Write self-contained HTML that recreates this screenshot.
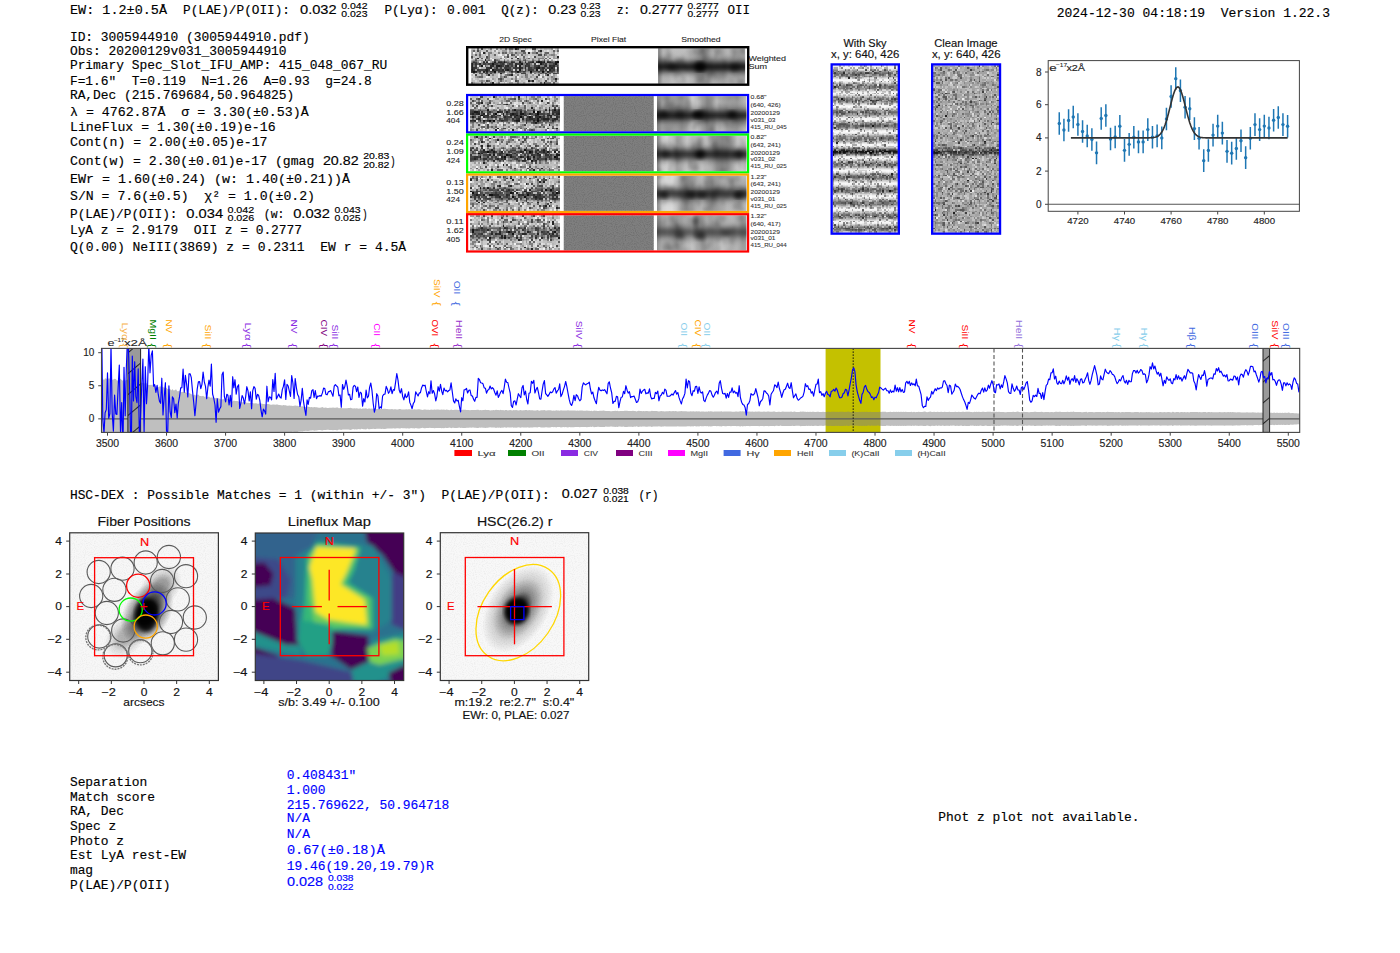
<!DOCTYPE html>
<html><head><meta charset="utf-8"><title>report</title>
<style>html,body{margin:0;padding:0;background:#fff;width:1400px;height:953px;overflow:hidden}svg{display:block} text{white-space:pre}</style>
</head><body>
<svg width="1400" height="953" viewBox="0 0 1400 953">
<rect width="1400" height="953" fill="#fff"/>
<text x="70.00" y="13.80" font-family="'Liberation Mono', monospace" font-size="12.9" fill="#000" textLength="97.00" lengthAdjust="spacingAndGlyphs" stroke="#000" stroke-width="0.15" >EW: 1.2±0.5Å</text>
<text x="183.00" y="13.80" font-family="'Liberation Mono', monospace" font-size="12.9" fill="#000" textLength="107.00" lengthAdjust="spacingAndGlyphs" stroke="#000" stroke-width="0.15" >P(LAE)/P(OII):</text>
<text x="300.00" y="13.80" font-family="'Liberation Sans', sans-serif" font-size="13.3" fill="#000" textLength="36.60" lengthAdjust="spacingAndGlyphs" stroke="#000" stroke-width="0.15" >0.032</text>
<text x="341.30" y="8.75" font-family="'Liberation Sans', sans-serif" font-size="9" fill="#000" textLength="26.20" lengthAdjust="spacingAndGlyphs" stroke="#000" stroke-width="0.15" >0.042</text>
<text x="341.30" y="16.90" font-family="'Liberation Sans', sans-serif" font-size="9" fill="#000" textLength="26.20" lengthAdjust="spacingAndGlyphs" stroke="#000" stroke-width="0.15" >0.023</text>
<text x="384.40" y="13.80" font-family="'Liberation Mono', monospace" font-size="12.9" fill="#000" textLength="53.20" lengthAdjust="spacingAndGlyphs" stroke="#000" stroke-width="0.15" >P(Lyα):</text>
<text x="446.90" y="13.80" font-family="'Liberation Mono', monospace" font-size="12.9" fill="#000" textLength="38.70" lengthAdjust="spacingAndGlyphs" stroke="#000" stroke-width="0.15" >0.001</text>
<text x="501.30" y="13.80" font-family="'Liberation Mono', monospace" font-size="12.9" fill="#000" textLength="37.30" lengthAdjust="spacingAndGlyphs" stroke="#000" stroke-width="0.15" >Q(z):</text>
<text x="548.15" y="13.80" font-family="'Liberation Sans', sans-serif" font-size="13.3" fill="#000" textLength="28.05" lengthAdjust="spacingAndGlyphs" stroke="#000" stroke-width="0.15" >0.23</text>
<text x="580.40" y="8.75" font-family="'Liberation Sans', sans-serif" font-size="9" fill="#000" textLength="20.20" lengthAdjust="spacingAndGlyphs" stroke="#000" stroke-width="0.15" >0.23</text>
<text x="580.40" y="16.90" font-family="'Liberation Sans', sans-serif" font-size="9" fill="#000" textLength="20.20" lengthAdjust="spacingAndGlyphs" stroke="#000" stroke-width="0.15" >0.23</text>
<text x="616.90" y="13.80" font-family="'Liberation Mono', monospace" font-size="12.9" fill="#000" textLength="13.10" lengthAdjust="spacingAndGlyphs" stroke="#000" stroke-width="0.15" >z:</text>
<text x="640.00" y="13.80" font-family="'Liberation Sans', sans-serif" font-size="13.3" fill="#000" textLength="43.10" lengthAdjust="spacingAndGlyphs" stroke="#000" stroke-width="0.15" >0.2777</text>
<text x="687.40" y="8.75" font-family="'Liberation Sans', sans-serif" font-size="9" fill="#000" textLength="31.20" lengthAdjust="spacingAndGlyphs" stroke="#000" stroke-width="0.15" >0.2777</text>
<text x="687.40" y="16.90" font-family="'Liberation Sans', sans-serif" font-size="9" fill="#000" textLength="31.20" lengthAdjust="spacingAndGlyphs" stroke="#000" stroke-width="0.15" >0.2777</text>
<text x="727.40" y="13.80" font-family="'Liberation Mono', monospace" font-size="12.9" fill="#000" textLength="22.60" lengthAdjust="spacingAndGlyphs" stroke="#000" stroke-width="0.15" >OII</text>
<text x="1056.65" y="16.50" font-family="'Liberation Mono', monospace" font-size="12.9" fill="#000" textLength="273.35" lengthAdjust="spacingAndGlyphs" stroke="#000" stroke-width="0.15" >2024-12-30 04:18:19  Version 1.22.3</text>
<text x="69.90" y="40.60" font-family="'Liberation Mono', monospace" font-size="12.9" fill="#000" textLength="239.94" lengthAdjust="spacingAndGlyphs" stroke="#000" stroke-width="0.15">ID: 3005944910 (3005944910.pdf)</text>
<text x="69.90" y="55.00" font-family="'Liberation Mono', monospace" font-size="12.9" fill="#000" textLength="216.72" lengthAdjust="spacingAndGlyphs" stroke="#000" stroke-width="0.15">Obs: 20200129v031_3005944910</text>
<text x="69.90" y="69.40" font-family="'Liberation Mono', monospace" font-size="12.9" fill="#000" textLength="317.34" lengthAdjust="spacingAndGlyphs" stroke="#000" stroke-width="0.15">Primary Spec_Slot_IFU_AMP: 415_048_067_RU</text>
<text x="69.90" y="84.75" font-family="'Liberation Mono', monospace" font-size="12.9" fill="#000" textLength="301.86" lengthAdjust="spacingAndGlyphs" stroke="#000" stroke-width="0.15">F=1.6"  T=0.119  N=1.26  A=0.93  g=24.8</text>
<text x="69.90" y="99.40" font-family="'Liberation Mono', monospace" font-size="12.9" fill="#000" textLength="224.46" lengthAdjust="spacingAndGlyphs" stroke="#000" stroke-width="0.15">RA,Dec (215.769684,50.964825)</text>
<text x="70.00" y="116.25" font-family="'Liberation Mono', monospace" font-size="12.9" fill="#000" textLength="238.60" lengthAdjust="spacingAndGlyphs" stroke="#000" stroke-width="0.15" >λ = 4762.87Å  σ = 3.30(±0.53)Å</text>
<text x="70.00" y="131.25" font-family="'Liberation Mono', monospace" font-size="12.9" fill="#000" textLength="205.60" lengthAdjust="spacingAndGlyphs" stroke="#000" stroke-width="0.15" >LineFlux = 1.30(±0.19)e-16</text>
<text x="70.00" y="146.25" font-family="'Liberation Mono', monospace" font-size="12.9" fill="#000" textLength="197.50" lengthAdjust="spacingAndGlyphs" stroke="#000" stroke-width="0.15" >Cont(n) = 2.00(±0.05)e-17</text>
<text x="70.00" y="164.60" font-family="'Liberation Mono', monospace" font-size="12.9" fill="#000" textLength="244.35" lengthAdjust="spacingAndGlyphs" stroke="#000" stroke-width="0.15" >Cont(w) = 2.30(±0.01)e-17 (gmag</text>
<text x="322.90" y="164.60" font-family="'Liberation Sans', sans-serif" font-size="13.3" fill="#000" textLength="35.70" lengthAdjust="spacingAndGlyphs" stroke="#000" stroke-width="0.15" >20.82</text>
<text x="363.15" y="158.75" font-family="'Liberation Sans', sans-serif" font-size="9" fill="#000" textLength="26.20" lengthAdjust="spacingAndGlyphs" stroke="#000" stroke-width="0.15" >20.83</text>
<text x="363.15" y="167.75" font-family="'Liberation Sans', sans-serif" font-size="9" fill="#000" textLength="26.20" lengthAdjust="spacingAndGlyphs" stroke="#000" stroke-width="0.15" >20.82</text>
<text x="390.00" y="164.60" font-family="'Liberation Mono', monospace" font-size="12.9" fill="#000" textLength="5.60" lengthAdjust="spacingAndGlyphs" stroke="#000" stroke-width="0.15" >)</text>
<text x="70.00" y="182.50" font-family="'Liberation Mono', monospace" font-size="12.9" fill="#000" textLength="280.00" lengthAdjust="spacingAndGlyphs" stroke="#000" stroke-width="0.15" >EWr = 1.60(±0.24) (w: 1.40(±0.21))Å</text>
<text x="70.00" y="200.00" font-family="'Liberation Mono', monospace" font-size="12.9" fill="#000" textLength="245.00" lengthAdjust="spacingAndGlyphs" stroke="#000" stroke-width="0.15" >S/N = 7.6(±0.5)  χ² = 1.0(±0.2)</text>
<text x="70.00" y="217.50" font-family="'Liberation Mono', monospace" font-size="12.9" fill="#000" textLength="107.50" lengthAdjust="spacingAndGlyphs" stroke="#000" stroke-width="0.15" >P(LAE)/P(OII):</text>
<text x="186.30" y="217.50" font-family="'Liberation Sans', sans-serif" font-size="13.3" fill="#000" textLength="36.80" lengthAdjust="spacingAndGlyphs" stroke="#000" stroke-width="0.15" >0.034</text>
<text x="227.40" y="212.50" font-family="'Liberation Sans', sans-serif" font-size="9" fill="#000" textLength="26.95" lengthAdjust="spacingAndGlyphs" stroke="#000" stroke-width="0.15" >0.042</text>
<text x="227.40" y="221.25" font-family="'Liberation Sans', sans-serif" font-size="9" fill="#000" textLength="26.95" lengthAdjust="spacingAndGlyphs" stroke="#000" stroke-width="0.15" >0.026</text>
<text x="263.80" y="217.50" font-family="'Liberation Mono', monospace" font-size="12.9" fill="#000" textLength="20.55" lengthAdjust="spacingAndGlyphs" stroke="#000" stroke-width="0.15" >(w:</text>
<text x="293.15" y="217.50" font-family="'Liberation Sans', sans-serif" font-size="13.3" fill="#000" textLength="36.85" lengthAdjust="spacingAndGlyphs" stroke="#000" stroke-width="0.15" >0.032</text>
<text x="334.40" y="212.50" font-family="'Liberation Sans', sans-serif" font-size="9" fill="#000" textLength="26.20" lengthAdjust="spacingAndGlyphs" stroke="#000" stroke-width="0.15" >0.043</text>
<text x="334.40" y="221.25" font-family="'Liberation Sans', sans-serif" font-size="9" fill="#000" textLength="26.20" lengthAdjust="spacingAndGlyphs" stroke="#000" stroke-width="0.15" >0.025</text>
<text x="361.90" y="217.50" font-family="'Liberation Mono', monospace" font-size="12.9" fill="#000" textLength="5.60" lengthAdjust="spacingAndGlyphs" stroke="#000" stroke-width="0.15" >)</text>
<text x="69.90" y="234.40" font-family="'Liberation Mono', monospace" font-size="12.9" fill="#000" textLength="232.20" lengthAdjust="spacingAndGlyphs" stroke="#000" stroke-width="0.15">LyA z = 2.9179  OII z = 0.2777</text>
<text x="70.00" y="251.25" font-family="'Liberation Mono', monospace" font-size="12.9" fill="#000" textLength="336.20" lengthAdjust="spacingAndGlyphs" stroke="#000" stroke-width="0.15" >Q(0.00) NeIII(3869) z = 0.2311  EW r = 4.5Å</text>
<defs>
<filter id="fnDark" x="0" y="0" width="100%" height="100%" color-interpolation-filters="sRGB">
 <feTurbulence type="fractalNoise" baseFrequency="0.5" numOctaves="1" seed="4" result="t"/>
 <feColorMatrix in="t" type="matrix" values="0 0 0 0 0  0 0 0 0 0  0 0 0 0 0  -5 0 0 0 2.6"/>
 <feComposite in2="SourceAlpha" operator="in"/>
</filter>
<filter id="fnLight" x="0" y="0" width="100%" height="100%" color-interpolation-filters="sRGB">
 <feTurbulence type="fractalNoise" baseFrequency="0.5" numOctaves="1" seed="9" result="t"/>
 <feColorMatrix in="t" type="matrix" values="0 0 0 0 1  0 0 0 0 1  0 0 0 0 1  -5 0 0 0 2.6"/>
 <feComposite in2="SourceAlpha" operator="in"/>
</filter>
<filter id="fnFine" x="0" y="0" width="100%" height="100%" color-interpolation-filters="sRGB">
 <feTurbulence type="fractalNoise" baseFrequency="0.9" numOctaves="1" seed="2" result="t"/>
 <feColorMatrix in="t" type="matrix" values="0 0 0 0 0  0 0 0 0 0  0 0 0 0 0  -3 0 0 0 1.7"/>
 <feComposite in2="SourceAlpha" operator="in"/>
</filter>
<filter id="fnSmooth" x="0" y="0" width="100%" height="100%" color-interpolation-filters="sRGB">
 <feTurbulence type="fractalNoise" baseFrequency="0.11 0.07" numOctaves="2" seed="7" result="t"/>
 <feColorMatrix in="t" type="matrix" values="0 0 0 0 0  0 0 0 0 0  0 0 0 0 0  -2.2 0 0 0 1.25"/>
 <feGaussianBlur stdDeviation="1.6"/>
 <feComposite in2="SourceAlpha" operator="in"/>
</filter>
<filter id="blur1"><feGaussianBlur stdDeviation="1.2"/></filter>
<filter id="blur2"><feGaussianBlur stdDeviation="2"/></filter>
<filter id="blur3"><feGaussianBlur stdDeviation="3.5"/></filter>
<pattern id="hatch" width="16" height="16" patternUnits="userSpaceOnUse" patternTransform="rotate(50)">
 <rect width="16" height="16" fill="#9a9a9a"/>
 <line x1="0.5" y1="0" x2="0.5" y2="16" stroke="#222" stroke-width="1"/>
</pattern>
</defs>
<text x="499.15" y="41.75" font-family="'Liberation Sans', sans-serif" font-size="7.6" fill="#222" textLength="32.70" lengthAdjust="spacingAndGlyphs" stroke="#222" stroke-width="0.09" >2D Spec</text>
<text x="591.10" y="41.75" font-family="'Liberation Sans', sans-serif" font-size="7.6" fill="#222" textLength="35.10" lengthAdjust="spacingAndGlyphs" stroke="#222" stroke-width="0.09" >Pixel Flat</text>
<text x="681.30" y="41.75" font-family="'Liberation Sans', sans-serif" font-size="7.6" fill="#222" textLength="39.30" lengthAdjust="spacingAndGlyphs" stroke="#222" stroke-width="0.09" >Smoothed</text>
<text x="748.40" y="61.00" font-family="'Liberation Sans', sans-serif" font-size="7.8" fill="#222" textLength="37.70" lengthAdjust="spacingAndGlyphs" stroke="#222" stroke-width="0.09" >Weighted</text>
<text x="748.40" y="69.25" font-family="'Liberation Sans', sans-serif" font-size="7.8" fill="#222" textLength="18.70" lengthAdjust="spacingAndGlyphs" stroke="#222" stroke-width="0.09" >Sum</text>
<linearGradient id="gWS" x1="0" y1="0" x2="0" y2="1"><stop offset="0" stop-color="#b8b8b8"/><stop offset="0.320" stop-color="#b8b8b8"/><stop offset="0.400" stop-color="#404040"/><stop offset="0.640" stop-color="#404040"/><stop offset="0.720" stop-color="#b8b8b8"/><stop offset="1" stop-color="#b8b8b8"/></linearGradient>
<rect x="471.25" y="48.2" width="87.5" height="35.599999999999994" fill="url(#gWS)"/>
<g transform="translate(471.25 48.20) scale(1.9022 1.8737)" shape-rendering="crispEdges"><path fill="#fff" fill-opacity="0.45" d="M2 0h1v1h-1zM8 0h1v1h-1zM11 0h1v1h-1zM31 0h1v1h-1zM35 0h1v1h-1zM11 1h1v1h-1zM19 1h1v1h-1zM22 1h1v1h-1zM34 1h1v1h-1zM38 1h1v1h-1zM29 2h1v1h-1zM37 2h1v1h-1zM8 3h1v1h-1zM7 4h1v1h-1zM32 4h1v1h-1zM39 4h1v1h-1zM1 5h1v1h-1zM6 5h1v1h-1zM20 5h1v1h-1zM23 5h1v1h-1zM40 5h1v1h-1zM6 6h1v1h-1zM16 6h1v1h-1zM20 6h1v1h-1zM5 7h1v1h-1zM7 7h1v1h-1zM10 7h1v1h-1zM23 7h1v1h-1zM24 7h1v1h-1zM27 7h1v1h-1zM29 7h1v1h-1zM33 7h1v1h-1zM39 7h1v1h-1zM22 8h1v1h-1zM40 8h1v1h-1zM8 9h1v1h-1zM26 9h1v1h-1zM40 9h1v1h-1zM11 10h1v1h-1zM16 10h1v1h-1zM29 10h1v1h-1zM2 11h1v1h-1zM38 11h1v1h-1zM44 11h1v1h-1zM5 12h1v1h-1zM18 12h1v1h-1zM1 14h1v1h-1zM36 14h1v1h-1zM0 15h1v1h-1zM20 15h1v1h-1zM35 15h1v1h-1zM39 15h1v1h-1zM45 15h1v1h-1zM1 16h1v1h-1zM6 16h1v1h-1zM10 16h1v1h-1zM39 16h1v1h-1zM2 17h1v1h-1zM11 17h1v1h-1zM22 17h1v1h-1zM29 17h1v1h-1zM33 17h1v1h-1zM41 17h1v1h-1zM12 18h1v1h-1zM15 18h1v1h-1zM16 18h1v1h-1zM29 18h1v1h-1zM31 18h1v1h-1zM42 18h1v1h-1z"/><path fill="#000" fill-opacity="0.45" d="M3 0h1v1h-1zM18 0h1v1h-1zM20 0h1v1h-1zM21 0h1v1h-1zM1 1h1v1h-1zM8 1h1v1h-1zM35 1h1v1h-1zM43 1h1v1h-1zM45 1h1v1h-1zM16 2h1v1h-1zM18 2h1v1h-1zM23 2h1v1h-1zM27 2h1v1h-1zM28 2h1v1h-1zM39 2h1v1h-1zM40 2h1v1h-1zM2 3h1v1h-1zM4 3h1v1h-1zM12 3h1v1h-1zM19 3h1v1h-1zM22 3h1v1h-1zM26 3h1v1h-1zM23 4h1v1h-1zM27 4h1v1h-1zM5 5h1v1h-1zM8 5h1v1h-1zM30 5h1v1h-1zM39 5h1v1h-1zM41 5h1v1h-1zM2 6h1v1h-1zM28 6h1v1h-1zM38 6h1v1h-1zM12 7h1v1h-1zM32 7h1v1h-1zM34 7h1v1h-1zM40 7h1v1h-1zM0 8h1v1h-1zM0 9h1v1h-1zM13 9h1v1h-1zM23 9h1v1h-1zM25 9h1v1h-1zM0 10h1v1h-1zM10 10h1v1h-1zM25 10h1v1h-1zM34 10h1v1h-1zM42 10h1v1h-1zM8 11h1v1h-1zM41 11h1v1h-1zM21 12h1v1h-1zM4 13h1v1h-1zM5 13h1v1h-1zM7 13h1v1h-1zM31 13h1v1h-1zM36 13h1v1h-1zM41 13h1v1h-1zM45 13h1v1h-1zM19 14h1v1h-1zM28 14h1v1h-1zM4 15h1v1h-1zM5 15h1v1h-1zM18 15h1v1h-1zM14 16h1v1h-1zM9 17h1v1h-1zM15 17h1v1h-1zM24 17h1v1h-1zM31 17h1v1h-1zM44 17h1v1h-1zM0 18h1v1h-1zM5 18h1v1h-1zM36 18h1v1h-1zM43 18h1v1h-1z"/><path fill="#fff" fill-opacity="0.3" d="M4 0h1v1h-1zM14 0h1v1h-1zM26 0h1v1h-1zM27 0h1v1h-1zM29 0h1v1h-1zM37 0h1v1h-1zM44 0h1v1h-1zM5 1h1v1h-1zM9 1h1v1h-1zM15 1h1v1h-1zM39 1h1v1h-1zM41 1h1v1h-1zM8 2h1v1h-1zM12 2h1v1h-1zM13 2h1v1h-1zM15 2h1v1h-1zM41 2h1v1h-1zM6 3h1v1h-1zM13 3h1v1h-1zM25 3h1v1h-1zM30 3h1v1h-1zM31 3h1v1h-1zM2 4h1v1h-1zM14 4h1v1h-1zM20 4h1v1h-1zM26 4h1v1h-1zM41 4h1v1h-1zM42 4h1v1h-1zM4 5h1v1h-1zM16 5h1v1h-1zM22 5h1v1h-1zM15 6h1v1h-1zM18 6h1v1h-1zM31 6h1v1h-1zM36 6h1v1h-1zM39 6h1v1h-1zM45 6h1v1h-1zM3 7h1v1h-1zM13 7h1v1h-1zM20 7h1v1h-1zM5 8h1v1h-1zM27 8h1v1h-1zM28 8h1v1h-1zM31 8h1v1h-1zM1 9h1v1h-1zM12 9h1v1h-1zM17 9h1v1h-1zM22 9h1v1h-1zM27 9h1v1h-1zM31 9h1v1h-1zM32 9h1v1h-1zM36 9h1v1h-1zM37 9h1v1h-1zM3 10h1v1h-1zM14 10h1v1h-1zM21 10h1v1h-1zM27 10h1v1h-1zM39 10h1v1h-1zM17 11h1v1h-1zM26 11h1v1h-1zM29 11h1v1h-1zM33 11h1v1h-1zM13 12h1v1h-1zM19 12h1v1h-1zM29 12h1v1h-1zM30 12h1v1h-1zM44 12h1v1h-1zM2 13h1v1h-1zM14 13h1v1h-1zM25 13h1v1h-1zM42 13h1v1h-1zM16 14h1v1h-1zM25 14h1v1h-1zM33 14h1v1h-1zM1 15h1v1h-1zM21 15h1v1h-1zM22 15h1v1h-1zM4 16h1v1h-1zM13 16h1v1h-1zM17 16h1v1h-1zM24 16h1v1h-1zM26 16h1v1h-1zM31 16h1v1h-1zM32 16h1v1h-1zM37 16h1v1h-1zM13 17h1v1h-1zM25 17h1v1h-1zM28 17h1v1h-1zM37 17h1v1h-1zM22 18h1v1h-1zM33 18h1v1h-1z"/><path fill="#000" fill-opacity="0.6" d="M5 0h1v1h-1zM24 0h1v1h-1zM32 0h1v1h-1zM33 0h1v1h-1zM3 1h1v1h-1zM26 1h1v1h-1zM27 1h1v1h-1zM34 2h1v1h-1zM21 3h1v1h-1zM35 3h1v1h-1zM36 3h1v1h-1zM38 3h1v1h-1zM0 4h1v1h-1zM8 4h1v1h-1zM19 4h1v1h-1zM33 4h1v1h-1zM21 5h1v1h-1zM12 6h1v1h-1zM17 7h1v1h-1zM25 7h1v1h-1zM36 7h1v1h-1zM38 7h1v1h-1zM44 7h1v1h-1zM11 8h1v1h-1zM26 8h1v1h-1zM36 8h1v1h-1zM44 8h1v1h-1zM5 9h1v1h-1zM14 9h1v1h-1zM35 10h1v1h-1zM0 11h1v1h-1zM11 11h1v1h-1zM19 11h1v1h-1zM25 11h1v1h-1zM34 11h1v1h-1zM0 12h1v1h-1zM2 12h1v1h-1zM6 12h1v1h-1zM8 12h1v1h-1zM40 12h1v1h-1zM8 13h1v1h-1zM10 13h1v1h-1zM26 13h1v1h-1zM27 13h1v1h-1zM28 13h1v1h-1zM39 13h1v1h-1zM43 13h1v1h-1zM44 13h1v1h-1zM2 14h1v1h-1zM20 14h1v1h-1zM35 14h1v1h-1zM17 15h1v1h-1zM34 15h1v1h-1zM15 16h1v1h-1zM8 17h1v1h-1zM23 17h1v1h-1zM39 17h1v1h-1z"/><path fill="#000" fill-opacity="0.3" d="M10 0h1v1h-1zM13 0h1v1h-1zM4 2h1v1h-1zM7 2h1v1h-1zM9 2h1v1h-1zM10 2h1v1h-1zM14 2h1v1h-1zM17 2h1v1h-1zM21 2h1v1h-1zM32 2h1v1h-1zM33 2h1v1h-1zM9 3h1v1h-1zM39 3h1v1h-1zM42 3h1v1h-1zM43 3h1v1h-1zM4 4h1v1h-1zM9 4h1v1h-1zM17 4h1v1h-1zM0 5h1v1h-1zM2 5h1v1h-1zM9 5h1v1h-1zM15 5h1v1h-1zM27 5h1v1h-1zM35 5h1v1h-1zM36 5h1v1h-1zM37 5h1v1h-1zM45 5h1v1h-1zM9 6h1v1h-1zM13 6h1v1h-1zM17 6h1v1h-1zM24 6h1v1h-1zM25 6h1v1h-1zM27 6h1v1h-1zM32 6h1v1h-1zM35 6h1v1h-1zM6 7h1v1h-1zM8 7h1v1h-1zM14 7h1v1h-1zM15 7h1v1h-1zM21 7h1v1h-1zM28 7h1v1h-1zM37 7h1v1h-1zM41 7h1v1h-1zM4 8h1v1h-1zM23 8h1v1h-1zM10 9h1v1h-1zM11 9h1v1h-1zM15 9h1v1h-1zM19 9h1v1h-1zM28 9h1v1h-1zM35 9h1v1h-1zM39 9h1v1h-1zM41 9h1v1h-1zM43 9h1v1h-1zM13 10h1v1h-1zM28 10h1v1h-1zM37 10h1v1h-1zM45 10h1v1h-1zM7 11h1v1h-1zM16 11h1v1h-1zM18 11h1v1h-1zM45 11h1v1h-1zM4 12h1v1h-1zM10 12h1v1h-1zM11 12h1v1h-1zM14 12h1v1h-1zM15 12h1v1h-1zM16 12h1v1h-1zM17 12h1v1h-1zM23 12h1v1h-1zM25 12h1v1h-1zM27 12h1v1h-1zM35 12h1v1h-1zM41 12h1v1h-1zM42 12h1v1h-1zM45 12h1v1h-1zM1 13h1v1h-1zM12 13h1v1h-1zM21 13h1v1h-1zM33 13h1v1h-1zM37 13h1v1h-1zM5 14h1v1h-1zM8 14h1v1h-1zM11 14h1v1h-1zM18 14h1v1h-1zM24 14h1v1h-1zM29 14h1v1h-1zM39 14h1v1h-1zM3 15h1v1h-1zM15 15h1v1h-1zM23 15h1v1h-1zM28 15h1v1h-1zM29 15h1v1h-1zM37 15h1v1h-1zM42 15h1v1h-1zM16 16h1v1h-1zM21 16h1v1h-1zM23 16h1v1h-1zM33 16h1v1h-1zM40 16h1v1h-1zM43 16h1v1h-1zM5 17h1v1h-1zM7 18h1v1h-1zM10 18h1v1h-1zM14 18h1v1h-1zM24 18h1v1h-1zM39 18h1v1h-1zM40 18h1v1h-1zM41 18h1v1h-1z"/><path fill="#fff" fill-opacity="0.6" d="M12 0h1v1h-1zM30 0h1v1h-1zM13 1h1v1h-1zM40 1h1v1h-1zM44 2h1v1h-1zM14 3h1v1h-1zM18 3h1v1h-1zM20 3h1v1h-1zM45 3h1v1h-1zM30 4h1v1h-1zM10 5h1v1h-1zM17 5h1v1h-1zM19 5h1v1h-1zM42 5h1v1h-1zM41 6h1v1h-1zM43 6h1v1h-1zM18 8h1v1h-1zM32 8h1v1h-1zM35 8h1v1h-1zM9 9h1v1h-1zM5 10h1v1h-1zM6 10h1v1h-1zM7 10h1v1h-1zM24 11h1v1h-1zM27 11h1v1h-1zM35 11h1v1h-1zM0 13h1v1h-1zM32 13h1v1h-1zM14 14h1v1h-1zM42 14h1v1h-1zM9 15h1v1h-1zM14 15h1v1h-1zM7 16h1v1h-1zM45 17h1v1h-1zM18 18h1v1h-1z"/><path fill="#000" fill-opacity="0.15" d="M15 0h1v1h-1zM22 0h1v1h-1zM28 0h1v1h-1zM42 0h1v1h-1zM45 0h1v1h-1zM0 1h1v1h-1zM4 1h1v1h-1zM12 1h1v1h-1zM16 1h1v1h-1zM17 1h1v1h-1zM18 1h1v1h-1zM20 1h1v1h-1zM33 1h1v1h-1zM0 2h1v1h-1zM20 2h1v1h-1zM24 2h1v1h-1zM25 2h1v1h-1zM26 2h1v1h-1zM36 2h1v1h-1zM38 2h1v1h-1zM43 2h1v1h-1zM0 3h1v1h-1zM24 3h1v1h-1zM28 3h1v1h-1zM41 3h1v1h-1zM18 4h1v1h-1zM37 4h1v1h-1zM38 4h1v1h-1zM40 4h1v1h-1zM43 4h1v1h-1zM25 5h1v1h-1zM29 5h1v1h-1zM32 5h1v1h-1zM43 5h1v1h-1zM44 5h1v1h-1zM8 6h1v1h-1zM14 6h1v1h-1zM40 6h1v1h-1zM1 7h1v1h-1zM22 7h1v1h-1zM31 7h1v1h-1zM2 8h1v1h-1zM16 8h1v1h-1zM25 8h1v1h-1zM29 8h1v1h-1zM18 9h1v1h-1zM30 9h1v1h-1zM42 9h1v1h-1zM1 10h1v1h-1zM2 10h1v1h-1zM8 10h1v1h-1zM9 10h1v1h-1zM18 10h1v1h-1zM23 10h1v1h-1zM26 10h1v1h-1zM30 10h1v1h-1zM38 10h1v1h-1zM41 10h1v1h-1zM1 11h1v1h-1zM3 11h1v1h-1zM12 11h1v1h-1zM13 11h1v1h-1zM14 11h1v1h-1zM30 11h1v1h-1zM31 11h1v1h-1zM37 11h1v1h-1zM43 11h1v1h-1zM28 12h1v1h-1zM38 12h1v1h-1zM9 13h1v1h-1zM11 13h1v1h-1zM16 13h1v1h-1zM23 13h1v1h-1zM35 13h1v1h-1zM38 13h1v1h-1zM40 13h1v1h-1zM15 14h1v1h-1zM32 14h1v1h-1zM43 14h1v1h-1zM2 15h1v1h-1zM16 15h1v1h-1zM26 15h1v1h-1zM31 15h1v1h-1zM43 15h1v1h-1zM11 16h1v1h-1zM29 16h1v1h-1zM30 16h1v1h-1zM34 16h1v1h-1zM42 16h1v1h-1zM45 16h1v1h-1zM4 17h1v1h-1zM6 17h1v1h-1zM14 17h1v1h-1zM16 17h1v1h-1zM18 17h1v1h-1zM35 17h1v1h-1zM42 17h1v1h-1zM1 18h1v1h-1zM20 18h1v1h-1zM21 18h1v1h-1zM27 18h1v1h-1z"/><path fill="#000" fill-opacity="0.8" d="M23 0h1v1h-1zM36 1h1v1h-1zM6 2h1v1h-1zM30 2h1v1h-1zM45 4h1v1h-1zM3 5h1v1h-1zM24 5h1v1h-1zM7 6h1v1h-1zM35 7h1v1h-1zM45 7h1v1h-1zM1 12h1v1h-1zM12 12h1v1h-1zM24 12h1v1h-1zM31 12h1v1h-1zM37 12h1v1h-1zM15 13h1v1h-1zM9 14h1v1h-1zM21 14h1v1h-1zM40 14h1v1h-1zM44 16h1v1h-1zM30 17h1v1h-1zM32 17h1v1h-1zM11 18h1v1h-1zM38 18h1v1h-1z"/><path fill="#fff" fill-opacity="0.15" d="M34 0h1v1h-1zM40 0h1v1h-1zM2 1h1v1h-1zM6 1h1v1h-1zM7 1h1v1h-1zM14 1h1v1h-1zM23 1h1v1h-1zM25 1h1v1h-1zM28 1h1v1h-1zM32 1h1v1h-1zM37 1h1v1h-1zM42 1h1v1h-1zM3 2h1v1h-1zM11 2h1v1h-1zM19 2h1v1h-1zM31 2h1v1h-1zM42 2h1v1h-1zM45 2h1v1h-1zM1 3h1v1h-1zM5 3h1v1h-1zM10 3h1v1h-1zM17 3h1v1h-1zM32 3h1v1h-1zM33 3h1v1h-1zM37 3h1v1h-1zM3 4h1v1h-1zM6 4h1v1h-1zM10 4h1v1h-1zM11 4h1v1h-1zM13 4h1v1h-1zM15 4h1v1h-1zM25 4h1v1h-1zM28 4h1v1h-1zM29 4h1v1h-1zM31 4h1v1h-1zM26 5h1v1h-1zM38 5h1v1h-1zM0 6h1v1h-1zM4 6h1v1h-1zM10 6h1v1h-1zM22 6h1v1h-1zM26 6h1v1h-1zM30 6h1v1h-1zM34 6h1v1h-1zM0 7h1v1h-1zM11 7h1v1h-1zM19 7h1v1h-1zM26 7h1v1h-1zM43 7h1v1h-1zM1 8h1v1h-1zM3 8h1v1h-1zM8 8h1v1h-1zM14 8h1v1h-1zM17 8h1v1h-1zM19 8h1v1h-1zM38 8h1v1h-1zM41 8h1v1h-1zM42 8h1v1h-1zM45 8h1v1h-1zM4 9h1v1h-1zM7 9h1v1h-1zM20 9h1v1h-1zM44 9h1v1h-1zM12 10h1v1h-1zM32 10h1v1h-1zM21 11h1v1h-1zM39 12h1v1h-1zM3 13h1v1h-1zM13 13h1v1h-1zM17 13h1v1h-1zM24 13h1v1h-1zM30 13h1v1h-1zM3 14h1v1h-1zM4 14h1v1h-1zM6 14h1v1h-1zM7 14h1v1h-1zM13 14h1v1h-1zM23 14h1v1h-1zM30 14h1v1h-1zM31 14h1v1h-1zM34 14h1v1h-1zM41 14h1v1h-1zM7 15h1v1h-1zM10 15h1v1h-1zM12 15h1v1h-1zM19 15h1v1h-1zM25 15h1v1h-1zM30 15h1v1h-1zM38 15h1v1h-1zM44 15h1v1h-1zM2 16h1v1h-1zM5 16h1v1h-1zM8 16h1v1h-1zM9 16h1v1h-1zM18 16h1v1h-1zM27 16h1v1h-1zM35 16h1v1h-1zM41 16h1v1h-1zM1 17h1v1h-1zM3 17h1v1h-1zM7 17h1v1h-1zM17 17h1v1h-1zM27 17h1v1h-1zM40 17h1v1h-1zM4 18h1v1h-1zM6 18h1v1h-1zM9 18h1v1h-1zM19 18h1v1h-1zM26 18h1v1h-1zM28 18h1v1h-1zM45 18h1v1h-1z"/><path fill="#fff" fill-opacity="0.8" d="M43 0h1v1h-1zM29 1h1v1h-1zM30 1h1v1h-1zM31 1h1v1h-1zM1 2h1v1h-1zM5 2h1v1h-1zM15 3h1v1h-1zM16 4h1v1h-1zM24 4h1v1h-1zM11 6h1v1h-1zM44 6h1v1h-1zM4 7h1v1h-1zM9 7h1v1h-1zM34 8h1v1h-1zM3 9h1v1h-1zM6 9h1v1h-1zM24 9h1v1h-1zM4 10h1v1h-1zM44 10h1v1h-1zM10 11h1v1h-1zM22 11h1v1h-1zM40 11h1v1h-1zM18 13h1v1h-1zM22 13h1v1h-1zM38 14h1v1h-1zM45 14h1v1h-1zM8 15h1v1h-1zM24 15h1v1h-1zM36 15h1v1h-1zM21 17h1v1h-1z"/></g>
<linearGradient id="smWs" x1="0" y1="0" x2="1" y2="0"><stop offset="0.000" stop-color="#818181"/><stop offset="0.057" stop-color="#b6b6b6"/><stop offset="0.115" stop-color="#b7b7b7"/><stop offset="0.172" stop-color="#c0c0c0"/><stop offset="0.230" stop-color="#bfbfbf"/><stop offset="0.287" stop-color="#bebebe"/><stop offset="0.345" stop-color="#c3c3c3"/><stop offset="0.402" stop-color="#b5b5b5"/><stop offset="0.460" stop-color="#a0a0a0"/><stop offset="0.517" stop-color="#929292"/><stop offset="0.575" stop-color="#9b9b9b"/><stop offset="0.632" stop-color="#b2b2b2"/><stop offset="0.690" stop-color="#acacac"/><stop offset="0.747" stop-color="#a9a9a9"/><stop offset="0.805" stop-color="#b7b7b7"/><stop offset="0.862" stop-color="#aeaeae"/><stop offset="0.920" stop-color="#a3a3a3"/><stop offset="0.977" stop-color="#a9a9a9"/><stop offset="1.000" stop-color="#b5b5b5"/><stop offset="1.000" stop-color="#8d8d8d"/></linearGradient>
<linearGradient id="smWb" x1="0" y1="0" x2="0" y2="1"><stop offset="0.000" stop-color="#000" stop-opacity="0.000"/><stop offset="0.050" stop-color="#000" stop-opacity="0.001"/><stop offset="0.100" stop-color="#000" stop-opacity="0.004"/><stop offset="0.150" stop-color="#000" stop-opacity="0.014"/><stop offset="0.200" stop-color="#000" stop-opacity="0.039"/><stop offset="0.250" stop-color="#000" stop-opacity="0.093"/><stop offset="0.300" stop-color="#000" stop-opacity="0.191"/><stop offset="0.350" stop-color="#000" stop-opacity="0.340"/><stop offset="0.400" stop-color="#000" stop-opacity="0.522"/><stop offset="0.450" stop-color="#000" stop-opacity="0.692"/><stop offset="0.500" stop-color="#000" stop-opacity="0.791"/><stop offset="0.550" stop-color="#000" stop-opacity="0.779"/><stop offset="0.600" stop-color="#000" stop-opacity="0.662"/><stop offset="0.650" stop-color="#000" stop-opacity="0.485"/><stop offset="0.700" stop-color="#000" stop-opacity="0.307"/><stop offset="0.750" stop-color="#000" stop-opacity="0.167"/><stop offset="0.800" stop-color="#000" stop-opacity="0.079"/><stop offset="0.850" stop-color="#000" stop-opacity="0.032"/><stop offset="0.900" stop-color="#000" stop-opacity="0.011"/><stop offset="0.950" stop-color="#000" stop-opacity="0.003"/><stop offset="1.000" stop-color="#000" stop-opacity="0.001"/></linearGradient>
<rect x="658.1" y="48.2" width="87" height="35.599999999999994" fill="url(#smWs)"/>
<rect x="658.1" y="48.2" width="87" height="35.599999999999994" fill="#000" filter="url(#fnSmooth)" opacity="0.3"/>
<rect x="658.1" y="48.2" width="87" height="35.599999999999994" fill="url(#smWb)"/>
<svg x="658.1" y="48.2" width="87" height="35.599999999999994" overflow="hidden"><g filter="url(#blur2)"><ellipse cx="41.9" cy="18.5" rx="6" ry="5" fill="#000" opacity="0.9"/><ellipse cx="13.9" cy="18.8" rx="5" ry="3.5" fill="#000" opacity="0.5"/><ellipse cx="76.9" cy="18.8" rx="5" ry="3.5" fill="#000" opacity="0.5"/></g></svg>
<rect x="467.2" y="47.2" width="281.0" height="37.50000000000001" fill="none" stroke="#000" stroke-width="2.4"/>
<linearGradient id="g2d0" x1="0" y1="0" x2="0" y2="1"><stop offset="0" stop-color="#b5b5b5"/><stop offset="0.360" stop-color="#b5b5b5"/><stop offset="0.440" stop-color="#404040"/><stop offset="0.700" stop-color="#404040"/><stop offset="0.780" stop-color="#b5b5b5"/><stop offset="1" stop-color="#b5b5b5"/></linearGradient>
<rect x="470" y="96.10000000000001" width="90" height="35.2" fill="url(#g2d0)"/>
<g transform="translate(470.00 96.10) scale(1.9149 1.8526)" shape-rendering="crispEdges"><path fill="#fff" fill-opacity="0.3" d="M0 0h1v1h-1zM9 0h1v1h-1zM16 0h1v1h-1zM19 0h1v1h-1zM20 0h1v1h-1zM26 0h1v1h-1zM30 0h1v1h-1zM38 0h1v1h-1zM45 0h1v1h-1zM2 1h1v1h-1zM24 1h1v1h-1zM30 1h1v1h-1zM42 1h1v1h-1zM43 1h1v1h-1zM46 1h1v1h-1zM24 2h1v1h-1zM34 2h1v1h-1zM36 2h1v1h-1zM38 2h1v1h-1zM39 2h1v1h-1zM42 2h1v1h-1zM7 3h1v1h-1zM11 3h1v1h-1zM25 3h1v1h-1zM37 3h1v1h-1zM39 3h1v1h-1zM46 3h1v1h-1zM3 4h1v1h-1zM6 4h1v1h-1zM10 4h1v1h-1zM22 4h1v1h-1zM24 4h1v1h-1zM25 4h1v1h-1zM34 4h1v1h-1zM36 4h1v1h-1zM42 4h1v1h-1zM44 4h1v1h-1zM45 4h1v1h-1zM2 5h1v1h-1zM4 5h1v1h-1zM8 5h1v1h-1zM14 5h1v1h-1zM15 5h1v1h-1zM23 5h1v1h-1zM0 6h1v1h-1zM11 6h1v1h-1zM29 6h1v1h-1zM38 6h1v1h-1zM43 6h1v1h-1zM45 6h1v1h-1zM10 7h1v1h-1zM17 7h1v1h-1zM34 7h1v1h-1zM35 7h1v1h-1zM37 7h1v1h-1zM40 7h1v1h-1zM7 8h1v1h-1zM12 8h1v1h-1zM13 8h1v1h-1zM21 8h1v1h-1zM27 8h1v1h-1zM30 8h1v1h-1zM31 8h1v1h-1zM5 9h1v1h-1zM16 9h1v1h-1zM13 10h1v1h-1zM32 10h1v1h-1zM36 10h1v1h-1zM37 10h1v1h-1zM43 10h1v1h-1zM14 11h1v1h-1zM15 11h1v1h-1zM29 11h1v1h-1zM39 11h1v1h-1zM41 11h1v1h-1zM10 12h1v1h-1zM11 12h1v1h-1zM17 12h1v1h-1zM21 12h1v1h-1zM28 12h1v1h-1zM46 12h1v1h-1zM6 13h1v1h-1zM20 13h1v1h-1zM21 13h1v1h-1zM28 13h1v1h-1zM45 13h1v1h-1zM13 14h1v1h-1zM23 14h1v1h-1zM28 14h1v1h-1zM45 14h1v1h-1zM0 15h1v1h-1zM10 15h1v1h-1zM25 15h1v1h-1zM29 15h1v1h-1zM3 16h1v1h-1zM21 16h1v1h-1zM29 16h1v1h-1zM41 16h1v1h-1zM42 16h1v1h-1zM1 17h1v1h-1zM10 17h1v1h-1zM25 17h1v1h-1zM35 17h1v1h-1zM36 17h1v1h-1zM42 17h1v1h-1zM46 17h1v1h-1zM7 18h1v1h-1zM11 18h1v1h-1zM29 18h1v1h-1zM41 18h1v1h-1zM42 18h1v1h-1z"/><path fill="#fff" fill-opacity="0.15" d="M1 0h1v1h-1zM2 0h1v1h-1zM3 0h1v1h-1zM14 0h1v1h-1zM24 0h1v1h-1zM28 0h1v1h-1zM34 0h1v1h-1zM41 0h1v1h-1zM46 0h1v1h-1zM1 1h1v1h-1zM8 1h1v1h-1zM12 1h1v1h-1zM15 1h1v1h-1zM28 1h1v1h-1zM13 2h1v1h-1zM14 2h1v1h-1zM21 2h1v1h-1zM1 3h1v1h-1zM22 3h1v1h-1zM29 3h1v1h-1zM5 4h1v1h-1zM7 4h1v1h-1zM31 4h1v1h-1zM37 4h1v1h-1zM41 4h1v1h-1zM0 5h1v1h-1zM6 5h1v1h-1zM13 5h1v1h-1zM17 5h1v1h-1zM26 5h1v1h-1zM31 5h1v1h-1zM39 5h1v1h-1zM40 5h1v1h-1zM6 6h1v1h-1zM13 6h1v1h-1zM15 6h1v1h-1zM20 6h1v1h-1zM22 6h1v1h-1zM23 6h1v1h-1zM30 6h1v1h-1zM35 6h1v1h-1zM40 6h1v1h-1zM3 7h1v1h-1zM11 7h1v1h-1zM19 7h1v1h-1zM21 7h1v1h-1zM38 7h1v1h-1zM11 8h1v1h-1zM18 8h1v1h-1zM22 8h1v1h-1zM23 8h1v1h-1zM25 8h1v1h-1zM29 8h1v1h-1zM38 8h1v1h-1zM10 9h1v1h-1zM20 9h1v1h-1zM25 9h1v1h-1zM29 9h1v1h-1zM30 9h1v1h-1zM33 9h1v1h-1zM39 9h1v1h-1zM44 9h1v1h-1zM1 10h1v1h-1zM2 10h1v1h-1zM18 10h1v1h-1zM19 10h1v1h-1zM27 10h1v1h-1zM33 10h1v1h-1zM46 10h1v1h-1zM0 11h1v1h-1zM10 11h1v1h-1zM17 11h1v1h-1zM1 12h1v1h-1zM9 12h1v1h-1zM13 12h1v1h-1zM16 12h1v1h-1zM20 12h1v1h-1zM23 12h1v1h-1zM36 12h1v1h-1zM42 12h1v1h-1zM4 13h1v1h-1zM14 13h1v1h-1zM27 13h1v1h-1zM32 13h1v1h-1zM37 13h1v1h-1zM42 13h1v1h-1zM46 13h1v1h-1zM2 14h1v1h-1zM4 14h1v1h-1zM12 14h1v1h-1zM26 14h1v1h-1zM27 14h1v1h-1zM44 14h1v1h-1zM46 14h1v1h-1zM2 15h1v1h-1zM3 15h1v1h-1zM19 15h1v1h-1zM20 15h1v1h-1zM24 15h1v1h-1zM46 15h1v1h-1zM2 16h1v1h-1zM14 16h1v1h-1zM15 16h1v1h-1zM16 16h1v1h-1zM18 16h1v1h-1zM22 16h1v1h-1zM32 16h1v1h-1zM33 16h1v1h-1zM45 16h1v1h-1zM13 17h1v1h-1zM37 17h1v1h-1zM38 17h1v1h-1zM2 18h1v1h-1zM4 18h1v1h-1zM10 18h1v1h-1zM12 18h1v1h-1zM35 18h1v1h-1zM36 18h1v1h-1zM44 18h1v1h-1z"/><path fill="#fff" fill-opacity="0.6" d="M4 0h1v1h-1zM22 0h1v1h-1zM10 1h1v1h-1zM11 1h1v1h-1zM38 1h1v1h-1zM32 2h1v1h-1zM2 3h1v1h-1zM15 3h1v1h-1zM20 3h1v1h-1zM23 3h1v1h-1zM24 3h1v1h-1zM33 3h1v1h-1zM42 3h1v1h-1zM45 3h1v1h-1zM11 4h1v1h-1zM28 4h1v1h-1zM5 5h1v1h-1zM35 5h1v1h-1zM1 6h1v1h-1zM4 6h1v1h-1zM10 6h1v1h-1zM12 6h1v1h-1zM14 7h1v1h-1zM29 7h1v1h-1zM17 8h1v1h-1zM37 8h1v1h-1zM40 8h1v1h-1zM42 8h1v1h-1zM11 9h1v1h-1zM14 9h1v1h-1zM10 10h1v1h-1zM20 10h1v1h-1zM16 11h1v1h-1zM28 11h1v1h-1zM33 11h1v1h-1zM43 11h1v1h-1zM44 11h1v1h-1zM0 12h1v1h-1zM8 12h1v1h-1zM12 12h1v1h-1zM14 12h1v1h-1zM26 12h1v1h-1zM26 13h1v1h-1zM15 14h1v1h-1zM16 14h1v1h-1zM18 14h1v1h-1zM14 15h1v1h-1zM16 15h1v1h-1zM23 15h1v1h-1zM39 16h1v1h-1zM15 17h1v1h-1zM20 17h1v1h-1zM9 18h1v1h-1zM25 18h1v1h-1zM43 18h1v1h-1z"/><path fill="#000" fill-opacity="0.6" d="M5 0h1v1h-1zM6 0h1v1h-1zM4 1h1v1h-1zM23 1h1v1h-1zM25 1h1v1h-1zM39 1h1v1h-1zM1 2h1v1h-1zM29 2h1v1h-1zM4 3h1v1h-1zM10 3h1v1h-1zM27 3h1v1h-1zM40 3h1v1h-1zM9 4h1v1h-1zM18 4h1v1h-1zM3 5h1v1h-1zM11 5h1v1h-1zM43 5h1v1h-1zM45 5h1v1h-1zM41 6h1v1h-1zM44 6h1v1h-1zM39 7h1v1h-1zM46 7h1v1h-1zM2 8h1v1h-1zM3 8h1v1h-1zM14 8h1v1h-1zM17 9h1v1h-1zM22 9h1v1h-1zM26 9h1v1h-1zM27 9h1v1h-1zM24 10h1v1h-1zM1 11h1v1h-1zM31 11h1v1h-1zM36 11h1v1h-1zM35 12h1v1h-1zM7 13h1v1h-1zM24 13h1v1h-1zM25 13h1v1h-1zM29 14h1v1h-1zM33 14h1v1h-1zM4 15h1v1h-1zM9 15h1v1h-1zM28 15h1v1h-1zM9 16h1v1h-1zM17 17h1v1h-1zM18 17h1v1h-1zM29 17h1v1h-1zM40 17h1v1h-1zM43 17h1v1h-1zM3 18h1v1h-1zM32 18h1v1h-1z"/><path fill="#fff" fill-opacity="0.45" d="M11 0h1v1h-1zM27 0h1v1h-1zM37 0h1v1h-1zM39 0h1v1h-1zM27 2h1v1h-1zM46 2h1v1h-1zM17 3h1v1h-1zM18 3h1v1h-1zM26 3h1v1h-1zM12 4h1v1h-1zM29 4h1v1h-1zM40 4h1v1h-1zM18 5h1v1h-1zM29 5h1v1h-1zM18 6h1v1h-1zM34 6h1v1h-1zM5 8h1v1h-1zM8 8h1v1h-1zM32 8h1v1h-1zM39 8h1v1h-1zM18 9h1v1h-1zM42 9h1v1h-1zM0 10h1v1h-1zM3 10h1v1h-1zM4 10h1v1h-1zM30 10h1v1h-1zM39 10h1v1h-1zM3 11h1v1h-1zM22 11h1v1h-1zM2 12h1v1h-1zM6 12h1v1h-1zM13 13h1v1h-1zM41 13h1v1h-1zM21 14h1v1h-1zM25 14h1v1h-1zM38 14h1v1h-1zM6 15h1v1h-1zM32 15h1v1h-1zM36 15h1v1h-1zM40 15h1v1h-1zM31 16h1v1h-1zM44 16h1v1h-1zM46 16h1v1h-1zM2 17h1v1h-1zM23 17h1v1h-1zM39 17h1v1h-1zM19 18h1v1h-1zM21 18h1v1h-1z"/><path fill="#000" fill-opacity="0.8" d="M12 0h1v1h-1zM25 0h1v1h-1zM37 2h1v1h-1zM6 3h1v1h-1zM19 4h1v1h-1zM32 6h1v1h-1zM9 7h1v1h-1zM23 7h1v1h-1zM41 7h1v1h-1zM44 7h1v1h-1zM33 8h1v1h-1zM35 8h1v1h-1zM13 9h1v1h-1zM35 9h1v1h-1zM6 10h1v1h-1zM26 11h1v1h-1zM10 13h1v1h-1zM12 13h1v1h-1zM35 13h1v1h-1zM34 14h1v1h-1zM41 15h1v1h-1zM14 17h1v1h-1zM45 17h1v1h-1zM13 18h1v1h-1zM22 18h1v1h-1z"/><path fill="#000" fill-opacity="0.3" d="M13 0h1v1h-1zM29 0h1v1h-1zM32 0h1v1h-1zM33 0h1v1h-1zM35 0h1v1h-1zM36 0h1v1h-1zM44 0h1v1h-1zM5 1h1v1h-1zM18 1h1v1h-1zM20 1h1v1h-1zM33 1h1v1h-1zM41 1h1v1h-1zM45 1h1v1h-1zM2 2h1v1h-1zM4 2h1v1h-1zM26 2h1v1h-1zM28 2h1v1h-1zM30 2h1v1h-1zM44 2h1v1h-1zM9 3h1v1h-1zM16 3h1v1h-1zM41 3h1v1h-1zM43 3h1v1h-1zM1 4h1v1h-1zM14 4h1v1h-1zM15 4h1v1h-1zM20 4h1v1h-1zM39 4h1v1h-1zM43 4h1v1h-1zM9 5h1v1h-1zM25 5h1v1h-1zM44 5h1v1h-1zM14 6h1v1h-1zM36 6h1v1h-1zM46 6h1v1h-1zM0 7h1v1h-1zM1 7h1v1h-1zM5 7h1v1h-1zM15 7h1v1h-1zM18 7h1v1h-1zM24 7h1v1h-1zM25 7h1v1h-1zM45 7h1v1h-1zM4 8h1v1h-1zM15 8h1v1h-1zM36 8h1v1h-1zM46 8h1v1h-1zM3 9h1v1h-1zM21 9h1v1h-1zM23 9h1v1h-1zM31 9h1v1h-1zM43 9h1v1h-1zM45 9h1v1h-1zM5 10h1v1h-1zM8 10h1v1h-1zM9 10h1v1h-1zM15 10h1v1h-1zM35 10h1v1h-1zM40 10h1v1h-1zM7 11h1v1h-1zM11 11h1v1h-1zM18 11h1v1h-1zM23 11h1v1h-1zM35 11h1v1h-1zM42 11h1v1h-1zM45 11h1v1h-1zM25 12h1v1h-1zM27 12h1v1h-1zM31 12h1v1h-1zM32 12h1v1h-1zM45 12h1v1h-1zM0 13h1v1h-1zM1 13h1v1h-1zM5 13h1v1h-1zM9 13h1v1h-1zM16 13h1v1h-1zM23 13h1v1h-1zM29 13h1v1h-1zM1 14h1v1h-1zM11 14h1v1h-1zM20 14h1v1h-1zM24 14h1v1h-1zM36 14h1v1h-1zM37 14h1v1h-1zM39 14h1v1h-1zM41 14h1v1h-1zM42 14h1v1h-1zM43 14h1v1h-1zM1 15h1v1h-1zM18 15h1v1h-1zM22 15h1v1h-1zM27 15h1v1h-1zM45 15h1v1h-1zM1 16h1v1h-1zM20 16h1v1h-1zM25 16h1v1h-1zM26 16h1v1h-1zM34 16h1v1h-1zM4 17h1v1h-1zM8 17h1v1h-1zM12 17h1v1h-1zM16 17h1v1h-1zM24 17h1v1h-1zM28 17h1v1h-1zM44 17h1v1h-1zM0 18h1v1h-1zM16 18h1v1h-1zM39 18h1v1h-1zM45 18h1v1h-1z"/><path fill="#000" fill-opacity="0.15" d="M15 0h1v1h-1zM17 0h1v1h-1zM18 0h1v1h-1zM23 0h1v1h-1zM40 0h1v1h-1zM13 1h1v1h-1zM14 1h1v1h-1zM26 1h1v1h-1zM29 1h1v1h-1zM31 1h1v1h-1zM32 1h1v1h-1zM35 1h1v1h-1zM40 1h1v1h-1zM44 1h1v1h-1zM11 2h1v1h-1zM16 2h1v1h-1zM18 2h1v1h-1zM22 2h1v1h-1zM23 2h1v1h-1zM25 2h1v1h-1zM8 3h1v1h-1zM12 3h1v1h-1zM30 3h1v1h-1zM32 3h1v1h-1zM35 3h1v1h-1zM0 4h1v1h-1zM2 4h1v1h-1zM16 4h1v1h-1zM27 4h1v1h-1zM10 5h1v1h-1zM20 5h1v1h-1zM32 5h1v1h-1zM34 5h1v1h-1zM37 5h1v1h-1zM3 6h1v1h-1zM5 6h1v1h-1zM9 6h1v1h-1zM21 6h1v1h-1zM25 6h1v1h-1zM26 6h1v1h-1zM27 6h1v1h-1zM33 6h1v1h-1zM37 6h1v1h-1zM39 6h1v1h-1zM4 7h1v1h-1zM12 7h1v1h-1zM28 7h1v1h-1zM30 7h1v1h-1zM1 8h1v1h-1zM6 8h1v1h-1zM10 8h1v1h-1zM16 8h1v1h-1zM41 8h1v1h-1zM43 8h1v1h-1zM44 8h1v1h-1zM45 8h1v1h-1zM0 9h1v1h-1zM9 9h1v1h-1zM12 9h1v1h-1zM24 9h1v1h-1zM34 9h1v1h-1zM11 10h1v1h-1zM12 10h1v1h-1zM23 10h1v1h-1zM26 10h1v1h-1zM28 10h1v1h-1zM29 10h1v1h-1zM9 11h1v1h-1zM13 11h1v1h-1zM21 11h1v1h-1zM30 11h1v1h-1zM32 11h1v1h-1zM34 11h1v1h-1zM38 11h1v1h-1zM22 12h1v1h-1zM24 12h1v1h-1zM29 12h1v1h-1zM33 12h1v1h-1zM37 12h1v1h-1zM43 12h1v1h-1zM17 13h1v1h-1zM36 13h1v1h-1zM38 13h1v1h-1zM40 13h1v1h-1zM0 14h1v1h-1zM3 14h1v1h-1zM5 14h1v1h-1zM6 14h1v1h-1zM14 14h1v1h-1zM17 14h1v1h-1zM8 15h1v1h-1zM13 15h1v1h-1zM26 15h1v1h-1zM33 15h1v1h-1zM38 15h1v1h-1zM42 15h1v1h-1zM43 15h1v1h-1zM0 16h1v1h-1zM8 16h1v1h-1zM10 16h1v1h-1zM12 16h1v1h-1zM17 16h1v1h-1zM24 16h1v1h-1zM27 16h1v1h-1zM35 16h1v1h-1zM37 16h1v1h-1zM0 17h1v1h-1zM3 17h1v1h-1zM6 17h1v1h-1zM21 17h1v1h-1zM27 17h1v1h-1zM31 17h1v1h-1zM33 17h1v1h-1zM1 18h1v1h-1zM15 18h1v1h-1zM17 18h1v1h-1zM20 18h1v1h-1zM30 18h1v1h-1z"/><path fill="#fff" fill-opacity="0.8" d="M42 0h1v1h-1zM5 2h1v1h-1zM40 2h1v1h-1zM36 3h1v1h-1zM23 4h1v1h-1zM26 4h1v1h-1zM46 4h1v1h-1zM24 5h1v1h-1zM19 6h1v1h-1zM34 8h1v1h-1zM8 9h1v1h-1zM15 9h1v1h-1zM16 10h1v1h-1zM31 10h1v1h-1zM6 11h1v1h-1zM7 12h1v1h-1zM3 13h1v1h-1zM9 14h1v1h-1zM22 14h1v1h-1zM7 15h1v1h-1zM5 17h1v1h-1zM7 17h1v1h-1zM30 17h1v1h-1zM14 18h1v1h-1zM26 18h1v1h-1zM40 18h1v1h-1z"/><path fill="#000" fill-opacity="0.45" d="M0 1h1v1h-1zM3 1h1v1h-1zM9 1h1v1h-1zM21 1h1v1h-1zM22 1h1v1h-1zM34 1h1v1h-1zM6 2h1v1h-1zM10 2h1v1h-1zM19 2h1v1h-1zM20 2h1v1h-1zM35 2h1v1h-1zM0 3h1v1h-1zM3 3h1v1h-1zM5 3h1v1h-1zM21 3h1v1h-1zM31 3h1v1h-1zM4 4h1v1h-1zM17 4h1v1h-1zM1 5h1v1h-1zM7 5h1v1h-1zM22 5h1v1h-1zM28 5h1v1h-1zM2 6h1v1h-1zM8 6h1v1h-1zM28 6h1v1h-1zM20 7h1v1h-1zM22 7h1v1h-1zM26 7h1v1h-1zM33 7h1v1h-1zM43 7h1v1h-1zM19 8h1v1h-1zM26 8h1v1h-1zM1 9h1v1h-1zM4 9h1v1h-1zM7 9h1v1h-1zM46 9h1v1h-1zM17 10h1v1h-1zM21 10h1v1h-1zM34 10h1v1h-1zM41 10h1v1h-1zM42 10h1v1h-1zM4 12h1v1h-1zM38 12h1v1h-1zM39 12h1v1h-1zM40 12h1v1h-1zM44 12h1v1h-1zM2 13h1v1h-1zM33 13h1v1h-1zM43 13h1v1h-1zM7 14h1v1h-1zM32 14h1v1h-1zM35 14h1v1h-1zM17 15h1v1h-1zM37 15h1v1h-1zM6 16h1v1h-1zM7 16h1v1h-1zM11 16h1v1h-1zM13 16h1v1h-1zM36 16h1v1h-1zM38 16h1v1h-1zM43 16h1v1h-1zM9 17h1v1h-1zM26 17h1v1h-1zM28 18h1v1h-1zM31 18h1v1h-1zM33 18h1v1h-1z"/></g>
<rect x="563.75" y="96.10000000000001" width="90" height="35.2" fill="#7f7f7f"/>
<rect x="563.75" y="96.10000000000001" width="90" height="35.2" fill="#000" filter="url(#fnFine)" opacity="0.12"/>
<linearGradient id="sm0s" x1="0" y1="0" x2="1" y2="0"><stop offset="0.000" stop-color="#848484"/><stop offset="0.056" stop-color="#a3a3a3"/><stop offset="0.112" stop-color="#9b9b9b"/><stop offset="0.168" stop-color="#9c9c9c"/><stop offset="0.223" stop-color="#9a9a9a"/><stop offset="0.279" stop-color="#939393"/><stop offset="0.335" stop-color="#a4a4a4"/><stop offset="0.391" stop-color="#cdcdcd"/><stop offset="0.447" stop-color="#cdcdcd"/><stop offset="0.503" stop-color="#a2a2a2"/><stop offset="0.559" stop-color="#8a8a8a"/><stop offset="0.615" stop-color="#9c9c9c"/><stop offset="0.670" stop-color="#bcbcbc"/><stop offset="0.726" stop-color="#b9b9b9"/><stop offset="0.782" stop-color="#a3a3a3"/><stop offset="0.838" stop-color="#9d9d9d"/><stop offset="0.894" stop-color="#9b9b9b"/><stop offset="0.950" stop-color="#aaaaaa"/><stop offset="1.000" stop-color="#c6c6c6"/><stop offset="1.000" stop-color="#a2a2a2"/></linearGradient>
<linearGradient id="sm0b" x1="0" y1="0" x2="0" y2="1"><stop offset="0.000" stop-color="#000" stop-opacity="0.000"/><stop offset="0.050" stop-color="#000" stop-opacity="0.000"/><stop offset="0.100" stop-color="#000" stop-opacity="0.002"/><stop offset="0.150" stop-color="#000" stop-opacity="0.007"/><stop offset="0.200" stop-color="#000" stop-opacity="0.020"/><stop offset="0.250" stop-color="#000" stop-opacity="0.052"/><stop offset="0.300" stop-color="#000" stop-opacity="0.118"/><stop offset="0.350" stop-color="#000" stop-opacity="0.230"/><stop offset="0.400" stop-color="#000" stop-opacity="0.385"/><stop offset="0.450" stop-color="#000" stop-opacity="0.558"/><stop offset="0.500" stop-color="#000" stop-opacity="0.697"/><stop offset="0.550" stop-color="#000" stop-opacity="0.750"/><stop offset="0.600" stop-color="#000" stop-opacity="0.697"/><stop offset="0.650" stop-color="#000" stop-opacity="0.558"/><stop offset="0.700" stop-color="#000" stop-opacity="0.385"/><stop offset="0.750" stop-color="#000" stop-opacity="0.230"/><stop offset="0.800" stop-color="#000" stop-opacity="0.118"/><stop offset="0.850" stop-color="#000" stop-opacity="0.052"/><stop offset="0.900" stop-color="#000" stop-opacity="0.020"/><stop offset="0.950" stop-color="#000" stop-opacity="0.007"/><stop offset="1.000" stop-color="#000" stop-opacity="0.002"/></linearGradient>
<rect x="657" y="96.10000000000001" width="89.5" height="35.2" fill="url(#sm0s)"/>
<rect x="657" y="96.10000000000001" width="89.5" height="35.2" fill="#000" filter="url(#fnSmooth)" opacity="0.3"/>
<rect x="657" y="96.10000000000001" width="89.5" height="35.2" fill="url(#sm0b)"/>
<svg x="657" y="96.10000000000001" width="89.5" height="35.2" overflow="hidden"><g filter="url(#blur2)"><ellipse cx="6.6" cy="18.5" rx="5" ry="3.5" fill="#000" opacity="0.6"/><ellipse cx="41.0" cy="18.5" rx="6" ry="4" fill="#000" opacity="0.9"/><ellipse cx="75.0" cy="18.5" rx="5" ry="3.5" fill="#000" opacity="0.75"/><ellipse cx="23.0" cy="18.5" rx="5" ry="3" fill="#000" opacity="0.4"/></g></svg>
<rect x="467.1" y="95.0" width="281.00000000000006" height="37.39999999999999" fill="none" stroke="#0000ff" stroke-width="2.2"/>
<text x="446.30" y="105.50" font-family="'Liberation Sans', sans-serif" font-size="8" fill="#222" textLength="17.45" lengthAdjust="spacingAndGlyphs" stroke="#222" stroke-width="0.09" >0.28</text>
<text x="446.30" y="114.50" font-family="'Liberation Sans', sans-serif" font-size="8" fill="#222" textLength="17.45" lengthAdjust="spacingAndGlyphs" stroke="#222" stroke-width="0.09" >1.66</text>
<text x="446.30" y="123.00" font-family="'Liberation Sans', sans-serif" font-size="8" fill="#222" textLength="13.70" lengthAdjust="spacingAndGlyphs" stroke="#222" stroke-width="0.09" >404</text>
<text x="750.50" y="99.40" font-family="'Liberation Sans', sans-serif" font-size="5.8" fill="#333" textLength="16.10" lengthAdjust="spacingAndGlyphs" stroke="#333" stroke-width="0.09" >0.68"</text>
<text x="750.50" y="106.90" font-family="'Liberation Sans', sans-serif" font-size="5.8" fill="#333" textLength="30.20" lengthAdjust="spacingAndGlyphs" stroke="#333" stroke-width="0.09" >(640, 426)</text>
<text x="750.50" y="115.00" font-family="'Liberation Sans', sans-serif" font-size="5.8" fill="#333" textLength="29.50" lengthAdjust="spacingAndGlyphs" stroke="#333" stroke-width="0.09" >20200129</text>
<text x="750.50" y="121.60" font-family="'Liberation Sans', sans-serif" font-size="5.8" fill="#333" textLength="25.00" lengthAdjust="spacingAndGlyphs" stroke="#333" stroke-width="0.09" >v031_03</text>
<text x="750.50" y="128.50" font-family="'Liberation Sans', sans-serif" font-size="5.8" fill="#333" textLength="36.20" lengthAdjust="spacingAndGlyphs" stroke="#333" stroke-width="0.09" >415_RU_045</text>
<linearGradient id="g2d1" x1="0" y1="0" x2="0" y2="1"><stop offset="0" stop-color="#b5b5b5"/><stop offset="0.330" stop-color="#b5b5b5"/><stop offset="0.410" stop-color="#484848"/><stop offset="0.670" stop-color="#484848"/><stop offset="0.750" stop-color="#b5b5b5"/><stop offset="1" stop-color="#b5b5b5"/></linearGradient>
<rect x="470" y="135.7" width="90" height="35.60000000000002" fill="url(#g2d1)"/>
<g transform="translate(470.00 135.70) scale(1.9149 1.8737)" shape-rendering="crispEdges"><path fill="#000" fill-opacity="0.45" d="M2 0h1v1h-1zM6 0h1v1h-1zM21 0h1v1h-1zM22 0h1v1h-1zM23 0h1v1h-1zM27 0h1v1h-1zM34 0h1v1h-1zM43 0h1v1h-1zM44 0h1v1h-1zM5 1h1v1h-1zM6 1h1v1h-1zM28 1h1v1h-1zM42 1h1v1h-1zM0 2h1v1h-1zM5 2h1v1h-1zM6 2h1v1h-1zM22 2h1v1h-1zM25 2h1v1h-1zM37 2h1v1h-1zM38 2h1v1h-1zM7 3h1v1h-1zM16 3h1v1h-1zM20 3h1v1h-1zM40 3h1v1h-1zM45 3h1v1h-1zM9 4h1v1h-1zM19 4h1v1h-1zM26 4h1v1h-1zM39 4h1v1h-1zM21 5h1v1h-1zM31 5h1v1h-1zM35 5h1v1h-1zM40 5h1v1h-1zM0 6h1v1h-1zM3 6h1v1h-1zM12 6h1v1h-1zM17 6h1v1h-1zM22 6h1v1h-1zM39 6h1v1h-1zM35 7h1v1h-1zM16 8h1v1h-1zM26 8h1v1h-1zM32 8h1v1h-1zM38 8h1v1h-1zM6 9h1v1h-1zM10 10h1v1h-1zM20 10h1v1h-1zM21 10h1v1h-1zM36 10h1v1h-1zM16 11h1v1h-1zM45 11h1v1h-1zM2 12h1v1h-1zM14 12h1v1h-1zM18 12h1v1h-1zM31 12h1v1h-1zM39 12h1v1h-1zM45 12h1v1h-1zM15 13h1v1h-1zM17 13h1v1h-1zM25 13h1v1h-1zM29 14h1v1h-1zM32 14h1v1h-1zM36 14h1v1h-1zM21 16h1v1h-1zM26 16h1v1h-1zM46 16h1v1h-1zM3 17h1v1h-1zM21 17h1v1h-1zM35 17h1v1h-1zM41 17h1v1h-1zM14 18h1v1h-1zM15 18h1v1h-1zM16 18h1v1h-1zM31 18h1v1h-1zM36 18h1v1h-1zM41 18h1v1h-1z"/><path fill="#000" fill-opacity="0.8" d="M3 0h1v1h-1zM10 1h1v1h-1zM14 2h1v1h-1zM6 3h1v1h-1zM6 5h1v1h-1zM9 5h1v1h-1zM28 7h1v1h-1zM9 8h1v1h-1zM31 8h1v1h-1zM4 9h1v1h-1zM19 10h1v1h-1zM5 11h1v1h-1zM18 11h1v1h-1zM44 11h1v1h-1zM32 13h1v1h-1zM7 14h1v1h-1zM17 15h1v1h-1zM37 17h1v1h-1zM11 18h1v1h-1zM33 18h1v1h-1z"/><path fill="#000" fill-opacity="0.15" d="M4 0h1v1h-1zM5 0h1v1h-1zM9 0h1v1h-1zM15 0h1v1h-1zM18 0h1v1h-1zM25 0h1v1h-1zM32 0h1v1h-1zM37 0h1v1h-1zM2 1h1v1h-1zM11 1h1v1h-1zM14 1h1v1h-1zM30 1h1v1h-1zM31 1h1v1h-1zM45 1h1v1h-1zM46 1h1v1h-1zM1 2h1v1h-1zM12 2h1v1h-1zM15 2h1v1h-1zM29 2h1v1h-1zM0 3h1v1h-1zM1 3h1v1h-1zM21 3h1v1h-1zM23 3h1v1h-1zM26 3h1v1h-1zM28 3h1v1h-1zM43 3h1v1h-1zM44 3h1v1h-1zM0 4h1v1h-1zM15 4h1v1h-1zM30 4h1v1h-1zM41 4h1v1h-1zM44 4h1v1h-1zM14 5h1v1h-1zM28 5h1v1h-1zM42 5h1v1h-1zM18 6h1v1h-1zM26 6h1v1h-1zM34 6h1v1h-1zM38 6h1v1h-1zM3 7h1v1h-1zM22 7h1v1h-1zM23 7h1v1h-1zM34 7h1v1h-1zM37 7h1v1h-1zM6 8h1v1h-1zM13 8h1v1h-1zM20 8h1v1h-1zM36 8h1v1h-1zM37 8h1v1h-1zM46 8h1v1h-1zM32 9h1v1h-1zM45 9h1v1h-1zM0 10h1v1h-1zM28 10h1v1h-1zM33 10h1v1h-1zM42 10h1v1h-1zM4 11h1v1h-1zM11 11h1v1h-1zM13 11h1v1h-1zM17 11h1v1h-1zM22 11h1v1h-1zM0 12h1v1h-1zM1 12h1v1h-1zM3 12h1v1h-1zM5 12h1v1h-1zM13 12h1v1h-1zM28 12h1v1h-1zM33 12h1v1h-1zM41 12h1v1h-1zM42 12h1v1h-1zM46 12h1v1h-1zM1 13h1v1h-1zM21 13h1v1h-1zM24 13h1v1h-1zM29 13h1v1h-1zM2 14h1v1h-1zM4 14h1v1h-1zM13 14h1v1h-1zM24 14h1v1h-1zM25 14h1v1h-1zM31 14h1v1h-1zM37 14h1v1h-1zM45 14h1v1h-1zM9 15h1v1h-1zM14 15h1v1h-1zM21 15h1v1h-1zM28 15h1v1h-1zM11 16h1v1h-1zM38 16h1v1h-1zM40 16h1v1h-1zM45 16h1v1h-1zM0 17h1v1h-1zM13 17h1v1h-1zM34 17h1v1h-1zM36 17h1v1h-1zM39 17h1v1h-1zM44 17h1v1h-1zM45 17h1v1h-1zM4 18h1v1h-1zM22 18h1v1h-1zM24 18h1v1h-1zM37 18h1v1h-1zM40 18h1v1h-1z"/><path fill="#fff" fill-opacity="0.15" d="M7 0h1v1h-1zM11 0h1v1h-1zM20 0h1v1h-1zM45 0h1v1h-1zM0 1h1v1h-1zM1 1h1v1h-1zM3 1h1v1h-1zM23 1h1v1h-1zM24 1h1v1h-1zM34 1h1v1h-1zM19 2h1v1h-1zM40 2h1v1h-1zM18 3h1v1h-1zM31 3h1v1h-1zM11 4h1v1h-1zM12 4h1v1h-1zM17 4h1v1h-1zM18 4h1v1h-1zM22 4h1v1h-1zM25 4h1v1h-1zM35 4h1v1h-1zM0 5h1v1h-1zM2 5h1v1h-1zM13 5h1v1h-1zM15 5h1v1h-1zM20 5h1v1h-1zM43 5h1v1h-1zM45 5h1v1h-1zM20 6h1v1h-1zM36 6h1v1h-1zM6 7h1v1h-1zM15 7h1v1h-1zM17 7h1v1h-1zM19 7h1v1h-1zM41 7h1v1h-1zM43 7h1v1h-1zM4 8h1v1h-1zM18 8h1v1h-1zM22 8h1v1h-1zM23 8h1v1h-1zM30 8h1v1h-1zM35 8h1v1h-1zM42 8h1v1h-1zM7 9h1v1h-1zM8 9h1v1h-1zM10 9h1v1h-1zM11 9h1v1h-1zM18 9h1v1h-1zM19 9h1v1h-1zM20 9h1v1h-1zM24 9h1v1h-1zM28 9h1v1h-1zM37 9h1v1h-1zM4 10h1v1h-1zM18 10h1v1h-1zM22 10h1v1h-1zM23 10h1v1h-1zM26 10h1v1h-1zM41 10h1v1h-1zM43 10h1v1h-1zM7 11h1v1h-1zM8 11h1v1h-1zM12 11h1v1h-1zM20 11h1v1h-1zM28 11h1v1h-1zM29 11h1v1h-1zM34 11h1v1h-1zM38 11h1v1h-1zM6 12h1v1h-1zM9 12h1v1h-1zM22 12h1v1h-1zM25 12h1v1h-1zM34 12h1v1h-1zM43 12h1v1h-1zM3 13h1v1h-1zM4 13h1v1h-1zM5 13h1v1h-1zM6 13h1v1h-1zM22 13h1v1h-1zM30 13h1v1h-1zM38 13h1v1h-1zM1 14h1v1h-1zM9 14h1v1h-1zM21 14h1v1h-1zM26 14h1v1h-1zM27 14h1v1h-1zM28 14h1v1h-1zM43 14h1v1h-1zM46 14h1v1h-1zM0 15h1v1h-1zM6 15h1v1h-1zM7 15h1v1h-1zM18 15h1v1h-1zM25 15h1v1h-1zM32 15h1v1h-1zM36 15h1v1h-1zM41 15h1v1h-1zM42 15h1v1h-1zM43 15h1v1h-1zM4 16h1v1h-1zM6 16h1v1h-1zM32 16h1v1h-1zM36 16h1v1h-1zM37 16h1v1h-1zM39 16h1v1h-1zM7 17h1v1h-1zM8 17h1v1h-1zM22 17h1v1h-1zM28 17h1v1h-1zM33 17h1v1h-1zM40 17h1v1h-1zM28 18h1v1h-1zM45 18h1v1h-1z"/><path fill="#000" fill-opacity="0.6" d="M8 0h1v1h-1zM12 0h1v1h-1zM29 0h1v1h-1zM29 1h1v1h-1zM40 1h1v1h-1zM43 1h1v1h-1zM28 2h1v1h-1zM27 3h1v1h-1zM42 3h1v1h-1zM2 4h1v1h-1zM45 4h1v1h-1zM10 5h1v1h-1zM34 5h1v1h-1zM1 6h1v1h-1zM6 6h1v1h-1zM25 6h1v1h-1zM29 6h1v1h-1zM32 6h1v1h-1zM7 7h1v1h-1zM11 7h1v1h-1zM38 7h1v1h-1zM12 8h1v1h-1zM40 8h1v1h-1zM44 8h1v1h-1zM35 9h1v1h-1zM12 10h1v1h-1zM45 10h1v1h-1zM46 10h1v1h-1zM21 11h1v1h-1zM26 11h1v1h-1zM30 11h1v1h-1zM33 11h1v1h-1zM30 12h1v1h-1zM12 13h1v1h-1zM27 13h1v1h-1zM28 13h1v1h-1zM34 13h1v1h-1zM34 14h1v1h-1zM19 15h1v1h-1zM8 16h1v1h-1zM14 16h1v1h-1zM31 16h1v1h-1zM23 17h1v1h-1zM30 17h1v1h-1zM32 17h1v1h-1z"/><path fill="#fff" fill-opacity="0.6" d="M10 0h1v1h-1zM19 0h1v1h-1zM31 0h1v1h-1zM42 0h1v1h-1zM8 1h1v1h-1zM35 1h1v1h-1zM31 2h1v1h-1zM39 2h1v1h-1zM41 2h1v1h-1zM46 2h1v1h-1zM2 3h1v1h-1zM14 3h1v1h-1zM30 3h1v1h-1zM31 4h1v1h-1zM3 5h1v1h-1zM19 5h1v1h-1zM26 5h1v1h-1zM37 5h1v1h-1zM41 5h1v1h-1zM35 6h1v1h-1zM4 7h1v1h-1zM8 7h1v1h-1zM42 7h1v1h-1zM46 7h1v1h-1zM28 8h1v1h-1zM9 9h1v1h-1zM42 9h1v1h-1zM43 9h1v1h-1zM44 9h1v1h-1zM3 10h1v1h-1zM13 10h1v1h-1zM19 12h1v1h-1zM27 12h1v1h-1zM18 13h1v1h-1zM31 13h1v1h-1zM41 13h1v1h-1zM17 14h1v1h-1zM22 14h1v1h-1zM23 14h1v1h-1zM41 14h1v1h-1zM10 15h1v1h-1zM15 15h1v1h-1zM16 15h1v1h-1zM29 15h1v1h-1zM46 15h1v1h-1zM24 16h1v1h-1zM16 17h1v1h-1zM25 17h1v1h-1zM27 18h1v1h-1zM30 18h1v1h-1z"/><path fill="#000" fill-opacity="0.3" d="M16 0h1v1h-1zM24 0h1v1h-1zM30 0h1v1h-1zM41 0h1v1h-1zM4 1h1v1h-1zM21 1h1v1h-1zM27 1h1v1h-1zM32 1h1v1h-1zM33 1h1v1h-1zM9 2h1v1h-1zM13 2h1v1h-1zM16 2h1v1h-1zM17 2h1v1h-1zM20 2h1v1h-1zM21 2h1v1h-1zM45 2h1v1h-1zM4 3h1v1h-1zM10 3h1v1h-1zM13 3h1v1h-1zM19 3h1v1h-1zM29 3h1v1h-1zM38 3h1v1h-1zM4 4h1v1h-1zM33 4h1v1h-1zM34 4h1v1h-1zM42 4h1v1h-1zM5 5h1v1h-1zM12 5h1v1h-1zM24 5h1v1h-1zM25 5h1v1h-1zM30 5h1v1h-1zM38 5h1v1h-1zM9 6h1v1h-1zM16 6h1v1h-1zM23 6h1v1h-1zM33 6h1v1h-1zM0 7h1v1h-1zM29 7h1v1h-1zM45 7h1v1h-1zM7 8h1v1h-1zM8 8h1v1h-1zM10 8h1v1h-1zM27 8h1v1h-1zM29 8h1v1h-1zM34 8h1v1h-1zM12 9h1v1h-1zM15 9h1v1h-1zM16 9h1v1h-1zM23 9h1v1h-1zM31 9h1v1h-1zM39 9h1v1h-1zM15 10h1v1h-1zM32 10h1v1h-1zM35 10h1v1h-1zM39 10h1v1h-1zM40 10h1v1h-1zM2 11h1v1h-1zM3 11h1v1h-1zM9 11h1v1h-1zM27 11h1v1h-1zM36 11h1v1h-1zM41 11h1v1h-1zM7 12h1v1h-1zM8 12h1v1h-1zM16 12h1v1h-1zM24 12h1v1h-1zM35 12h1v1h-1zM0 13h1v1h-1zM7 13h1v1h-1zM9 13h1v1h-1zM33 13h1v1h-1zM36 13h1v1h-1zM39 13h1v1h-1zM8 14h1v1h-1zM30 14h1v1h-1zM39 14h1v1h-1zM40 14h1v1h-1zM31 15h1v1h-1zM5 16h1v1h-1zM20 16h1v1h-1zM27 16h1v1h-1zM28 16h1v1h-1zM34 16h1v1h-1zM5 17h1v1h-1zM6 17h1v1h-1zM11 17h1v1h-1zM9 18h1v1h-1zM19 18h1v1h-1zM23 18h1v1h-1zM26 18h1v1h-1zM29 18h1v1h-1zM32 18h1v1h-1zM38 18h1v1h-1zM42 18h1v1h-1zM43 18h1v1h-1zM46 18h1v1h-1z"/><path fill="#fff" fill-opacity="0.45" d="M17 0h1v1h-1zM26 0h1v1h-1zM35 0h1v1h-1zM46 0h1v1h-1zM13 1h1v1h-1zM17 1h1v1h-1zM10 2h1v1h-1zM30 2h1v1h-1zM8 3h1v1h-1zM25 3h1v1h-1zM32 3h1v1h-1zM34 3h1v1h-1zM39 3h1v1h-1zM1 4h1v1h-1zM5 4h1v1h-1zM13 4h1v1h-1zM21 4h1v1h-1zM28 4h1v1h-1zM38 4h1v1h-1zM40 4h1v1h-1zM7 5h1v1h-1zM22 5h1v1h-1zM4 6h1v1h-1zM5 6h1v1h-1zM8 6h1v1h-1zM19 6h1v1h-1zM43 6h1v1h-1zM44 6h1v1h-1zM1 7h1v1h-1zM13 7h1v1h-1zM18 7h1v1h-1zM24 7h1v1h-1zM33 7h1v1h-1zM36 7h1v1h-1zM19 8h1v1h-1zM21 9h1v1h-1zM33 9h1v1h-1zM1 10h1v1h-1zM2 10h1v1h-1zM29 10h1v1h-1zM31 10h1v1h-1zM6 11h1v1h-1zM10 11h1v1h-1zM46 11h1v1h-1zM32 12h1v1h-1zM13 13h1v1h-1zM40 13h1v1h-1zM43 13h1v1h-1zM44 13h1v1h-1zM3 14h1v1h-1zM11 14h1v1h-1zM19 14h1v1h-1zM33 14h1v1h-1zM44 14h1v1h-1zM1 15h1v1h-1zM33 15h1v1h-1zM7 16h1v1h-1zM9 16h1v1h-1zM22 16h1v1h-1zM30 16h1v1h-1zM2 17h1v1h-1zM4 17h1v1h-1zM9 17h1v1h-1zM12 17h1v1h-1zM17 17h1v1h-1zM17 18h1v1h-1zM18 18h1v1h-1zM35 18h1v1h-1z"/><path fill="#fff" fill-opacity="0.3" d="M28 0h1v1h-1zM40 0h1v1h-1zM7 1h1v1h-1zM22 1h1v1h-1zM25 1h1v1h-1zM37 1h1v1h-1zM38 1h1v1h-1zM3 2h1v1h-1zM18 2h1v1h-1zM23 2h1v1h-1zM27 2h1v1h-1zM32 2h1v1h-1zM34 2h1v1h-1zM36 2h1v1h-1zM43 2h1v1h-1zM44 2h1v1h-1zM9 3h1v1h-1zM17 3h1v1h-1zM24 3h1v1h-1zM37 3h1v1h-1zM6 4h1v1h-1zM7 4h1v1h-1zM8 4h1v1h-1zM16 4h1v1h-1zM20 4h1v1h-1zM23 4h1v1h-1zM32 4h1v1h-1zM43 4h1v1h-1zM4 5h1v1h-1zM27 5h1v1h-1zM29 5h1v1h-1zM32 5h1v1h-1zM33 5h1v1h-1zM46 5h1v1h-1zM2 6h1v1h-1zM10 6h1v1h-1zM11 6h1v1h-1zM13 6h1v1h-1zM14 6h1v1h-1zM27 6h1v1h-1zM30 6h1v1h-1zM31 6h1v1h-1zM46 6h1v1h-1zM9 7h1v1h-1zM14 7h1v1h-1zM20 7h1v1h-1zM25 7h1v1h-1zM27 7h1v1h-1zM0 8h1v1h-1zM2 8h1v1h-1zM14 8h1v1h-1zM33 8h1v1h-1zM0 9h1v1h-1zM3 9h1v1h-1zM13 9h1v1h-1zM25 9h1v1h-1zM36 9h1v1h-1zM40 9h1v1h-1zM46 9h1v1h-1zM6 10h1v1h-1zM11 10h1v1h-1zM17 10h1v1h-1zM27 10h1v1h-1zM38 10h1v1h-1zM44 10h1v1h-1zM14 11h1v1h-1zM19 11h1v1h-1zM24 11h1v1h-1zM32 11h1v1h-1zM37 11h1v1h-1zM43 11h1v1h-1zM4 12h1v1h-1zM12 12h1v1h-1zM20 12h1v1h-1zM21 12h1v1h-1zM26 12h1v1h-1zM40 12h1v1h-1zM8 13h1v1h-1zM10 13h1v1h-1zM19 13h1v1h-1zM23 13h1v1h-1zM35 13h1v1h-1zM45 13h1v1h-1zM0 14h1v1h-1zM10 14h1v1h-1zM2 15h1v1h-1zM5 15h1v1h-1zM11 15h1v1h-1zM22 15h1v1h-1zM0 16h1v1h-1zM10 16h1v1h-1zM16 16h1v1h-1zM23 16h1v1h-1zM43 16h1v1h-1zM44 16h1v1h-1zM1 17h1v1h-1zM15 17h1v1h-1zM18 17h1v1h-1zM0 18h1v1h-1zM3 18h1v1h-1zM5 18h1v1h-1zM6 18h1v1h-1zM8 18h1v1h-1zM10 18h1v1h-1zM20 18h1v1h-1zM44 18h1v1h-1z"/><path fill="#fff" fill-opacity="0.8" d="M38 0h1v1h-1zM12 1h1v1h-1zM19 1h1v1h-1zM7 2h1v1h-1zM24 2h1v1h-1zM3 3h1v1h-1zM46 3h1v1h-1zM14 4h1v1h-1zM46 4h1v1h-1zM7 6h1v1h-1zM40 6h1v1h-1zM16 7h1v1h-1zM40 7h1v1h-1zM3 8h1v1h-1zM17 8h1v1h-1zM43 8h1v1h-1zM45 8h1v1h-1zM26 9h1v1h-1zM25 10h1v1h-1zM37 10h1v1h-1zM15 11h1v1h-1zM29 12h1v1h-1zM5 14h1v1h-1zM16 14h1v1h-1zM13 15h1v1h-1zM20 15h1v1h-1zM24 15h1v1h-1zM26 15h1v1h-1zM3 16h1v1h-1zM29 16h1v1h-1zM10 17h1v1h-1zM43 17h1v1h-1zM2 18h1v1h-1z"/></g>
<rect x="563.75" y="135.7" width="90" height="35.60000000000002" fill="#7f7f7f"/>
<rect x="563.75" y="135.7" width="90" height="35.60000000000002" fill="#000" filter="url(#fnFine)" opacity="0.12"/>
<linearGradient id="sm1s" x1="0" y1="0" x2="1" y2="0"><stop offset="0.000" stop-color="#818181"/><stop offset="0.056" stop-color="#c5c5c5"/><stop offset="0.112" stop-color="#d7d7d7"/><stop offset="0.168" stop-color="#c4c4c4"/><stop offset="0.223" stop-color="#a3a3a3"/><stop offset="0.279" stop-color="#b0b0b0"/><stop offset="0.335" stop-color="#c7c7c7"/><stop offset="0.391" stop-color="#c1c1c1"/><stop offset="0.447" stop-color="#c1c1c1"/><stop offset="0.503" stop-color="#c3c3c3"/><stop offset="0.559" stop-color="#c1c1c1"/><stop offset="0.615" stop-color="#acacac"/><stop offset="0.670" stop-color="#8f8f8f"/><stop offset="0.726" stop-color="#878787"/><stop offset="0.782" stop-color="#8d8d8d"/><stop offset="0.838" stop-color="#a7a7a7"/><stop offset="0.894" stop-color="#c7c7c7"/><stop offset="0.950" stop-color="#cdcdcd"/><stop offset="1.000" stop-color="#c7c7c7"/><stop offset="1.000" stop-color="#919191"/></linearGradient>
<linearGradient id="sm1b" x1="0" y1="0" x2="0" y2="1"><stop offset="0.000" stop-color="#000" stop-opacity="0.000"/><stop offset="0.050" stop-color="#000" stop-opacity="0.001"/><stop offset="0.100" stop-color="#000" stop-opacity="0.004"/><stop offset="0.150" stop-color="#000" stop-opacity="0.012"/><stop offset="0.200" stop-color="#000" stop-opacity="0.034"/><stop offset="0.250" stop-color="#000" stop-opacity="0.080"/><stop offset="0.300" stop-color="#000" stop-opacity="0.166"/><stop offset="0.350" stop-color="#000" stop-opacity="0.296"/><stop offset="0.400" stop-color="#000" stop-opacity="0.454"/><stop offset="0.450" stop-color="#000" stop-opacity="0.601"/><stop offset="0.500" stop-color="#000" stop-opacity="0.687"/><stop offset="0.550" stop-color="#000" stop-opacity="0.677"/><stop offset="0.600" stop-color="#000" stop-opacity="0.575"/><stop offset="0.650" stop-color="#000" stop-opacity="0.422"/><stop offset="0.700" stop-color="#000" stop-opacity="0.266"/><stop offset="0.750" stop-color="#000" stop-opacity="0.145"/><stop offset="0.800" stop-color="#000" stop-opacity="0.068"/><stop offset="0.850" stop-color="#000" stop-opacity="0.028"/><stop offset="0.900" stop-color="#000" stop-opacity="0.010"/><stop offset="0.950" stop-color="#000" stop-opacity="0.003"/><stop offset="1.000" stop-color="#000" stop-opacity="0.001"/></linearGradient>
<rect x="657" y="135.7" width="89.5" height="35.60000000000002" fill="url(#sm1s)"/>
<rect x="657" y="135.7" width="89.5" height="35.60000000000002" fill="#000" filter="url(#fnSmooth)" opacity="0.3"/>
<rect x="657" y="135.7" width="89.5" height="35.60000000000002" fill="url(#sm1b)"/>
<svg x="657" y="135.7" width="89.5" height="35.60000000000002" overflow="hidden"><g filter="url(#blur2)"><ellipse cx="8.7" cy="18.6" rx="5" ry="3.5" fill="#000" opacity="0.5"/><ellipse cx="43.0" cy="18.6" rx="5" ry="4" fill="#000" opacity="0.85"/><ellipse cx="81.6" cy="18.6" rx="5" ry="3.5" fill="#000" opacity="0.6"/><ellipse cx="43.0" cy="6.3" rx="2.5" ry="6" fill="#000" opacity="0.35"/></g></svg>
<rect x="467.1" y="134.6" width="281.00000000000006" height="37.8" fill="none" stroke="#00ff00" stroke-width="2.2"/>
<text x="446.30" y="145.10" font-family="'Liberation Sans', sans-serif" font-size="8" fill="#222" textLength="17.45" lengthAdjust="spacingAndGlyphs" stroke="#222" stroke-width="0.09" >0.24</text>
<text x="446.30" y="154.10" font-family="'Liberation Sans', sans-serif" font-size="8" fill="#222" textLength="17.45" lengthAdjust="spacingAndGlyphs" stroke="#222" stroke-width="0.09" >1.09</text>
<text x="446.30" y="162.60" font-family="'Liberation Sans', sans-serif" font-size="8" fill="#222" textLength="13.70" lengthAdjust="spacingAndGlyphs" stroke="#222" stroke-width="0.09" >424</text>
<text x="750.50" y="139.00" font-family="'Liberation Sans', sans-serif" font-size="5.8" fill="#333" textLength="16.10" lengthAdjust="spacingAndGlyphs" stroke="#333" stroke-width="0.09" >0.82"</text>
<text x="750.50" y="146.50" font-family="'Liberation Sans', sans-serif" font-size="5.8" fill="#333" textLength="30.20" lengthAdjust="spacingAndGlyphs" stroke="#333" stroke-width="0.09" >(643, 241)</text>
<text x="750.50" y="154.60" font-family="'Liberation Sans', sans-serif" font-size="5.8" fill="#333" textLength="29.50" lengthAdjust="spacingAndGlyphs" stroke="#333" stroke-width="0.09" >20200129</text>
<text x="750.50" y="161.20" font-family="'Liberation Sans', sans-serif" font-size="5.8" fill="#333" textLength="25.00" lengthAdjust="spacingAndGlyphs" stroke="#333" stroke-width="0.09" >v031_02</text>
<text x="750.50" y="168.10" font-family="'Liberation Sans', sans-serif" font-size="5.8" fill="#333" textLength="36.20" lengthAdjust="spacingAndGlyphs" stroke="#333" stroke-width="0.09" >415_RU_025</text>
<linearGradient id="g2d2" x1="0" y1="0" x2="0" y2="1"><stop offset="0" stop-color="#b5b5b5"/><stop offset="0.320" stop-color="#b5b5b5"/><stop offset="0.400" stop-color="#505050"/><stop offset="0.660" stop-color="#505050"/><stop offset="0.740" stop-color="#b5b5b5"/><stop offset="1" stop-color="#b5b5b5"/></linearGradient>
<rect x="470" y="175.7" width="90" height="35.20000000000002" fill="url(#g2d2)"/>
<g transform="translate(470.00 175.70) scale(1.9149 1.8526)" shape-rendering="crispEdges"><path fill="#fff" fill-opacity="0.3" d="M0 0h1v1h-1zM20 0h1v1h-1zM31 0h1v1h-1zM32 0h1v1h-1zM37 0h1v1h-1zM45 0h1v1h-1zM8 1h1v1h-1zM16 1h1v1h-1zM34 1h1v1h-1zM46 1h1v1h-1zM4 2h1v1h-1zM19 2h1v1h-1zM20 2h1v1h-1zM23 2h1v1h-1zM29 2h1v1h-1zM30 2h1v1h-1zM42 2h1v1h-1zM7 3h1v1h-1zM10 3h1v1h-1zM16 3h1v1h-1zM39 3h1v1h-1zM43 3h1v1h-1zM9 4h1v1h-1zM21 4h1v1h-1zM27 4h1v1h-1zM45 4h1v1h-1zM2 5h1v1h-1zM3 5h1v1h-1zM9 5h1v1h-1zM13 5h1v1h-1zM19 5h1v1h-1zM25 5h1v1h-1zM28 5h1v1h-1zM30 5h1v1h-1zM31 5h1v1h-1zM32 5h1v1h-1zM38 5h1v1h-1zM2 6h1v1h-1zM4 6h1v1h-1zM13 6h1v1h-1zM22 6h1v1h-1zM24 6h1v1h-1zM25 6h1v1h-1zM30 6h1v1h-1zM31 6h1v1h-1zM6 7h1v1h-1zM9 7h1v1h-1zM18 7h1v1h-1zM26 7h1v1h-1zM32 7h1v1h-1zM33 7h1v1h-1zM9 8h1v1h-1zM10 8h1v1h-1zM39 8h1v1h-1zM40 8h1v1h-1zM7 9h1v1h-1zM25 9h1v1h-1zM28 9h1v1h-1zM40 9h1v1h-1zM41 9h1v1h-1zM42 9h1v1h-1zM24 10h1v1h-1zM38 10h1v1h-1zM46 10h1v1h-1zM10 11h1v1h-1zM16 11h1v1h-1zM42 11h1v1h-1zM44 11h1v1h-1zM11 12h1v1h-1zM22 12h1v1h-1zM27 12h1v1h-1zM31 12h1v1h-1zM2 13h1v1h-1zM18 13h1v1h-1zM20 13h1v1h-1zM23 13h1v1h-1zM30 13h1v1h-1zM32 13h1v1h-1zM11 14h1v1h-1zM20 14h1v1h-1zM22 14h1v1h-1zM23 14h1v1h-1zM28 14h1v1h-1zM34 14h1v1h-1zM40 14h1v1h-1zM43 14h1v1h-1zM21 15h1v1h-1zM22 15h1v1h-1zM29 15h1v1h-1zM32 15h1v1h-1zM36 15h1v1h-1zM41 15h1v1h-1zM44 15h1v1h-1zM0 16h1v1h-1zM28 16h1v1h-1zM35 16h1v1h-1zM7 17h1v1h-1zM16 17h1v1h-1zM24 17h1v1h-1zM28 17h1v1h-1zM16 18h1v1h-1zM34 18h1v1h-1zM41 18h1v1h-1z"/><path fill="#000" fill-opacity="0.45" d="M1 0h1v1h-1zM3 0h1v1h-1zM10 0h1v1h-1zM14 0h1v1h-1zM15 0h1v1h-1zM18 0h1v1h-1zM28 0h1v1h-1zM1 1h1v1h-1zM5 1h1v1h-1zM18 2h1v1h-1zM37 2h1v1h-1zM13 3h1v1h-1zM46 3h1v1h-1zM24 4h1v1h-1zM30 4h1v1h-1zM4 5h1v1h-1zM33 5h1v1h-1zM35 5h1v1h-1zM18 6h1v1h-1zM32 6h1v1h-1zM20 7h1v1h-1zM37 8h1v1h-1zM24 9h1v1h-1zM30 9h1v1h-1zM43 9h1v1h-1zM46 9h1v1h-1zM12 10h1v1h-1zM13 10h1v1h-1zM14 10h1v1h-1zM19 10h1v1h-1zM25 10h1v1h-1zM27 10h1v1h-1zM33 10h1v1h-1zM36 10h1v1h-1zM44 10h1v1h-1zM45 11h1v1h-1zM29 12h1v1h-1zM34 12h1v1h-1zM36 12h1v1h-1zM37 12h1v1h-1zM43 12h1v1h-1zM44 12h1v1h-1zM6 13h1v1h-1zM19 13h1v1h-1zM13 14h1v1h-1zM19 14h1v1h-1zM1 15h1v1h-1zM20 15h1v1h-1zM35 15h1v1h-1zM1 16h1v1h-1zM8 16h1v1h-1zM10 16h1v1h-1zM26 16h1v1h-1zM33 16h1v1h-1zM39 17h1v1h-1zM19 18h1v1h-1zM22 18h1v1h-1zM25 18h1v1h-1z"/><path fill="#000" fill-opacity="0.15" d="M2 0h1v1h-1zM19 0h1v1h-1zM23 0h1v1h-1zM29 0h1v1h-1zM36 0h1v1h-1zM38 0h1v1h-1zM41 0h1v1h-1zM43 0h1v1h-1zM10 1h1v1h-1zM32 1h1v1h-1zM33 1h1v1h-1zM35 1h1v1h-1zM36 1h1v1h-1zM43 1h1v1h-1zM2 2h1v1h-1zM17 2h1v1h-1zM26 2h1v1h-1zM31 2h1v1h-1zM46 2h1v1h-1zM5 3h1v1h-1zM6 3h1v1h-1zM8 3h1v1h-1zM19 3h1v1h-1zM26 3h1v1h-1zM31 3h1v1h-1zM32 3h1v1h-1zM45 3h1v1h-1zM0 4h1v1h-1zM3 4h1v1h-1zM6 4h1v1h-1zM7 4h1v1h-1zM15 4h1v1h-1zM18 4h1v1h-1zM20 4h1v1h-1zM37 4h1v1h-1zM44 4h1v1h-1zM0 5h1v1h-1zM1 5h1v1h-1zM5 5h1v1h-1zM6 5h1v1h-1zM11 5h1v1h-1zM22 5h1v1h-1zM26 5h1v1h-1zM39 5h1v1h-1zM8 6h1v1h-1zM16 6h1v1h-1zM19 6h1v1h-1zM20 6h1v1h-1zM35 6h1v1h-1zM36 6h1v1h-1zM45 6h1v1h-1zM10 7h1v1h-1zM11 7h1v1h-1zM19 7h1v1h-1zM22 7h1v1h-1zM24 7h1v1h-1zM29 7h1v1h-1zM43 7h1v1h-1zM4 8h1v1h-1zM5 8h1v1h-1zM20 8h1v1h-1zM32 8h1v1h-1zM3 9h1v1h-1zM5 9h1v1h-1zM15 9h1v1h-1zM35 9h1v1h-1zM1 10h1v1h-1zM5 10h1v1h-1zM29 10h1v1h-1zM31 10h1v1h-1zM32 10h1v1h-1zM42 10h1v1h-1zM8 11h1v1h-1zM25 11h1v1h-1zM37 11h1v1h-1zM8 12h1v1h-1zM26 12h1v1h-1zM35 12h1v1h-1zM39 12h1v1h-1zM7 13h1v1h-1zM11 13h1v1h-1zM16 13h1v1h-1zM28 13h1v1h-1zM39 13h1v1h-1zM0 14h1v1h-1zM1 14h1v1h-1zM2 14h1v1h-1zM9 14h1v1h-1zM12 14h1v1h-1zM14 14h1v1h-1zM17 14h1v1h-1zM25 14h1v1h-1zM31 14h1v1h-1zM39 14h1v1h-1zM2 15h1v1h-1zM10 15h1v1h-1zM27 15h1v1h-1zM42 15h1v1h-1zM19 16h1v1h-1zM20 16h1v1h-1zM21 16h1v1h-1zM22 16h1v1h-1zM37 16h1v1h-1zM2 17h1v1h-1zM36 17h1v1h-1zM40 17h1v1h-1zM3 18h1v1h-1zM5 18h1v1h-1zM8 18h1v1h-1zM45 18h1v1h-1z"/><path fill="#fff" fill-opacity="0.15" d="M4 0h1v1h-1zM16 0h1v1h-1zM25 0h1v1h-1zM35 0h1v1h-1zM39 0h1v1h-1zM15 1h1v1h-1zM20 1h1v1h-1zM23 1h1v1h-1zM25 1h1v1h-1zM37 1h1v1h-1zM40 1h1v1h-1zM45 1h1v1h-1zM1 2h1v1h-1zM7 2h1v1h-1zM8 2h1v1h-1zM10 2h1v1h-1zM12 2h1v1h-1zM14 2h1v1h-1zM32 2h1v1h-1zM43 2h1v1h-1zM17 3h1v1h-1zM23 3h1v1h-1zM24 3h1v1h-1zM27 3h1v1h-1zM29 3h1v1h-1zM30 3h1v1h-1zM14 4h1v1h-1zM16 4h1v1h-1zM17 4h1v1h-1zM33 4h1v1h-1zM34 4h1v1h-1zM36 4h1v1h-1zM42 4h1v1h-1zM18 5h1v1h-1zM23 5h1v1h-1zM24 5h1v1h-1zM41 5h1v1h-1zM44 5h1v1h-1zM23 6h1v1h-1zM39 6h1v1h-1zM7 7h1v1h-1zM25 7h1v1h-1zM34 7h1v1h-1zM44 7h1v1h-1zM2 8h1v1h-1zM6 8h1v1h-1zM12 8h1v1h-1zM14 8h1v1h-1zM17 8h1v1h-1zM27 8h1v1h-1zM35 8h1v1h-1zM38 8h1v1h-1zM41 8h1v1h-1zM10 9h1v1h-1zM18 9h1v1h-1zM9 10h1v1h-1zM18 10h1v1h-1zM1 11h1v1h-1zM3 11h1v1h-1zM12 11h1v1h-1zM27 11h1v1h-1zM30 11h1v1h-1zM31 11h1v1h-1zM39 11h1v1h-1zM40 11h1v1h-1zM13 12h1v1h-1zM14 12h1v1h-1zM17 12h1v1h-1zM18 12h1v1h-1zM19 12h1v1h-1zM1 13h1v1h-1zM5 13h1v1h-1zM12 13h1v1h-1zM13 13h1v1h-1zM17 13h1v1h-1zM22 13h1v1h-1zM31 13h1v1h-1zM34 13h1v1h-1zM38 13h1v1h-1zM6 14h1v1h-1zM8 14h1v1h-1zM10 14h1v1h-1zM16 14h1v1h-1zM33 14h1v1h-1zM37 14h1v1h-1zM38 14h1v1h-1zM41 14h1v1h-1zM46 14h1v1h-1zM9 15h1v1h-1zM13 15h1v1h-1zM18 15h1v1h-1zM43 15h1v1h-1zM45 15h1v1h-1zM46 15h1v1h-1zM9 16h1v1h-1zM23 16h1v1h-1zM24 16h1v1h-1zM31 16h1v1h-1zM34 16h1v1h-1zM40 16h1v1h-1zM44 16h1v1h-1zM46 16h1v1h-1zM5 17h1v1h-1zM11 17h1v1h-1zM12 17h1v1h-1zM17 17h1v1h-1zM41 17h1v1h-1zM42 17h1v1h-1zM0 18h1v1h-1zM1 18h1v1h-1zM6 18h1v1h-1zM10 18h1v1h-1zM24 18h1v1h-1zM29 18h1v1h-1zM31 18h1v1h-1z"/><path fill="#000" fill-opacity="0.3" d="M6 0h1v1h-1zM26 0h1v1h-1zM33 0h1v1h-1zM2 1h1v1h-1zM17 1h1v1h-1zM18 1h1v1h-1zM26 1h1v1h-1zM29 1h1v1h-1zM6 2h1v1h-1zM11 2h1v1h-1zM25 2h1v1h-1zM12 3h1v1h-1zM15 3h1v1h-1zM20 3h1v1h-1zM35 3h1v1h-1zM37 3h1v1h-1zM11 4h1v1h-1zM12 4h1v1h-1zM19 4h1v1h-1zM23 4h1v1h-1zM25 4h1v1h-1zM35 4h1v1h-1zM12 5h1v1h-1zM42 5h1v1h-1zM46 5h1v1h-1zM10 6h1v1h-1zM15 6h1v1h-1zM17 6h1v1h-1zM34 6h1v1h-1zM37 6h1v1h-1zM40 6h1v1h-1zM41 6h1v1h-1zM46 6h1v1h-1zM14 7h1v1h-1zM16 7h1v1h-1zM17 7h1v1h-1zM37 7h1v1h-1zM3 8h1v1h-1zM19 8h1v1h-1zM23 8h1v1h-1zM29 8h1v1h-1zM42 8h1v1h-1zM46 8h1v1h-1zM13 9h1v1h-1zM29 9h1v1h-1zM31 9h1v1h-1zM2 10h1v1h-1zM4 10h1v1h-1zM20 10h1v1h-1zM26 10h1v1h-1zM35 10h1v1h-1zM41 10h1v1h-1zM43 10h1v1h-1zM0 11h1v1h-1zM2 11h1v1h-1zM4 11h1v1h-1zM13 11h1v1h-1zM14 11h1v1h-1zM19 11h1v1h-1zM33 11h1v1h-1zM35 11h1v1h-1zM36 11h1v1h-1zM38 11h1v1h-1zM43 11h1v1h-1zM2 12h1v1h-1zM5 12h1v1h-1zM9 12h1v1h-1zM10 12h1v1h-1zM16 12h1v1h-1zM20 12h1v1h-1zM23 12h1v1h-1zM24 12h1v1h-1zM45 12h1v1h-1zM8 13h1v1h-1zM14 13h1v1h-1zM35 13h1v1h-1zM37 13h1v1h-1zM41 13h1v1h-1zM44 13h1v1h-1zM18 14h1v1h-1zM32 14h1v1h-1zM44 14h1v1h-1zM0 15h1v1h-1zM3 15h1v1h-1zM6 15h1v1h-1zM15 15h1v1h-1zM16 15h1v1h-1zM25 15h1v1h-1zM30 15h1v1h-1zM31 15h1v1h-1zM39 15h1v1h-1zM7 16h1v1h-1zM11 16h1v1h-1zM12 16h1v1h-1zM14 16h1v1h-1zM42 16h1v1h-1zM45 16h1v1h-1zM0 17h1v1h-1zM6 17h1v1h-1zM9 17h1v1h-1zM10 17h1v1h-1zM19 17h1v1h-1zM21 17h1v1h-1zM25 17h1v1h-1zM32 17h1v1h-1zM12 18h1v1h-1zM13 18h1v1h-1zM15 18h1v1h-1zM17 18h1v1h-1zM28 18h1v1h-1zM35 18h1v1h-1zM37 18h1v1h-1zM38 18h1v1h-1z"/><path fill="#fff" fill-opacity="0.6" d="M9 0h1v1h-1zM13 0h1v1h-1zM27 0h1v1h-1zM44 0h1v1h-1zM12 1h1v1h-1zM13 1h1v1h-1zM14 1h1v1h-1zM15 2h1v1h-1zM33 2h1v1h-1zM41 2h1v1h-1zM41 4h1v1h-1zM8 5h1v1h-1zM17 5h1v1h-1zM3 6h1v1h-1zM0 7h1v1h-1zM2 7h1v1h-1zM16 8h1v1h-1zM26 8h1v1h-1zM30 8h1v1h-1zM17 9h1v1h-1zM26 9h1v1h-1zM33 9h1v1h-1zM34 9h1v1h-1zM39 9h1v1h-1zM21 10h1v1h-1zM9 11h1v1h-1zM46 11h1v1h-1zM0 12h1v1h-1zM6 12h1v1h-1zM25 12h1v1h-1zM38 12h1v1h-1zM40 12h1v1h-1zM9 13h1v1h-1zM42 13h1v1h-1zM21 14h1v1h-1zM28 15h1v1h-1zM2 16h1v1h-1zM27 16h1v1h-1zM8 17h1v1h-1zM30 17h1v1h-1zM9 18h1v1h-1zM20 18h1v1h-1zM42 18h1v1h-1z"/><path fill="#fff" fill-opacity="0.8" d="M12 0h1v1h-1zM24 0h1v1h-1zM4 1h1v1h-1zM6 1h1v1h-1zM7 1h1v1h-1zM30 1h1v1h-1zM39 1h1v1h-1zM36 2h1v1h-1zM0 3h1v1h-1zM11 3h1v1h-1zM25 3h1v1h-1zM22 4h1v1h-1zM28 4h1v1h-1zM29 5h1v1h-1zM45 5h1v1h-1zM1 6h1v1h-1zM28 6h1v1h-1zM27 7h1v1h-1zM30 7h1v1h-1zM24 8h1v1h-1zM25 8h1v1h-1zM45 8h1v1h-1zM0 9h1v1h-1zM4 9h1v1h-1zM23 9h1v1h-1zM37 9h1v1h-1zM5 14h1v1h-1zM24 14h1v1h-1zM26 15h1v1h-1zM5 16h1v1h-1zM43 16h1v1h-1zM23 17h1v1h-1zM37 17h1v1h-1zM30 18h1v1h-1zM44 18h1v1h-1z"/><path fill="#000" fill-opacity="0.6" d="M17 0h1v1h-1zM21 0h1v1h-1zM34 0h1v1h-1zM46 0h1v1h-1zM0 1h1v1h-1zM3 1h1v1h-1zM19 1h1v1h-1zM31 1h1v1h-1zM38 1h1v1h-1zM41 1h1v1h-1zM3 2h1v1h-1zM35 2h1v1h-1zM38 2h1v1h-1zM39 2h1v1h-1zM32 4h1v1h-1zM14 5h1v1h-1zM20 5h1v1h-1zM36 5h1v1h-1zM37 5h1v1h-1zM43 5h1v1h-1zM0 6h1v1h-1zM7 6h1v1h-1zM12 6h1v1h-1zM43 6h1v1h-1zM31 7h1v1h-1zM0 8h1v1h-1zM28 8h1v1h-1zM22 9h1v1h-1zM3 10h1v1h-1zM7 10h1v1h-1zM15 11h1v1h-1zM34 11h1v1h-1zM3 13h1v1h-1zM24 13h1v1h-1zM29 13h1v1h-1zM27 14h1v1h-1zM30 14h1v1h-1zM40 15h1v1h-1zM36 16h1v1h-1zM38 16h1v1h-1zM13 17h1v1h-1zM14 17h1v1h-1zM31 17h1v1h-1zM38 17h1v1h-1zM46 17h1v1h-1zM7 18h1v1h-1z"/><path fill="#fff" fill-opacity="0.45" d="M30 0h1v1h-1zM42 0h1v1h-1zM11 1h1v1h-1zM1 3h1v1h-1zM18 3h1v1h-1zM33 3h1v1h-1zM41 3h1v1h-1zM4 4h1v1h-1zM8 4h1v1h-1zM26 4h1v1h-1zM31 4h1v1h-1zM43 4h1v1h-1zM16 5h1v1h-1zM40 5h1v1h-1zM33 6h1v1h-1zM1 7h1v1h-1zM4 7h1v1h-1zM15 7h1v1h-1zM23 7h1v1h-1zM38 7h1v1h-1zM7 8h1v1h-1zM8 8h1v1h-1zM11 8h1v1h-1zM22 8h1v1h-1zM31 8h1v1h-1zM36 8h1v1h-1zM0 10h1v1h-1zM8 10h1v1h-1zM23 10h1v1h-1zM40 10h1v1h-1zM5 11h1v1h-1zM21 11h1v1h-1zM24 11h1v1h-1zM32 11h1v1h-1zM1 12h1v1h-1zM3 12h1v1h-1zM12 12h1v1h-1zM28 12h1v1h-1zM21 13h1v1h-1zM25 13h1v1h-1zM3 14h1v1h-1zM15 14h1v1h-1zM5 15h1v1h-1zM8 15h1v1h-1zM13 16h1v1h-1zM32 16h1v1h-1zM1 17h1v1h-1zM4 17h1v1h-1zM15 17h1v1h-1zM20 17h1v1h-1zM27 17h1v1h-1zM35 17h1v1h-1zM44 17h1v1h-1zM2 18h1v1h-1zM11 18h1v1h-1zM23 18h1v1h-1zM27 18h1v1h-1zM32 18h1v1h-1zM46 18h1v1h-1z"/><path fill="#000" fill-opacity="0.8" d="M21 1h1v1h-1zM0 2h1v1h-1zM9 2h1v1h-1zM22 2h1v1h-1zM36 3h1v1h-1zM38 3h1v1h-1zM29 4h1v1h-1zM15 5h1v1h-1zM21 5h1v1h-1zM5 6h1v1h-1zM9 6h1v1h-1zM39 7h1v1h-1zM42 7h1v1h-1zM1 9h1v1h-1zM21 9h1v1h-1zM45 9h1v1h-1zM10 10h1v1h-1zM11 10h1v1h-1zM30 10h1v1h-1zM22 11h1v1h-1zM28 11h1v1h-1zM4 14h1v1h-1zM7 14h1v1h-1zM35 14h1v1h-1zM42 14h1v1h-1zM39 16h1v1h-1zM41 16h1v1h-1zM45 17h1v1h-1z"/></g>
<rect x="563.75" y="175.7" width="90" height="35.20000000000002" fill="#7f7f7f"/>
<rect x="563.75" y="175.7" width="90" height="35.20000000000002" fill="#000" filter="url(#fnFine)" opacity="0.12"/>
<linearGradient id="sm2s" x1="0" y1="0" x2="1" y2="0"><stop offset="0.000" stop-color="#949494"/><stop offset="0.056" stop-color="#d0d0d0"/><stop offset="0.112" stop-color="#dadada"/><stop offset="0.168" stop-color="#dadada"/><stop offset="0.223" stop-color="#c3c3c3"/><stop offset="0.279" stop-color="#a2a2a2"/><stop offset="0.335" stop-color="#959595"/><stop offset="0.391" stop-color="#989898"/><stop offset="0.447" stop-color="#b0b0b0"/><stop offset="0.503" stop-color="#b7b7b7"/><stop offset="0.559" stop-color="#9b9b9b"/><stop offset="0.615" stop-color="#939393"/><stop offset="0.670" stop-color="#9d9d9d"/><stop offset="0.726" stop-color="#a9a9a9"/><stop offset="0.782" stop-color="#b7b7b7"/><stop offset="0.838" stop-color="#b6b6b6"/><stop offset="0.894" stop-color="#b5b5b5"/><stop offset="0.950" stop-color="#b7b7b7"/><stop offset="1.000" stop-color="#c1c1c1"/><stop offset="1.000" stop-color="#9e9e9e"/></linearGradient>
<linearGradient id="sm2b" x1="0" y1="0" x2="0" y2="1"><stop offset="0.000" stop-color="#000" stop-opacity="0.000"/><stop offset="0.050" stop-color="#000" stop-opacity="0.001"/><stop offset="0.100" stop-color="#000" stop-opacity="0.004"/><stop offset="0.150" stop-color="#000" stop-opacity="0.014"/><stop offset="0.200" stop-color="#000" stop-opacity="0.037"/><stop offset="0.250" stop-color="#000" stop-opacity="0.087"/><stop offset="0.300" stop-color="#000" stop-opacity="0.174"/><stop offset="0.350" stop-color="#000" stop-opacity="0.300"/><stop offset="0.400" stop-color="#000" stop-opacity="0.447"/><stop offset="0.450" stop-color="#000" stop-opacity="0.575"/><stop offset="0.500" stop-color="#000" stop-opacity="0.638"/><stop offset="0.550" stop-color="#000" stop-opacity="0.610"/><stop offset="0.600" stop-color="#000" stop-opacity="0.504"/><stop offset="0.650" stop-color="#000" stop-opacity="0.358"/><stop offset="0.700" stop-color="#000" stop-opacity="0.220"/><stop offset="0.750" stop-color="#000" stop-opacity="0.116"/><stop offset="0.800" stop-color="#000" stop-opacity="0.053"/><stop offset="0.850" stop-color="#000" stop-opacity="0.021"/><stop offset="0.900" stop-color="#000" stop-opacity="0.007"/><stop offset="0.950" stop-color="#000" stop-opacity="0.002"/><stop offset="1.000" stop-color="#000" stop-opacity="0.001"/></linearGradient>
<rect x="657" y="175.7" width="89.5" height="35.20000000000002" fill="url(#sm2s)"/>
<rect x="657" y="175.7" width="89.5" height="35.20000000000002" fill="#000" filter="url(#fnSmooth)" opacity="0.3"/>
<rect x="657" y="175.7" width="89.5" height="35.20000000000002" fill="url(#sm2b)"/>
<svg x="657" y="175.7" width="89.5" height="35.20000000000002" overflow="hidden"><g filter="url(#blur2)"><ellipse cx="6.6" cy="19.3" rx="5" ry="3.5" fill="#000" opacity="0.6"/><ellipse cx="34.4" cy="19.3" rx="5" ry="3.5" fill="#000" opacity="0.6"/><ellipse cx="45.0" cy="19.3" rx="5" ry="3.5" fill="#000" opacity="0.6"/><ellipse cx="81.6" cy="19.3" rx="5" ry="4" fill="#000" opacity="0.7"/></g></svg>
<rect x="467.1" y="174.6" width="281.00000000000006" height="37.39999999999999" fill="none" stroke="#ffa500" stroke-width="2.2"/>
<text x="446.30" y="184.70" font-family="'Liberation Sans', sans-serif" font-size="8" fill="#222" textLength="17.45" lengthAdjust="spacingAndGlyphs" stroke="#222" stroke-width="0.09" >0.13</text>
<text x="446.30" y="193.70" font-family="'Liberation Sans', sans-serif" font-size="8" fill="#222" textLength="17.45" lengthAdjust="spacingAndGlyphs" stroke="#222" stroke-width="0.09" >1.50</text>
<text x="446.30" y="202.20" font-family="'Liberation Sans', sans-serif" font-size="8" fill="#222" textLength="13.70" lengthAdjust="spacingAndGlyphs" stroke="#222" stroke-width="0.09" >424</text>
<text x="750.50" y="178.60" font-family="'Liberation Sans', sans-serif" font-size="5.8" fill="#333" textLength="16.10" lengthAdjust="spacingAndGlyphs" stroke="#333" stroke-width="0.09" >1.23"</text>
<text x="750.50" y="186.10" font-family="'Liberation Sans', sans-serif" font-size="5.8" fill="#333" textLength="30.20" lengthAdjust="spacingAndGlyphs" stroke="#333" stroke-width="0.09" >(643, 241)</text>
<text x="750.50" y="194.20" font-family="'Liberation Sans', sans-serif" font-size="5.8" fill="#333" textLength="29.50" lengthAdjust="spacingAndGlyphs" stroke="#333" stroke-width="0.09" >20200129</text>
<text x="750.50" y="200.80" font-family="'Liberation Sans', sans-serif" font-size="5.8" fill="#333" textLength="25.00" lengthAdjust="spacingAndGlyphs" stroke="#333" stroke-width="0.09" >v031_01</text>
<text x="750.50" y="207.70" font-family="'Liberation Sans', sans-serif" font-size="5.8" fill="#333" textLength="36.20" lengthAdjust="spacingAndGlyphs" stroke="#333" stroke-width="0.09" >415_RU_025</text>
<linearGradient id="g2d3" x1="0" y1="0" x2="0" y2="1"><stop offset="0" stop-color="#b5b5b5"/><stop offset="0.290" stop-color="#b5b5b5"/><stop offset="0.370" stop-color="#646464"/><stop offset="0.630" stop-color="#646464"/><stop offset="0.710" stop-color="#b5b5b5"/><stop offset="1" stop-color="#b5b5b5"/></linearGradient>
<rect x="470" y="215.29999999999998" width="90" height="35.10000000000002" fill="url(#g2d3)"/>
<g transform="translate(470.00 215.30) scale(1.9149 1.9500)" shape-rendering="crispEdges"><path fill="#000" fill-opacity="0.15" d="M0 0h1v1h-1zM1 0h1v1h-1zM43 0h1v1h-1zM6 1h1v1h-1zM11 1h1v1h-1zM17 1h1v1h-1zM29 1h1v1h-1zM35 1h1v1h-1zM15 2h1v1h-1zM24 2h1v1h-1zM30 2h1v1h-1zM44 2h1v1h-1zM4 3h1v1h-1zM16 3h1v1h-1zM31 3h1v1h-1zM33 3h1v1h-1zM9 4h1v1h-1zM29 4h1v1h-1zM40 4h1v1h-1zM44 4h1v1h-1zM45 4h1v1h-1zM7 5h1v1h-1zM19 5h1v1h-1zM20 5h1v1h-1zM35 5h1v1h-1zM37 5h1v1h-1zM45 5h1v1h-1zM4 6h1v1h-1zM7 6h1v1h-1zM8 6h1v1h-1zM26 6h1v1h-1zM8 7h1v1h-1zM10 7h1v1h-1zM15 7h1v1h-1zM19 7h1v1h-1zM21 7h1v1h-1zM24 7h1v1h-1zM28 7h1v1h-1zM46 7h1v1h-1zM22 8h1v1h-1zM35 8h1v1h-1zM39 8h1v1h-1zM1 9h1v1h-1zM10 9h1v1h-1zM20 9h1v1h-1zM21 9h1v1h-1zM25 9h1v1h-1zM26 9h1v1h-1zM42 9h1v1h-1zM1 10h1v1h-1zM5 10h1v1h-1zM22 10h1v1h-1zM24 10h1v1h-1zM26 10h1v1h-1zM1 11h1v1h-1zM11 11h1v1h-1zM12 11h1v1h-1zM17 11h1v1h-1zM31 11h1v1h-1zM32 11h1v1h-1zM42 11h1v1h-1zM23 12h1v1h-1zM27 12h1v1h-1zM29 12h1v1h-1zM43 12h1v1h-1zM22 13h1v1h-1zM29 13h1v1h-1zM0 14h1v1h-1zM11 14h1v1h-1zM16 14h1v1h-1zM24 14h1v1h-1zM25 14h1v1h-1zM6 15h1v1h-1zM21 15h1v1h-1zM27 15h1v1h-1zM39 15h1v1h-1zM5 16h1v1h-1zM24 16h1v1h-1zM30 16h1v1h-1zM34 16h1v1h-1zM36 16h1v1h-1zM4 17h1v1h-1zM9 17h1v1h-1zM13 17h1v1h-1zM29 17h1v1h-1zM31 17h1v1h-1zM39 17h1v1h-1zM42 17h1v1h-1zM46 17h1v1h-1z"/><path fill="#fff" fill-opacity="0.3" d="M2 0h1v1h-1zM9 0h1v1h-1zM23 0h1v1h-1zM30 0h1v1h-1zM39 0h1v1h-1zM40 0h1v1h-1zM46 0h1v1h-1zM3 1h1v1h-1zM5 1h1v1h-1zM10 1h1v1h-1zM15 1h1v1h-1zM18 1h1v1h-1zM20 1h1v1h-1zM25 1h1v1h-1zM2 2h1v1h-1zM4 2h1v1h-1zM11 2h1v1h-1zM17 2h1v1h-1zM5 3h1v1h-1zM6 3h1v1h-1zM12 3h1v1h-1zM23 3h1v1h-1zM21 4h1v1h-1zM33 4h1v1h-1zM9 5h1v1h-1zM14 5h1v1h-1zM36 5h1v1h-1zM41 5h1v1h-1zM42 5h1v1h-1zM0 6h1v1h-1zM22 6h1v1h-1zM31 6h1v1h-1zM12 7h1v1h-1zM13 7h1v1h-1zM18 7h1v1h-1zM29 7h1v1h-1zM31 7h1v1h-1zM33 7h1v1h-1zM10 8h1v1h-1zM14 8h1v1h-1zM29 8h1v1h-1zM36 8h1v1h-1zM41 8h1v1h-1zM7 9h1v1h-1zM17 9h1v1h-1zM18 9h1v1h-1zM23 9h1v1h-1zM24 9h1v1h-1zM30 9h1v1h-1zM34 9h1v1h-1zM44 9h1v1h-1zM46 9h1v1h-1zM2 10h1v1h-1zM11 10h1v1h-1zM33 10h1v1h-1zM36 10h1v1h-1zM41 10h1v1h-1zM6 11h1v1h-1zM13 11h1v1h-1zM14 11h1v1h-1zM22 11h1v1h-1zM27 11h1v1h-1zM29 11h1v1h-1zM30 11h1v1h-1zM44 11h1v1h-1zM17 12h1v1h-1zM0 13h1v1h-1zM7 13h1v1h-1zM8 13h1v1h-1zM16 13h1v1h-1zM21 13h1v1h-1zM24 13h1v1h-1zM28 13h1v1h-1zM30 13h1v1h-1zM32 13h1v1h-1zM35 13h1v1h-1zM37 13h1v1h-1zM45 13h1v1h-1zM7 14h1v1h-1zM8 14h1v1h-1zM20 14h1v1h-1zM28 14h1v1h-1zM33 14h1v1h-1zM41 14h1v1h-1zM45 14h1v1h-1zM0 15h1v1h-1zM4 15h1v1h-1zM19 15h1v1h-1zM23 15h1v1h-1zM28 15h1v1h-1zM31 15h1v1h-1zM36 15h1v1h-1zM8 16h1v1h-1zM9 16h1v1h-1zM22 16h1v1h-1zM31 16h1v1h-1zM38 16h1v1h-1zM27 17h1v1h-1zM40 17h1v1h-1z"/><path fill="#000" fill-opacity="0.3" d="M3 0h1v1h-1zM4 0h1v1h-1zM16 0h1v1h-1zM32 0h1v1h-1zM37 0h1v1h-1zM9 1h1v1h-1zM22 1h1v1h-1zM43 1h1v1h-1zM0 2h1v1h-1zM7 2h1v1h-1zM9 2h1v1h-1zM26 2h1v1h-1zM34 2h1v1h-1zM9 3h1v1h-1zM14 3h1v1h-1zM18 3h1v1h-1zM19 3h1v1h-1zM25 3h1v1h-1zM30 3h1v1h-1zM36 3h1v1h-1zM37 3h1v1h-1zM40 3h1v1h-1zM0 4h1v1h-1zM4 4h1v1h-1zM6 4h1v1h-1zM14 4h1v1h-1zM17 4h1v1h-1zM27 4h1v1h-1zM39 4h1v1h-1zM1 5h1v1h-1zM23 5h1v1h-1zM28 5h1v1h-1zM29 5h1v1h-1zM33 5h1v1h-1zM40 5h1v1h-1zM44 5h1v1h-1zM5 6h1v1h-1zM15 6h1v1h-1zM35 6h1v1h-1zM38 6h1v1h-1zM41 6h1v1h-1zM2 7h1v1h-1zM4 7h1v1h-1zM6 7h1v1h-1zM7 7h1v1h-1zM34 7h1v1h-1zM35 7h1v1h-1zM42 7h1v1h-1zM45 7h1v1h-1zM7 8h1v1h-1zM25 8h1v1h-1zM31 8h1v1h-1zM38 8h1v1h-1zM2 9h1v1h-1zM4 9h1v1h-1zM5 9h1v1h-1zM38 9h1v1h-1zM39 9h1v1h-1zM45 9h1v1h-1zM0 10h1v1h-1zM3 10h1v1h-1zM7 10h1v1h-1zM32 10h1v1h-1zM34 10h1v1h-1zM40 10h1v1h-1zM43 10h1v1h-1zM44 10h1v1h-1zM4 11h1v1h-1zM8 11h1v1h-1zM15 11h1v1h-1zM0 12h1v1h-1zM6 12h1v1h-1zM21 12h1v1h-1zM40 12h1v1h-1zM1 13h1v1h-1zM2 13h1v1h-1zM15 13h1v1h-1zM1 14h1v1h-1zM9 14h1v1h-1zM26 14h1v1h-1zM31 14h1v1h-1zM32 14h1v1h-1zM36 14h1v1h-1zM2 15h1v1h-1zM12 15h1v1h-1zM32 15h1v1h-1zM1 16h1v1h-1zM6 16h1v1h-1zM17 16h1v1h-1zM20 16h1v1h-1zM43 16h1v1h-1zM10 17h1v1h-1zM15 17h1v1h-1zM18 17h1v1h-1zM22 17h1v1h-1zM26 17h1v1h-1zM41 17h1v1h-1z"/><path fill="#fff" fill-opacity="0.45" d="M5 0h1v1h-1zM10 0h1v1h-1zM12 0h1v1h-1zM13 0h1v1h-1zM42 0h1v1h-1zM12 1h1v1h-1zM13 1h1v1h-1zM24 1h1v1h-1zM26 1h1v1h-1zM33 1h1v1h-1zM14 2h1v1h-1zM21 2h1v1h-1zM10 3h1v1h-1zM15 3h1v1h-1zM42 3h1v1h-1zM44 3h1v1h-1zM19 4h1v1h-1zM31 4h1v1h-1zM6 5h1v1h-1zM11 5h1v1h-1zM13 5h1v1h-1zM15 5h1v1h-1zM34 5h1v1h-1zM39 5h1v1h-1zM2 6h1v1h-1zM24 6h1v1h-1zM37 6h1v1h-1zM40 6h1v1h-1zM42 6h1v1h-1zM20 7h1v1h-1zM26 7h1v1h-1zM40 7h1v1h-1zM24 8h1v1h-1zM26 8h1v1h-1zM27 8h1v1h-1zM36 9h1v1h-1zM28 10h1v1h-1zM29 10h1v1h-1zM30 10h1v1h-1zM39 10h1v1h-1zM33 11h1v1h-1zM39 11h1v1h-1zM41 11h1v1h-1zM45 11h1v1h-1zM35 12h1v1h-1zM37 12h1v1h-1zM5 13h1v1h-1zM9 13h1v1h-1zM17 13h1v1h-1zM25 13h1v1h-1zM34 13h1v1h-1zM17 14h1v1h-1zM21 14h1v1h-1zM38 14h1v1h-1zM40 14h1v1h-1zM42 14h1v1h-1zM13 15h1v1h-1zM14 15h1v1h-1zM15 15h1v1h-1zM16 15h1v1h-1zM24 15h1v1h-1zM33 15h1v1h-1zM44 15h1v1h-1zM2 16h1v1h-1zM25 16h1v1h-1zM40 16h1v1h-1zM42 16h1v1h-1zM46 16h1v1h-1zM0 17h1v1h-1zM16 17h1v1h-1zM37 17h1v1h-1z"/><path fill="#000" fill-opacity="0.6" d="M7 0h1v1h-1zM11 0h1v1h-1zM27 0h1v1h-1zM33 0h1v1h-1zM38 0h1v1h-1zM16 1h1v1h-1zM22 2h1v1h-1zM32 2h1v1h-1zM35 2h1v1h-1zM17 3h1v1h-1zM21 3h1v1h-1zM32 3h1v1h-1zM41 3h1v1h-1zM38 4h1v1h-1zM38 5h1v1h-1zM6 6h1v1h-1zM18 6h1v1h-1zM44 6h1v1h-1zM9 7h1v1h-1zM15 8h1v1h-1zM30 8h1v1h-1zM11 9h1v1h-1zM13 9h1v1h-1zM15 9h1v1h-1zM27 9h1v1h-1zM28 9h1v1h-1zM35 9h1v1h-1zM41 9h1v1h-1zM43 9h1v1h-1zM16 10h1v1h-1zM18 10h1v1h-1zM16 11h1v1h-1zM24 11h1v1h-1zM34 11h1v1h-1zM37 11h1v1h-1zM9 12h1v1h-1zM10 12h1v1h-1zM26 12h1v1h-1zM32 12h1v1h-1zM42 12h1v1h-1zM10 13h1v1h-1zM10 15h1v1h-1zM45 15h1v1h-1zM13 16h1v1h-1zM19 16h1v1h-1zM41 16h1v1h-1zM6 17h1v1h-1zM14 17h1v1h-1z"/><path fill="#000" fill-opacity="0.45" d="M17 0h1v1h-1zM19 0h1v1h-1zM28 1h1v1h-1zM6 2h1v1h-1zM18 2h1v1h-1zM19 2h1v1h-1zM23 2h1v1h-1zM36 2h1v1h-1zM38 2h1v1h-1zM35 3h1v1h-1zM11 4h1v1h-1zM25 4h1v1h-1zM30 4h1v1h-1zM5 5h1v1h-1zM10 5h1v1h-1zM19 6h1v1h-1zM23 6h1v1h-1zM25 6h1v1h-1zM28 6h1v1h-1zM34 6h1v1h-1zM46 6h1v1h-1zM3 7h1v1h-1zM27 7h1v1h-1zM11 8h1v1h-1zM19 8h1v1h-1zM21 8h1v1h-1zM23 8h1v1h-1zM37 8h1v1h-1zM40 8h1v1h-1zM43 8h1v1h-1zM6 9h1v1h-1zM14 9h1v1h-1zM29 9h1v1h-1zM42 10h1v1h-1zM45 10h1v1h-1zM20 11h1v1h-1zM26 11h1v1h-1zM40 11h1v1h-1zM3 12h1v1h-1zM36 12h1v1h-1zM4 13h1v1h-1zM13 13h1v1h-1zM31 13h1v1h-1zM33 13h1v1h-1zM46 13h1v1h-1zM14 14h1v1h-1zM19 14h1v1h-1zM5 15h1v1h-1zM18 15h1v1h-1zM35 15h1v1h-1zM38 15h1v1h-1zM3 16h1v1h-1zM15 16h1v1h-1zM21 16h1v1h-1zM39 16h1v1h-1zM21 17h1v1h-1zM30 17h1v1h-1zM34 17h1v1h-1zM35 17h1v1h-1z"/><path fill="#fff" fill-opacity="0.15" d="M18 0h1v1h-1zM21 0h1v1h-1zM22 0h1v1h-1zM25 0h1v1h-1zM28 0h1v1h-1zM34 0h1v1h-1zM41 0h1v1h-1zM44 0h1v1h-1zM30 1h1v1h-1zM44 1h1v1h-1zM46 1h1v1h-1zM1 2h1v1h-1zM16 2h1v1h-1zM33 2h1v1h-1zM40 2h1v1h-1zM43 2h1v1h-1zM2 3h1v1h-1zM3 3h1v1h-1zM22 3h1v1h-1zM24 3h1v1h-1zM7 4h1v1h-1zM8 4h1v1h-1zM10 4h1v1h-1zM13 4h1v1h-1zM15 4h1v1h-1zM18 4h1v1h-1zM32 4h1v1h-1zM41 4h1v1h-1zM3 5h1v1h-1zM12 5h1v1h-1zM18 5h1v1h-1zM27 5h1v1h-1zM46 5h1v1h-1zM3 6h1v1h-1zM9 6h1v1h-1zM16 6h1v1h-1zM30 6h1v1h-1zM33 6h1v1h-1zM39 6h1v1h-1zM43 6h1v1h-1zM25 7h1v1h-1zM32 7h1v1h-1zM36 7h1v1h-1zM37 7h1v1h-1zM39 7h1v1h-1zM41 7h1v1h-1zM43 7h1v1h-1zM44 7h1v1h-1zM0 8h1v1h-1zM5 8h1v1h-1zM32 8h1v1h-1zM45 8h1v1h-1zM9 9h1v1h-1zM12 9h1v1h-1zM14 10h1v1h-1zM15 10h1v1h-1zM17 10h1v1h-1zM19 10h1v1h-1zM20 10h1v1h-1zM38 10h1v1h-1zM0 11h1v1h-1zM2 11h1v1h-1zM3 11h1v1h-1zM5 11h1v1h-1zM23 11h1v1h-1zM25 11h1v1h-1zM35 11h1v1h-1zM43 11h1v1h-1zM1 12h1v1h-1zM4 12h1v1h-1zM5 12h1v1h-1zM20 12h1v1h-1zM44 12h1v1h-1zM46 12h1v1h-1zM36 13h1v1h-1zM38 13h1v1h-1zM39 13h1v1h-1zM43 13h1v1h-1zM44 13h1v1h-1zM10 14h1v1h-1zM12 14h1v1h-1zM44 14h1v1h-1zM46 14h1v1h-1zM1 15h1v1h-1zM22 15h1v1h-1zM37 15h1v1h-1zM43 15h1v1h-1zM26 16h1v1h-1zM27 16h1v1h-1zM29 16h1v1h-1zM32 16h1v1h-1zM37 16h1v1h-1zM1 17h1v1h-1zM3 17h1v1h-1zM8 17h1v1h-1zM45 17h1v1h-1z"/><path fill="#fff" fill-opacity="0.8" d="M24 0h1v1h-1zM35 0h1v1h-1zM0 1h1v1h-1zM8 1h1v1h-1zM34 1h1v1h-1zM5 2h1v1h-1zM10 2h1v1h-1zM13 2h1v1h-1zM39 2h1v1h-1zM13 3h1v1h-1zM28 3h1v1h-1zM46 3h1v1h-1zM26 4h1v1h-1zM2 5h1v1h-1zM29 6h1v1h-1zM22 7h1v1h-1zM0 9h1v1h-1zM23 10h1v1h-1zM27 10h1v1h-1zM9 11h1v1h-1zM36 11h1v1h-1zM41 12h1v1h-1zM11 13h1v1h-1zM12 13h1v1h-1zM26 13h1v1h-1zM3 14h1v1h-1zM4 14h1v1h-1zM23 14h1v1h-1zM8 15h1v1h-1zM11 15h1v1h-1zM29 15h1v1h-1zM42 15h1v1h-1zM11 16h1v1h-1zM18 16h1v1h-1zM2 17h1v1h-1zM38 17h1v1h-1z"/><path fill="#fff" fill-opacity="0.6" d="M1 1h1v1h-1zM27 1h1v1h-1zM36 1h1v1h-1zM39 1h1v1h-1zM20 2h1v1h-1zM27 2h1v1h-1zM37 2h1v1h-1zM41 2h1v1h-1zM45 2h1v1h-1zM46 2h1v1h-1zM0 3h1v1h-1zM1 3h1v1h-1zM29 3h1v1h-1zM39 3h1v1h-1zM5 4h1v1h-1zM35 4h1v1h-1zM37 4h1v1h-1zM42 4h1v1h-1zM0 5h1v1h-1zM4 5h1v1h-1zM24 5h1v1h-1zM25 5h1v1h-1zM30 5h1v1h-1zM43 5h1v1h-1zM11 7h1v1h-1zM16 7h1v1h-1zM9 8h1v1h-1zM33 8h1v1h-1zM34 8h1v1h-1zM42 8h1v1h-1zM8 9h1v1h-1zM19 9h1v1h-1zM25 10h1v1h-1zM31 10h1v1h-1zM28 11h1v1h-1zM13 12h1v1h-1zM31 12h1v1h-1zM33 12h1v1h-1zM5 14h1v1h-1zM34 14h1v1h-1zM37 14h1v1h-1zM7 15h1v1h-1zM9 15h1v1h-1zM25 15h1v1h-1zM34 15h1v1h-1zM4 16h1v1h-1zM16 16h1v1h-1zM35 16h1v1h-1zM44 16h1v1h-1zM20 17h1v1h-1zM25 17h1v1h-1zM36 17h1v1h-1zM43 17h1v1h-1z"/><path fill="#000" fill-opacity="0.8" d="M43 3h1v1h-1zM43 4h1v1h-1zM17 5h1v1h-1zM1 7h1v1h-1zM1 8h1v1h-1zM20 8h1v1h-1zM44 8h1v1h-1zM22 9h1v1h-1zM10 11h1v1h-1zM18 11h1v1h-1zM46 11h1v1h-1zM25 12h1v1h-1zM28 16h1v1h-1zM32 17h1v1h-1z"/></g>
<rect x="563.75" y="215.29999999999998" width="90" height="35.10000000000002" fill="#7f7f7f"/>
<rect x="563.75" y="215.29999999999998" width="90" height="35.10000000000002" fill="#000" filter="url(#fnFine)" opacity="0.12"/>
<linearGradient id="sm3s" x1="0" y1="0" x2="1" y2="0"><stop offset="0.000" stop-color="#929292"/><stop offset="0.056" stop-color="#b2b2b2"/><stop offset="0.112" stop-color="#b6b6b6"/><stop offset="0.168" stop-color="#a9a9a9"/><stop offset="0.223" stop-color="#979797"/><stop offset="0.279" stop-color="#a2a2a2"/><stop offset="0.335" stop-color="#bbbbbb"/><stop offset="0.391" stop-color="#c7c7c7"/><stop offset="0.447" stop-color="#ababab"/><stop offset="0.503" stop-color="#9f9f9f"/><stop offset="0.559" stop-color="#aeaeae"/><stop offset="0.615" stop-color="#a7a7a7"/><stop offset="0.670" stop-color="#b0b0b0"/><stop offset="0.726" stop-color="#c4c4c4"/><stop offset="0.782" stop-color="#bababa"/><stop offset="0.838" stop-color="#b7b7b7"/><stop offset="0.894" stop-color="#b4b4b4"/><stop offset="0.950" stop-color="#a3a3a3"/><stop offset="1.000" stop-color="#a7a7a7"/><stop offset="1.000" stop-color="#838383"/></linearGradient>
<linearGradient id="sm3b" x1="0" y1="0" x2="0" y2="1"><stop offset="0.000" stop-color="#000" stop-opacity="0.001"/><stop offset="0.050" stop-color="#000" stop-opacity="0.002"/><stop offset="0.100" stop-color="#000" stop-opacity="0.007"/><stop offset="0.150" stop-color="#000" stop-opacity="0.020"/><stop offset="0.200" stop-color="#000" stop-opacity="0.049"/><stop offset="0.250" stop-color="#000" stop-opacity="0.105"/><stop offset="0.300" stop-color="#000" stop-opacity="0.193"/><stop offset="0.350" stop-color="#000" stop-opacity="0.305"/><stop offset="0.400" stop-color="#000" stop-opacity="0.416"/><stop offset="0.450" stop-color="#000" stop-opacity="0.489"/><stop offset="0.500" stop-color="#000" stop-opacity="0.497"/><stop offset="0.550" stop-color="#000" stop-opacity="0.435"/><stop offset="0.600" stop-color="#000" stop-opacity="0.328"/><stop offset="0.650" stop-color="#000" stop-opacity="0.214"/><stop offset="0.700" stop-color="#000" stop-opacity="0.120"/><stop offset="0.750" stop-color="#000" stop-opacity="0.058"/><stop offset="0.800" stop-color="#000" stop-opacity="0.024"/><stop offset="0.850" stop-color="#000" stop-opacity="0.009"/><stop offset="0.900" stop-color="#000" stop-opacity="0.003"/><stop offset="0.950" stop-color="#000" stop-opacity="0.001"/><stop offset="1.000" stop-color="#000" stop-opacity="0.000"/></linearGradient>
<rect x="657" y="215.29999999999998" width="89.5" height="35.10000000000002" fill="url(#sm3s)"/>
<rect x="657" y="215.29999999999998" width="89.5" height="35.10000000000002" fill="#000" filter="url(#fnSmooth)" opacity="0.3"/>
<rect x="657" y="215.29999999999998" width="89.5" height="35.10000000000002" fill="url(#sm3b)"/>
<svg x="657" y="215.29999999999998" width="89.5" height="35.10000000000002" overflow="hidden"><g filter="url(#blur2)"><ellipse cx="38.7" cy="4.7" rx="3" ry="5" fill="#000" opacity="0.55"/><ellipse cx="43.0" cy="20.4" rx="6" ry="3.5" fill="#000" opacity="0.5"/><ellipse cx="23.0" cy="20.7" rx="5" ry="3" fill="#000" opacity="0.35"/><ellipse cx="68.0" cy="17.7" rx="5" ry="3" fill="#000" opacity="0.3"/></g></svg>
<rect x="467.1" y="214.2" width="281.00000000000006" height="37.3" fill="none" stroke="#ff0000" stroke-width="2.2"/>
<text x="446.30" y="224.30" font-family="'Liberation Sans', sans-serif" font-size="8" fill="#222" textLength="17.45" lengthAdjust="spacingAndGlyphs" stroke="#222" stroke-width="0.09" >0.11</text>
<text x="446.30" y="233.30" font-family="'Liberation Sans', sans-serif" font-size="8" fill="#222" textLength="17.45" lengthAdjust="spacingAndGlyphs" stroke="#222" stroke-width="0.09" >1.62</text>
<text x="446.30" y="241.80" font-family="'Liberation Sans', sans-serif" font-size="8" fill="#222" textLength="13.70" lengthAdjust="spacingAndGlyphs" stroke="#222" stroke-width="0.09" >405</text>
<text x="750.50" y="218.20" font-family="'Liberation Sans', sans-serif" font-size="5.8" fill="#333" textLength="16.10" lengthAdjust="spacingAndGlyphs" stroke="#333" stroke-width="0.09" >1.32"</text>
<text x="750.50" y="225.70" font-family="'Liberation Sans', sans-serif" font-size="5.8" fill="#333" textLength="30.20" lengthAdjust="spacingAndGlyphs" stroke="#333" stroke-width="0.09" >(640, 417)</text>
<text x="750.50" y="233.80" font-family="'Liberation Sans', sans-serif" font-size="5.8" fill="#333" textLength="29.50" lengthAdjust="spacingAndGlyphs" stroke="#333" stroke-width="0.09" >20200129</text>
<text x="750.50" y="240.40" font-family="'Liberation Sans', sans-serif" font-size="5.8" fill="#333" textLength="25.00" lengthAdjust="spacingAndGlyphs" stroke="#333" stroke-width="0.09" >v031_01</text>
<text x="750.50" y="247.30" font-family="'Liberation Sans', sans-serif" font-size="5.8" fill="#333" textLength="36.20" lengthAdjust="spacingAndGlyphs" stroke="#333" stroke-width="0.09" >415_RU_044</text>
<text x="843.40" y="47.20" font-family="'Liberation Sans', sans-serif" font-size="10" fill="#111" textLength="43.20" lengthAdjust="spacingAndGlyphs" stroke="#111" stroke-width="0.15" >With Sky</text>
<text x="831.10" y="58.00" font-family="'Liberation Sans', sans-serif" font-size="10" fill="#111" textLength="68.25" lengthAdjust="spacingAndGlyphs" stroke="#111" stroke-width="0.15" >x, y: 640, 426</text>
<text x="934.15" y="47.20" font-family="'Liberation Sans', sans-serif" font-size="10" fill="#111" textLength="63.45" lengthAdjust="spacingAndGlyphs" stroke="#111" stroke-width="0.15" >Clean Image</text>
<text x="931.90" y="58.00" font-family="'Liberation Sans', sans-serif" font-size="10" fill="#111" textLength="68.70" lengthAdjust="spacingAndGlyphs" stroke="#111" stroke-width="0.15" >x, y: 640, 426</text>
<linearGradient id="gSky" x1="0" y1="0" x2="0" y2="1"><stop offset="0.0000" stop-color="#d4d4d4"/><stop offset="0.0050" stop-color="#e9e9e9"/><stop offset="0.0101" stop-color="#f5f5f5"/><stop offset="0.0151" stop-color="#f6f6f6"/><stop offset="0.0201" stop-color="#ebebeb"/><stop offset="0.0251" stop-color="#d7d7d7"/><stop offset="0.0302" stop-color="#bcbcbc"/><stop offset="0.0352" stop-color="#9f9f9f"/><stop offset="0.0402" stop-color="#868686"/><stop offset="0.0452" stop-color="#737373"/><stop offset="0.0503" stop-color="#6b6b6b"/><stop offset="0.0553" stop-color="#6e6e6e"/><stop offset="0.0603" stop-color="#7c7c7c"/><stop offset="0.0653" stop-color="#939393"/><stop offset="0.0704" stop-color="#afafaf"/><stop offset="0.0754" stop-color="#cbcbcb"/><stop offset="0.0804" stop-color="#e3e3e3"/><stop offset="0.0854" stop-color="#f2f2f2"/><stop offset="0.0905" stop-color="#f7f7f7"/><stop offset="0.0955" stop-color="#f0f0f0"/><stop offset="0.1005" stop-color="#dfdfdf"/><stop offset="0.1055" stop-color="#c6c6c6"/><stop offset="0.1106" stop-color="#a9a9a9"/><stop offset="0.1156" stop-color="#8e8e8e"/><stop offset="0.1206" stop-color="#797979"/><stop offset="0.1256" stop-color="#6d6d6d"/><stop offset="0.1307" stop-color="#6c6c6c"/><stop offset="0.1357" stop-color="#767676"/><stop offset="0.1407" stop-color="#8a8a8a"/><stop offset="0.1457" stop-color="#a5a5a5"/><stop offset="0.1508" stop-color="#c2c2c2"/><stop offset="0.1558" stop-color="#dbdbdb"/><stop offset="0.1608" stop-color="#eeeeee"/><stop offset="0.1658" stop-color="#f6f6f6"/><stop offset="0.1709" stop-color="#f4f4f4"/><stop offset="0.1759" stop-color="#e6e6e6"/><stop offset="0.1809" stop-color="#cfcfcf"/><stop offset="0.1859" stop-color="#b3b3b3"/><stop offset="0.1910" stop-color="#979797"/><stop offset="0.1960" stop-color="#7f7f7f"/><stop offset="0.2010" stop-color="#6f6f6f"/><stop offset="0.2060" stop-color="#6b6b6b"/><stop offset="0.2111" stop-color="#717171"/><stop offset="0.2161" stop-color="#838383"/><stop offset="0.2211" stop-color="#9b9b9b"/><stop offset="0.2261" stop-color="#b8b8b8"/><stop offset="0.2312" stop-color="#d3d3d3"/><stop offset="0.2362" stop-color="#e9e9e9"/><stop offset="0.2412" stop-color="#f5f5f5"/><stop offset="0.2462" stop-color="#f6f6f6"/><stop offset="0.2513" stop-color="#ebebeb"/><stop offset="0.2563" stop-color="#d7d7d7"/><stop offset="0.2613" stop-color="#bdbdbd"/><stop offset="0.2663" stop-color="#a0a0a0"/><stop offset="0.2714" stop-color="#878787"/><stop offset="0.2764" stop-color="#747474"/><stop offset="0.2814" stop-color="#6b6b6b"/><stop offset="0.2864" stop-color="#6e6e6e"/><stop offset="0.2915" stop-color="#7c7c7c"/><stop offset="0.2965" stop-color="#929292"/><stop offset="0.3015" stop-color="#aeaeae"/><stop offset="0.3065" stop-color="#cacaca"/><stop offset="0.3116" stop-color="#e2e2e2"/><stop offset="0.3166" stop-color="#f2f2f2"/><stop offset="0.3216" stop-color="#f7f7f7"/><stop offset="0.3266" stop-color="#f0f0f0"/><stop offset="0.3317" stop-color="#dfdfdf"/><stop offset="0.3367" stop-color="#c6c6c6"/><stop offset="0.3417" stop-color="#aaaaaa"/><stop offset="0.3467" stop-color="#8f8f8f"/><stop offset="0.3518" stop-color="#797979"/><stop offset="0.3568" stop-color="#6d6d6d"/><stop offset="0.3618" stop-color="#6c6c6c"/><stop offset="0.3668" stop-color="#767676"/><stop offset="0.3719" stop-color="#8a8a8a"/><stop offset="0.3769" stop-color="#a4a4a4"/><stop offset="0.3819" stop-color="#c1c1c1"/><stop offset="0.3869" stop-color="#dadada"/><stop offset="0.3920" stop-color="#ededed"/><stop offset="0.3970" stop-color="#f6f6f6"/><stop offset="0.4020" stop-color="#f4f4f4"/><stop offset="0.4070" stop-color="#e6e6e6"/><stop offset="0.4121" stop-color="#d0d0d0"/><stop offset="0.4171" stop-color="#b4b4b4"/><stop offset="0.4221" stop-color="#989898"/><stop offset="0.4271" stop-color="#808080"/><stop offset="0.4322" stop-color="#707070"/><stop offset="0.4372" stop-color="#6b6b6b"/><stop offset="0.4422" stop-color="#717171"/><stop offset="0.4472" stop-color="#828282"/><stop offset="0.4523" stop-color="#9b9b9b"/><stop offset="0.4573" stop-color="#b7b7b7"/><stop offset="0.4623" stop-color="#d2d2d2"/><stop offset="0.4673" stop-color="#e8e8e8"/><stop offset="0.4724" stop-color="#f4f4f4"/><stop offset="0.4774" stop-color="#f5f5f5"/><stop offset="0.4824" stop-color="#eaeaea"/><stop offset="0.4874" stop-color="#d3d3d3"/><stop offset="0.4925" stop-color="#b1b1b1"/><stop offset="0.4975" stop-color="#888888"/><stop offset="0.5025" stop-color="#5c5c5c"/><stop offset="0.5075" stop-color="#333333"/><stop offset="0.5126" stop-color="#191919"/><stop offset="0.5176" stop-color="#141414"/><stop offset="0.5226" stop-color="#282828"/><stop offset="0.5276" stop-color="#505050"/><stop offset="0.5327" stop-color="#818181"/><stop offset="0.5377" stop-color="#b0b0b0"/><stop offset="0.5427" stop-color="#d5d5d5"/><stop offset="0.5477" stop-color="#ececec"/><stop offset="0.5528" stop-color="#f5f5f5"/><stop offset="0.5578" stop-color="#f0f0f0"/><stop offset="0.5628" stop-color="#e0e0e0"/><stop offset="0.5678" stop-color="#c7c7c7"/><stop offset="0.5729" stop-color="#ababab"/><stop offset="0.5779" stop-color="#909090"/><stop offset="0.5829" stop-color="#7a7a7a"/><stop offset="0.5879" stop-color="#6d6d6d"/><stop offset="0.5930" stop-color="#6b6b6b"/><stop offset="0.5980" stop-color="#757575"/><stop offset="0.6030" stop-color="#898989"/><stop offset="0.6080" stop-color="#a3a3a3"/><stop offset="0.6131" stop-color="#c0c0c0"/><stop offset="0.6181" stop-color="#dadada"/><stop offset="0.6231" stop-color="#ededed"/><stop offset="0.6281" stop-color="#f6f6f6"/><stop offset="0.6332" stop-color="#f4f4f4"/><stop offset="0.6382" stop-color="#e7e7e7"/><stop offset="0.6432" stop-color="#d0d0d0"/><stop offset="0.6482" stop-color="#b5b5b5"/><stop offset="0.6533" stop-color="#999999"/><stop offset="0.6583" stop-color="#808080"/><stop offset="0.6633" stop-color="#707070"/><stop offset="0.6683" stop-color="#6b6b6b"/><stop offset="0.6734" stop-color="#717171"/><stop offset="0.6784" stop-color="#818181"/><stop offset="0.6834" stop-color="#9a9a9a"/><stop offset="0.6884" stop-color="#b6b6b6"/><stop offset="0.6935" stop-color="#d1d1d1"/><stop offset="0.6985" stop-color="#e7e7e7"/><stop offset="0.7035" stop-color="#f4f4f4"/><stop offset="0.7085" stop-color="#f6f6f6"/><stop offset="0.7136" stop-color="#ececec"/><stop offset="0.7186" stop-color="#d9d9d9"/><stop offset="0.7236" stop-color="#bfbfbf"/><stop offset="0.7286" stop-color="#a2a2a2"/><stop offset="0.7337" stop-color="#888888"/><stop offset="0.7387" stop-color="#757575"/><stop offset="0.7437" stop-color="#6b6b6b"/><stop offset="0.7487" stop-color="#6d6d6d"/><stop offset="0.7538" stop-color="#7a7a7a"/><stop offset="0.7588" stop-color="#919191"/><stop offset="0.7638" stop-color="#acacac"/><stop offset="0.7688" stop-color="#c8c8c8"/><stop offset="0.7739" stop-color="#e1e1e1"/><stop offset="0.7789" stop-color="#f1f1f1"/><stop offset="0.7839" stop-color="#f7f7f7"/><stop offset="0.7889" stop-color="#f1f1f1"/><stop offset="0.7940" stop-color="#e1e1e1"/><stop offset="0.7990" stop-color="#c8c8c8"/><stop offset="0.8040" stop-color="#acacac"/><stop offset="0.8090" stop-color="#919191"/><stop offset="0.8141" stop-color="#7a7a7a"/><stop offset="0.8191" stop-color="#6d6d6d"/><stop offset="0.8241" stop-color="#6b6b6b"/><stop offset="0.8291" stop-color="#757575"/><stop offset="0.8342" stop-color="#888888"/><stop offset="0.8392" stop-color="#a2a2a2"/><stop offset="0.8442" stop-color="#bfbfbf"/><stop offset="0.8492" stop-color="#d9d9d9"/><stop offset="0.8543" stop-color="#ececec"/><stop offset="0.8593" stop-color="#f6f6f6"/><stop offset="0.8643" stop-color="#f4f4f4"/><stop offset="0.8693" stop-color="#e7e7e7"/><stop offset="0.8744" stop-color="#d1d1d1"/><stop offset="0.8794" stop-color="#b6b6b6"/><stop offset="0.8844" stop-color="#9a9a9a"/><stop offset="0.8894" stop-color="#818181"/><stop offset="0.8945" stop-color="#717171"/><stop offset="0.8995" stop-color="#6b6b6b"/><stop offset="0.9045" stop-color="#707070"/><stop offset="0.9095" stop-color="#808080"/><stop offset="0.9146" stop-color="#999999"/><stop offset="0.9196" stop-color="#b5b5b5"/><stop offset="0.9246" stop-color="#d0d0d0"/><stop offset="0.9296" stop-color="#e7e7e7"/><stop offset="0.9347" stop-color="#f4f4f4"/><stop offset="0.9397" stop-color="#f6f6f6"/><stop offset="0.9447" stop-color="#ededed"/><stop offset="0.9497" stop-color="#dadada"/><stop offset="0.9548" stop-color="#c0c0c0"/><stop offset="0.9598" stop-color="#a3a3a3"/><stop offset="0.9648" stop-color="#898989"/><stop offset="0.9698" stop-color="#757575"/><stop offset="0.9749" stop-color="#6b6b6b"/><stop offset="0.9799" stop-color="#6d6d6d"/><stop offset="0.9849" stop-color="#7a7a7a"/><stop offset="0.9899" stop-color="#909090"/><stop offset="0.9950" stop-color="#ababab"/><stop offset="1.0000" stop-color="#c7c7c7"/></linearGradient>
<linearGradient id="gClean" x1="0" y1="0" x2="0" y2="1"><stop offset="0.0000" stop-color="#a3a3a3"/><stop offset="0.0201" stop-color="#a3a3a3"/><stop offset="0.0402" stop-color="#a3a3a3"/><stop offset="0.0603" stop-color="#a3a3a3"/><stop offset="0.0804" stop-color="#a3a3a3"/><stop offset="0.1005" stop-color="#a3a3a3"/><stop offset="0.1206" stop-color="#a3a3a3"/><stop offset="0.1407" stop-color="#a3a3a3"/><stop offset="0.1608" stop-color="#a3a3a3"/><stop offset="0.1809" stop-color="#a3a3a3"/><stop offset="0.2010" stop-color="#a3a3a3"/><stop offset="0.2211" stop-color="#a3a3a3"/><stop offset="0.2412" stop-color="#a3a3a3"/><stop offset="0.2613" stop-color="#a3a3a3"/><stop offset="0.2814" stop-color="#a3a3a3"/><stop offset="0.3015" stop-color="#a3a3a3"/><stop offset="0.3216" stop-color="#a3a3a3"/><stop offset="0.3417" stop-color="#a3a3a3"/><stop offset="0.3618" stop-color="#a3a3a3"/><stop offset="0.3819" stop-color="#a3a3a3"/><stop offset="0.4020" stop-color="#a3a3a3"/><stop offset="0.4221" stop-color="#a3a3a3"/><stop offset="0.4422" stop-color="#a3a3a3"/><stop offset="0.4623" stop-color="#a3a3a3"/><stop offset="0.4824" stop-color="#a0a0a0"/><stop offset="0.5025" stop-color="#646464"/><stop offset="0.5226" stop-color="#2d2d2d"/><stop offset="0.5427" stop-color="#919191"/><stop offset="0.5628" stop-color="#a2a2a2"/><stop offset="0.5829" stop-color="#a3a3a3"/><stop offset="0.6030" stop-color="#a3a3a3"/><stop offset="0.6231" stop-color="#a3a3a3"/><stop offset="0.6432" stop-color="#a3a3a3"/><stop offset="0.6633" stop-color="#a3a3a3"/><stop offset="0.6834" stop-color="#a3a3a3"/><stop offset="0.7035" stop-color="#a3a3a3"/><stop offset="0.7236" stop-color="#a3a3a3"/><stop offset="0.7437" stop-color="#a3a3a3"/><stop offset="0.7638" stop-color="#a3a3a3"/><stop offset="0.7839" stop-color="#a3a3a3"/><stop offset="0.8040" stop-color="#a3a3a3"/><stop offset="0.8241" stop-color="#a3a3a3"/><stop offset="0.8442" stop-color="#a3a3a3"/><stop offset="0.8643" stop-color="#a3a3a3"/><stop offset="0.8844" stop-color="#a3a3a3"/><stop offset="0.9045" stop-color="#a3a3a3"/><stop offset="0.9246" stop-color="#a3a3a3"/><stop offset="0.9447" stop-color="#a3a3a3"/><stop offset="0.9648" stop-color="#a3a3a3"/><stop offset="0.9849" stop-color="#a3a3a3"/></linearGradient>
<rect x="832.6" y="65.4" width="65.3" height="167.29999999999998" fill="url(#gSky)"/>
<g transform="translate(832.60 65.40) scale(1.7184 1.7071)" shape-rendering="crispEdges"><path fill="#000" fill-opacity="0.3" d="M4 0h1v1h-1zM16 0h1v1h-1zM19 0h1v1h-1zM22 0h1v1h-1zM1 1h1v1h-1zM2 1h1v1h-1zM10 1h1v1h-1zM12 1h1v1h-1zM15 1h1v1h-1zM16 1h1v1h-1zM20 1h1v1h-1zM22 1h1v1h-1zM30 1h1v1h-1zM31 1h1v1h-1zM0 2h1v1h-1zM1 2h1v1h-1zM2 2h1v1h-1zM9 2h1v1h-1zM23 2h1v1h-1zM26 2h1v1h-1zM31 2h1v1h-1zM0 3h1v1h-1zM6 3h1v1h-1zM32 3h1v1h-1zM16 4h1v1h-1zM25 4h1v1h-1zM5 5h1v1h-1zM15 5h1v1h-1zM36 5h1v1h-1zM1 6h1v1h-1zM8 6h1v1h-1zM9 6h1v1h-1zM14 6h1v1h-1zM18 6h1v1h-1zM21 6h1v1h-1zM22 6h1v1h-1zM33 6h1v1h-1zM4 7h1v1h-1zM15 7h1v1h-1zM24 7h1v1h-1zM14 8h1v1h-1zM24 8h1v1h-1zM11 9h1v1h-1zM17 9h1v1h-1zM24 9h1v1h-1zM37 9h1v1h-1zM4 10h1v1h-1zM13 10h1v1h-1zM17 10h1v1h-1zM23 10h1v1h-1zM9 11h1v1h-1zM10 11h1v1h-1zM16 11h1v1h-1zM24 11h1v1h-1zM25 11h1v1h-1zM30 11h1v1h-1zM14 12h1v1h-1zM21 12h1v1h-1zM27 12h1v1h-1zM33 13h1v1h-1zM7 14h1v1h-1zM15 14h1v1h-1zM34 14h1v1h-1zM37 14h1v1h-1zM5 15h1v1h-1zM7 15h1v1h-1zM8 15h1v1h-1zM9 15h1v1h-1zM20 15h1v1h-1zM33 15h1v1h-1zM4 16h1v1h-1zM8 16h1v1h-1zM10 16h1v1h-1zM11 16h1v1h-1zM17 16h1v1h-1zM24 16h1v1h-1zM26 16h1v1h-1zM28 16h1v1h-1zM29 16h1v1h-1zM33 16h1v1h-1zM37 16h1v1h-1zM13 17h1v1h-1zM30 17h1v1h-1zM1 18h1v1h-1zM2 18h1v1h-1zM11 18h1v1h-1zM24 18h1v1h-1zM35 18h1v1h-1zM21 19h1v1h-1zM34 19h1v1h-1zM13 20h1v1h-1zM15 20h1v1h-1zM23 20h1v1h-1zM3 21h1v1h-1zM8 21h1v1h-1zM13 21h1v1h-1zM17 21h1v1h-1zM24 21h1v1h-1zM34 21h1v1h-1zM5 22h1v1h-1zM12 22h1v1h-1zM20 22h1v1h-1zM23 22h1v1h-1zM28 22h1v1h-1zM30 22h1v1h-1zM31 22h1v1h-1zM33 22h1v1h-1zM34 22h1v1h-1zM13 23h1v1h-1zM15 23h1v1h-1zM3 24h1v1h-1zM13 24h1v1h-1zM27 24h1v1h-1zM36 24h1v1h-1zM2 25h1v1h-1zM18 25h1v1h-1zM20 25h1v1h-1zM29 25h1v1h-1zM32 25h1v1h-1zM4 26h1v1h-1zM19 26h1v1h-1zM22 26h1v1h-1zM23 26h1v1h-1zM2 27h1v1h-1zM4 27h1v1h-1zM17 27h1v1h-1zM19 27h1v1h-1zM25 27h1v1h-1zM5 28h1v1h-1zM6 28h1v1h-1zM24 28h1v1h-1zM27 28h1v1h-1zM2 29h1v1h-1zM4 29h1v1h-1zM19 29h1v1h-1zM26 29h1v1h-1zM3 30h1v1h-1zM19 30h1v1h-1zM28 30h1v1h-1zM30 30h1v1h-1zM4 31h1v1h-1zM8 31h1v1h-1zM28 31h1v1h-1zM1 32h1v1h-1zM6 32h1v1h-1zM7 32h1v1h-1zM12 32h1v1h-1zM26 32h1v1h-1zM33 32h1v1h-1zM0 33h1v1h-1zM24 33h1v1h-1zM31 33h1v1h-1zM32 33h1v1h-1zM33 33h1v1h-1zM0 34h1v1h-1zM4 34h1v1h-1zM5 34h1v1h-1zM6 34h1v1h-1zM7 34h1v1h-1zM11 34h1v1h-1zM22 34h1v1h-1zM24 34h1v1h-1zM27 34h1v1h-1zM36 34h1v1h-1zM16 35h1v1h-1zM19 35h1v1h-1zM20 35h1v1h-1zM31 35h1v1h-1zM3 36h1v1h-1zM8 36h1v1h-1zM13 36h1v1h-1zM14 36h1v1h-1zM2 37h1v1h-1zM7 37h1v1h-1zM8 37h1v1h-1zM31 37h1v1h-1zM35 37h1v1h-1zM9 38h1v1h-1zM16 38h1v1h-1zM24 38h1v1h-1zM15 39h1v1h-1zM20 39h1v1h-1zM23 39h1v1h-1zM3 40h1v1h-1zM11 40h1v1h-1zM20 40h1v1h-1zM37 40h1v1h-1zM4 41h1v1h-1zM17 41h1v1h-1zM20 41h1v1h-1zM21 43h1v1h-1zM32 43h1v1h-1zM0 44h1v1h-1zM2 44h1v1h-1zM14 44h1v1h-1zM18 44h1v1h-1zM25 44h1v1h-1zM29 44h1v1h-1zM30 44h1v1h-1zM6 45h1v1h-1zM7 45h1v1h-1zM10 45h1v1h-1zM22 45h1v1h-1zM23 45h1v1h-1zM25 45h1v1h-1zM32 45h1v1h-1zM11 46h1v1h-1zM12 46h1v1h-1zM13 46h1v1h-1zM29 46h1v1h-1zM9 47h1v1h-1zM11 47h1v1h-1zM26 47h1v1h-1zM2 48h1v1h-1zM9 48h1v1h-1zM13 48h1v1h-1zM14 48h1v1h-1zM18 48h1v1h-1zM21 48h1v1h-1zM24 48h1v1h-1zM1 49h1v1h-1zM5 49h1v1h-1zM27 49h1v1h-1zM30 49h1v1h-1zM4 50h1v1h-1zM21 50h1v1h-1zM33 50h1v1h-1zM1 51h1v1h-1zM7 51h1v1h-1zM14 51h1v1h-1zM19 51h1v1h-1zM29 51h1v1h-1zM35 51h1v1h-1zM8 52h1v1h-1zM13 52h1v1h-1zM16 52h1v1h-1zM26 52h1v1h-1zM5 53h1v1h-1zM18 53h1v1h-1zM31 53h1v1h-1zM32 53h1v1h-1zM6 54h1v1h-1zM18 54h1v1h-1zM20 54h1v1h-1zM21 54h1v1h-1zM22 54h1v1h-1zM15 55h1v1h-1zM23 55h1v1h-1zM6 57h1v1h-1zM9 57h1v1h-1zM11 57h1v1h-1zM18 57h1v1h-1zM32 57h1v1h-1zM5 58h1v1h-1zM15 58h1v1h-1zM19 58h1v1h-1zM20 58h1v1h-1zM21 58h1v1h-1zM36 58h1v1h-1zM10 59h1v1h-1zM20 59h1v1h-1zM31 59h1v1h-1zM14 60h1v1h-1zM13 61h1v1h-1zM21 61h1v1h-1zM35 61h1v1h-1zM3 62h1v1h-1zM9 62h1v1h-1zM26 62h1v1h-1zM36 62h1v1h-1zM7 63h1v1h-1zM19 63h1v1h-1zM22 63h1v1h-1zM27 63h1v1h-1zM37 63h1v1h-1zM14 64h1v1h-1zM18 64h1v1h-1zM21 64h1v1h-1zM23 64h1v1h-1zM15 65h1v1h-1zM31 65h1v1h-1zM34 65h1v1h-1zM0 66h1v1h-1zM8 66h1v1h-1zM21 66h1v1h-1zM31 66h1v1h-1zM0 67h1v1h-1zM9 67h1v1h-1zM12 67h1v1h-1zM25 67h1v1h-1zM28 67h1v1h-1zM0 68h1v1h-1zM9 68h1v1h-1zM16 68h1v1h-1zM33 68h1v1h-1zM0 69h1v1h-1zM4 69h1v1h-1zM12 69h1v1h-1zM15 69h1v1h-1zM22 69h1v1h-1zM24 69h1v1h-1zM28 69h1v1h-1zM30 69h1v1h-1zM3 70h1v1h-1zM17 70h1v1h-1zM21 70h1v1h-1zM27 70h1v1h-1zM28 70h1v1h-1zM32 70h1v1h-1zM35 70h1v1h-1zM3 71h1v1h-1zM19 71h1v1h-1zM31 71h1v1h-1zM6 72h1v1h-1zM20 72h1v1h-1zM36 72h1v1h-1zM13 73h1v1h-1zM17 73h1v1h-1zM34 73h1v1h-1zM7 74h1v1h-1zM9 74h1v1h-1zM13 74h1v1h-1zM14 74h1v1h-1zM22 74h1v1h-1zM36 74h1v1h-1zM0 75h1v1h-1zM10 75h1v1h-1zM35 75h1v1h-1zM2 76h1v1h-1zM5 76h1v1h-1zM11 76h1v1h-1zM16 76h1v1h-1zM34 76h1v1h-1zM37 76h1v1h-1zM6 77h1v1h-1zM21 77h1v1h-1zM37 77h1v1h-1zM3 78h1v1h-1zM8 78h1v1h-1zM10 78h1v1h-1zM11 78h1v1h-1zM27 78h1v1h-1zM31 78h1v1h-1zM11 79h1v1h-1zM27 79h1v1h-1zM28 79h1v1h-1zM36 79h1v1h-1zM0 80h1v1h-1zM7 80h1v1h-1zM29 80h1v1h-1zM0 81h1v1h-1zM10 81h1v1h-1zM11 81h1v1h-1zM12 81h1v1h-1zM14 81h1v1h-1zM1 82h1v1h-1zM15 82h1v1h-1zM19 82h1v1h-1zM22 82h1v1h-1zM29 82h1v1h-1zM3 83h1v1h-1zM9 83h1v1h-1zM13 83h1v1h-1zM15 83h1v1h-1zM23 83h1v1h-1zM26 83h1v1h-1zM27 83h1v1h-1zM11 84h1v1h-1zM26 84h1v1h-1zM30 84h1v1h-1zM4 85h1v1h-1zM17 85h1v1h-1zM31 85h1v1h-1zM35 85h1v1h-1zM3 86h1v1h-1zM18 86h1v1h-1zM27 86h1v1h-1zM30 86h1v1h-1zM35 86h1v1h-1zM3 87h1v1h-1zM13 87h1v1h-1zM15 87h1v1h-1zM19 87h1v1h-1zM32 87h1v1h-1zM36 87h1v1h-1zM3 88h1v1h-1zM25 88h1v1h-1zM29 88h1v1h-1zM33 88h1v1h-1zM37 88h1v1h-1zM4 89h1v1h-1zM5 89h1v1h-1zM33 89h1v1h-1zM34 89h1v1h-1zM0 90h1v1h-1zM16 90h1v1h-1zM18 90h1v1h-1zM19 90h1v1h-1zM31 90h1v1h-1zM10 91h1v1h-1zM18 91h1v1h-1zM20 91h1v1h-1zM23 91h1v1h-1zM35 91h1v1h-1zM0 92h1v1h-1zM10 92h1v1h-1zM28 92h1v1h-1zM34 92h1v1h-1zM35 92h1v1h-1zM37 92h1v1h-1zM3 93h1v1h-1zM15 93h1v1h-1zM31 93h1v1h-1zM35 93h1v1h-1zM18 94h1v1h-1zM20 94h1v1h-1zM22 94h1v1h-1zM37 94h1v1h-1zM0 95h1v1h-1zM7 95h1v1h-1zM8 95h1v1h-1zM9 95h1v1h-1zM21 95h1v1h-1zM29 95h1v1h-1zM31 95h1v1h-1zM11 96h1v1h-1zM13 96h1v1h-1zM15 96h1v1h-1zM16 96h1v1h-1zM18 96h1v1h-1zM24 96h1v1h-1zM2 97h1v1h-1zM3 97h1v1h-1zM15 97h1v1h-1zM21 97h1v1h-1zM24 97h1v1h-1zM33 97h1v1h-1z"/><path fill="#000" fill-opacity="0.15" d="M6 0h1v1h-1zM9 0h1v1h-1zM11 0h1v1h-1zM17 0h1v1h-1zM29 0h1v1h-1zM31 0h1v1h-1zM0 1h1v1h-1zM4 1h1v1h-1zM19 1h1v1h-1zM23 1h1v1h-1zM26 1h1v1h-1zM27 1h1v1h-1zM28 1h1v1h-1zM8 2h1v1h-1zM11 2h1v1h-1zM12 2h1v1h-1zM13 2h1v1h-1zM29 2h1v1h-1zM33 2h1v1h-1zM2 3h1v1h-1zM4 3h1v1h-1zM12 3h1v1h-1zM13 3h1v1h-1zM28 3h1v1h-1zM30 3h1v1h-1zM11 4h1v1h-1zM12 4h1v1h-1zM21 4h1v1h-1zM26 4h1v1h-1zM33 4h1v1h-1zM6 5h1v1h-1zM8 5h1v1h-1zM11 5h1v1h-1zM12 5h1v1h-1zM27 5h1v1h-1zM29 5h1v1h-1zM32 5h1v1h-1zM33 5h1v1h-1zM4 6h1v1h-1zM5 6h1v1h-1zM7 6h1v1h-1zM10 6h1v1h-1zM11 6h1v1h-1zM15 6h1v1h-1zM19 6h1v1h-1zM11 7h1v1h-1zM12 7h1v1h-1zM14 7h1v1h-1zM16 7h1v1h-1zM21 7h1v1h-1zM18 8h1v1h-1zM20 8h1v1h-1zM22 8h1v1h-1zM23 8h1v1h-1zM25 8h1v1h-1zM26 8h1v1h-1zM29 8h1v1h-1zM33 8h1v1h-1zM34 8h1v1h-1zM35 8h1v1h-1zM1 9h1v1h-1zM4 9h1v1h-1zM5 9h1v1h-1zM27 9h1v1h-1zM30 9h1v1h-1zM34 9h1v1h-1zM36 9h1v1h-1zM1 10h1v1h-1zM5 10h1v1h-1zM9 10h1v1h-1zM14 10h1v1h-1zM15 10h1v1h-1zM18 10h1v1h-1zM20 10h1v1h-1zM24 10h1v1h-1zM27 10h1v1h-1zM34 10h1v1h-1zM35 10h1v1h-1zM2 11h1v1h-1zM15 11h1v1h-1zM17 11h1v1h-1zM19 11h1v1h-1zM28 11h1v1h-1zM37 11h1v1h-1zM3 12h1v1h-1zM24 12h1v1h-1zM33 12h1v1h-1zM34 12h1v1h-1zM35 12h1v1h-1zM0 13h1v1h-1zM3 13h1v1h-1zM6 13h1v1h-1zM8 13h1v1h-1zM14 13h1v1h-1zM27 13h1v1h-1zM30 13h1v1h-1zM6 14h1v1h-1zM8 14h1v1h-1zM10 14h1v1h-1zM11 14h1v1h-1zM19 14h1v1h-1zM24 14h1v1h-1zM28 14h1v1h-1zM35 14h1v1h-1zM0 15h1v1h-1zM1 15h1v1h-1zM14 15h1v1h-1zM17 15h1v1h-1zM29 15h1v1h-1zM30 15h1v1h-1zM32 15h1v1h-1zM2 16h1v1h-1zM5 16h1v1h-1zM12 16h1v1h-1zM20 16h1v1h-1zM21 16h1v1h-1zM23 16h1v1h-1zM32 16h1v1h-1zM2 17h1v1h-1zM4 17h1v1h-1zM6 17h1v1h-1zM7 17h1v1h-1zM9 17h1v1h-1zM20 17h1v1h-1zM25 17h1v1h-1zM31 17h1v1h-1zM33 17h1v1h-1zM0 18h1v1h-1zM16 18h1v1h-1zM21 18h1v1h-1zM26 18h1v1h-1zM29 18h1v1h-1zM6 19h1v1h-1zM16 19h1v1h-1zM20 19h1v1h-1zM27 19h1v1h-1zM37 19h1v1h-1zM8 20h1v1h-1zM19 20h1v1h-1zM24 20h1v1h-1zM28 20h1v1h-1zM32 20h1v1h-1zM36 20h1v1h-1zM4 21h1v1h-1zM15 21h1v1h-1zM25 21h1v1h-1zM31 21h1v1h-1zM37 21h1v1h-1zM1 22h1v1h-1zM4 22h1v1h-1zM14 22h1v1h-1zM1 23h1v1h-1zM6 23h1v1h-1zM37 23h1v1h-1zM14 24h1v1h-1zM15 24h1v1h-1zM18 24h1v1h-1zM19 24h1v1h-1zM35 24h1v1h-1zM6 25h1v1h-1zM7 25h1v1h-1zM11 25h1v1h-1zM34 25h1v1h-1zM37 25h1v1h-1zM0 26h1v1h-1zM1 26h1v1h-1zM2 26h1v1h-1zM8 26h1v1h-1zM24 26h1v1h-1zM30 26h1v1h-1zM33 26h1v1h-1zM5 27h1v1h-1zM11 27h1v1h-1zM16 27h1v1h-1zM23 27h1v1h-1zM33 27h1v1h-1zM2 28h1v1h-1zM21 28h1v1h-1zM30 28h1v1h-1zM32 28h1v1h-1zM5 29h1v1h-1zM8 29h1v1h-1zM15 29h1v1h-1zM18 29h1v1h-1zM35 29h1v1h-1zM1 30h1v1h-1zM10 30h1v1h-1zM13 30h1v1h-1zM14 30h1v1h-1zM23 30h1v1h-1zM24 30h1v1h-1zM27 30h1v1h-1zM0 31h1v1h-1zM2 31h1v1h-1zM10 31h1v1h-1zM12 31h1v1h-1zM16 31h1v1h-1zM27 31h1v1h-1zM29 31h1v1h-1zM32 31h1v1h-1zM4 32h1v1h-1zM5 32h1v1h-1zM15 32h1v1h-1zM16 32h1v1h-1zM22 32h1v1h-1zM28 32h1v1h-1zM32 32h1v1h-1zM34 32h1v1h-1zM2 33h1v1h-1zM5 33h1v1h-1zM6 33h1v1h-1zM14 33h1v1h-1zM17 33h1v1h-1zM18 33h1v1h-1zM19 33h1v1h-1zM20 33h1v1h-1zM23 33h1v1h-1zM34 33h1v1h-1zM35 33h1v1h-1zM8 34h1v1h-1zM14 34h1v1h-1zM17 34h1v1h-1zM19 34h1v1h-1zM2 35h1v1h-1zM3 35h1v1h-1zM4 35h1v1h-1zM6 35h1v1h-1zM8 35h1v1h-1zM9 35h1v1h-1zM13 35h1v1h-1zM21 35h1v1h-1zM24 35h1v1h-1zM26 35h1v1h-1zM27 35h1v1h-1zM36 35h1v1h-1zM0 36h1v1h-1zM4 36h1v1h-1zM7 36h1v1h-1zM22 36h1v1h-1zM24 36h1v1h-1zM35 36h1v1h-1zM36 36h1v1h-1zM24 37h1v1h-1zM36 37h1v1h-1zM5 38h1v1h-1zM23 38h1v1h-1zM31 38h1v1h-1zM36 38h1v1h-1zM0 39h1v1h-1zM4 39h1v1h-1zM14 39h1v1h-1zM26 39h1v1h-1zM32 39h1v1h-1zM9 40h1v1h-1zM12 40h1v1h-1zM17 40h1v1h-1zM18 40h1v1h-1zM24 40h1v1h-1zM26 40h1v1h-1zM36 40h1v1h-1zM2 41h1v1h-1zM6 41h1v1h-1zM7 41h1v1h-1zM15 41h1v1h-1zM29 41h1v1h-1zM31 41h1v1h-1zM33 41h1v1h-1zM34 41h1v1h-1zM0 42h1v1h-1zM18 42h1v1h-1zM27 42h1v1h-1zM29 42h1v1h-1zM33 42h1v1h-1zM35 42h1v1h-1zM2 43h1v1h-1zM5 43h1v1h-1zM11 43h1v1h-1zM14 43h1v1h-1zM15 43h1v1h-1zM19 43h1v1h-1zM22 43h1v1h-1zM23 43h1v1h-1zM24 43h1v1h-1zM27 43h1v1h-1zM28 43h1v1h-1zM37 43h1v1h-1zM12 44h1v1h-1zM13 44h1v1h-1zM20 44h1v1h-1zM35 44h1v1h-1zM11 45h1v1h-1zM12 45h1v1h-1zM15 45h1v1h-1zM16 45h1v1h-1zM20 45h1v1h-1zM28 45h1v1h-1zM36 45h1v1h-1zM2 46h1v1h-1zM7 46h1v1h-1zM16 46h1v1h-1zM24 46h1v1h-1zM25 46h1v1h-1zM28 46h1v1h-1zM2 47h1v1h-1zM3 47h1v1h-1zM8 47h1v1h-1zM20 47h1v1h-1zM25 47h1v1h-1zM32 47h1v1h-1zM33 47h1v1h-1zM34 47h1v1h-1zM35 47h1v1h-1zM37 47h1v1h-1zM6 48h1v1h-1zM11 48h1v1h-1zM20 48h1v1h-1zM26 48h1v1h-1zM36 48h1v1h-1zM13 49h1v1h-1zM17 49h1v1h-1zM20 49h1v1h-1zM0 50h1v1h-1zM2 50h1v1h-1zM6 50h1v1h-1zM11 50h1v1h-1zM15 50h1v1h-1zM19 50h1v1h-1zM20 50h1v1h-1zM25 50h1v1h-1zM32 50h1v1h-1zM13 51h1v1h-1zM16 51h1v1h-1zM17 51h1v1h-1zM21 51h1v1h-1zM25 51h1v1h-1zM33 51h1v1h-1zM1 52h1v1h-1zM9 52h1v1h-1zM17 52h1v1h-1zM23 52h1v1h-1zM25 52h1v1h-1zM29 52h1v1h-1zM1 53h1v1h-1zM3 53h1v1h-1zM13 53h1v1h-1zM22 53h1v1h-1zM30 53h1v1h-1zM37 53h1v1h-1zM14 54h1v1h-1zM17 54h1v1h-1zM29 54h1v1h-1zM33 54h1v1h-1zM37 54h1v1h-1zM4 55h1v1h-1zM6 55h1v1h-1zM8 55h1v1h-1zM11 55h1v1h-1zM14 55h1v1h-1zM16 55h1v1h-1zM25 55h1v1h-1zM26 55h1v1h-1zM31 55h1v1h-1zM33 55h1v1h-1zM1 56h1v1h-1zM13 56h1v1h-1zM19 56h1v1h-1zM30 57h1v1h-1zM33 57h1v1h-1zM37 57h1v1h-1zM2 58h1v1h-1zM8 58h1v1h-1zM17 58h1v1h-1zM26 58h1v1h-1zM33 58h1v1h-1zM35 58h1v1h-1zM1 59h1v1h-1zM5 59h1v1h-1zM15 59h1v1h-1zM6 60h1v1h-1zM34 60h1v1h-1zM35 60h1v1h-1zM9 61h1v1h-1zM15 61h1v1h-1zM16 61h1v1h-1zM17 61h1v1h-1zM18 61h1v1h-1zM19 61h1v1h-1zM27 61h1v1h-1zM37 61h1v1h-1zM0 62h1v1h-1zM2 62h1v1h-1zM12 62h1v1h-1zM15 62h1v1h-1zM16 62h1v1h-1zM19 62h1v1h-1zM23 62h1v1h-1zM28 62h1v1h-1zM0 63h1v1h-1zM16 63h1v1h-1zM29 63h1v1h-1zM35 63h1v1h-1zM10 64h1v1h-1zM17 64h1v1h-1zM27 64h1v1h-1zM6 65h1v1h-1zM10 65h1v1h-1zM12 65h1v1h-1zM16 65h1v1h-1zM17 65h1v1h-1zM19 65h1v1h-1zM29 65h1v1h-1zM33 65h1v1h-1zM5 66h1v1h-1zM6 66h1v1h-1zM24 66h1v1h-1zM28 66h1v1h-1zM33 66h1v1h-1zM36 66h1v1h-1zM16 67h1v1h-1zM20 67h1v1h-1zM22 67h1v1h-1zM33 67h1v1h-1zM3 68h1v1h-1zM12 68h1v1h-1zM20 68h1v1h-1zM21 68h1v1h-1zM25 68h1v1h-1zM19 69h1v1h-1zM20 69h1v1h-1zM0 70h1v1h-1zM5 70h1v1h-1zM12 70h1v1h-1zM13 70h1v1h-1zM20 70h1v1h-1zM25 70h1v1h-1zM36 70h1v1h-1zM0 71h1v1h-1zM6 71h1v1h-1zM9 71h1v1h-1zM13 71h1v1h-1zM26 71h1v1h-1zM28 71h1v1h-1zM32 71h1v1h-1zM36 71h1v1h-1zM0 72h1v1h-1zM4 72h1v1h-1zM16 72h1v1h-1zM23 72h1v1h-1zM24 72h1v1h-1zM27 72h1v1h-1zM29 72h1v1h-1zM2 73h1v1h-1zM3 73h1v1h-1zM8 73h1v1h-1zM19 73h1v1h-1zM20 73h1v1h-1zM25 73h1v1h-1zM26 73h1v1h-1zM27 73h1v1h-1zM5 74h1v1h-1zM8 74h1v1h-1zM26 74h1v1h-1zM27 74h1v1h-1zM33 74h1v1h-1zM37 74h1v1h-1zM7 75h1v1h-1zM12 75h1v1h-1zM25 75h1v1h-1zM30 75h1v1h-1zM8 76h1v1h-1zM13 76h1v1h-1zM15 76h1v1h-1zM18 76h1v1h-1zM20 76h1v1h-1zM26 76h1v1h-1zM31 76h1v1h-1zM32 76h1v1h-1zM1 77h1v1h-1zM2 77h1v1h-1zM13 77h1v1h-1zM17 77h1v1h-1zM26 77h1v1h-1zM28 77h1v1h-1zM29 77h1v1h-1zM35 77h1v1h-1zM1 78h1v1h-1zM4 78h1v1h-1zM15 78h1v1h-1zM19 78h1v1h-1zM22 78h1v1h-1zM25 78h1v1h-1zM3 79h1v1h-1zM4 79h1v1h-1zM8 79h1v1h-1zM17 79h1v1h-1zM30 79h1v1h-1zM34 79h1v1h-1zM35 79h1v1h-1zM5 80h1v1h-1zM6 80h1v1h-1zM9 80h1v1h-1zM11 80h1v1h-1zM14 80h1v1h-1zM22 80h1v1h-1zM23 80h1v1h-1zM7 81h1v1h-1zM26 81h1v1h-1zM27 81h1v1h-1zM30 81h1v1h-1zM31 81h1v1h-1zM10 82h1v1h-1zM11 82h1v1h-1zM17 82h1v1h-1zM31 82h1v1h-1zM5 83h1v1h-1zM8 83h1v1h-1zM19 83h1v1h-1zM21 83h1v1h-1zM29 83h1v1h-1zM31 83h1v1h-1zM33 83h1v1h-1zM2 84h1v1h-1zM7 84h1v1h-1zM27 84h1v1h-1zM28 84h1v1h-1zM32 84h1v1h-1zM37 84h1v1h-1zM2 85h1v1h-1zM14 85h1v1h-1zM15 85h1v1h-1zM19 85h1v1h-1zM20 85h1v1h-1zM22 85h1v1h-1zM24 85h1v1h-1zM36 85h1v1h-1zM1 86h1v1h-1zM6 86h1v1h-1zM9 86h1v1h-1zM23 86h1v1h-1zM24 86h1v1h-1zM28 86h1v1h-1zM5 87h1v1h-1zM8 87h1v1h-1zM9 87h1v1h-1zM25 87h1v1h-1zM29 87h1v1h-1zM16 88h1v1h-1zM31 88h1v1h-1zM0 89h1v1h-1zM7 89h1v1h-1zM15 89h1v1h-1zM19 89h1v1h-1zM29 89h1v1h-1zM32 89h1v1h-1zM36 89h1v1h-1zM1 90h1v1h-1zM35 90h1v1h-1zM36 90h1v1h-1zM7 91h1v1h-1zM15 91h1v1h-1zM19 91h1v1h-1zM26 91h1v1h-1zM30 91h1v1h-1zM33 91h1v1h-1zM34 91h1v1h-1zM3 92h1v1h-1zM9 92h1v1h-1zM13 92h1v1h-1zM18 92h1v1h-1zM19 92h1v1h-1zM22 92h1v1h-1zM26 92h1v1h-1zM0 93h1v1h-1zM7 93h1v1h-1zM10 93h1v1h-1zM13 93h1v1h-1zM14 93h1v1h-1zM21 93h1v1h-1zM24 93h1v1h-1zM28 93h1v1h-1zM29 93h1v1h-1zM37 93h1v1h-1zM1 94h1v1h-1zM5 94h1v1h-1zM7 94h1v1h-1zM10 94h1v1h-1zM14 94h1v1h-1zM26 94h1v1h-1zM32 94h1v1h-1zM6 95h1v1h-1zM24 95h1v1h-1zM28 95h1v1h-1zM30 95h1v1h-1zM8 96h1v1h-1zM9 96h1v1h-1zM10 96h1v1h-1zM12 96h1v1h-1zM23 96h1v1h-1zM28 96h1v1h-1zM29 96h1v1h-1zM31 96h1v1h-1zM0 97h1v1h-1zM10 97h1v1h-1zM13 97h1v1h-1zM16 97h1v1h-1zM22 97h1v1h-1zM32 97h1v1h-1zM36 97h1v1h-1z"/><path fill="#fff" fill-opacity="0.3" d="M7 0h1v1h-1zM10 0h1v1h-1zM12 0h1v1h-1zM21 0h1v1h-1zM32 0h1v1h-1zM37 1h1v1h-1zM15 2h1v1h-1zM16 2h1v1h-1zM17 2h1v1h-1zM18 2h1v1h-1zM27 2h1v1h-1zM28 2h1v1h-1zM32 2h1v1h-1zM34 2h1v1h-1zM14 3h1v1h-1zM18 3h1v1h-1zM22 3h1v1h-1zM33 3h1v1h-1zM36 3h1v1h-1zM8 4h1v1h-1zM10 4h1v1h-1zM23 4h1v1h-1zM4 5h1v1h-1zM9 5h1v1h-1zM19 5h1v1h-1zM21 5h1v1h-1zM22 5h1v1h-1zM26 5h1v1h-1zM34 5h1v1h-1zM35 5h1v1h-1zM3 6h1v1h-1zM26 6h1v1h-1zM31 6h1v1h-1zM18 7h1v1h-1zM19 7h1v1h-1zM22 7h1v1h-1zM31 7h1v1h-1zM34 7h1v1h-1zM5 8h1v1h-1zM12 8h1v1h-1zM13 8h1v1h-1zM16 8h1v1h-1zM17 8h1v1h-1zM28 8h1v1h-1zM30 8h1v1h-1zM31 8h1v1h-1zM3 9h1v1h-1zM16 9h1v1h-1zM29 9h1v1h-1zM31 9h1v1h-1zM8 10h1v1h-1zM26 10h1v1h-1zM31 10h1v1h-1zM33 10h1v1h-1zM7 11h1v1h-1zM13 11h1v1h-1zM18 11h1v1h-1zM20 11h1v1h-1zM29 11h1v1h-1zM32 11h1v1h-1zM4 12h1v1h-1zM10 12h1v1h-1zM19 12h1v1h-1zM7 13h1v1h-1zM18 13h1v1h-1zM34 13h1v1h-1zM3 14h1v1h-1zM5 14h1v1h-1zM12 14h1v1h-1zM22 14h1v1h-1zM33 14h1v1h-1zM12 15h1v1h-1zM24 15h1v1h-1zM31 15h1v1h-1zM35 15h1v1h-1zM8 17h1v1h-1zM29 17h1v1h-1zM10 18h1v1h-1zM13 18h1v1h-1zM15 18h1v1h-1zM18 18h1v1h-1zM19 18h1v1h-1zM20 18h1v1h-1zM23 18h1v1h-1zM25 18h1v1h-1zM31 18h1v1h-1zM0 19h1v1h-1zM1 19h1v1h-1zM15 19h1v1h-1zM19 19h1v1h-1zM24 19h1v1h-1zM30 19h1v1h-1zM2 20h1v1h-1zM7 20h1v1h-1zM12 20h1v1h-1zM14 20h1v1h-1zM20 20h1v1h-1zM30 20h1v1h-1zM31 20h1v1h-1zM37 20h1v1h-1zM27 21h1v1h-1zM32 21h1v1h-1zM3 22h1v1h-1zM25 22h1v1h-1zM32 22h1v1h-1zM2 23h1v1h-1zM14 23h1v1h-1zM19 23h1v1h-1zM28 23h1v1h-1zM0 24h1v1h-1zM6 24h1v1h-1zM24 24h1v1h-1zM29 24h1v1h-1zM34 24h1v1h-1zM9 25h1v1h-1zM10 25h1v1h-1zM17 25h1v1h-1zM33 25h1v1h-1zM36 25h1v1h-1zM9 26h1v1h-1zM12 26h1v1h-1zM13 26h1v1h-1zM17 26h1v1h-1zM25 26h1v1h-1zM35 26h1v1h-1zM18 27h1v1h-1zM22 27h1v1h-1zM27 27h1v1h-1zM29 27h1v1h-1zM1 28h1v1h-1zM4 28h1v1h-1zM10 28h1v1h-1zM12 28h1v1h-1zM15 28h1v1h-1zM18 28h1v1h-1zM28 28h1v1h-1zM33 28h1v1h-1zM1 29h1v1h-1zM6 29h1v1h-1zM32 29h1v1h-1zM34 29h1v1h-1zM36 29h1v1h-1zM2 30h1v1h-1zM4 30h1v1h-1zM17 30h1v1h-1zM25 30h1v1h-1zM26 30h1v1h-1zM5 31h1v1h-1zM22 31h1v1h-1zM26 31h1v1h-1zM31 31h1v1h-1zM34 31h1v1h-1zM37 31h1v1h-1zM3 32h1v1h-1zM13 32h1v1h-1zM18 32h1v1h-1zM20 32h1v1h-1zM23 32h1v1h-1zM30 33h1v1h-1zM10 34h1v1h-1zM12 34h1v1h-1zM18 34h1v1h-1zM33 34h1v1h-1zM0 35h1v1h-1zM10 35h1v1h-1zM28 35h1v1h-1zM28 36h1v1h-1zM31 36h1v1h-1zM1 37h1v1h-1zM6 37h1v1h-1zM9 37h1v1h-1zM10 37h1v1h-1zM32 37h1v1h-1zM2 38h1v1h-1zM6 38h1v1h-1zM7 38h1v1h-1zM17 38h1v1h-1zM27 38h1v1h-1zM29 38h1v1h-1zM33 38h1v1h-1zM34 38h1v1h-1zM12 39h1v1h-1zM18 39h1v1h-1zM27 39h1v1h-1zM8 40h1v1h-1zM16 40h1v1h-1zM28 40h1v1h-1zM33 40h1v1h-1zM35 40h1v1h-1zM13 41h1v1h-1zM19 41h1v1h-1zM36 41h1v1h-1zM8 42h1v1h-1zM14 42h1v1h-1zM0 43h1v1h-1zM9 43h1v1h-1zM17 43h1v1h-1zM31 44h1v1h-1zM33 44h1v1h-1zM36 44h1v1h-1zM0 45h1v1h-1zM5 45h1v1h-1zM24 45h1v1h-1zM0 46h1v1h-1zM5 46h1v1h-1zM18 46h1v1h-1zM26 46h1v1h-1zM27 46h1v1h-1zM16 47h1v1h-1zM36 47h1v1h-1zM4 48h1v1h-1zM8 48h1v1h-1zM0 49h1v1h-1zM3 49h1v1h-1zM7 49h1v1h-1zM15 49h1v1h-1zM24 49h1v1h-1zM26 49h1v1h-1zM31 49h1v1h-1zM12 50h1v1h-1zM14 50h1v1h-1zM18 50h1v1h-1zM24 50h1v1h-1zM29 50h1v1h-1zM9 51h1v1h-1zM24 51h1v1h-1zM30 51h1v1h-1zM31 51h1v1h-1zM3 52h1v1h-1zM14 52h1v1h-1zM19 52h1v1h-1zM31 52h1v1h-1zM36 52h1v1h-1zM7 53h1v1h-1zM11 53h1v1h-1zM24 53h1v1h-1zM25 53h1v1h-1zM29 53h1v1h-1zM5 54h1v1h-1zM23 54h1v1h-1zM30 54h1v1h-1zM36 54h1v1h-1zM0 55h1v1h-1zM1 55h1v1h-1zM10 55h1v1h-1zM18 55h1v1h-1zM32 55h1v1h-1zM36 55h1v1h-1zM7 56h1v1h-1zM17 56h1v1h-1zM32 56h1v1h-1zM33 56h1v1h-1zM5 57h1v1h-1zM16 57h1v1h-1zM20 57h1v1h-1zM21 57h1v1h-1zM27 57h1v1h-1zM31 57h1v1h-1zM0 58h1v1h-1zM9 58h1v1h-1zM12 58h1v1h-1zM16 58h1v1h-1zM24 58h1v1h-1zM29 58h1v1h-1zM32 58h1v1h-1zM9 59h1v1h-1zM11 59h1v1h-1zM14 59h1v1h-1zM18 59h1v1h-1zM19 59h1v1h-1zM24 59h1v1h-1zM36 59h1v1h-1zM37 59h1v1h-1zM9 60h1v1h-1zM18 60h1v1h-1zM26 60h1v1h-1zM36 60h1v1h-1zM37 60h1v1h-1zM1 61h1v1h-1zM4 61h1v1h-1zM14 61h1v1h-1zM25 61h1v1h-1zM31 61h1v1h-1zM5 62h1v1h-1zM7 62h1v1h-1zM10 62h1v1h-1zM20 62h1v1h-1zM21 62h1v1h-1zM31 62h1v1h-1zM35 62h1v1h-1zM15 63h1v1h-1zM18 63h1v1h-1zM32 63h1v1h-1zM5 64h1v1h-1zM6 64h1v1h-1zM22 64h1v1h-1zM28 64h1v1h-1zM36 64h1v1h-1zM7 65h1v1h-1zM18 65h1v1h-1zM26 65h1v1h-1zM32 65h1v1h-1zM36 65h1v1h-1zM2 66h1v1h-1zM22 66h1v1h-1zM34 66h1v1h-1zM37 66h1v1h-1zM10 67h1v1h-1zM18 67h1v1h-1zM29 67h1v1h-1zM30 67h1v1h-1zM31 67h1v1h-1zM34 67h1v1h-1zM35 67h1v1h-1zM2 68h1v1h-1zM19 68h1v1h-1zM32 68h1v1h-1zM14 69h1v1h-1zM29 69h1v1h-1zM31 69h1v1h-1zM11 70h1v1h-1zM22 70h1v1h-1zM23 70h1v1h-1zM30 71h1v1h-1zM35 71h1v1h-1zM7 72h1v1h-1zM14 72h1v1h-1zM21 72h1v1h-1zM26 72h1v1h-1zM33 72h1v1h-1zM34 72h1v1h-1zM4 73h1v1h-1zM14 73h1v1h-1zM30 73h1v1h-1zM37 73h1v1h-1zM28 74h1v1h-1zM3 75h1v1h-1zM5 75h1v1h-1zM15 75h1v1h-1zM31 75h1v1h-1zM34 75h1v1h-1zM37 75h1v1h-1zM3 76h1v1h-1zM14 76h1v1h-1zM0 77h1v1h-1zM31 77h1v1h-1zM14 78h1v1h-1zM17 78h1v1h-1zM15 79h1v1h-1zM37 79h1v1h-1zM15 80h1v1h-1zM19 80h1v1h-1zM20 80h1v1h-1zM24 80h1v1h-1zM25 80h1v1h-1zM36 80h1v1h-1zM8 81h1v1h-1zM9 81h1v1h-1zM3 82h1v1h-1zM8 82h1v1h-1zM18 82h1v1h-1zM32 82h1v1h-1zM36 82h1v1h-1zM6 83h1v1h-1zM11 83h1v1h-1zM20 83h1v1h-1zM13 84h1v1h-1zM22 84h1v1h-1zM29 84h1v1h-1zM10 85h1v1h-1zM23 85h1v1h-1zM37 85h1v1h-1zM16 86h1v1h-1zM11 87h1v1h-1zM16 87h1v1h-1zM22 87h1v1h-1zM27 87h1v1h-1zM30 87h1v1h-1zM0 88h1v1h-1zM7 88h1v1h-1zM8 88h1v1h-1zM11 88h1v1h-1zM14 88h1v1h-1zM15 88h1v1h-1zM28 88h1v1h-1zM8 89h1v1h-1zM14 89h1v1h-1zM26 89h1v1h-1zM31 89h1v1h-1zM4 90h1v1h-1zM7 90h1v1h-1zM11 90h1v1h-1zM25 90h1v1h-1zM26 90h1v1h-1zM32 90h1v1h-1zM2 91h1v1h-1zM14 91h1v1h-1zM16 91h1v1h-1zM24 91h1v1h-1zM16 92h1v1h-1zM23 92h1v1h-1zM25 92h1v1h-1zM27 92h1v1h-1zM33 92h1v1h-1zM36 92h1v1h-1zM2 93h1v1h-1zM9 93h1v1h-1zM17 93h1v1h-1zM20 93h1v1h-1zM32 93h1v1h-1zM6 94h1v1h-1zM8 94h1v1h-1zM21 94h1v1h-1zM25 94h1v1h-1zM34 94h1v1h-1zM1 95h1v1h-1zM13 95h1v1h-1zM17 95h1v1h-1zM26 95h1v1h-1zM0 96h1v1h-1zM5 96h1v1h-1zM20 96h1v1h-1zM22 96h1v1h-1zM25 96h1v1h-1zM33 96h1v1h-1zM9 97h1v1h-1zM18 97h1v1h-1zM23 97h1v1h-1zM35 97h1v1h-1zM37 97h1v1h-1z"/><path fill="#fff" fill-opacity="0.15" d="M13 0h1v1h-1zM14 0h1v1h-1zM15 0h1v1h-1zM20 0h1v1h-1zM30 0h1v1h-1zM35 0h1v1h-1zM3 1h1v1h-1zM6 1h1v1h-1zM33 1h1v1h-1zM34 1h1v1h-1zM4 2h1v1h-1zM20 2h1v1h-1zM10 3h1v1h-1zM11 3h1v1h-1zM24 3h1v1h-1zM25 3h1v1h-1zM3 4h1v1h-1zM13 4h1v1h-1zM18 4h1v1h-1zM28 4h1v1h-1zM16 5h1v1h-1zM25 5h1v1h-1zM30 5h1v1h-1zM13 6h1v1h-1zM23 6h1v1h-1zM24 6h1v1h-1zM25 6h1v1h-1zM30 6h1v1h-1zM35 6h1v1h-1zM36 6h1v1h-1zM1 7h1v1h-1zM5 7h1v1h-1zM10 7h1v1h-1zM27 7h1v1h-1zM30 7h1v1h-1zM33 7h1v1h-1zM37 7h1v1h-1zM1 8h1v1h-1zM2 8h1v1h-1zM9 8h1v1h-1zM11 8h1v1h-1zM19 8h1v1h-1zM27 8h1v1h-1zM6 9h1v1h-1zM9 9h1v1h-1zM19 9h1v1h-1zM20 9h1v1h-1zM23 9h1v1h-1zM33 9h1v1h-1zM6 10h1v1h-1zM19 10h1v1h-1zM21 10h1v1h-1zM22 10h1v1h-1zM25 10h1v1h-1zM37 10h1v1h-1zM5 11h1v1h-1zM21 11h1v1h-1zM23 11h1v1h-1zM33 11h1v1h-1zM36 11h1v1h-1zM5 12h1v1h-1zM9 12h1v1h-1zM16 12h1v1h-1zM20 12h1v1h-1zM22 12h1v1h-1zM25 12h1v1h-1zM28 12h1v1h-1zM29 12h1v1h-1zM31 12h1v1h-1zM36 12h1v1h-1zM37 12h1v1h-1zM11 13h1v1h-1zM16 13h1v1h-1zM17 13h1v1h-1zM25 13h1v1h-1zM29 13h1v1h-1zM31 13h1v1h-1zM0 14h1v1h-1zM1 14h1v1h-1zM9 14h1v1h-1zM14 14h1v1h-1zM18 14h1v1h-1zM23 14h1v1h-1zM32 14h1v1h-1zM3 15h1v1h-1zM4 15h1v1h-1zM6 15h1v1h-1zM15 15h1v1h-1zM16 15h1v1h-1zM18 15h1v1h-1zM23 15h1v1h-1zM28 15h1v1h-1zM36 15h1v1h-1zM13 16h1v1h-1zM31 16h1v1h-1zM0 17h1v1h-1zM1 17h1v1h-1zM5 17h1v1h-1zM16 17h1v1h-1zM17 17h1v1h-1zM19 17h1v1h-1zM23 17h1v1h-1zM24 17h1v1h-1zM27 17h1v1h-1zM34 17h1v1h-1zM35 17h1v1h-1zM5 18h1v1h-1zM28 18h1v1h-1zM36 18h1v1h-1zM4 19h1v1h-1zM7 19h1v1h-1zM9 19h1v1h-1zM14 19h1v1h-1zM22 19h1v1h-1zM25 19h1v1h-1zM26 19h1v1h-1zM0 20h1v1h-1zM10 20h1v1h-1zM16 20h1v1h-1zM35 20h1v1h-1zM0 21h1v1h-1zM6 21h1v1h-1zM10 21h1v1h-1zM16 21h1v1h-1zM19 21h1v1h-1zM22 21h1v1h-1zM29 21h1v1h-1zM7 22h1v1h-1zM17 22h1v1h-1zM19 22h1v1h-1zM26 22h1v1h-1zM37 22h1v1h-1zM5 23h1v1h-1zM7 23h1v1h-1zM8 23h1v1h-1zM10 23h1v1h-1zM12 23h1v1h-1zM20 23h1v1h-1zM29 23h1v1h-1zM30 23h1v1h-1zM8 24h1v1h-1zM25 24h1v1h-1zM28 24h1v1h-1zM25 25h1v1h-1zM27 25h1v1h-1zM31 25h1v1h-1zM11 26h1v1h-1zM15 26h1v1h-1zM27 26h1v1h-1zM34 26h1v1h-1zM37 26h1v1h-1zM3 27h1v1h-1zM14 27h1v1h-1zM26 27h1v1h-1zM8 28h1v1h-1zM9 28h1v1h-1zM13 28h1v1h-1zM20 28h1v1h-1zM35 28h1v1h-1zM36 28h1v1h-1zM37 28h1v1h-1zM0 29h1v1h-1zM3 29h1v1h-1zM11 29h1v1h-1zM14 29h1v1h-1zM27 29h1v1h-1zM28 29h1v1h-1zM33 29h1v1h-1zM6 30h1v1h-1zM7 30h1v1h-1zM20 30h1v1h-1zM21 30h1v1h-1zM22 30h1v1h-1zM32 30h1v1h-1zM34 30h1v1h-1zM37 30h1v1h-1zM3 31h1v1h-1zM6 31h1v1h-1zM11 31h1v1h-1zM15 31h1v1h-1zM25 31h1v1h-1zM30 31h1v1h-1zM10 32h1v1h-1zM11 32h1v1h-1zM24 32h1v1h-1zM27 32h1v1h-1zM31 32h1v1h-1zM37 32h1v1h-1zM4 33h1v1h-1zM7 33h1v1h-1zM8 33h1v1h-1zM12 33h1v1h-1zM25 33h1v1h-1zM1 34h1v1h-1zM13 34h1v1h-1zM25 34h1v1h-1zM28 34h1v1h-1zM30 34h1v1h-1zM34 34h1v1h-1zM11 35h1v1h-1zM18 35h1v1h-1zM29 35h1v1h-1zM33 35h1v1h-1zM35 35h1v1h-1zM37 35h1v1h-1zM10 36h1v1h-1zM23 36h1v1h-1zM30 36h1v1h-1zM33 36h1v1h-1zM34 36h1v1h-1zM14 37h1v1h-1zM19 37h1v1h-1zM21 37h1v1h-1zM26 37h1v1h-1zM14 38h1v1h-1zM26 38h1v1h-1zM32 38h1v1h-1zM11 39h1v1h-1zM31 39h1v1h-1zM35 39h1v1h-1zM2 40h1v1h-1zM7 40h1v1h-1zM10 40h1v1h-1zM22 40h1v1h-1zM23 40h1v1h-1zM27 40h1v1h-1zM34 40h1v1h-1zM0 41h1v1h-1zM1 41h1v1h-1zM3 41h1v1h-1zM8 41h1v1h-1zM9 41h1v1h-1zM12 41h1v1h-1zM18 41h1v1h-1zM22 41h1v1h-1zM23 41h1v1h-1zM25 41h1v1h-1zM30 41h1v1h-1zM35 41h1v1h-1zM2 42h1v1h-1zM3 42h1v1h-1zM10 42h1v1h-1zM20 42h1v1h-1zM22 42h1v1h-1zM31 42h1v1h-1zM37 42h1v1h-1zM1 43h1v1h-1zM3 43h1v1h-1zM25 43h1v1h-1zM30 43h1v1h-1zM31 43h1v1h-1zM34 43h1v1h-1zM1 44h1v1h-1zM4 44h1v1h-1zM5 44h1v1h-1zM7 44h1v1h-1zM10 44h1v1h-1zM21 44h1v1h-1zM26 44h1v1h-1zM27 44h1v1h-1zM32 44h1v1h-1zM34 44h1v1h-1zM3 45h1v1h-1zM9 45h1v1h-1zM17 45h1v1h-1zM19 45h1v1h-1zM30 45h1v1h-1zM33 45h1v1h-1zM4 46h1v1h-1zM8 46h1v1h-1zM15 46h1v1h-1zM20 46h1v1h-1zM21 46h1v1h-1zM36 46h1v1h-1zM37 46h1v1h-1zM13 47h1v1h-1zM14 47h1v1h-1zM18 47h1v1h-1zM22 47h1v1h-1zM24 47h1v1h-1zM7 48h1v1h-1zM16 48h1v1h-1zM17 48h1v1h-1zM27 48h1v1h-1zM30 48h1v1h-1zM4 49h1v1h-1zM10 49h1v1h-1zM12 49h1v1h-1zM18 49h1v1h-1zM28 49h1v1h-1zM32 49h1v1h-1zM37 49h1v1h-1zM5 50h1v1h-1zM9 50h1v1h-1zM10 50h1v1h-1zM26 50h1v1h-1zM34 50h1v1h-1zM3 51h1v1h-1zM5 51h1v1h-1zM8 51h1v1h-1zM11 51h1v1h-1zM12 51h1v1h-1zM15 51h1v1h-1zM26 51h1v1h-1zM28 51h1v1h-1zM4 52h1v1h-1zM10 52h1v1h-1zM12 52h1v1h-1zM33 52h1v1h-1zM0 53h1v1h-1zM2 53h1v1h-1zM6 53h1v1h-1zM12 53h1v1h-1zM15 53h1v1h-1zM23 53h1v1h-1zM35 53h1v1h-1zM36 53h1v1h-1zM1 54h1v1h-1zM2 54h1v1h-1zM8 54h1v1h-1zM13 54h1v1h-1zM15 54h1v1h-1zM27 54h1v1h-1zM34 54h1v1h-1zM2 55h1v1h-1zM13 55h1v1h-1zM20 55h1v1h-1zM22 55h1v1h-1zM12 56h1v1h-1zM20 56h1v1h-1zM21 56h1v1h-1zM26 56h1v1h-1zM29 56h1v1h-1zM31 56h1v1h-1zM1 57h1v1h-1zM8 57h1v1h-1zM13 57h1v1h-1zM15 57h1v1h-1zM19 57h1v1h-1zM34 57h1v1h-1zM36 57h1v1h-1zM3 58h1v1h-1zM4 58h1v1h-1zM14 58h1v1h-1zM22 58h1v1h-1zM25 58h1v1h-1zM37 58h1v1h-1zM16 59h1v1h-1zM21 59h1v1h-1zM23 59h1v1h-1zM27 59h1v1h-1zM29 59h1v1h-1zM32 59h1v1h-1zM1 60h1v1h-1zM2 60h1v1h-1zM7 60h1v1h-1zM8 60h1v1h-1zM10 60h1v1h-1zM13 60h1v1h-1zM19 60h1v1h-1zM20 60h1v1h-1zM24 60h1v1h-1zM28 60h1v1h-1zM29 60h1v1h-1zM3 61h1v1h-1zM5 61h1v1h-1zM12 61h1v1h-1zM20 61h1v1h-1zM23 61h1v1h-1zM29 61h1v1h-1zM30 61h1v1h-1zM36 61h1v1h-1zM8 62h1v1h-1zM11 62h1v1h-1zM13 62h1v1h-1zM14 62h1v1h-1zM33 62h1v1h-1zM5 63h1v1h-1zM8 63h1v1h-1zM12 63h1v1h-1zM20 63h1v1h-1zM21 63h1v1h-1zM2 64h1v1h-1zM19 64h1v1h-1zM25 64h1v1h-1zM31 64h1v1h-1zM5 65h1v1h-1zM23 65h1v1h-1zM30 65h1v1h-1zM35 65h1v1h-1zM37 65h1v1h-1zM1 66h1v1h-1zM3 66h1v1h-1zM11 66h1v1h-1zM25 66h1v1h-1zM29 66h1v1h-1zM32 66h1v1h-1zM1 67h1v1h-1zM4 67h1v1h-1zM8 67h1v1h-1zM14 67h1v1h-1zM17 67h1v1h-1zM32 67h1v1h-1zM1 68h1v1h-1zM4 68h1v1h-1zM10 68h1v1h-1zM14 68h1v1h-1zM15 68h1v1h-1zM26 68h1v1h-1zM27 68h1v1h-1zM28 68h1v1h-1zM29 68h1v1h-1zM30 68h1v1h-1zM2 69h1v1h-1zM8 69h1v1h-1zM10 69h1v1h-1zM16 69h1v1h-1zM21 69h1v1h-1zM33 69h1v1h-1zM35 69h1v1h-1zM1 70h1v1h-1zM7 70h1v1h-1zM19 70h1v1h-1zM24 70h1v1h-1zM30 70h1v1h-1zM33 70h1v1h-1zM34 70h1v1h-1zM1 71h1v1h-1zM14 71h1v1h-1zM22 71h1v1h-1zM29 71h1v1h-1zM33 71h1v1h-1zM1 72h1v1h-1zM9 72h1v1h-1zM13 72h1v1h-1zM18 72h1v1h-1zM28 72h1v1h-1zM30 72h1v1h-1zM31 72h1v1h-1zM35 72h1v1h-1zM6 73h1v1h-1zM10 73h1v1h-1zM16 73h1v1h-1zM21 73h1v1h-1zM23 73h1v1h-1zM28 73h1v1h-1zM4 74h1v1h-1zM12 74h1v1h-1zM16 74h1v1h-1zM18 74h1v1h-1zM20 74h1v1h-1zM30 74h1v1h-1zM34 74h1v1h-1zM1 75h1v1h-1zM4 75h1v1h-1zM6 75h1v1h-1zM13 75h1v1h-1zM17 75h1v1h-1zM20 75h1v1h-1zM32 75h1v1h-1zM33 75h1v1h-1zM7 76h1v1h-1zM24 76h1v1h-1zM28 76h1v1h-1zM14 77h1v1h-1zM24 77h1v1h-1zM25 77h1v1h-1zM32 77h1v1h-1zM6 78h1v1h-1zM12 78h1v1h-1zM16 78h1v1h-1zM35 78h1v1h-1zM36 78h1v1h-1zM37 78h1v1h-1zM2 79h1v1h-1zM14 79h1v1h-1zM19 79h1v1h-1zM20 79h1v1h-1zM26 79h1v1h-1zM1 80h1v1h-1zM8 80h1v1h-1zM13 80h1v1h-1zM26 80h1v1h-1zM27 80h1v1h-1zM33 80h1v1h-1zM34 80h1v1h-1zM37 80h1v1h-1zM2 81h1v1h-1zM3 81h1v1h-1zM4 81h1v1h-1zM5 81h1v1h-1zM20 81h1v1h-1zM25 81h1v1h-1zM33 81h1v1h-1zM37 81h1v1h-1zM4 82h1v1h-1zM26 82h1v1h-1zM30 82h1v1h-1zM37 82h1v1h-1zM4 83h1v1h-1zM14 83h1v1h-1zM18 83h1v1h-1zM30 83h1v1h-1zM34 83h1v1h-1zM35 83h1v1h-1zM4 84h1v1h-1zM5 84h1v1h-1zM10 84h1v1h-1zM21 84h1v1h-1zM25 84h1v1h-1zM35 84h1v1h-1zM0 85h1v1h-1zM1 85h1v1h-1zM9 85h1v1h-1zM11 85h1v1h-1zM18 85h1v1h-1zM27 85h1v1h-1zM2 86h1v1h-1zM4 86h1v1h-1zM5 86h1v1h-1zM12 86h1v1h-1zM21 86h1v1h-1zM22 86h1v1h-1zM26 86h1v1h-1zM31 86h1v1h-1zM37 86h1v1h-1zM0 87h1v1h-1zM1 87h1v1h-1zM12 87h1v1h-1zM34 87h1v1h-1zM9 88h1v1h-1zM12 88h1v1h-1zM26 88h1v1h-1zM6 89h1v1h-1zM9 89h1v1h-1zM20 89h1v1h-1zM22 89h1v1h-1zM28 89h1v1h-1zM30 89h1v1h-1zM10 90h1v1h-1zM12 90h1v1h-1zM14 90h1v1h-1zM17 90h1v1h-1zM20 90h1v1h-1zM21 90h1v1h-1zM30 90h1v1h-1zM34 90h1v1h-1zM9 91h1v1h-1zM25 91h1v1h-1zM28 91h1v1h-1zM37 91h1v1h-1zM7 92h1v1h-1zM11 92h1v1h-1zM12 92h1v1h-1zM20 92h1v1h-1zM4 93h1v1h-1zM25 93h1v1h-1zM34 93h1v1h-1zM4 94h1v1h-1zM12 94h1v1h-1zM24 94h1v1h-1zM31 94h1v1h-1zM3 95h1v1h-1zM10 95h1v1h-1zM12 95h1v1h-1zM16 95h1v1h-1zM36 95h1v1h-1zM6 96h1v1h-1zM19 96h1v1h-1zM26 96h1v1h-1zM4 97h1v1h-1zM5 97h1v1h-1zM11 97h1v1h-1zM20 97h1v1h-1zM26 97h1v1h-1zM29 97h1v1h-1z"/><path fill="#000" fill-opacity="0.45" d="M18 0h1v1h-1zM28 0h1v1h-1zM36 0h1v1h-1zM5 1h1v1h-1zM17 1h1v1h-1zM25 1h1v1h-1zM7 2h1v1h-1zM14 2h1v1h-1zM22 2h1v1h-1zM24 2h1v1h-1zM3 3h1v1h-1zM27 3h1v1h-1zM37 3h1v1h-1zM1 4h1v1h-1zM19 4h1v1h-1zM20 4h1v1h-1zM24 4h1v1h-1zM32 4h1v1h-1zM13 5h1v1h-1zM13 7h1v1h-1zM25 7h1v1h-1zM15 8h1v1h-1zM21 8h1v1h-1zM36 8h1v1h-1zM21 9h1v1h-1zM32 9h1v1h-1zM35 9h1v1h-1zM0 10h1v1h-1zM12 10h1v1h-1zM4 11h1v1h-1zM8 11h1v1h-1zM27 11h1v1h-1zM10 13h1v1h-1zM21 13h1v1h-1zM26 14h1v1h-1zM25 15h1v1h-1zM15 17h1v1h-1zM22 17h1v1h-1zM37 17h1v1h-1zM17 18h1v1h-1zM3 19h1v1h-1zM36 19h1v1h-1zM6 20h1v1h-1zM26 20h1v1h-1zM11 21h1v1h-1zM23 21h1v1h-1zM15 22h1v1h-1zM22 22h1v1h-1zM0 23h1v1h-1zM33 23h1v1h-1zM2 24h1v1h-1zM12 24h1v1h-1zM16 24h1v1h-1zM5 26h1v1h-1zM20 26h1v1h-1zM31 26h1v1h-1zM9 27h1v1h-1zM21 29h1v1h-1zM16 30h1v1h-1zM35 31h1v1h-1zM36 31h1v1h-1zM17 32h1v1h-1zM29 32h1v1h-1zM1 33h1v1h-1zM13 33h1v1h-1zM28 33h1v1h-1zM17 35h1v1h-1zM30 35h1v1h-1zM3 37h1v1h-1zM5 37h1v1h-1zM37 37h1v1h-1zM18 38h1v1h-1zM25 38h1v1h-1zM33 39h1v1h-1zM6 40h1v1h-1zM37 41h1v1h-1zM12 43h1v1h-1zM6 44h1v1h-1zM22 44h1v1h-1zM21 45h1v1h-1zM0 47h1v1h-1zM5 47h1v1h-1zM17 47h1v1h-1zM30 47h1v1h-1zM12 48h1v1h-1zM15 48h1v1h-1zM6 49h1v1h-1zM8 50h1v1h-1zM23 50h1v1h-1zM30 50h1v1h-1zM0 51h1v1h-1zM4 51h1v1h-1zM6 51h1v1h-1zM22 52h1v1h-1zM35 52h1v1h-1zM4 54h1v1h-1zM26 54h1v1h-1zM17 55h1v1h-1zM5 56h1v1h-1zM10 56h1v1h-1zM25 56h1v1h-1zM30 56h1v1h-1zM22 57h1v1h-1zM27 58h1v1h-1zM30 58h1v1h-1zM25 59h1v1h-1zM34 59h1v1h-1zM4 60h1v1h-1zM23 60h1v1h-1zM25 62h1v1h-1zM3 63h1v1h-1zM9 63h1v1h-1zM23 63h1v1h-1zM24 63h1v1h-1zM26 63h1v1h-1zM4 64h1v1h-1zM29 64h1v1h-1zM30 64h1v1h-1zM34 64h1v1h-1zM1 65h1v1h-1zM8 65h1v1h-1zM9 65h1v1h-1zM20 65h1v1h-1zM35 66h1v1h-1zM3 67h1v1h-1zM7 67h1v1h-1zM13 68h1v1h-1zM17 68h1v1h-1zM22 68h1v1h-1zM11 69h1v1h-1zM18 69h1v1h-1zM26 69h1v1h-1zM26 70h1v1h-1zM2 71h1v1h-1zM17 71h1v1h-1zM3 72h1v1h-1zM5 72h1v1h-1zM1 73h1v1h-1zM5 73h1v1h-1zM1 74h1v1h-1zM29 74h1v1h-1zM26 75h1v1h-1zM25 76h1v1h-1zM30 76h1v1h-1zM3 77h1v1h-1zM18 77h1v1h-1zM21 78h1v1h-1zM29 78h1v1h-1zM33 79h1v1h-1zM17 80h1v1h-1zM34 81h1v1h-1zM12 82h1v1h-1zM22 83h1v1h-1zM36 83h1v1h-1zM36 84h1v1h-1zM7 85h1v1h-1zM8 85h1v1h-1zM4 88h1v1h-1zM10 88h1v1h-1zM27 90h1v1h-1zM4 91h1v1h-1zM12 91h1v1h-1zM22 91h1v1h-1zM6 92h1v1h-1zM8 92h1v1h-1zM6 93h1v1h-1zM26 93h1v1h-1zM3 94h1v1h-1zM33 94h1v1h-1zM36 94h1v1h-1zM33 95h1v1h-1zM36 96h1v1h-1zM25 97h1v1h-1z"/><path fill="#fff" fill-opacity="0.45" d="M14 1h1v1h-1zM3 2h1v1h-1zM19 3h1v1h-1zM20 3h1v1h-1zM7 4h1v1h-1zM36 4h1v1h-1zM0 5h1v1h-1zM20 5h1v1h-1zM37 5h1v1h-1zM2 6h1v1h-1zM16 6h1v1h-1zM28 6h1v1h-1zM3 7h1v1h-1zM6 7h1v1h-1zM20 7h1v1h-1zM23 7h1v1h-1zM26 7h1v1h-1zM3 8h1v1h-1zM2 9h1v1h-1zM10 9h1v1h-1zM22 9h1v1h-1zM7 10h1v1h-1zM16 10h1v1h-1zM1 11h1v1h-1zM12 11h1v1h-1zM13 12h1v1h-1zM17 12h1v1h-1zM12 13h1v1h-1zM2 14h1v1h-1zM25 14h1v1h-1zM29 14h1v1h-1zM30 14h1v1h-1zM11 15h1v1h-1zM21 15h1v1h-1zM26 15h1v1h-1zM37 15h1v1h-1zM34 16h1v1h-1zM7 18h1v1h-1zM33 18h1v1h-1zM12 19h1v1h-1zM17 19h1v1h-1zM18 19h1v1h-1zM23 19h1v1h-1zM33 19h1v1h-1zM17 20h1v1h-1zM21 20h1v1h-1zM29 20h1v1h-1zM21 21h1v1h-1zM26 21h1v1h-1zM2 22h1v1h-1zM6 22h1v1h-1zM29 22h1v1h-1zM36 22h1v1h-1zM36 23h1v1h-1zM20 24h1v1h-1zM30 24h1v1h-1zM37 24h1v1h-1zM8 25h1v1h-1zM30 25h1v1h-1zM29 26h1v1h-1zM8 27h1v1h-1zM15 27h1v1h-1zM28 27h1v1h-1zM31 27h1v1h-1zM29 28h1v1h-1zM8 30h1v1h-1zM36 30h1v1h-1zM18 31h1v1h-1zM19 31h1v1h-1zM21 32h1v1h-1zM11 33h1v1h-1zM37 33h1v1h-1zM15 34h1v1h-1zM18 36h1v1h-1zM12 37h1v1h-1zM0 38h1v1h-1zM13 38h1v1h-1zM30 38h1v1h-1zM37 38h1v1h-1zM2 39h1v1h-1zM16 39h1v1h-1zM28 39h1v1h-1zM21 40h1v1h-1zM1 42h1v1h-1zM9 42h1v1h-1zM11 42h1v1h-1zM17 42h1v1h-1zM24 42h1v1h-1zM26 42h1v1h-1zM36 42h1v1h-1zM6 43h1v1h-1zM20 43h1v1h-1zM26 43h1v1h-1zM15 44h1v1h-1zM31 45h1v1h-1zM9 46h1v1h-1zM10 46h1v1h-1zM22 46h1v1h-1zM32 46h1v1h-1zM34 46h1v1h-1zM1 47h1v1h-1zM19 47h1v1h-1zM19 48h1v1h-1zM37 48h1v1h-1zM2 49h1v1h-1zM14 49h1v1h-1zM16 49h1v1h-1zM19 49h1v1h-1zM3 50h1v1h-1zM22 50h1v1h-1zM34 51h1v1h-1zM28 52h1v1h-1zM32 52h1v1h-1zM37 52h1v1h-1zM8 53h1v1h-1zM9 53h1v1h-1zM33 53h1v1h-1zM29 55h1v1h-1zM34 55h1v1h-1zM35 55h1v1h-1zM6 56h1v1h-1zM16 56h1v1h-1zM28 57h1v1h-1zM35 57h1v1h-1zM6 58h1v1h-1zM18 58h1v1h-1zM28 58h1v1h-1zM3 60h1v1h-1zM24 61h1v1h-1zM32 61h1v1h-1zM1 62h1v1h-1zM27 62h1v1h-1zM32 62h1v1h-1zM26 64h1v1h-1zM35 64h1v1h-1zM7 66h1v1h-1zM9 66h1v1h-1zM10 66h1v1h-1zM16 66h1v1h-1zM18 66h1v1h-1zM19 67h1v1h-1zM26 67h1v1h-1zM7 69h1v1h-1zM9 70h1v1h-1zM18 70h1v1h-1zM10 71h1v1h-1zM11 71h1v1h-1zM12 71h1v1h-1zM15 71h1v1h-1zM10 72h1v1h-1zM24 73h1v1h-1zM21 74h1v1h-1zM22 75h1v1h-1zM21 76h1v1h-1zM22 76h1v1h-1zM9 78h1v1h-1zM24 78h1v1h-1zM22 79h1v1h-1zM25 79h1v1h-1zM0 82h1v1h-1zM2 82h1v1h-1zM9 82h1v1h-1zM13 82h1v1h-1zM28 82h1v1h-1zM2 83h1v1h-1zM24 83h1v1h-1zM8 84h1v1h-1zM15 84h1v1h-1zM5 85h1v1h-1zM28 85h1v1h-1zM11 86h1v1h-1zM25 86h1v1h-1zM33 86h1v1h-1zM4 87h1v1h-1zM10 87h1v1h-1zM18 87h1v1h-1zM5 88h1v1h-1zM13 88h1v1h-1zM20 88h1v1h-1zM27 88h1v1h-1zM36 88h1v1h-1zM12 89h1v1h-1zM18 89h1v1h-1zM25 89h1v1h-1zM33 90h1v1h-1zM27 91h1v1h-1zM31 91h1v1h-1zM1 92h1v1h-1zM29 94h1v1h-1zM35 94h1v1h-1zM18 95h1v1h-1zM23 95h1v1h-1zM35 96h1v1h-1zM6 97h1v1h-1zM7 97h1v1h-1zM8 97h1v1h-1z"/><path fill="#fff" fill-opacity="0.6" d="M21 1h1v1h-1zM21 2h1v1h-1zM35 4h1v1h-1zM31 5h1v1h-1zM3 11h1v1h-1zM2 13h1v1h-1zM26 13h1v1h-1zM20 14h1v1h-1zM36 16h1v1h-1zM2 21h1v1h-1zM4 24h1v1h-1zM12 25h1v1h-1zM28 25h1v1h-1zM6 26h1v1h-1zM16 28h1v1h-1zM31 28h1v1h-1zM29 33h1v1h-1zM1 35h1v1h-1zM3 38h1v1h-1zM11 38h1v1h-1zM21 38h1v1h-1zM30 40h1v1h-1zM28 44h1v1h-1zM29 45h1v1h-1zM17 46h1v1h-1zM10 47h1v1h-1zM21 47h1v1h-1zM20 51h1v1h-1zM27 51h1v1h-1zM6 52h1v1h-1zM7 52h1v1h-1zM28 53h1v1h-1zM7 54h1v1h-1zM12 54h1v1h-1zM28 54h1v1h-1zM2 56h1v1h-1zM14 56h1v1h-1zM35 56h1v1h-1zM12 57h1v1h-1zM25 57h1v1h-1zM13 58h1v1h-1zM8 59h1v1h-1zM22 60h1v1h-1zM7 61h1v1h-1zM22 61h1v1h-1zM23 71h1v1h-1zM24 71h1v1h-1zM17 74h1v1h-1zM33 76h1v1h-1zM35 76h1v1h-1zM11 77h1v1h-1zM27 77h1v1h-1zM16 79h1v1h-1zM21 79h1v1h-1zM17 81h1v1h-1zM32 85h1v1h-1zM29 86h1v1h-1zM0 94h1v1h-1zM14 95h1v1h-1zM19 97h1v1h-1z"/><path fill="#000" fill-opacity="0.6" d="M36 1h1v1h-1zM19 2h1v1h-1zM30 2h1v1h-1zM23 3h1v1h-1zM6 4h1v1h-1zM32 7h1v1h-1zM35 7h1v1h-1zM18 9h1v1h-1zM28 9h1v1h-1zM36 10h1v1h-1zM1 12h1v1h-1zM14 16h1v1h-1zM35 16h1v1h-1zM22 20h1v1h-1zM25 20h1v1h-1zM24 22h1v1h-1zM14 28h1v1h-1zM9 30h1v1h-1zM11 30h1v1h-1zM9 33h1v1h-1zM1 36h1v1h-1zM16 37h1v1h-1zM35 38h1v1h-1zM13 40h1v1h-1zM28 42h1v1h-1zM3 44h1v1h-1zM19 44h1v1h-1zM30 46h1v1h-1zM31 50h1v1h-1zM24 52h1v1h-1zM34 53h1v1h-1zM10 54h1v1h-1zM3 55h1v1h-1zM21 55h1v1h-1zM9 56h1v1h-1zM11 56h1v1h-1zM2 63h1v1h-1zM32 64h1v1h-1zM23 66h1v1h-1zM11 67h1v1h-1zM17 72h1v1h-1zM15 73h1v1h-1zM29 73h1v1h-1zM11 75h1v1h-1zM28 75h1v1h-1zM7 78h1v1h-1zM10 80h1v1h-1zM21 81h1v1h-1zM17 84h1v1h-1zM24 88h1v1h-1zM17 89h1v1h-1zM1 93h1v1h-1zM11 94h1v1h-1z"/><path fill="#000" fill-opacity="0.8" d="M9 7h1v1h-1zM5 19h1v1h-1zM23 35h1v1h-1zM2 45h1v1h-1zM22 51h1v1h-1zM0 52h1v1h-1zM18 56h1v1h-1zM34 63h1v1h-1zM33 73h1v1h-1z"/><path fill="#fff" fill-opacity="0.8" d="M0 8h1v1h-1zM26 11h1v1h-1zM34 15h1v1h-1zM14 21h1v1h-1zM0 22h1v1h-1zM9 24h1v1h-1zM19 32h1v1h-1zM8 38h1v1h-1zM37 39h1v1h-1zM1 40h1v1h-1zM20 53h1v1h-1zM32 69h1v1h-1zM22 77h1v1h-1zM32 78h1v1h-1zM22 88h1v1h-1zM30 88h1v1h-1z"/></g>
<rect x="933.1" y="65.4" width="66" height="167.29999999999998" fill="url(#gClean)"/>
<g transform="translate(933.10 65.40) scale(1.6923 1.7071)" shape-rendering="crispEdges"><path fill="#fff" fill-opacity="0.15" d="M1 0h1v1h-1zM2 0h1v1h-1zM9 0h1v1h-1zM19 0h1v1h-1zM20 0h1v1h-1zM32 0h1v1h-1zM6 1h1v1h-1zM11 1h1v1h-1zM17 1h1v1h-1zM18 1h1v1h-1zM28 1h1v1h-1zM36 1h1v1h-1zM5 2h1v1h-1zM6 2h1v1h-1zM7 2h1v1h-1zM12 2h1v1h-1zM16 2h1v1h-1zM17 2h1v1h-1zM25 2h1v1h-1zM26 2h1v1h-1zM2 3h1v1h-1zM7 3h1v1h-1zM8 3h1v1h-1zM16 3h1v1h-1zM19 3h1v1h-1zM22 3h1v1h-1zM26 3h1v1h-1zM31 3h1v1h-1zM35 3h1v1h-1zM36 3h1v1h-1zM2 4h1v1h-1zM11 4h1v1h-1zM25 4h1v1h-1zM36 4h1v1h-1zM7 5h1v1h-1zM8 5h1v1h-1zM12 5h1v1h-1zM20 5h1v1h-1zM27 5h1v1h-1zM31 5h1v1h-1zM36 5h1v1h-1zM2 6h1v1h-1zM4 6h1v1h-1zM9 6h1v1h-1zM11 6h1v1h-1zM19 6h1v1h-1zM23 6h1v1h-1zM24 6h1v1h-1zM28 6h1v1h-1zM33 6h1v1h-1zM36 6h1v1h-1zM37 6h1v1h-1zM38 6h1v1h-1zM18 7h1v1h-1zM20 7h1v1h-1zM24 7h1v1h-1zM25 7h1v1h-1zM28 7h1v1h-1zM33 7h1v1h-1zM36 7h1v1h-1zM5 8h1v1h-1zM21 8h1v1h-1zM26 8h1v1h-1zM28 8h1v1h-1zM32 8h1v1h-1zM33 8h1v1h-1zM1 9h1v1h-1zM2 9h1v1h-1zM4 9h1v1h-1zM6 9h1v1h-1zM7 9h1v1h-1zM14 9h1v1h-1zM20 9h1v1h-1zM28 9h1v1h-1zM29 9h1v1h-1zM0 10h1v1h-1zM1 10h1v1h-1zM7 10h1v1h-1zM8 10h1v1h-1zM17 10h1v1h-1zM36 10h1v1h-1zM38 10h1v1h-1zM14 11h1v1h-1zM17 11h1v1h-1zM20 11h1v1h-1zM32 11h1v1h-1zM10 12h1v1h-1zM24 12h1v1h-1zM33 12h1v1h-1zM1 13h1v1h-1zM4 13h1v1h-1zM14 13h1v1h-1zM15 13h1v1h-1zM17 13h1v1h-1zM18 13h1v1h-1zM22 13h1v1h-1zM27 13h1v1h-1zM15 14h1v1h-1zM17 14h1v1h-1zM18 14h1v1h-1zM25 14h1v1h-1zM27 14h1v1h-1zM30 14h1v1h-1zM35 14h1v1h-1zM15 15h1v1h-1zM17 15h1v1h-1zM18 15h1v1h-1zM21 15h1v1h-1zM28 15h1v1h-1zM32 15h1v1h-1zM3 16h1v1h-1zM14 16h1v1h-1zM15 16h1v1h-1zM16 16h1v1h-1zM21 16h1v1h-1zM28 16h1v1h-1zM29 16h1v1h-1zM34 16h1v1h-1zM35 16h1v1h-1zM36 16h1v1h-1zM7 17h1v1h-1zM9 17h1v1h-1zM22 17h1v1h-1zM27 17h1v1h-1zM33 17h1v1h-1zM0 18h1v1h-1zM12 18h1v1h-1zM16 18h1v1h-1zM28 18h1v1h-1zM32 18h1v1h-1zM34 18h1v1h-1zM36 18h1v1h-1zM1 19h1v1h-1zM5 19h1v1h-1zM9 19h1v1h-1zM14 19h1v1h-1zM28 19h1v1h-1zM29 19h1v1h-1zM38 19h1v1h-1zM10 20h1v1h-1zM17 20h1v1h-1zM35 20h1v1h-1zM36 20h1v1h-1zM1 21h1v1h-1zM3 21h1v1h-1zM15 21h1v1h-1zM16 21h1v1h-1zM20 21h1v1h-1zM28 21h1v1h-1zM2 22h1v1h-1zM4 22h1v1h-1zM6 22h1v1h-1zM8 22h1v1h-1zM12 23h1v1h-1zM26 23h1v1h-1zM29 23h1v1h-1zM30 23h1v1h-1zM33 23h1v1h-1zM37 23h1v1h-1zM6 24h1v1h-1zM8 24h1v1h-1zM11 24h1v1h-1zM21 24h1v1h-1zM28 24h1v1h-1zM36 24h1v1h-1zM37 24h1v1h-1zM5 25h1v1h-1zM25 25h1v1h-1zM27 25h1v1h-1zM29 25h1v1h-1zM35 25h1v1h-1zM2 26h1v1h-1zM10 26h1v1h-1zM12 26h1v1h-1zM24 26h1v1h-1zM25 26h1v1h-1zM28 26h1v1h-1zM33 26h1v1h-1zM36 26h1v1h-1zM3 27h1v1h-1zM5 27h1v1h-1zM7 27h1v1h-1zM9 27h1v1h-1zM16 27h1v1h-1zM17 27h1v1h-1zM18 27h1v1h-1zM27 27h1v1h-1zM28 27h1v1h-1zM32 27h1v1h-1zM36 27h1v1h-1zM4 28h1v1h-1zM16 28h1v1h-1zM31 28h1v1h-1zM35 28h1v1h-1zM1 29h1v1h-1zM6 29h1v1h-1zM10 29h1v1h-1zM13 29h1v1h-1zM27 29h1v1h-1zM29 29h1v1h-1zM35 29h1v1h-1zM36 29h1v1h-1zM2 30h1v1h-1zM3 30h1v1h-1zM7 30h1v1h-1zM9 30h1v1h-1zM11 30h1v1h-1zM12 30h1v1h-1zM13 30h1v1h-1zM20 30h1v1h-1zM27 30h1v1h-1zM32 30h1v1h-1zM35 30h1v1h-1zM38 30h1v1h-1zM0 31h1v1h-1zM13 31h1v1h-1zM16 31h1v1h-1zM18 31h1v1h-1zM24 31h1v1h-1zM29 31h1v1h-1zM31 31h1v1h-1zM32 31h1v1h-1zM34 31h1v1h-1zM35 31h1v1h-1zM11 32h1v1h-1zM29 32h1v1h-1zM35 32h1v1h-1zM38 32h1v1h-1zM8 33h1v1h-1zM17 33h1v1h-1zM19 33h1v1h-1zM7 34h1v1h-1zM20 34h1v1h-1zM24 34h1v1h-1zM25 34h1v1h-1zM33 34h1v1h-1zM8 35h1v1h-1zM16 35h1v1h-1zM19 35h1v1h-1zM21 35h1v1h-1zM34 35h1v1h-1zM37 35h1v1h-1zM8 36h1v1h-1zM11 36h1v1h-1zM16 36h1v1h-1zM18 36h1v1h-1zM25 36h1v1h-1zM27 36h1v1h-1zM34 36h1v1h-1zM2 37h1v1h-1zM3 37h1v1h-1zM4 37h1v1h-1zM8 37h1v1h-1zM13 37h1v1h-1zM17 37h1v1h-1zM31 37h1v1h-1zM33 37h1v1h-1zM35 37h1v1h-1zM0 38h1v1h-1zM4 38h1v1h-1zM6 38h1v1h-1zM7 38h1v1h-1zM12 38h1v1h-1zM16 38h1v1h-1zM18 38h1v1h-1zM20 38h1v1h-1zM21 38h1v1h-1zM23 38h1v1h-1zM24 38h1v1h-1zM33 38h1v1h-1zM36 38h1v1h-1zM1 39h1v1h-1zM4 39h1v1h-1zM10 39h1v1h-1zM14 39h1v1h-1zM17 39h1v1h-1zM20 39h1v1h-1zM22 39h1v1h-1zM31 39h1v1h-1zM35 39h1v1h-1zM38 39h1v1h-1zM5 40h1v1h-1zM6 40h1v1h-1zM10 40h1v1h-1zM13 40h1v1h-1zM16 40h1v1h-1zM19 40h1v1h-1zM21 40h1v1h-1zM23 40h1v1h-1zM37 40h1v1h-1zM38 40h1v1h-1zM18 41h1v1h-1zM29 41h1v1h-1zM38 41h1v1h-1zM22 42h1v1h-1zM25 42h1v1h-1zM36 42h1v1h-1zM2 43h1v1h-1zM3 43h1v1h-1zM4 43h1v1h-1zM21 43h1v1h-1zM22 43h1v1h-1zM24 43h1v1h-1zM25 43h1v1h-1zM0 44h1v1h-1zM5 44h1v1h-1zM6 44h1v1h-1zM7 44h1v1h-1zM10 44h1v1h-1zM17 44h1v1h-1zM21 44h1v1h-1zM27 44h1v1h-1zM31 44h1v1h-1zM6 45h1v1h-1zM8 45h1v1h-1zM12 45h1v1h-1zM21 45h1v1h-1zM23 45h1v1h-1zM28 45h1v1h-1zM32 45h1v1h-1zM37 45h1v1h-1zM2 46h1v1h-1zM8 46h1v1h-1zM12 46h1v1h-1zM18 46h1v1h-1zM19 46h1v1h-1zM20 46h1v1h-1zM21 46h1v1h-1zM26 46h1v1h-1zM27 46h1v1h-1zM31 46h1v1h-1zM35 46h1v1h-1zM8 47h1v1h-1zM9 47h1v1h-1zM11 47h1v1h-1zM14 47h1v1h-1zM16 47h1v1h-1zM24 47h1v1h-1zM25 47h1v1h-1zM29 47h1v1h-1zM5 48h1v1h-1zM18 48h1v1h-1zM20 48h1v1h-1zM21 48h1v1h-1zM22 48h1v1h-1zM23 48h1v1h-1zM26 48h1v1h-1zM7 49h1v1h-1zM13 49h1v1h-1zM23 49h1v1h-1zM26 49h1v1h-1zM30 49h1v1h-1zM1 50h1v1h-1zM4 50h1v1h-1zM17 50h1v1h-1zM18 50h1v1h-1zM21 50h1v1h-1zM22 50h1v1h-1zM24 50h1v1h-1zM33 50h1v1h-1zM34 50h1v1h-1zM36 50h1v1h-1zM37 50h1v1h-1zM6 51h1v1h-1zM9 51h1v1h-1zM11 51h1v1h-1zM16 51h1v1h-1zM17 51h1v1h-1zM20 51h1v1h-1zM21 51h1v1h-1zM25 51h1v1h-1zM26 51h1v1h-1zM37 51h1v1h-1zM1 52h1v1h-1zM6 52h1v1h-1zM18 52h1v1h-1zM20 52h1v1h-1zM24 52h1v1h-1zM26 52h1v1h-1zM28 52h1v1h-1zM30 52h1v1h-1zM32 52h1v1h-1zM2 53h1v1h-1zM4 53h1v1h-1zM5 53h1v1h-1zM10 53h1v1h-1zM16 53h1v1h-1zM19 53h1v1h-1zM24 53h1v1h-1zM25 53h1v1h-1zM30 53h1v1h-1zM33 53h1v1h-1zM34 53h1v1h-1zM38 53h1v1h-1zM0 54h1v1h-1zM3 54h1v1h-1zM5 54h1v1h-1zM11 54h1v1h-1zM17 54h1v1h-1zM22 54h1v1h-1zM26 54h1v1h-1zM28 54h1v1h-1zM30 54h1v1h-1zM31 54h1v1h-1zM2 55h1v1h-1zM5 55h1v1h-1zM6 55h1v1h-1zM15 55h1v1h-1zM18 55h1v1h-1zM28 55h1v1h-1zM30 55h1v1h-1zM31 55h1v1h-1zM34 55h1v1h-1zM9 56h1v1h-1zM10 56h1v1h-1zM13 56h1v1h-1zM14 56h1v1h-1zM21 56h1v1h-1zM28 56h1v1h-1zM30 56h1v1h-1zM1 57h1v1h-1zM5 57h1v1h-1zM10 57h1v1h-1zM17 57h1v1h-1zM20 57h1v1h-1zM22 57h1v1h-1zM26 57h1v1h-1zM32 57h1v1h-1zM33 57h1v1h-1zM34 57h1v1h-1zM6 58h1v1h-1zM7 58h1v1h-1zM13 58h1v1h-1zM33 58h1v1h-1zM35 58h1v1h-1zM36 58h1v1h-1zM1 59h1v1h-1zM9 59h1v1h-1zM10 59h1v1h-1zM15 59h1v1h-1zM23 59h1v1h-1zM28 59h1v1h-1zM29 59h1v1h-1zM34 59h1v1h-1zM38 59h1v1h-1zM13 60h1v1h-1zM26 60h1v1h-1zM31 60h1v1h-1zM36 60h1v1h-1zM0 61h1v1h-1zM3 61h1v1h-1zM5 61h1v1h-1zM35 61h1v1h-1zM0 62h1v1h-1zM7 62h1v1h-1zM11 62h1v1h-1zM25 62h1v1h-1zM33 62h1v1h-1zM0 63h1v1h-1zM1 63h1v1h-1zM2 63h1v1h-1zM5 63h1v1h-1zM7 63h1v1h-1zM10 63h1v1h-1zM11 63h1v1h-1zM24 63h1v1h-1zM27 63h1v1h-1zM34 63h1v1h-1zM23 64h1v1h-1zM27 64h1v1h-1zM32 64h1v1h-1zM10 65h1v1h-1zM12 65h1v1h-1zM29 65h1v1h-1zM0 66h1v1h-1zM2 66h1v1h-1zM3 66h1v1h-1zM6 66h1v1h-1zM7 66h1v1h-1zM8 66h1v1h-1zM17 66h1v1h-1zM38 66h1v1h-1zM0 67h1v1h-1zM5 67h1v1h-1zM7 67h1v1h-1zM14 67h1v1h-1zM19 67h1v1h-1zM26 67h1v1h-1zM0 68h1v1h-1zM14 68h1v1h-1zM17 68h1v1h-1zM21 68h1v1h-1zM2 69h1v1h-1zM10 69h1v1h-1zM12 69h1v1h-1zM26 69h1v1h-1zM34 69h1v1h-1zM36 69h1v1h-1zM37 69h1v1h-1zM1 70h1v1h-1zM10 70h1v1h-1zM12 70h1v1h-1zM16 70h1v1h-1zM18 70h1v1h-1zM24 70h1v1h-1zM25 70h1v1h-1zM30 70h1v1h-1zM34 70h1v1h-1zM15 71h1v1h-1zM16 71h1v1h-1zM19 71h1v1h-1zM20 71h1v1h-1zM19 72h1v1h-1zM23 72h1v1h-1zM31 72h1v1h-1zM33 72h1v1h-1zM24 73h1v1h-1zM25 73h1v1h-1zM26 73h1v1h-1zM27 73h1v1h-1zM32 73h1v1h-1zM33 73h1v1h-1zM3 74h1v1h-1zM14 74h1v1h-1zM17 74h1v1h-1zM26 74h1v1h-1zM3 75h1v1h-1zM4 75h1v1h-1zM6 75h1v1h-1zM19 75h1v1h-1zM23 75h1v1h-1zM25 75h1v1h-1zM27 75h1v1h-1zM34 75h1v1h-1zM3 76h1v1h-1zM6 76h1v1h-1zM7 76h1v1h-1zM15 76h1v1h-1zM24 76h1v1h-1zM30 76h1v1h-1zM33 76h1v1h-1zM9 77h1v1h-1zM23 77h1v1h-1zM29 77h1v1h-1zM2 78h1v1h-1zM18 78h1v1h-1zM19 78h1v1h-1zM22 78h1v1h-1zM30 78h1v1h-1zM2 79h1v1h-1zM10 79h1v1h-1zM13 79h1v1h-1zM20 79h1v1h-1zM28 79h1v1h-1zM31 79h1v1h-1zM37 79h1v1h-1zM8 80h1v1h-1zM9 80h1v1h-1zM10 80h1v1h-1zM13 80h1v1h-1zM15 80h1v1h-1zM21 80h1v1h-1zM25 80h1v1h-1zM35 80h1v1h-1zM36 80h1v1h-1zM1 81h1v1h-1zM2 81h1v1h-1zM5 81h1v1h-1zM9 81h1v1h-1zM12 81h1v1h-1zM29 81h1v1h-1zM7 82h1v1h-1zM12 82h1v1h-1zM17 82h1v1h-1zM18 82h1v1h-1zM26 82h1v1h-1zM0 83h1v1h-1zM3 83h1v1h-1zM4 83h1v1h-1zM10 83h1v1h-1zM15 83h1v1h-1zM16 83h1v1h-1zM24 83h1v1h-1zM27 83h1v1h-1zM34 83h1v1h-1zM4 84h1v1h-1zM10 84h1v1h-1zM12 84h1v1h-1zM23 84h1v1h-1zM25 84h1v1h-1zM26 84h1v1h-1zM32 84h1v1h-1zM35 84h1v1h-1zM37 84h1v1h-1zM4 85h1v1h-1zM5 85h1v1h-1zM10 85h1v1h-1zM11 85h1v1h-1zM18 85h1v1h-1zM19 85h1v1h-1zM22 85h1v1h-1zM26 85h1v1h-1zM30 85h1v1h-1zM0 86h1v1h-1zM3 86h1v1h-1zM4 86h1v1h-1zM11 86h1v1h-1zM13 86h1v1h-1zM16 86h1v1h-1zM21 86h1v1h-1zM25 86h1v1h-1zM30 86h1v1h-1zM32 86h1v1h-1zM33 86h1v1h-1zM4 87h1v1h-1zM9 87h1v1h-1zM14 87h1v1h-1zM18 87h1v1h-1zM22 87h1v1h-1zM23 87h1v1h-1zM24 87h1v1h-1zM36 87h1v1h-1zM2 88h1v1h-1zM17 88h1v1h-1zM24 88h1v1h-1zM26 88h1v1h-1zM30 88h1v1h-1zM35 88h1v1h-1zM4 89h1v1h-1zM5 89h1v1h-1zM22 89h1v1h-1zM37 89h1v1h-1zM0 90h1v1h-1zM3 90h1v1h-1zM4 90h1v1h-1zM7 90h1v1h-1zM10 90h1v1h-1zM34 90h1v1h-1zM36 90h1v1h-1zM5 91h1v1h-1zM19 91h1v1h-1zM24 91h1v1h-1zM26 91h1v1h-1zM37 91h1v1h-1zM17 92h1v1h-1zM18 92h1v1h-1zM38 92h1v1h-1zM7 93h1v1h-1zM13 93h1v1h-1zM20 93h1v1h-1zM24 93h1v1h-1zM26 93h1v1h-1zM32 93h1v1h-1zM33 93h1v1h-1zM36 93h1v1h-1zM0 94h1v1h-1zM7 94h1v1h-1zM9 94h1v1h-1zM18 94h1v1h-1zM31 94h1v1h-1zM33 94h1v1h-1zM38 94h1v1h-1zM9 95h1v1h-1zM13 95h1v1h-1zM19 95h1v1h-1zM20 95h1v1h-1zM21 95h1v1h-1zM0 96h1v1h-1zM2 96h1v1h-1zM4 96h1v1h-1zM5 96h1v1h-1zM13 96h1v1h-1zM17 96h1v1h-1zM21 96h1v1h-1zM27 96h1v1h-1zM28 96h1v1h-1zM1 97h1v1h-1zM9 97h1v1h-1zM24 97h1v1h-1zM35 97h1v1h-1zM38 97h1v1h-1z"/><path fill="#fff" fill-opacity="0.3" d="M4 0h1v1h-1zM13 0h1v1h-1zM14 0h1v1h-1zM21 0h1v1h-1zM23 0h1v1h-1zM25 0h1v1h-1zM3 1h1v1h-1zM25 1h1v1h-1zM29 1h1v1h-1zM33 1h1v1h-1zM34 1h1v1h-1zM38 1h1v1h-1zM0 2h1v1h-1zM11 2h1v1h-1zM15 2h1v1h-1zM28 2h1v1h-1zM0 3h1v1h-1zM4 3h1v1h-1zM10 3h1v1h-1zM23 3h1v1h-1zM24 3h1v1h-1zM32 3h1v1h-1zM38 3h1v1h-1zM16 4h1v1h-1zM18 4h1v1h-1zM33 4h1v1h-1zM34 4h1v1h-1zM37 4h1v1h-1zM17 5h1v1h-1zM19 5h1v1h-1zM28 5h1v1h-1zM30 5h1v1h-1zM33 5h1v1h-1zM34 5h1v1h-1zM35 5h1v1h-1zM3 6h1v1h-1zM13 6h1v1h-1zM14 6h1v1h-1zM20 6h1v1h-1zM5 7h1v1h-1zM6 7h1v1h-1zM11 7h1v1h-1zM29 7h1v1h-1zM35 7h1v1h-1zM6 8h1v1h-1zM20 8h1v1h-1zM31 8h1v1h-1zM8 9h1v1h-1zM12 9h1v1h-1zM24 9h1v1h-1zM30 9h1v1h-1zM36 9h1v1h-1zM37 9h1v1h-1zM6 10h1v1h-1zM16 10h1v1h-1zM24 10h1v1h-1zM0 11h1v1h-1zM1 11h1v1h-1zM9 11h1v1h-1zM15 11h1v1h-1zM27 11h1v1h-1zM31 11h1v1h-1zM3 12h1v1h-1zM7 12h1v1h-1zM8 12h1v1h-1zM11 12h1v1h-1zM12 12h1v1h-1zM15 12h1v1h-1zM26 12h1v1h-1zM35 12h1v1h-1zM7 13h1v1h-1zM11 13h1v1h-1zM16 13h1v1h-1zM19 13h1v1h-1zM20 13h1v1h-1zM29 13h1v1h-1zM31 13h1v1h-1zM8 14h1v1h-1zM20 14h1v1h-1zM21 14h1v1h-1zM22 14h1v1h-1zM13 15h1v1h-1zM22 15h1v1h-1zM25 15h1v1h-1zM34 15h1v1h-1zM18 16h1v1h-1zM31 16h1v1h-1zM37 16h1v1h-1zM1 17h1v1h-1zM5 17h1v1h-1zM25 17h1v1h-1zM26 17h1v1h-1zM28 17h1v1h-1zM3 18h1v1h-1zM4 18h1v1h-1zM10 18h1v1h-1zM19 18h1v1h-1zM21 18h1v1h-1zM0 19h1v1h-1zM15 19h1v1h-1zM18 19h1v1h-1zM26 19h1v1h-1zM34 19h1v1h-1zM4 20h1v1h-1zM6 20h1v1h-1zM11 20h1v1h-1zM12 20h1v1h-1zM13 20h1v1h-1zM19 20h1v1h-1zM23 20h1v1h-1zM25 20h1v1h-1zM34 20h1v1h-1zM13 21h1v1h-1zM37 21h1v1h-1zM9 22h1v1h-1zM10 22h1v1h-1zM36 22h1v1h-1zM8 23h1v1h-1zM13 23h1v1h-1zM32 23h1v1h-1zM35 23h1v1h-1zM14 24h1v1h-1zM17 24h1v1h-1zM6 25h1v1h-1zM18 25h1v1h-1zM21 25h1v1h-1zM22 25h1v1h-1zM30 25h1v1h-1zM0 26h1v1h-1zM4 26h1v1h-1zM6 26h1v1h-1zM9 26h1v1h-1zM0 27h1v1h-1zM10 27h1v1h-1zM29 27h1v1h-1zM34 27h1v1h-1zM37 27h1v1h-1zM28 28h1v1h-1zM29 28h1v1h-1zM33 28h1v1h-1zM14 29h1v1h-1zM18 29h1v1h-1zM25 29h1v1h-1zM28 29h1v1h-1zM33 29h1v1h-1zM1 30h1v1h-1zM10 30h1v1h-1zM17 30h1v1h-1zM2 31h1v1h-1zM27 31h1v1h-1zM7 32h1v1h-1zM14 32h1v1h-1zM16 32h1v1h-1zM17 32h1v1h-1zM19 32h1v1h-1zM25 32h1v1h-1zM28 32h1v1h-1zM31 32h1v1h-1zM36 32h1v1h-1zM1 33h1v1h-1zM6 33h1v1h-1zM27 33h1v1h-1zM28 33h1v1h-1zM30 33h1v1h-1zM31 33h1v1h-1zM3 34h1v1h-1zM5 34h1v1h-1zM11 34h1v1h-1zM17 34h1v1h-1zM26 34h1v1h-1zM28 34h1v1h-1zM35 34h1v1h-1zM0 35h1v1h-1zM4 35h1v1h-1zM7 35h1v1h-1zM9 35h1v1h-1zM11 35h1v1h-1zM15 35h1v1h-1zM22 35h1v1h-1zM28 35h1v1h-1zM31 35h1v1h-1zM33 35h1v1h-1zM0 36h1v1h-1zM4 36h1v1h-1zM26 36h1v1h-1zM29 36h1v1h-1zM1 37h1v1h-1zM7 37h1v1h-1zM20 37h1v1h-1zM24 37h1v1h-1zM26 37h1v1h-1zM27 37h1v1h-1zM27 38h1v1h-1zM28 38h1v1h-1zM30 38h1v1h-1zM5 39h1v1h-1zM9 39h1v1h-1zM11 39h1v1h-1zM28 39h1v1h-1zM29 39h1v1h-1zM30 39h1v1h-1zM34 39h1v1h-1zM8 40h1v1h-1zM15 40h1v1h-1zM29 40h1v1h-1zM31 40h1v1h-1zM33 40h1v1h-1zM15 41h1v1h-1zM24 41h1v1h-1zM37 41h1v1h-1zM3 42h1v1h-1zM6 42h1v1h-1zM12 42h1v1h-1zM18 42h1v1h-1zM27 42h1v1h-1zM33 42h1v1h-1zM35 42h1v1h-1zM6 43h1v1h-1zM8 43h1v1h-1zM18 43h1v1h-1zM30 43h1v1h-1zM9 44h1v1h-1zM32 44h1v1h-1zM34 44h1v1h-1zM1 45h1v1h-1zM2 45h1v1h-1zM5 45h1v1h-1zM7 45h1v1h-1zM16 45h1v1h-1zM15 46h1v1h-1zM16 46h1v1h-1zM22 46h1v1h-1zM36 46h1v1h-1zM17 47h1v1h-1zM18 47h1v1h-1zM31 47h1v1h-1zM32 47h1v1h-1zM34 47h1v1h-1zM36 47h1v1h-1zM0 48h1v1h-1zM11 48h1v1h-1zM24 48h1v1h-1zM29 48h1v1h-1zM38 48h1v1h-1zM3 49h1v1h-1zM4 49h1v1h-1zM6 49h1v1h-1zM20 49h1v1h-1zM25 49h1v1h-1zM28 49h1v1h-1zM32 49h1v1h-1zM26 50h1v1h-1zM28 50h1v1h-1zM38 50h1v1h-1zM5 51h1v1h-1zM8 51h1v1h-1zM22 51h1v1h-1zM29 51h1v1h-1zM32 51h1v1h-1zM35 51h1v1h-1zM11 52h1v1h-1zM19 52h1v1h-1zM34 52h1v1h-1zM37 52h1v1h-1zM8 53h1v1h-1zM15 53h1v1h-1zM23 53h1v1h-1zM26 53h1v1h-1zM1 54h1v1h-1zM15 54h1v1h-1zM36 54h1v1h-1zM38 54h1v1h-1zM25 55h1v1h-1zM35 55h1v1h-1zM38 55h1v1h-1zM0 56h1v1h-1zM6 56h1v1h-1zM17 56h1v1h-1zM22 56h1v1h-1zM35 56h1v1h-1zM37 56h1v1h-1zM0 57h1v1h-1zM4 57h1v1h-1zM7 57h1v1h-1zM21 57h1v1h-1zM25 57h1v1h-1zM31 57h1v1h-1zM9 58h1v1h-1zM23 58h1v1h-1zM28 58h1v1h-1zM32 58h1v1h-1zM2 59h1v1h-1zM4 59h1v1h-1zM30 59h1v1h-1zM8 60h1v1h-1zM11 60h1v1h-1zM32 60h1v1h-1zM15 61h1v1h-1zM16 61h1v1h-1zM23 61h1v1h-1zM28 61h1v1h-1zM2 62h1v1h-1zM3 62h1v1h-1zM27 62h1v1h-1zM29 62h1v1h-1zM35 62h1v1h-1zM38 62h1v1h-1zM4 63h1v1h-1zM13 63h1v1h-1zM16 63h1v1h-1zM22 63h1v1h-1zM28 63h1v1h-1zM35 63h1v1h-1zM37 63h1v1h-1zM15 64h1v1h-1zM19 64h1v1h-1zM20 64h1v1h-1zM26 64h1v1h-1zM33 64h1v1h-1zM4 65h1v1h-1zM6 65h1v1h-1zM7 65h1v1h-1zM8 65h1v1h-1zM13 65h1v1h-1zM28 65h1v1h-1zM34 65h1v1h-1zM35 65h1v1h-1zM1 66h1v1h-1zM16 66h1v1h-1zM3 67h1v1h-1zM13 67h1v1h-1zM16 67h1v1h-1zM18 67h1v1h-1zM21 67h1v1h-1zM34 67h1v1h-1zM1 68h1v1h-1zM2 68h1v1h-1zM13 68h1v1h-1zM15 68h1v1h-1zM22 68h1v1h-1zM23 68h1v1h-1zM32 68h1v1h-1zM36 68h1v1h-1zM5 69h1v1h-1zM11 69h1v1h-1zM16 69h1v1h-1zM24 69h1v1h-1zM30 69h1v1h-1zM32 69h1v1h-1zM9 70h1v1h-1zM31 70h1v1h-1zM9 71h1v1h-1zM12 71h1v1h-1zM1 72h1v1h-1zM8 72h1v1h-1zM18 72h1v1h-1zM20 72h1v1h-1zM26 72h1v1h-1zM28 72h1v1h-1zM36 72h1v1h-1zM1 73h1v1h-1zM7 73h1v1h-1zM12 73h1v1h-1zM15 73h1v1h-1zM18 73h1v1h-1zM21 73h1v1h-1zM29 73h1v1h-1zM36 73h1v1h-1zM7 74h1v1h-1zM10 74h1v1h-1zM23 74h1v1h-1zM35 74h1v1h-1zM36 74h1v1h-1zM1 75h1v1h-1zM10 75h1v1h-1zM13 75h1v1h-1zM20 75h1v1h-1zM24 75h1v1h-1zM5 76h1v1h-1zM11 76h1v1h-1zM12 76h1v1h-1zM16 76h1v1h-1zM20 76h1v1h-1zM23 76h1v1h-1zM34 76h1v1h-1zM7 77h1v1h-1zM16 77h1v1h-1zM19 77h1v1h-1zM5 78h1v1h-1zM8 78h1v1h-1zM10 78h1v1h-1zM11 78h1v1h-1zM20 78h1v1h-1zM24 78h1v1h-1zM31 78h1v1h-1zM11 79h1v1h-1zM12 79h1v1h-1zM25 79h1v1h-1zM29 79h1v1h-1zM38 79h1v1h-1zM7 80h1v1h-1zM16 80h1v1h-1zM32 80h1v1h-1zM11 81h1v1h-1zM14 81h1v1h-1zM16 81h1v1h-1zM28 81h1v1h-1zM30 81h1v1h-1zM36 81h1v1h-1zM38 81h1v1h-1zM11 82h1v1h-1zM24 82h1v1h-1zM22 83h1v1h-1zM32 83h1v1h-1zM33 83h1v1h-1zM5 84h1v1h-1zM6 84h1v1h-1zM11 84h1v1h-1zM21 84h1v1h-1zM22 84h1v1h-1zM24 84h1v1h-1zM36 84h1v1h-1zM38 84h1v1h-1zM15 85h1v1h-1zM31 85h1v1h-1zM38 85h1v1h-1zM1 86h1v1h-1zM17 86h1v1h-1zM20 86h1v1h-1zM22 86h1v1h-1zM5 87h1v1h-1zM11 87h1v1h-1zM20 87h1v1h-1zM32 87h1v1h-1zM0 88h1v1h-1zM6 88h1v1h-1zM8 88h1v1h-1zM15 88h1v1h-1zM16 88h1v1h-1zM21 88h1v1h-1zM27 88h1v1h-1zM29 88h1v1h-1zM36 88h1v1h-1zM6 89h1v1h-1zM14 89h1v1h-1zM23 89h1v1h-1zM25 89h1v1h-1zM30 89h1v1h-1zM32 89h1v1h-1zM23 90h1v1h-1zM24 90h1v1h-1zM37 90h1v1h-1zM38 90h1v1h-1zM3 91h1v1h-1zM6 91h1v1h-1zM8 91h1v1h-1zM9 91h1v1h-1zM14 91h1v1h-1zM27 91h1v1h-1zM33 91h1v1h-1zM7 92h1v1h-1zM8 92h1v1h-1zM16 92h1v1h-1zM27 92h1v1h-1zM29 92h1v1h-1zM30 92h1v1h-1zM3 93h1v1h-1zM11 93h1v1h-1zM19 93h1v1h-1zM21 93h1v1h-1zM23 93h1v1h-1zM31 93h1v1h-1zM35 93h1v1h-1zM37 93h1v1h-1zM5 94h1v1h-1zM10 94h1v1h-1zM12 94h1v1h-1zM13 94h1v1h-1zM27 94h1v1h-1zM32 94h1v1h-1zM35 94h1v1h-1zM4 95h1v1h-1zM5 95h1v1h-1zM7 95h1v1h-1zM11 95h1v1h-1zM12 95h1v1h-1zM23 95h1v1h-1zM29 95h1v1h-1zM8 96h1v1h-1zM16 96h1v1h-1zM24 96h1v1h-1zM37 96h1v1h-1zM3 97h1v1h-1zM4 97h1v1h-1zM19 97h1v1h-1zM27 97h1v1h-1zM29 97h1v1h-1zM33 97h1v1h-1zM36 97h1v1h-1z"/><path fill="#000" fill-opacity="0.3" d="M15 0h1v1h-1zM36 0h1v1h-1zM38 0h1v1h-1zM1 1h1v1h-1zM37 1h1v1h-1zM9 2h1v1h-1zM31 2h1v1h-1zM32 2h1v1h-1zM29 3h1v1h-1zM0 4h1v1h-1zM1 4h1v1h-1zM6 4h1v1h-1zM12 4h1v1h-1zM14 4h1v1h-1zM19 4h1v1h-1zM26 4h1v1h-1zM3 5h1v1h-1zM15 5h1v1h-1zM16 5h1v1h-1zM32 5h1v1h-1zM0 6h1v1h-1zM15 6h1v1h-1zM16 6h1v1h-1zM34 6h1v1h-1zM35 6h1v1h-1zM7 7h1v1h-1zM27 7h1v1h-1zM38 7h1v1h-1zM4 8h1v1h-1zM10 8h1v1h-1zM11 8h1v1h-1zM13 8h1v1h-1zM22 8h1v1h-1zM27 8h1v1h-1zM21 9h1v1h-1zM5 10h1v1h-1zM14 10h1v1h-1zM30 10h1v1h-1zM29 11h1v1h-1zM30 11h1v1h-1zM35 11h1v1h-1zM17 12h1v1h-1zM18 12h1v1h-1zM0 13h1v1h-1zM3 14h1v1h-1zM4 14h1v1h-1zM29 14h1v1h-1zM32 14h1v1h-1zM34 14h1v1h-1zM3 15h1v1h-1zM11 15h1v1h-1zM20 15h1v1h-1zM23 15h1v1h-1zM8 16h1v1h-1zM9 16h1v1h-1zM3 17h1v1h-1zM6 17h1v1h-1zM12 17h1v1h-1zM13 17h1v1h-1zM18 17h1v1h-1zM2 18h1v1h-1zM13 18h1v1h-1zM27 18h1v1h-1zM35 18h1v1h-1zM37 18h1v1h-1zM3 20h1v1h-1zM9 20h1v1h-1zM15 20h1v1h-1zM22 20h1v1h-1zM2 21h1v1h-1zM12 21h1v1h-1zM17 21h1v1h-1zM19 21h1v1h-1zM24 21h1v1h-1zM34 21h1v1h-1zM3 22h1v1h-1zM13 22h1v1h-1zM16 22h1v1h-1zM19 22h1v1h-1zM25 22h1v1h-1zM31 22h1v1h-1zM7 23h1v1h-1zM10 23h1v1h-1zM18 23h1v1h-1zM23 23h1v1h-1zM34 23h1v1h-1zM23 24h1v1h-1zM32 25h1v1h-1zM37 25h1v1h-1zM1 26h1v1h-1zM5 26h1v1h-1zM13 26h1v1h-1zM14 26h1v1h-1zM30 26h1v1h-1zM34 26h1v1h-1zM4 27h1v1h-1zM8 27h1v1h-1zM21 27h1v1h-1zM26 27h1v1h-1zM30 27h1v1h-1zM35 27h1v1h-1zM38 27h1v1h-1zM8 28h1v1h-1zM12 28h1v1h-1zM17 28h1v1h-1zM34 28h1v1h-1zM26 29h1v1h-1zM4 30h1v1h-1zM6 31h1v1h-1zM28 31h1v1h-1zM0 32h1v1h-1zM4 32h1v1h-1zM5 32h1v1h-1zM24 32h1v1h-1zM32 32h1v1h-1zM12 33h1v1h-1zM20 33h1v1h-1zM24 33h1v1h-1zM9 34h1v1h-1zM10 34h1v1h-1zM23 34h1v1h-1zM37 34h1v1h-1zM38 34h1v1h-1zM1 35h1v1h-1zM10 35h1v1h-1zM13 35h1v1h-1zM23 35h1v1h-1zM21 36h1v1h-1zM11 37h1v1h-1zM15 37h1v1h-1zM13 38h1v1h-1zM29 38h1v1h-1zM32 38h1v1h-1zM12 39h1v1h-1zM27 39h1v1h-1zM4 40h1v1h-1zM7 40h1v1h-1zM12 40h1v1h-1zM24 40h1v1h-1zM25 40h1v1h-1zM0 41h1v1h-1zM2 41h1v1h-1zM6 41h1v1h-1zM22 41h1v1h-1zM26 41h1v1h-1zM28 41h1v1h-1zM30 41h1v1h-1zM31 41h1v1h-1zM2 42h1v1h-1zM4 42h1v1h-1zM11 42h1v1h-1zM14 42h1v1h-1zM20 42h1v1h-1zM1 43h1v1h-1zM29 43h1v1h-1zM33 43h1v1h-1zM12 44h1v1h-1zM15 44h1v1h-1zM20 44h1v1h-1zM36 44h1v1h-1zM38 44h1v1h-1zM3 46h1v1h-1zM7 46h1v1h-1zM23 46h1v1h-1zM29 46h1v1h-1zM38 46h1v1h-1zM12 47h1v1h-1zM26 47h1v1h-1zM38 47h1v1h-1zM7 48h1v1h-1zM9 48h1v1h-1zM15 48h1v1h-1zM2 49h1v1h-1zM21 49h1v1h-1zM9 50h1v1h-1zM12 50h1v1h-1zM30 50h1v1h-1zM23 52h1v1h-1zM29 52h1v1h-1zM3 53h1v1h-1zM7 53h1v1h-1zM9 53h1v1h-1zM12 53h1v1h-1zM14 54h1v1h-1zM19 54h1v1h-1zM20 54h1v1h-1zM8 55h1v1h-1zM13 55h1v1h-1zM19 55h1v1h-1zM33 55h1v1h-1zM1 56h1v1h-1zM15 56h1v1h-1zM16 56h1v1h-1zM20 56h1v1h-1zM26 56h1v1h-1zM27 56h1v1h-1zM31 56h1v1h-1zM36 56h1v1h-1zM14 57h1v1h-1zM18 57h1v1h-1zM24 57h1v1h-1zM3 58h1v1h-1zM5 58h1v1h-1zM10 58h1v1h-1zM18 59h1v1h-1zM32 59h1v1h-1zM1 60h1v1h-1zM5 60h1v1h-1zM10 60h1v1h-1zM12 60h1v1h-1zM14 60h1v1h-1zM25 60h1v1h-1zM29 60h1v1h-1zM35 60h1v1h-1zM7 61h1v1h-1zM14 61h1v1h-1zM20 61h1v1h-1zM26 61h1v1h-1zM38 61h1v1h-1zM14 62h1v1h-1zM15 62h1v1h-1zM24 62h1v1h-1zM17 63h1v1h-1zM23 63h1v1h-1zM29 63h1v1h-1zM1 64h1v1h-1zM6 64h1v1h-1zM16 64h1v1h-1zM25 64h1v1h-1zM3 65h1v1h-1zM11 65h1v1h-1zM14 65h1v1h-1zM15 65h1v1h-1zM17 65h1v1h-1zM33 65h1v1h-1zM36 65h1v1h-1zM37 65h1v1h-1zM11 66h1v1h-1zM12 66h1v1h-1zM25 66h1v1h-1zM29 67h1v1h-1zM3 68h1v1h-1zM20 68h1v1h-1zM24 68h1v1h-1zM0 69h1v1h-1zM13 69h1v1h-1zM17 69h1v1h-1zM23 69h1v1h-1zM27 69h1v1h-1zM28 69h1v1h-1zM29 69h1v1h-1zM38 69h1v1h-1zM2 70h1v1h-1zM7 70h1v1h-1zM20 70h1v1h-1zM29 70h1v1h-1zM32 70h1v1h-1zM4 71h1v1h-1zM11 71h1v1h-1zM25 71h1v1h-1zM34 71h1v1h-1zM3 72h1v1h-1zM4 72h1v1h-1zM11 72h1v1h-1zM15 72h1v1h-1zM16 72h1v1h-1zM24 72h1v1h-1zM13 73h1v1h-1zM16 73h1v1h-1zM17 73h1v1h-1zM31 73h1v1h-1zM16 74h1v1h-1zM18 74h1v1h-1zM5 75h1v1h-1zM9 75h1v1h-1zM18 75h1v1h-1zM26 75h1v1h-1zM28 75h1v1h-1zM10 76h1v1h-1zM32 76h1v1h-1zM0 77h1v1h-1zM6 77h1v1h-1zM13 77h1v1h-1zM24 77h1v1h-1zM28 77h1v1h-1zM32 77h1v1h-1zM16 78h1v1h-1zM25 78h1v1h-1zM1 79h1v1h-1zM8 79h1v1h-1zM22 79h1v1h-1zM27 79h1v1h-1zM32 79h1v1h-1zM0 80h1v1h-1zM2 80h1v1h-1zM3 80h1v1h-1zM5 80h1v1h-1zM11 80h1v1h-1zM24 80h1v1h-1zM37 80h1v1h-1zM3 81h1v1h-1zM18 81h1v1h-1zM19 81h1v1h-1zM22 81h1v1h-1zM33 81h1v1h-1zM5 82h1v1h-1zM9 82h1v1h-1zM14 82h1v1h-1zM25 82h1v1h-1zM34 82h1v1h-1zM38 82h1v1h-1zM1 83h1v1h-1zM5 83h1v1h-1zM7 83h1v1h-1zM8 83h1v1h-1zM9 83h1v1h-1zM11 83h1v1h-1zM17 83h1v1h-1zM23 83h1v1h-1zM8 84h1v1h-1zM13 84h1v1h-1zM14 84h1v1h-1zM15 84h1v1h-1zM18 84h1v1h-1zM30 84h1v1h-1zM0 85h1v1h-1zM6 85h1v1h-1zM13 85h1v1h-1zM17 85h1v1h-1zM34 85h1v1h-1zM5 86h1v1h-1zM8 86h1v1h-1zM23 86h1v1h-1zM27 86h1v1h-1zM31 86h1v1h-1zM35 86h1v1h-1zM0 87h1v1h-1zM2 87h1v1h-1zM8 87h1v1h-1zM13 87h1v1h-1zM21 87h1v1h-1zM10 88h1v1h-1zM31 88h1v1h-1zM7 89h1v1h-1zM10 89h1v1h-1zM17 89h1v1h-1zM38 89h1v1h-1zM13 90h1v1h-1zM15 90h1v1h-1zM28 90h1v1h-1zM12 91h1v1h-1zM1 92h1v1h-1zM5 92h1v1h-1zM9 92h1v1h-1zM20 92h1v1h-1zM33 92h1v1h-1zM5 93h1v1h-1zM34 93h1v1h-1zM11 94h1v1h-1zM22 94h1v1h-1zM14 95h1v1h-1zM25 95h1v1h-1zM36 95h1v1h-1zM38 95h1v1h-1zM29 96h1v1h-1zM6 97h1v1h-1zM16 97h1v1h-1zM21 97h1v1h-1zM25 97h1v1h-1zM30 97h1v1h-1zM34 97h1v1h-1z"/><path fill="#fff" fill-opacity="0.45" d="M18 0h1v1h-1zM22 0h1v1h-1zM33 0h1v1h-1zM0 1h1v1h-1zM10 1h1v1h-1zM14 2h1v1h-1zM36 2h1v1h-1zM1 3h1v1h-1zM8 4h1v1h-1zM9 4h1v1h-1zM24 4h1v1h-1zM9 5h1v1h-1zM26 5h1v1h-1zM6 6h1v1h-1zM12 6h1v1h-1zM17 6h1v1h-1zM21 6h1v1h-1zM29 6h1v1h-1zM1 7h1v1h-1zM3 7h1v1h-1zM12 7h1v1h-1zM13 7h1v1h-1zM30 7h1v1h-1zM32 7h1v1h-1zM34 7h1v1h-1zM16 9h1v1h-1zM19 9h1v1h-1zM23 9h1v1h-1zM15 10h1v1h-1zM10 11h1v1h-1zM11 11h1v1h-1zM22 11h1v1h-1zM0 12h1v1h-1zM2 12h1v1h-1zM5 12h1v1h-1zM16 12h1v1h-1zM21 12h1v1h-1zM25 12h1v1h-1zM30 13h1v1h-1zM6 14h1v1h-1zM26 14h1v1h-1zM33 14h1v1h-1zM37 14h1v1h-1zM10 15h1v1h-1zM19 15h1v1h-1zM30 15h1v1h-1zM10 16h1v1h-1zM0 17h1v1h-1zM2 17h1v1h-1zM17 17h1v1h-1zM34 17h1v1h-1zM8 18h1v1h-1zM22 18h1v1h-1zM27 19h1v1h-1zM37 19h1v1h-1zM8 20h1v1h-1zM18 20h1v1h-1zM21 20h1v1h-1zM24 20h1v1h-1zM27 21h1v1h-1zM33 21h1v1h-1zM27 22h1v1h-1zM0 23h1v1h-1zM6 23h1v1h-1zM9 24h1v1h-1zM18 24h1v1h-1zM24 24h1v1h-1zM16 25h1v1h-1zM33 25h1v1h-1zM31 26h1v1h-1zM22 27h1v1h-1zM2 28h1v1h-1zM14 28h1v1h-1zM23 29h1v1h-1zM38 29h1v1h-1zM6 30h1v1h-1zM26 30h1v1h-1zM22 31h1v1h-1zM25 31h1v1h-1zM21 32h1v1h-1zM22 32h1v1h-1zM13 33h1v1h-1zM15 33h1v1h-1zM21 33h1v1h-1zM1 34h1v1h-1zM6 35h1v1h-1zM18 35h1v1h-1zM26 35h1v1h-1zM38 35h1v1h-1zM1 36h1v1h-1zM2 36h1v1h-1zM6 36h1v1h-1zM28 36h1v1h-1zM36 36h1v1h-1zM38 36h1v1h-1zM21 37h1v1h-1zM32 37h1v1h-1zM15 38h1v1h-1zM3 40h1v1h-1zM14 40h1v1h-1zM26 40h1v1h-1zM16 41h1v1h-1zM31 42h1v1h-1zM3 44h1v1h-1zM8 44h1v1h-1zM20 45h1v1h-1zM36 45h1v1h-1zM13 46h1v1h-1zM14 46h1v1h-1zM32 46h1v1h-1zM3 47h1v1h-1zM14 49h1v1h-1zM24 49h1v1h-1zM14 50h1v1h-1zM7 51h1v1h-1zM14 51h1v1h-1zM3 52h1v1h-1zM33 52h1v1h-1zM35 52h1v1h-1zM29 53h1v1h-1zM18 54h1v1h-1zM24 54h1v1h-1zM29 54h1v1h-1zM32 54h1v1h-1zM14 55h1v1h-1zM17 55h1v1h-1zM29 55h1v1h-1zM25 56h1v1h-1zM11 57h1v1h-1zM28 57h1v1h-1zM24 58h1v1h-1zM11 59h1v1h-1zM25 59h1v1h-1zM17 60h1v1h-1zM19 60h1v1h-1zM23 60h1v1h-1zM30 60h1v1h-1zM34 60h1v1h-1zM11 61h1v1h-1zM12 61h1v1h-1zM25 61h1v1h-1zM21 62h1v1h-1zM26 62h1v1h-1zM25 63h1v1h-1zM30 63h1v1h-1zM2 64h1v1h-1zM17 64h1v1h-1zM21 64h1v1h-1zM25 65h1v1h-1zM10 66h1v1h-1zM13 66h1v1h-1zM30 66h1v1h-1zM31 67h1v1h-1zM12 68h1v1h-1zM35 68h1v1h-1zM20 69h1v1h-1zM31 69h1v1h-1zM0 70h1v1h-1zM8 71h1v1h-1zM37 71h1v1h-1zM38 71h1v1h-1zM6 72h1v1h-1zM5 73h1v1h-1zM12 75h1v1h-1zM18 76h1v1h-1zM19 76h1v1h-1zM31 76h1v1h-1zM38 76h1v1h-1zM1 77h1v1h-1zM8 77h1v1h-1zM20 77h1v1h-1zM27 77h1v1h-1zM34 77h1v1h-1zM38 77h1v1h-1zM0 78h1v1h-1zM4 78h1v1h-1zM15 79h1v1h-1zM23 79h1v1h-1zM26 81h1v1h-1zM31 81h1v1h-1zM30 82h1v1h-1zM0 84h1v1h-1zM29 84h1v1h-1zM28 86h1v1h-1zM3 87h1v1h-1zM28 87h1v1h-1zM34 88h1v1h-1zM18 89h1v1h-1zM29 89h1v1h-1zM33 90h1v1h-1zM29 91h1v1h-1zM35 91h1v1h-1zM10 92h1v1h-1zM36 92h1v1h-1zM29 93h1v1h-1zM14 94h1v1h-1zM24 94h1v1h-1zM15 95h1v1h-1zM26 95h1v1h-1zM35 96h1v1h-1zM2 97h1v1h-1zM7 97h1v1h-1zM8 97h1v1h-1zM14 97h1v1h-1z"/><path fill="#000" fill-opacity="0.6" d="M27 0h1v1h-1zM22 2h1v1h-1zM38 5h1v1h-1zM27 9h1v1h-1zM29 15h1v1h-1zM7 16h1v1h-1zM31 18h1v1h-1zM30 20h1v1h-1zM38 20h1v1h-1zM22 21h1v1h-1zM35 33h1v1h-1zM15 36h1v1h-1zM23 41h1v1h-1zM16 43h1v1h-1zM1 44h1v1h-1zM15 45h1v1h-1zM30 45h1v1h-1zM24 46h1v1h-1zM34 49h1v1h-1zM3 50h1v1h-1zM5 52h1v1h-1zM20 53h1v1h-1zM25 54h1v1h-1zM37 54h1v1h-1zM16 57h1v1h-1zM36 57h1v1h-1zM20 62h1v1h-1zM31 66h1v1h-1zM14 69h1v1h-1zM9 72h1v1h-1zM22 73h1v1h-1zM34 73h1v1h-1zM5 74h1v1h-1zM30 74h1v1h-1zM34 74h1v1h-1zM11 75h1v1h-1zM32 75h1v1h-1zM37 76h1v1h-1zM14 77h1v1h-1zM34 78h1v1h-1zM35 79h1v1h-1zM6 81h1v1h-1zM21 81h1v1h-1zM15 82h1v1h-1zM19 86h1v1h-1zM1 87h1v1h-1zM6 87h1v1h-1zM8 90h1v1h-1zM26 92h1v1h-1z"/><path fill="#fff" fill-opacity="0.6" d="M28 0h1v1h-1zM37 0h1v1h-1zM15 1h1v1h-1zM32 4h1v1h-1zM13 5h1v1h-1zM25 5h1v1h-1zM36 8h1v1h-1zM10 10h1v1h-1zM5 14h1v1h-1zM7 15h1v1h-1zM38 18h1v1h-1zM12 22h1v1h-1zM15 24h1v1h-1zM10 25h1v1h-1zM14 25h1v1h-1zM12 27h1v1h-1zM23 28h1v1h-1zM23 32h1v1h-1zM9 33h1v1h-1zM5 35h1v1h-1zM14 35h1v1h-1zM36 35h1v1h-1zM25 39h1v1h-1zM24 42h1v1h-1zM30 42h1v1h-1zM19 44h1v1h-1zM27 45h1v1h-1zM19 47h1v1h-1zM37 48h1v1h-1zM12 49h1v1h-1zM15 49h1v1h-1zM8 52h1v1h-1zM9 52h1v1h-1zM6 53h1v1h-1zM27 54h1v1h-1zM23 55h1v1h-1zM34 56h1v1h-1zM32 61h1v1h-1zM16 62h1v1h-1zM14 63h1v1h-1zM26 63h1v1h-1zM9 65h1v1h-1zM20 66h1v1h-1zM22 67h1v1h-1zM6 68h1v1h-1zM27 68h1v1h-1zM21 70h1v1h-1zM37 70h1v1h-1zM6 71h1v1h-1zM21 71h1v1h-1zM22 74h1v1h-1zM25 76h1v1h-1zM11 77h1v1h-1zM7 78h1v1h-1zM17 79h1v1h-1zM37 81h1v1h-1zM2 83h1v1h-1zM28 83h1v1h-1zM7 84h1v1h-1zM14 85h1v1h-1zM3 88h1v1h-1zM7 91h1v1h-1zM15 91h1v1h-1zM17 91h1v1h-1zM15 92h1v1h-1zM30 93h1v1h-1zM7 96h1v1h-1zM20 97h1v1h-1z"/><path fill="#000" fill-opacity="0.15" d="M29 0h1v1h-1zM2 1h1v1h-1zM7 1h1v1h-1zM14 1h1v1h-1zM21 1h1v1h-1zM26 1h1v1h-1zM1 2h1v1h-1zM3 2h1v1h-1zM10 2h1v1h-1zM23 2h1v1h-1zM24 2h1v1h-1zM30 2h1v1h-1zM34 2h1v1h-1zM35 2h1v1h-1zM37 2h1v1h-1zM14 3h1v1h-1zM15 3h1v1h-1zM20 3h1v1h-1zM4 4h1v1h-1zM5 4h1v1h-1zM15 4h1v1h-1zM23 4h1v1h-1zM38 4h1v1h-1zM0 5h1v1h-1zM1 5h1v1h-1zM2 5h1v1h-1zM5 5h1v1h-1zM6 5h1v1h-1zM14 5h1v1h-1zM22 5h1v1h-1zM23 5h1v1h-1zM27 6h1v1h-1zM30 6h1v1h-1zM2 7h1v1h-1zM22 7h1v1h-1zM0 8h1v1h-1zM2 8h1v1h-1zM14 8h1v1h-1zM37 8h1v1h-1zM38 8h1v1h-1zM15 9h1v1h-1zM22 9h1v1h-1zM25 9h1v1h-1zM31 9h1v1h-1zM34 9h1v1h-1zM13 10h1v1h-1zM18 10h1v1h-1zM23 10h1v1h-1zM26 10h1v1h-1zM29 10h1v1h-1zM32 10h1v1h-1zM35 10h1v1h-1zM4 11h1v1h-1zM8 11h1v1h-1zM12 11h1v1h-1zM21 11h1v1h-1zM28 11h1v1h-1zM36 11h1v1h-1zM19 12h1v1h-1zM22 12h1v1h-1zM29 12h1v1h-1zM31 12h1v1h-1zM28 13h1v1h-1zM32 13h1v1h-1zM36 13h1v1h-1zM12 14h1v1h-1zM14 14h1v1h-1zM31 14h1v1h-1zM2 15h1v1h-1zM16 15h1v1h-1zM27 15h1v1h-1zM31 15h1v1h-1zM4 16h1v1h-1zM13 16h1v1h-1zM20 16h1v1h-1zM25 16h1v1h-1zM27 16h1v1h-1zM30 16h1v1h-1zM19 17h1v1h-1zM20 17h1v1h-1zM30 17h1v1h-1zM1 18h1v1h-1zM5 18h1v1h-1zM9 18h1v1h-1zM11 18h1v1h-1zM20 18h1v1h-1zM23 18h1v1h-1zM24 18h1v1h-1zM30 18h1v1h-1zM33 18h1v1h-1zM6 19h1v1h-1zM10 19h1v1h-1zM11 19h1v1h-1zM19 19h1v1h-1zM20 19h1v1h-1zM31 19h1v1h-1zM0 20h1v1h-1zM1 20h1v1h-1zM5 20h1v1h-1zM7 20h1v1h-1zM28 20h1v1h-1zM37 20h1v1h-1zM0 21h1v1h-1zM4 21h1v1h-1zM9 21h1v1h-1zM21 21h1v1h-1zM23 21h1v1h-1zM25 21h1v1h-1zM31 21h1v1h-1zM35 21h1v1h-1zM11 22h1v1h-1zM20 22h1v1h-1zM22 22h1v1h-1zM26 22h1v1h-1zM28 22h1v1h-1zM29 22h1v1h-1zM32 22h1v1h-1zM1 23h1v1h-1zM2 23h1v1h-1zM5 23h1v1h-1zM14 23h1v1h-1zM19 23h1v1h-1zM21 23h1v1h-1zM25 23h1v1h-1zM31 23h1v1h-1zM36 23h1v1h-1zM0 24h1v1h-1zM1 24h1v1h-1zM5 24h1v1h-1zM16 24h1v1h-1zM19 24h1v1h-1zM26 24h1v1h-1zM4 25h1v1h-1zM15 25h1v1h-1zM23 25h1v1h-1zM28 25h1v1h-1zM34 25h1v1h-1zM38 25h1v1h-1zM18 26h1v1h-1zM19 26h1v1h-1zM23 26h1v1h-1zM35 26h1v1h-1zM11 27h1v1h-1zM14 27h1v1h-1zM25 27h1v1h-1zM1 28h1v1h-1zM11 28h1v1h-1zM13 28h1v1h-1zM19 28h1v1h-1zM20 28h1v1h-1zM21 28h1v1h-1zM24 28h1v1h-1zM27 28h1v1h-1zM36 28h1v1h-1zM37 28h1v1h-1zM38 28h1v1h-1zM3 29h1v1h-1zM5 29h1v1h-1zM12 29h1v1h-1zM20 29h1v1h-1zM22 29h1v1h-1zM34 29h1v1h-1zM37 29h1v1h-1zM8 30h1v1h-1zM14 30h1v1h-1zM16 30h1v1h-1zM23 30h1v1h-1zM1 31h1v1h-1zM10 31h1v1h-1zM21 31h1v1h-1zM26 31h1v1h-1zM36 31h1v1h-1zM8 32h1v1h-1zM13 32h1v1h-1zM30 32h1v1h-1zM34 32h1v1h-1zM2 33h1v1h-1zM14 33h1v1h-1zM16 33h1v1h-1zM22 33h1v1h-1zM25 33h1v1h-1zM29 33h1v1h-1zM34 33h1v1h-1zM38 33h1v1h-1zM2 34h1v1h-1zM4 34h1v1h-1zM13 34h1v1h-1zM14 34h1v1h-1zM21 34h1v1h-1zM2 35h1v1h-1zM12 35h1v1h-1zM20 35h1v1h-1zM24 35h1v1h-1zM32 35h1v1h-1zM3 36h1v1h-1zM14 36h1v1h-1zM19 36h1v1h-1zM22 36h1v1h-1zM24 36h1v1h-1zM33 36h1v1h-1zM6 37h1v1h-1zM18 37h1v1h-1zM22 37h1v1h-1zM30 37h1v1h-1zM34 37h1v1h-1zM37 37h1v1h-1zM11 38h1v1h-1zM14 38h1v1h-1zM17 38h1v1h-1zM34 38h1v1h-1zM38 38h1v1h-1zM13 39h1v1h-1zM21 39h1v1h-1zM32 39h1v1h-1zM36 39h1v1h-1zM0 40h1v1h-1zM1 40h1v1h-1zM11 40h1v1h-1zM18 40h1v1h-1zM30 40h1v1h-1zM19 41h1v1h-1zM32 41h1v1h-1zM33 41h1v1h-1zM0 42h1v1h-1zM5 42h1v1h-1zM10 42h1v1h-1zM17 42h1v1h-1zM23 42h1v1h-1zM26 42h1v1h-1zM28 42h1v1h-1zM34 42h1v1h-1zM17 43h1v1h-1zM19 43h1v1h-1zM26 43h1v1h-1zM31 43h1v1h-1zM32 43h1v1h-1zM4 44h1v1h-1zM11 44h1v1h-1zM25 44h1v1h-1zM26 44h1v1h-1zM29 44h1v1h-1zM35 44h1v1h-1zM0 45h1v1h-1zM34 45h1v1h-1zM35 45h1v1h-1zM0 46h1v1h-1zM1 46h1v1h-1zM4 46h1v1h-1zM28 46h1v1h-1zM30 46h1v1h-1zM0 47h1v1h-1zM7 47h1v1h-1zM15 47h1v1h-1zM20 47h1v1h-1zM22 47h1v1h-1zM23 47h1v1h-1zM37 47h1v1h-1zM3 48h1v1h-1zM6 48h1v1h-1zM12 48h1v1h-1zM17 48h1v1h-1zM30 48h1v1h-1zM32 48h1v1h-1zM33 48h1v1h-1zM36 48h1v1h-1zM0 49h1v1h-1zM1 49h1v1h-1zM5 49h1v1h-1zM8 49h1v1h-1zM11 49h1v1h-1zM17 49h1v1h-1zM22 49h1v1h-1zM29 49h1v1h-1zM33 49h1v1h-1zM36 49h1v1h-1zM37 49h1v1h-1zM6 50h1v1h-1zM8 50h1v1h-1zM10 50h1v1h-1zM19 50h1v1h-1zM25 50h1v1h-1zM27 50h1v1h-1zM32 50h1v1h-1zM34 51h1v1h-1zM36 51h1v1h-1zM0 52h1v1h-1zM7 52h1v1h-1zM10 52h1v1h-1zM12 52h1v1h-1zM13 52h1v1h-1zM14 52h1v1h-1zM15 52h1v1h-1zM21 52h1v1h-1zM22 52h1v1h-1zM0 53h1v1h-1zM11 53h1v1h-1zM17 53h1v1h-1zM22 53h1v1h-1zM31 53h1v1h-1zM35 53h1v1h-1zM37 53h1v1h-1zM2 54h1v1h-1zM4 54h1v1h-1zM6 54h1v1h-1zM9 54h1v1h-1zM12 54h1v1h-1zM21 54h1v1h-1zM34 54h1v1h-1zM1 55h1v1h-1zM11 55h1v1h-1zM12 55h1v1h-1zM16 55h1v1h-1zM20 55h1v1h-1zM21 55h1v1h-1zM26 55h1v1h-1zM27 55h1v1h-1zM4 56h1v1h-1zM5 56h1v1h-1zM23 56h1v1h-1zM24 56h1v1h-1zM32 56h1v1h-1zM33 56h1v1h-1zM12 57h1v1h-1zM13 57h1v1h-1zM19 57h1v1h-1zM29 57h1v1h-1zM0 58h1v1h-1zM8 58h1v1h-1zM14 58h1v1h-1zM19 58h1v1h-1zM20 58h1v1h-1zM26 58h1v1h-1zM27 58h1v1h-1zM37 58h1v1h-1zM13 59h1v1h-1zM17 59h1v1h-1zM4 60h1v1h-1zM9 60h1v1h-1zM18 60h1v1h-1zM27 60h1v1h-1zM38 60h1v1h-1zM2 61h1v1h-1zM10 61h1v1h-1zM18 61h1v1h-1zM21 61h1v1h-1zM22 61h1v1h-1zM27 61h1v1h-1zM36 61h1v1h-1zM13 62h1v1h-1zM22 62h1v1h-1zM28 62h1v1h-1zM32 62h1v1h-1zM34 62h1v1h-1zM6 63h1v1h-1zM8 63h1v1h-1zM9 63h1v1h-1zM31 63h1v1h-1zM33 63h1v1h-1zM36 63h1v1h-1zM10 64h1v1h-1zM11 64h1v1h-1zM24 64h1v1h-1zM30 64h1v1h-1zM31 64h1v1h-1zM34 64h1v1h-1zM0 65h1v1h-1zM2 65h1v1h-1zM16 65h1v1h-1zM18 65h1v1h-1zM24 65h1v1h-1zM26 65h1v1h-1zM27 65h1v1h-1zM4 66h1v1h-1zM15 66h1v1h-1zM26 66h1v1h-1zM27 66h1v1h-1zM29 66h1v1h-1zM36 66h1v1h-1zM4 67h1v1h-1zM6 67h1v1h-1zM10 67h1v1h-1zM15 67h1v1h-1zM23 67h1v1h-1zM28 67h1v1h-1zM7 68h1v1h-1zM8 68h1v1h-1zM10 68h1v1h-1zM18 68h1v1h-1zM25 68h1v1h-1zM34 68h1v1h-1zM3 69h1v1h-1zM6 69h1v1h-1zM7 69h1v1h-1zM18 69h1v1h-1zM25 69h1v1h-1zM3 70h1v1h-1zM13 70h1v1h-1zM22 70h1v1h-1zM27 70h1v1h-1zM35 70h1v1h-1zM38 70h1v1h-1zM22 71h1v1h-1zM24 71h1v1h-1zM26 71h1v1h-1zM31 71h1v1h-1zM33 71h1v1h-1zM12 72h1v1h-1zM14 72h1v1h-1zM17 72h1v1h-1zM38 72h1v1h-1zM0 73h1v1h-1zM3 73h1v1h-1zM4 73h1v1h-1zM8 73h1v1h-1zM10 73h1v1h-1zM14 73h1v1h-1zM35 73h1v1h-1zM37 73h1v1h-1zM0 74h1v1h-1zM1 74h1v1h-1zM2 74h1v1h-1zM15 74h1v1h-1zM20 74h1v1h-1zM25 74h1v1h-1zM27 74h1v1h-1zM29 74h1v1h-1zM33 74h1v1h-1zM37 74h1v1h-1zM2 75h1v1h-1zM8 75h1v1h-1zM15 75h1v1h-1zM22 75h1v1h-1zM30 75h1v1h-1zM35 75h1v1h-1zM0 76h1v1h-1zM2 76h1v1h-1zM8 76h1v1h-1zM26 76h1v1h-1zM35 76h1v1h-1zM12 77h1v1h-1zM18 77h1v1h-1zM25 77h1v1h-1zM26 77h1v1h-1zM1 78h1v1h-1zM9 78h1v1h-1zM12 78h1v1h-1zM17 78h1v1h-1zM23 78h1v1h-1zM29 78h1v1h-1zM36 78h1v1h-1zM37 78h1v1h-1zM6 79h1v1h-1zM19 79h1v1h-1zM24 79h1v1h-1zM1 80h1v1h-1zM4 80h1v1h-1zM12 80h1v1h-1zM17 80h1v1h-1zM20 80h1v1h-1zM27 80h1v1h-1zM31 80h1v1h-1zM33 80h1v1h-1zM34 80h1v1h-1zM38 80h1v1h-1zM8 81h1v1h-1zM24 81h1v1h-1zM0 82h1v1h-1zM10 82h1v1h-1zM20 82h1v1h-1zM22 82h1v1h-1zM27 82h1v1h-1zM28 82h1v1h-1zM32 82h1v1h-1zM33 82h1v1h-1zM18 83h1v1h-1zM19 83h1v1h-1zM35 83h1v1h-1zM38 83h1v1h-1zM9 84h1v1h-1zM19 84h1v1h-1zM28 84h1v1h-1zM1 85h1v1h-1zM7 85h1v1h-1zM8 85h1v1h-1zM9 85h1v1h-1zM21 85h1v1h-1zM25 85h1v1h-1zM32 85h1v1h-1zM36 85h1v1h-1zM6 86h1v1h-1zM24 86h1v1h-1zM29 86h1v1h-1zM37 86h1v1h-1zM12 87h1v1h-1zM15 87h1v1h-1zM29 87h1v1h-1zM35 87h1v1h-1zM37 87h1v1h-1zM5 88h1v1h-1zM7 88h1v1h-1zM12 88h1v1h-1zM14 88h1v1h-1zM18 88h1v1h-1zM22 88h1v1h-1zM32 88h1v1h-1zM37 88h1v1h-1zM13 89h1v1h-1zM20 89h1v1h-1zM21 89h1v1h-1zM24 89h1v1h-1zM26 89h1v1h-1zM34 89h1v1h-1zM2 90h1v1h-1zM5 90h1v1h-1zM6 90h1v1h-1zM12 90h1v1h-1zM14 90h1v1h-1zM25 90h1v1h-1zM29 90h1v1h-1zM30 90h1v1h-1zM0 91h1v1h-1zM1 91h1v1h-1zM20 91h1v1h-1zM21 91h1v1h-1zM25 91h1v1h-1zM28 91h1v1h-1zM31 91h1v1h-1zM2 92h1v1h-1zM3 92h1v1h-1zM4 92h1v1h-1zM12 92h1v1h-1zM23 92h1v1h-1zM34 92h1v1h-1zM35 92h1v1h-1zM1 93h1v1h-1zM9 93h1v1h-1zM12 93h1v1h-1zM25 93h1v1h-1zM1 94h1v1h-1zM6 94h1v1h-1zM15 94h1v1h-1zM23 94h1v1h-1zM34 94h1v1h-1zM10 95h1v1h-1zM22 95h1v1h-1zM24 95h1v1h-1zM27 95h1v1h-1zM30 95h1v1h-1zM33 95h1v1h-1zM1 96h1v1h-1zM3 96h1v1h-1zM9 96h1v1h-1zM12 96h1v1h-1zM22 96h1v1h-1zM31 96h1v1h-1zM32 96h1v1h-1zM13 97h1v1h-1zM18 97h1v1h-1zM32 97h1v1h-1z"/><path fill="#000" fill-opacity="0.45" d="M4 1h1v1h-1zM20 1h1v1h-1zM4 2h1v1h-1zM13 2h1v1h-1zM6 3h1v1h-1zM12 3h1v1h-1zM27 3h1v1h-1zM9 7h1v1h-1zM16 7h1v1h-1zM7 8h1v1h-1zM24 8h1v1h-1zM0 9h1v1h-1zM5 9h1v1h-1zM2 10h1v1h-1zM3 10h1v1h-1zM38 12h1v1h-1zM0 14h1v1h-1zM12 15h1v1h-1zM1 16h1v1h-1zM5 16h1v1h-1zM24 16h1v1h-1zM36 17h1v1h-1zM6 18h1v1h-1zM7 18h1v1h-1zM25 18h1v1h-1zM3 19h1v1h-1zM7 19h1v1h-1zM13 19h1v1h-1zM30 19h1v1h-1zM27 20h1v1h-1zM14 22h1v1h-1zM22 23h1v1h-1zM2 24h1v1h-1zM38 24h1v1h-1zM1 25h1v1h-1zM17 25h1v1h-1zM38 26h1v1h-1zM33 27h1v1h-1zM32 28h1v1h-1zM2 29h1v1h-1zM11 29h1v1h-1zM18 30h1v1h-1zM37 31h1v1h-1zM27 32h1v1h-1zM4 33h1v1h-1zM30 34h1v1h-1zM34 34h1v1h-1zM17 35h1v1h-1zM27 35h1v1h-1zM7 36h1v1h-1zM10 36h1v1h-1zM31 36h1v1h-1zM19 38h1v1h-1zM3 39h1v1h-1zM18 39h1v1h-1zM32 40h1v1h-1zM8 41h1v1h-1zM22 44h1v1h-1zM5 46h1v1h-1zM6 46h1v1h-1zM16 48h1v1h-1zM25 48h1v1h-1zM27 48h1v1h-1zM35 48h1v1h-1zM38 49h1v1h-1zM0 50h1v1h-1zM13 50h1v1h-1zM0 51h1v1h-1zM1 51h1v1h-1zM2 51h1v1h-1zM17 52h1v1h-1zM36 55h1v1h-1zM2 58h1v1h-1zM4 58h1v1h-1zM31 58h1v1h-1zM16 59h1v1h-1zM19 59h1v1h-1zM21 60h1v1h-1zM8 61h1v1h-1zM13 61h1v1h-1zM34 61h1v1h-1zM8 62h1v1h-1zM12 63h1v1h-1zM3 64h1v1h-1zM7 64h1v1h-1zM12 64h1v1h-1zM13 64h1v1h-1zM22 64h1v1h-1zM30 65h1v1h-1zM5 66h1v1h-1zM27 67h1v1h-1zM35 67h1v1h-1zM29 68h1v1h-1zM35 69h1v1h-1zM11 70h1v1h-1zM19 70h1v1h-1zM26 70h1v1h-1zM5 71h1v1h-1zM10 71h1v1h-1zM28 71h1v1h-1zM29 71h1v1h-1zM21 72h1v1h-1zM34 72h1v1h-1zM35 72h1v1h-1zM19 73h1v1h-1zM4 77h1v1h-1zM15 77h1v1h-1zM36 77h1v1h-1zM37 77h1v1h-1zM26 78h1v1h-1zM33 78h1v1h-1zM7 79h1v1h-1zM6 80h1v1h-1zM22 80h1v1h-1zM13 82h1v1h-1zM35 82h1v1h-1zM16 84h1v1h-1zM17 84h1v1h-1zM34 84h1v1h-1zM34 86h1v1h-1zM1 89h1v1h-1zM33 89h1v1h-1zM35 90h1v1h-1zM16 91h1v1h-1zM6 92h1v1h-1zM11 92h1v1h-1zM19 92h1v1h-1zM25 92h1v1h-1zM6 93h1v1h-1zM8 94h1v1h-1zM21 94h1v1h-1zM30 94h1v1h-1zM0 95h1v1h-1zM18 96h1v1h-1zM34 96h1v1h-1zM26 97h1v1h-1zM31 97h1v1h-1z"/><path fill="#fff" fill-opacity="0.8" d="M14 12h1v1h-1zM17 19h1v1h-1zM8 26h1v1h-1zM30 30h1v1h-1zM10 38h1v1h-1zM13 44h1v1h-1zM27 51h1v1h-1zM16 54h1v1h-1zM8 64h1v1h-1zM23 73h1v1h-1zM2 89h1v1h-1zM38 93h1v1h-1z"/><path fill="#000" fill-opacity="0.8" d="M3 23h1v1h-1zM7 29h1v1h-1zM30 44h1v1h-1zM23 54h1v1h-1zM20 67h1v1h-1zM1 84h1v1h-1zM12 86h1v1h-1z"/></g>
<rect x="831.65" y="64.4" width="67.2" height="169.25" fill="none" stroke="#0000ff" stroke-width="2.3"/>
<rect x="932.15" y="64.4" width="67.90000000000005" height="169.25" fill="none" stroke="#0000ff" stroke-width="2.3"/>
<clipPath id="cpSmall"><rect x="1048.2" y="60.6" width="251.20000000000005" height="150.70000000000002"/></clipPath>
<line x1="1048.2" y1="204.30" x2="1299.4" y2="204.30" stroke="#555" stroke-width="1.1"/>
<g clip-path="url(#cpSmall)"><line x1="1059.26" y1="112.16" x2="1059.26" y2="134.76" stroke="#1f77b4" stroke-width="1.5"/><circle cx="1059.26" cy="123.46" r="1.7" fill="#1f77b4"/><line x1="1063.92" y1="118.63" x2="1063.92" y2="141.23" stroke="#1f77b4" stroke-width="1.5"/><circle cx="1063.92" cy="129.93" r="1.7" fill="#1f77b4"/><line x1="1068.58" y1="109.17" x2="1068.58" y2="131.77" stroke="#1f77b4" stroke-width="1.5"/><circle cx="1068.58" cy="120.47" r="1.7" fill="#1f77b4"/><line x1="1073.24" y1="105.68" x2="1073.24" y2="128.28" stroke="#1f77b4" stroke-width="1.5"/><circle cx="1073.24" cy="116.98" r="1.7" fill="#1f77b4"/><line x1="1077.90" y1="113.15" x2="1077.90" y2="135.75" stroke="#1f77b4" stroke-width="1.5"/><circle cx="1077.90" cy="124.45" r="1.7" fill="#1f77b4"/><line x1="1082.56" y1="120.13" x2="1082.56" y2="142.73" stroke="#1f77b4" stroke-width="1.5"/><circle cx="1082.56" cy="131.43" r="1.7" fill="#1f77b4"/><line x1="1087.22" y1="124.77" x2="1087.22" y2="147.37" stroke="#1f77b4" stroke-width="1.5"/><circle cx="1087.22" cy="136.07" r="1.7" fill="#1f77b4"/><line x1="1091.88" y1="128.26" x2="1091.88" y2="150.86" stroke="#1f77b4" stroke-width="1.5"/><circle cx="1091.88" cy="139.56" r="1.7" fill="#1f77b4"/><line x1="1096.54" y1="141.54" x2="1096.54" y2="164.14" stroke="#1f77b4" stroke-width="1.5"/><circle cx="1096.54" cy="152.84" r="1.7" fill="#1f77b4"/><line x1="1101.20" y1="107.18" x2="1101.20" y2="129.78" stroke="#1f77b4" stroke-width="1.5"/><circle cx="1101.20" cy="118.48" r="1.7" fill="#1f77b4"/><line x1="1105.86" y1="104.19" x2="1105.86" y2="126.79" stroke="#1f77b4" stroke-width="1.5"/><circle cx="1105.86" cy="115.49" r="1.7" fill="#1f77b4"/><line x1="1110.52" y1="127.76" x2="1110.52" y2="150.36" stroke="#1f77b4" stroke-width="1.5"/><circle cx="1110.52" cy="139.06" r="1.7" fill="#1f77b4"/><line x1="1115.18" y1="125.77" x2="1115.18" y2="148.37" stroke="#1f77b4" stroke-width="1.5"/><circle cx="1115.18" cy="137.07" r="1.7" fill="#1f77b4"/><line x1="1119.84" y1="114.98" x2="1119.84" y2="137.58" stroke="#1f77b4" stroke-width="1.5"/><circle cx="1119.84" cy="126.28" r="1.7" fill="#1f77b4"/><line x1="1124.50" y1="139.05" x2="1124.50" y2="161.65" stroke="#1f77b4" stroke-width="1.5"/><circle cx="1124.50" cy="150.35" r="1.7" fill="#1f77b4"/><line x1="1129.16" y1="133.07" x2="1129.16" y2="155.67" stroke="#1f77b4" stroke-width="1.5"/><circle cx="1129.16" cy="144.37" r="1.7" fill="#1f77b4"/><line x1="1133.82" y1="125.94" x2="1133.82" y2="148.54" stroke="#1f77b4" stroke-width="1.5"/><circle cx="1133.82" cy="137.24" r="1.7" fill="#1f77b4"/><line x1="1138.48" y1="130.58" x2="1138.48" y2="153.18" stroke="#1f77b4" stroke-width="1.5"/><circle cx="1138.48" cy="141.88" r="1.7" fill="#1f77b4"/><line x1="1143.14" y1="130.58" x2="1143.14" y2="153.18" stroke="#1f77b4" stroke-width="1.5"/><circle cx="1143.14" cy="141.88" r="1.7" fill="#1f77b4"/><line x1="1147.80" y1="118.30" x2="1147.80" y2="140.90" stroke="#1f77b4" stroke-width="1.5"/><circle cx="1147.80" cy="129.60" r="1.7" fill="#1f77b4"/><line x1="1152.46" y1="125.94" x2="1152.46" y2="148.54" stroke="#1f77b4" stroke-width="1.5"/><circle cx="1152.46" cy="137.24" r="1.7" fill="#1f77b4"/><line x1="1157.12" y1="124.61" x2="1157.12" y2="147.21" stroke="#1f77b4" stroke-width="1.5"/><circle cx="1157.12" cy="135.91" r="1.7" fill="#1f77b4"/><line x1="1161.78" y1="126.60" x2="1161.78" y2="149.20" stroke="#1f77b4" stroke-width="1.5"/><circle cx="1161.78" cy="137.90" r="1.7" fill="#1f77b4"/><line x1="1166.44" y1="107.68" x2="1166.44" y2="130.28" stroke="#1f77b4" stroke-width="1.5"/><circle cx="1166.44" cy="118.98" r="1.7" fill="#1f77b4"/><line x1="1171.10" y1="85.27" x2="1171.10" y2="107.87" stroke="#1f77b4" stroke-width="1.5"/><circle cx="1171.10" cy="96.57" r="1.7" fill="#1f77b4"/><line x1="1175.76" y1="67.34" x2="1175.76" y2="89.94" stroke="#1f77b4" stroke-width="1.5"/><circle cx="1175.76" cy="78.64" r="1.7" fill="#1f77b4"/><line x1="1180.42" y1="79.46" x2="1180.42" y2="102.06" stroke="#1f77b4" stroke-width="1.5"/><circle cx="1180.42" cy="90.76" r="1.7" fill="#1f77b4"/><line x1="1185.08" y1="95.89" x2="1185.08" y2="118.49" stroke="#1f77b4" stroke-width="1.5"/><circle cx="1185.08" cy="107.19" r="1.7" fill="#1f77b4"/><line x1="1189.74" y1="97.38" x2="1189.74" y2="119.98" stroke="#1f77b4" stroke-width="1.5"/><circle cx="1189.74" cy="108.68" r="1.7" fill="#1f77b4"/><line x1="1194.40" y1="117.30" x2="1194.40" y2="139.90" stroke="#1f77b4" stroke-width="1.5"/><circle cx="1194.40" cy="128.60" r="1.7" fill="#1f77b4"/><line x1="1199.06" y1="126.93" x2="1199.06" y2="149.53" stroke="#1f77b4" stroke-width="1.5"/><circle cx="1199.06" cy="138.23" r="1.7" fill="#1f77b4"/><line x1="1203.72" y1="149.34" x2="1203.72" y2="171.94" stroke="#1f77b4" stroke-width="1.5"/><circle cx="1203.72" cy="160.64" r="1.7" fill="#1f77b4"/><line x1="1208.38" y1="139.22" x2="1208.38" y2="161.82" stroke="#1f77b4" stroke-width="1.5"/><circle cx="1208.38" cy="150.52" r="1.7" fill="#1f77b4"/><line x1="1213.04" y1="123.78" x2="1213.04" y2="146.38" stroke="#1f77b4" stroke-width="1.5"/><circle cx="1213.04" cy="135.08" r="1.7" fill="#1f77b4"/><line x1="1217.70" y1="114.81" x2="1217.70" y2="137.41" stroke="#1f77b4" stroke-width="1.5"/><circle cx="1217.70" cy="126.11" r="1.7" fill="#1f77b4"/><line x1="1222.36" y1="121.79" x2="1222.36" y2="144.39" stroke="#1f77b4" stroke-width="1.5"/><circle cx="1222.36" cy="133.09" r="1.7" fill="#1f77b4"/><line x1="1227.02" y1="140.05" x2="1227.02" y2="162.65" stroke="#1f77b4" stroke-width="1.5"/><circle cx="1227.02" cy="151.35" r="1.7" fill="#1f77b4"/><line x1="1231.68" y1="141.87" x2="1231.68" y2="164.47" stroke="#1f77b4" stroke-width="1.5"/><circle cx="1231.68" cy="153.17" r="1.7" fill="#1f77b4"/><line x1="1236.34" y1="137.22" x2="1236.34" y2="159.82" stroke="#1f77b4" stroke-width="1.5"/><circle cx="1236.34" cy="148.52" r="1.7" fill="#1f77b4"/><line x1="1241.00" y1="129.42" x2="1241.00" y2="152.02" stroke="#1f77b4" stroke-width="1.5"/><circle cx="1241.00" cy="140.72" r="1.7" fill="#1f77b4"/><line x1="1245.66" y1="146.35" x2="1245.66" y2="168.95" stroke="#1f77b4" stroke-width="1.5"/><circle cx="1245.66" cy="157.65" r="1.7" fill="#1f77b4"/><line x1="1250.32" y1="126.93" x2="1250.32" y2="149.53" stroke="#1f77b4" stroke-width="1.5"/><circle cx="1250.32" cy="138.23" r="1.7" fill="#1f77b4"/><line x1="1254.98" y1="113.32" x2="1254.98" y2="135.92" stroke="#1f77b4" stroke-width="1.5"/><circle cx="1254.98" cy="124.62" r="1.7" fill="#1f77b4"/><line x1="1259.64" y1="118.30" x2="1259.64" y2="140.90" stroke="#1f77b4" stroke-width="1.5"/><circle cx="1259.64" cy="129.60" r="1.7" fill="#1f77b4"/><line x1="1264.30" y1="114.81" x2="1264.30" y2="137.41" stroke="#1f77b4" stroke-width="1.5"/><circle cx="1264.30" cy="126.11" r="1.7" fill="#1f77b4"/><line x1="1268.96" y1="116.64" x2="1268.96" y2="139.24" stroke="#1f77b4" stroke-width="1.5"/><circle cx="1268.96" cy="127.94" r="1.7" fill="#1f77b4"/><line x1="1273.62" y1="109.00" x2="1273.62" y2="131.60" stroke="#1f77b4" stroke-width="1.5"/><circle cx="1273.62" cy="120.30" r="1.7" fill="#1f77b4"/><line x1="1278.28" y1="106.18" x2="1278.28" y2="128.78" stroke="#1f77b4" stroke-width="1.5"/><circle cx="1278.28" cy="117.48" r="1.7" fill="#1f77b4"/><line x1="1282.94" y1="113.32" x2="1282.94" y2="135.92" stroke="#1f77b4" stroke-width="1.5"/><circle cx="1282.94" cy="124.62" r="1.7" fill="#1f77b4"/><line x1="1287.60" y1="114.98" x2="1287.60" y2="137.58" stroke="#1f77b4" stroke-width="1.5"/><circle cx="1287.60" cy="126.28" r="1.7" fill="#1f77b4"/></g>
<polyline points="1070.91,137.90 1072.08,137.90 1073.24,137.90 1074.41,137.90 1075.57,137.90 1076.74,137.90 1077.90,137.90 1079.07,137.90 1080.23,137.90 1081.39,137.90 1082.56,137.90 1083.73,137.90 1084.89,137.90 1086.06,137.90 1087.22,137.90 1088.38,137.90 1089.55,137.90 1090.72,137.90 1091.88,137.90 1093.05,137.90 1094.21,137.90 1095.38,137.90 1096.54,137.90 1097.71,137.90 1098.87,137.90 1100.04,137.90 1101.20,137.90 1102.37,137.90 1103.53,137.90 1104.70,137.90 1105.86,137.90 1107.03,137.90 1108.19,137.90 1109.36,137.90 1110.52,137.90 1111.69,137.90 1112.85,137.90 1114.02,137.90 1115.18,137.90 1116.35,137.90 1117.51,137.90 1118.68,137.90 1119.84,137.90 1121.01,137.90 1122.17,137.90 1123.34,137.90 1124.50,137.90 1125.67,137.90 1126.83,137.90 1128.00,137.90 1129.16,137.90 1130.33,137.90 1131.49,137.90 1132.66,137.90 1133.82,137.90 1134.99,137.90 1136.15,137.90 1137.32,137.90 1138.48,137.90 1139.64,137.90 1140.81,137.90 1141.98,137.90 1143.14,137.90 1144.31,137.90 1145.47,137.89 1146.63,137.89 1147.80,137.87 1148.97,137.85 1150.13,137.82 1151.30,137.77 1152.46,137.68 1153.62,137.53 1154.79,137.32 1155.96,137.00 1157.12,136.52 1158.29,135.86 1159.45,134.93 1160.62,133.69 1161.78,132.06 1162.95,129.99 1164.11,127.42 1165.28,124.34 1166.44,120.75 1167.61,116.69 1168.77,112.28 1169.94,107.65 1171.10,102.99 1172.27,98.52 1173.43,94.50 1174.60,91.15 1175.76,88.68 1176.93,87.26 1178.09,86.98 1179.26,87.86 1180.42,89.84 1181.59,92.79 1182.75,96.52 1183.92,100.80 1185.08,105.40 1186.25,110.07 1187.41,114.61 1188.58,118.85 1189.74,122.68 1190.91,126.01 1192.07,128.82 1193.24,131.13 1194.40,132.96 1195.57,134.38 1196.73,135.45 1197.89,136.23 1199.06,136.79 1200.23,137.18 1201.39,137.44 1202.56,137.62 1203.72,137.73 1204.88,137.80 1206.05,137.84 1207.22,137.87 1208.38,137.88 1209.55,137.89 1210.71,137.89 1211.88,137.90 1213.04,137.90 1214.21,137.90 1215.37,137.90 1216.54,137.90 1217.70,137.90 1218.87,137.90 1220.03,137.90 1221.20,137.90 1222.36,137.90 1223.53,137.90 1224.69,137.90 1225.86,137.90 1227.02,137.90 1228.19,137.90 1229.35,137.90 1230.52,137.90 1231.68,137.90 1232.85,137.90 1234.01,137.90 1235.18,137.90 1236.34,137.90 1237.51,137.90 1238.67,137.90 1239.84,137.90 1241.00,137.90 1242.17,137.90 1243.33,137.90 1244.50,137.90 1245.66,137.90 1246.83,137.90 1247.99,137.90 1249.16,137.90 1250.32,137.90 1251.49,137.90 1252.65,137.90 1253.82,137.90 1254.98,137.90 1256.14,137.90 1257.31,137.90 1258.48,137.90 1259.64,137.90 1260.81,137.90 1261.97,137.90 1263.14,137.90 1264.30,137.90 1265.47,137.90 1266.63,137.90 1267.80,137.90 1268.96,137.90 1270.12,137.90 1271.29,137.90 1272.46,137.90 1273.62,137.90 1274.79,137.90 1275.95,137.90 1277.12,137.90 1278.28,137.90 1279.45,137.90 1280.61,137.90 1281.78,137.90 1282.94,137.90 1284.11,137.90 1285.27,137.90 1286.44,137.90 1287.60,137.90" fill="none" stroke="#333" stroke-width="1.6"/>
<rect x="1048.2" y="60.6" width="251.20000000000005" height="150.70000000000002" fill="none" stroke="#444" stroke-width="1"/>
<line x1="1045.0" y1="204.30" x2="1048.2" y2="204.30" stroke="#444" stroke-width="1"/>
<text x="1035.90" y="207.80" font-family="'Liberation Sans', sans-serif" font-size="10.2" fill="#222" textLength="5.60" lengthAdjust="spacingAndGlyphs" stroke="#222" stroke-width="0.15" >0</text>
<line x1="1045.0" y1="171.10" x2="1048.2" y2="171.10" stroke="#444" stroke-width="1"/>
<text x="1035.90" y="174.60" font-family="'Liberation Sans', sans-serif" font-size="10.2" fill="#222" textLength="5.60" lengthAdjust="spacingAndGlyphs" stroke="#222" stroke-width="0.15" >2</text>
<line x1="1045.0" y1="137.90" x2="1048.2" y2="137.90" stroke="#444" stroke-width="1"/>
<text x="1035.90" y="141.40" font-family="'Liberation Sans', sans-serif" font-size="10.2" fill="#222" textLength="5.60" lengthAdjust="spacingAndGlyphs" stroke="#222" stroke-width="0.15" >4</text>
<line x1="1045.0" y1="104.70" x2="1048.2" y2="104.70" stroke="#444" stroke-width="1"/>
<text x="1035.90" y="108.20" font-family="'Liberation Sans', sans-serif" font-size="10.2" fill="#222" textLength="5.60" lengthAdjust="spacingAndGlyphs" stroke="#222" stroke-width="0.15" >6</text>
<line x1="1045.0" y1="72.00" x2="1048.2" y2="72.00" stroke="#444" stroke-width="1"/>
<text x="1035.90" y="75.50" font-family="'Liberation Sans', sans-serif" font-size="10.2" fill="#222" textLength="5.60" lengthAdjust="spacingAndGlyphs" stroke="#222" stroke-width="0.15" >8</text>
<line x1="1077.90" y1="211.3" x2="1077.90" y2="214.5" stroke="#444" stroke-width="1"/>
<text x="1067.20" y="223.60" font-family="'Liberation Sans', sans-serif" font-size="9.9" fill="#222" textLength="21.40" lengthAdjust="spacingAndGlyphs" stroke="#222" stroke-width="0.15" >4720</text>
<line x1="1124.50" y1="211.3" x2="1124.50" y2="214.5" stroke="#444" stroke-width="1"/>
<text x="1113.80" y="223.60" font-family="'Liberation Sans', sans-serif" font-size="9.9" fill="#222" textLength="21.40" lengthAdjust="spacingAndGlyphs" stroke="#222" stroke-width="0.15" >4740</text>
<line x1="1171.10" y1="211.3" x2="1171.10" y2="214.5" stroke="#444" stroke-width="1"/>
<text x="1160.40" y="223.60" font-family="'Liberation Sans', sans-serif" font-size="9.9" fill="#222" textLength="21.40" lengthAdjust="spacingAndGlyphs" stroke="#222" stroke-width="0.15" >4760</text>
<line x1="1217.70" y1="211.3" x2="1217.70" y2="214.5" stroke="#444" stroke-width="1"/>
<text x="1207.00" y="223.60" font-family="'Liberation Sans', sans-serif" font-size="9.9" fill="#222" textLength="21.40" lengthAdjust="spacingAndGlyphs" stroke="#222" stroke-width="0.15" >4780</text>
<line x1="1264.30" y1="211.3" x2="1264.30" y2="214.5" stroke="#444" stroke-width="1"/>
<text x="1253.60" y="223.60" font-family="'Liberation Sans', sans-serif" font-size="9.9" fill="#222" textLength="21.40" lengthAdjust="spacingAndGlyphs" stroke="#222" stroke-width="0.15" >4800</text>
<text x="1049.20" y="71.00" font-family="'Liberation Sans', sans-serif" font-size="9.2" fill="#222" textLength="7.40" lengthAdjust="spacingAndGlyphs" stroke="#222" stroke-width="0.15" >e</text>
<text x="1055.90" y="66.50" font-family="'Liberation Sans', sans-serif" font-size="6.2" fill="#222" textLength="11.20" lengthAdjust="spacingAndGlyphs" stroke="#222" stroke-width="0.09" >−17</text>
<text x="1066.40" y="71.00" font-family="'Liberation Sans', sans-serif" font-size="9.2" fill="#222" textLength="18.70" lengthAdjust="spacingAndGlyphs" stroke="#222" stroke-width="0.15" >x2Å</text>
<clipPath id="cpBig"><rect x="101.5" y="348.4" width="1198.2" height="84.0"/></clipPath>
<g clip-path="url(#cpBig)">
<rect x="825.6" y="348.4" width="54.89999999999998" height="84.0" fill="#c4c100"/>
<polygon points="100.4,376.4 101.6,378.2 102.8,378.5 104.0,380.3 105.1,378.3 106.3,378.7 107.5,379.0 108.7,378.4 109.9,378.5 111.0,379.8 112.2,379.8 113.4,379.6 114.6,378.8 115.8,379.0 116.9,380.6 118.1,380.6 119.3,379.3 120.5,378.8 121.7,380.1 122.9,380.8 124.0,379.5 125.2,380.7 126.4,380.1 127.6,379.6 128.8,380.4 129.9,381.0 131.1,380.6 132.3,381.7 133.5,381.5 134.7,382.0 135.8,381.8 137.0,382.1 138.2,382.2 139.4,382.6 140.6,382.5 141.7,382.8 142.9,382.9 144.1,382.4 145.3,384.7 146.5,383.0 147.6,384.3 148.8,385.3 150.0,384.8 151.2,384.9 152.4,384.5 153.6,386.2 154.7,385.6 155.9,385.9 157.1,387.4 158.3,387.3 159.5,386.4 160.6,386.6 161.8,386.7 163.0,387.3 164.2,387.6 165.4,388.1 166.5,387.7 167.7,389.2 168.9,389.0 170.1,389.0 171.3,390.4 172.4,389.0 173.6,390.4 174.8,390.3 176.0,389.3 177.2,391.2 178.3,391.3 179.5,390.5 180.7,392.2 181.9,392.1 183.1,391.8 184.3,392.1 185.4,392.3 186.6,392.7 187.8,392.5 189.0,392.9 190.2,393.4 191.3,394.3 192.5,394.6 193.7,395.4 194.9,394.4 196.1,395.9 197.2,394.8 198.4,394.5 199.6,396.1 200.8,396.1 202.0,396.2 203.1,395.8 204.3,396.7 205.5,396.6 206.7,396.9 207.9,397.0 209.0,396.5 210.2,397.7 211.4,397.4 212.6,397.5 213.8,397.4 215.0,398.5 216.1,397.7 217.3,398.2 218.5,398.2 219.7,398.7 220.9,399.6 222.0,399.4 223.2,399.0 224.4,399.5 225.6,399.7 226.8,399.1 227.9,399.2 229.1,400.2 230.3,399.6 231.5,401.2 232.7,401.4 233.8,400.5 235.0,401.1 236.2,400.9 237.4,401.1 238.6,401.5 239.7,401.4 240.9,401.8 242.1,402.5 243.3,402.1 244.5,402.2 245.7,401.9 246.8,403.0 248.0,402.8 249.2,403.1 250.4,403.1 251.6,402.6 252.7,403.1 253.9,403.4 255.1,403.3 256.3,403.2 257.5,403.8 258.6,403.7 259.8,403.2 261.0,403.5 262.2,403.8 263.4,404.0 264.5,404.0 265.7,404.5 266.9,403.9 268.1,404.1 269.3,404.3 270.5,404.7 271.6,404.7 272.8,404.4 274.0,404.5 275.2,404.8 276.4,404.6 277.5,404.6 278.7,405.1 279.9,405.1 281.1,405.3 282.3,405.5 283.4,405.0 284.6,405.2 285.8,405.3 287.0,405.8 288.2,405.8 289.3,405.6 290.5,405.8 291.7,405.7 292.9,406.0 294.1,405.8 295.2,405.6 296.4,405.7 297.6,405.8 298.8,406.2 300.0,406.1 301.2,406.5 302.3,406.3 303.5,406.7 304.7,406.8 305.9,406.9 307.1,406.6 308.2,406.8 309.4,406.9 310.6,407.3 311.8,407.1 313.0,407.5 314.1,406.9 315.3,407.3 316.5,407.3 317.7,407.4 318.9,407.7 320.0,407.7 321.2,407.4 322.4,407.1 323.6,407.8 324.8,407.7 325.9,407.6 327.1,408.0 328.3,408.0 329.5,407.7 330.7,407.7 331.9,407.8 333.0,407.4 334.2,407.8 335.4,407.7 336.6,407.5 337.8,407.5 338.9,408.2 340.1,408.0 341.3,407.7 342.5,408.3 343.7,408.2 344.8,408.3 346.0,408.3 347.2,408.3 348.4,408.1 349.6,407.9 350.7,407.8 351.9,408.2 353.1,408.6 354.3,408.3 355.5,408.4 356.6,408.2 357.8,408.4 359.0,408.7 360.2,408.3 361.4,408.9 362.6,408.6 363.7,408.4 364.9,408.4 366.1,408.2 367.3,409.1 368.5,408.5 369.6,408.5 370.8,408.7 372.0,408.6 373.2,408.9 374.4,408.6 375.5,408.7 376.7,409.0 377.9,409.0 379.1,408.9 380.3,409.0 381.4,408.7 382.6,408.9 383.8,408.7 385.0,408.8 386.2,409.0 387.3,409.1 388.5,409.3 389.7,409.3 390.9,409.3 392.1,409.1 393.3,409.4 394.4,409.2 395.6,409.2 396.8,409.4 398.0,409.4 399.2,409.1 400.3,409.1 401.5,409.6 402.7,409.5 403.9,409.5 405.1,409.5 406.2,409.2 407.4,409.4 408.6,409.3 409.8,409.2 411.0,409.6 412.1,409.5 413.3,409.5 414.5,409.3 415.7,409.6 416.9,409.4 418.1,409.3 419.2,409.3 420.4,409.5 421.6,409.7 422.8,409.9 424.0,409.4 425.1,409.5 426.3,409.8 427.5,409.7 428.7,409.7 429.9,409.9 431.0,409.6 432.2,409.8 433.4,409.7 434.6,409.5 435.8,409.7 436.9,409.6 438.1,409.6 439.3,409.7 440.5,409.7 441.7,409.4 442.8,409.8 444.0,409.4 445.2,409.9 446.4,409.6 447.6,409.7 448.8,409.9 449.9,410.2 451.1,409.5 452.3,410.0 453.5,410.0 454.7,409.8 455.8,409.8 457.0,409.8 458.2,409.9 459.4,410.1 460.6,409.7 461.7,410.0 462.9,409.8 464.1,409.8 465.3,409.7 466.5,409.9 467.6,409.9 468.8,409.9 470.0,410.2 471.2,410.0 472.4,410.1 473.5,410.1 474.7,409.9 475.9,410.0 477.1,409.7 478.3,409.7 479.5,410.3 480.6,410.0 481.8,410.2 483.0,409.9 484.2,410.0 485.4,409.8 486.5,410.0 487.7,409.9 488.9,410.1 490.1,410.5 491.3,410.3 492.4,410.2 493.6,410.1 494.8,410.2 496.0,409.8 497.2,410.1 498.3,409.9 499.5,410.2 500.7,409.8 501.9,410.3 503.1,410.0 504.2,410.4 505.4,410.1 506.6,409.9 507.8,410.4 509.0,410.3 510.2,410.1 511.3,410.2 512.5,410.4 513.7,410.0 514.9,410.2 516.1,410.0 517.2,410.2 518.4,410.4 519.6,410.3 520.8,410.0 522.0,410.5 523.1,410.3 524.3,410.2 525.5,410.1 526.7,410.1 527.9,410.5 529.0,409.9 530.2,410.3 531.4,410.3 532.6,410.3 533.8,410.4 534.9,410.5 536.1,410.4 537.3,410.1 538.5,410.6 539.7,410.8 540.9,410.3 542.0,410.3 543.2,410.3 544.4,410.1 545.6,410.5 546.8,410.4 547.9,410.3 549.1,410.2 550.3,410.3 551.5,410.6 552.7,410.7 553.8,410.5 555.0,410.7 556.2,410.3 557.4,410.6 558.6,410.6 559.7,410.7 560.9,410.3 562.1,410.5 563.3,410.6 564.5,410.4 565.7,410.6 566.8,410.5 568.0,410.3 569.2,410.6 570.4,410.5 571.6,410.5 572.7,410.4 573.9,410.5 575.1,410.6 576.3,410.7 577.5,410.6 578.6,410.8 579.8,410.5 581.0,410.6 582.2,410.6 583.4,410.8 584.5,410.8 585.7,410.8 586.9,410.5 588.1,410.7 589.3,410.7 590.4,411.0 591.6,410.7 592.8,411.3 594.0,410.5 595.2,410.8 596.4,410.7 597.5,411.0 598.7,410.9 599.9,410.7 601.1,410.8 602.3,410.7 603.4,410.6 604.6,410.7 605.8,411.1 607.0,411.0 608.2,411.0 609.3,411.0 610.5,411.2 611.7,411.2 612.9,411.0 614.1,411.0 615.2,410.8 616.4,410.9 617.6,410.7 618.8,411.2 620.0,411.1 621.1,410.9 622.3,411.0 623.5,411.1 624.7,410.8 625.9,410.8 627.1,410.8 628.2,411.0 629.4,411.0 630.6,410.9 631.8,411.0 633.0,410.8 634.1,411.1 635.3,411.0 636.5,411.4 637.7,410.9 638.9,410.8 640.0,411.1 641.2,410.9 642.4,411.3 643.6,411.1 644.8,411.3 645.9,411.0 647.1,411.0 648.3,411.3 649.5,411.2 650.7,411.2 651.8,410.8 653.0,411.1 654.2,411.1 655.4,411.1 656.6,411.1 657.8,411.2 658.9,411.4 660.1,411.3 661.3,410.9 662.5,411.2 663.7,411.3 664.8,411.4 666.0,411.2 667.2,411.2 668.4,411.3 669.6,411.1 670.7,411.3 671.9,411.3 673.1,411.1 674.3,411.2 675.5,411.1 676.6,411.3 677.8,411.4 679.0,411.2 680.2,411.3 681.4,411.1 682.5,411.3 683.7,411.3 684.9,411.3 686.1,411.3 687.3,411.5 688.5,411.4 689.6,411.4 690.8,411.2 692.0,411.5 693.2,411.2 694.4,411.6 695.5,411.4 696.7,411.3 697.9,411.5 699.1,411.3 700.3,411.7 701.4,411.4 702.6,411.4 703.8,411.5 705.0,411.7 706.2,411.4 707.3,411.8 708.5,411.3 709.7,411.4 710.9,411.3 712.1,411.5 713.3,411.7 714.4,411.6 715.6,411.6 716.8,411.4 718.0,411.6 719.2,411.5 720.3,411.5 721.5,411.3 722.7,411.8 723.9,411.6 725.1,411.4 726.2,411.4 727.4,411.6 728.6,411.6 729.8,411.6 731.0,411.5 732.1,411.7 733.3,411.7 734.5,411.7 735.7,411.6 736.9,411.4 738.0,411.7 739.2,411.5 740.4,411.3 741.6,411.6 742.8,411.3 744.0,411.6 745.1,411.4 746.3,411.6 747.5,411.8 748.7,411.6 749.9,411.4 751.0,411.7 752.2,411.6 753.4,411.8 754.6,411.8 755.8,411.6 756.9,411.7 758.1,411.6 759.3,411.5 760.5,411.8 761.7,411.8 762.8,411.7 764.0,411.4 765.2,411.7 766.4,411.8 767.6,411.6 768.7,411.4 769.9,411.8 771.1,411.8 772.3,411.7 773.5,411.6 774.7,411.4 775.8,411.9 777.0,412.0 778.2,411.7 779.4,411.7 780.6,412.1 781.7,411.8 782.9,411.6 784.1,411.8 785.3,411.7 786.5,411.7 787.6,411.7 788.8,411.7 790.0,411.7 791.2,411.6 792.4,411.9 793.5,411.8 794.7,411.6 795.9,411.9 797.1,411.9 798.3,411.9 799.4,412.0 800.6,411.5 801.8,411.8 803.0,411.6 804.2,411.7 805.4,411.8 806.5,411.9 807.7,411.8 808.9,411.9 810.1,411.7 811.3,412.0 812.4,411.8 813.6,411.8 814.8,411.9 816.0,411.9 817.2,411.8 818.3,411.8 819.5,411.9 820.7,411.9 821.9,412.0 823.1,411.8 824.2,411.9 825.4,412.1 826.6,411.9 827.8,411.8 829.0,411.8 830.1,412.0 831.3,411.8 832.5,411.8 833.7,411.8 834.9,411.7 836.1,411.9 837.2,411.8 838.4,411.9 839.6,411.8 840.8,411.7 842.0,411.8 843.1,411.8 844.3,412.0 845.5,411.8 846.7,412.1 847.9,411.6 849.0,411.7 850.2,412.1 851.4,412.3 852.6,411.7 853.8,412.0 854.9,411.8 856.1,412.1 857.3,411.9 858.5,412.0 859.7,411.8 860.9,411.9 862.0,411.7 863.2,412.0 864.4,411.7 865.6,411.9 866.8,411.8 867.9,412.1 869.1,412.1 870.3,411.8 871.5,412.1 872.7,411.9 873.8,411.9 875.0,412.0 876.2,411.9 877.4,412.1 878.6,412.1 879.7,411.8 880.9,412.0 882.1,411.8 883.3,411.8 884.5,411.7 885.6,411.8 886.8,412.2 888.0,412.0 889.2,412.0 890.4,411.7 891.6,411.9 892.7,412.0 893.9,411.8 895.1,411.9 896.3,411.8 897.5,411.9 898.6,411.7 899.8,411.9 901.0,411.8 902.2,411.9 903.4,411.8 904.5,411.9 905.7,411.8 906.9,411.9 908.1,411.9 909.3,412.0 910.4,411.9 911.6,411.8 912.8,412.2 914.0,411.7 915.2,412.2 916.3,411.9 917.5,411.9 918.7,411.8 919.9,411.9 921.1,411.9 922.3,411.9 923.4,411.8 924.6,411.6 925.8,411.8 927.0,412.2 928.2,412.0 929.3,411.8 930.5,411.4 931.7,412.0 932.9,412.0 934.1,411.8 935.2,411.9 936.4,412.1 937.6,411.8 938.8,412.1 940.0,411.9 941.1,411.7 942.3,412.1 943.5,411.9 944.7,411.7 945.9,411.9 947.0,412.0 948.2,412.0 949.4,411.8 950.6,412.1 951.8,412.0 953.0,412.1 954.1,412.1 955.3,411.7 956.5,411.9 957.7,412.0 958.9,411.8 960.0,412.0 961.2,412.1 962.4,411.7 963.6,411.8 964.8,412.0 965.9,411.8 967.1,411.7 968.3,411.8 969.5,411.8 970.7,412.1 971.8,411.9 973.0,412.2 974.2,411.7 975.4,411.9 976.6,411.7 977.7,412.0 978.9,411.8 980.1,412.1 981.3,412.0 982.5,411.8 983.7,411.8 984.8,411.9 986.0,412.1 987.2,411.7 988.4,411.8 989.6,411.7 990.7,411.7 991.9,412.0 993.1,411.8 994.3,411.5 995.5,412.0 996.6,411.8 997.8,412.0 999.0,411.7 1000.2,411.9 1001.4,412.1 1002.5,412.0 1003.7,412.1 1004.9,412.2 1006.1,412.3 1007.3,412.0 1008.5,412.1 1009.6,411.9 1010.8,412.0 1012.0,411.9 1013.2,411.7 1014.4,412.1 1015.5,412.1 1016.7,411.8 1017.9,411.6 1019.1,412.1 1020.3,412.2 1021.4,412.0 1022.6,412.0 1023.8,411.8 1025.0,412.1 1026.2,412.0 1027.3,412.0 1028.5,412.2 1029.7,412.2 1030.9,411.9 1032.1,411.9 1033.2,412.1 1034.4,411.7 1035.6,411.8 1036.8,411.9 1038.0,411.9 1039.2,411.9 1040.3,411.9 1041.5,411.8 1042.7,412.0 1043.9,412.3 1045.1,412.0 1046.2,412.1 1047.4,412.1 1048.6,411.9 1049.8,412.2 1051.0,411.9 1052.1,412.1 1053.3,412.2 1054.5,412.1 1055.7,411.7 1056.9,411.8 1058.0,412.0 1059.2,411.8 1060.4,411.7 1061.6,412.1 1062.8,412.0 1063.9,411.9 1065.1,411.9 1066.3,412.1 1067.5,411.8 1068.7,411.9 1069.9,411.9 1071.0,411.7 1072.2,411.9 1073.4,411.6 1074.6,412.0 1075.8,412.0 1076.9,412.0 1078.1,411.9 1079.3,411.9 1080.5,412.0 1081.7,412.2 1082.8,412.2 1084.0,412.1 1085.2,411.9 1086.4,411.8 1087.6,412.4 1088.7,412.1 1089.9,412.1 1091.1,412.1 1092.3,412.0 1093.5,412.2 1094.6,412.2 1095.8,411.9 1097.0,411.9 1098.2,412.1 1099.4,412.1 1100.6,412.1 1101.7,412.2 1102.9,412.0 1104.1,412.1 1105.3,412.2 1106.5,412.1 1107.6,411.8 1108.8,412.0 1110.0,412.0 1111.2,412.1 1112.4,411.9 1113.5,412.0 1114.7,412.3 1115.9,412.1 1117.1,412.2 1118.3,412.0 1119.4,412.1 1120.6,412.4 1121.8,411.9 1123.0,412.0 1124.2,412.3 1125.3,411.9 1126.5,412.1 1127.7,412.0 1128.9,412.1 1130.1,412.1 1131.3,412.2 1132.4,412.3 1133.6,412.2 1134.8,412.1 1136.0,412.1 1137.2,412.0 1138.3,412.1 1139.5,412.4 1140.7,412.0 1141.9,412.2 1143.1,412.3 1144.2,412.2 1145.4,412.3 1146.6,412.1 1147.8,412.3 1149.0,411.9 1150.1,412.2 1151.3,412.2 1152.5,412.2 1153.7,412.4 1154.9,412.3 1156.1,412.2 1157.2,412.2 1158.4,412.4 1159.6,412.1 1160.8,412.0 1162.0,412.2 1163.1,412.2 1164.3,412.1 1165.5,412.3 1166.7,412.2 1167.9,412.0 1169.0,412.1 1170.2,412.3 1171.4,412.4 1172.6,411.8 1173.8,412.1 1174.9,412.4 1176.1,412.1 1177.3,412.1 1178.5,412.1 1179.7,412.4 1180.8,411.9 1182.0,412.1 1183.2,412.2 1184.4,412.1 1185.6,412.2 1186.8,412.2 1187.9,412.1 1189.1,412.4 1190.3,412.0 1191.5,412.1 1192.7,412.1 1193.8,412.1 1195.0,412.0 1196.2,412.0 1197.4,412.1 1198.6,412.2 1199.7,412.1 1200.9,412.3 1202.1,412.3 1203.3,412.1 1204.5,412.1 1205.6,412.0 1206.8,412.5 1208.0,412.1 1209.2,412.1 1210.4,412.2 1211.5,412.0 1212.7,412.3 1213.9,412.2 1215.1,412.3 1216.3,412.2 1217.5,412.3 1218.6,412.2 1219.8,412.1 1221.0,412.2 1222.2,412.2 1223.4,412.3 1224.5,412.0 1225.7,412.3 1226.9,412.2 1228.1,412.1 1229.3,412.2 1230.4,412.1 1231.6,412.2 1232.8,412.0 1234.0,412.2 1235.2,412.2 1236.3,412.4 1237.5,412.3 1238.7,412.2 1239.9,412.3 1241.1,412.5 1242.2,412.4 1243.4,412.4 1244.6,412.4 1245.8,412.6 1247.0,412.2 1248.2,412.5 1249.3,412.4 1250.5,412.5 1251.7,412.5 1252.9,412.2 1254.1,412.6 1255.2,412.6 1256.4,412.7 1257.6,412.6 1258.8,412.4 1260.0,412.7 1261.1,412.6 1262.3,412.8 1263.5,412.7 1264.7,412.6 1265.9,412.7 1267.0,412.7 1268.2,412.6 1269.4,412.6 1270.6,412.7 1271.8,412.8 1272.9,412.9 1274.1,412.5 1275.3,412.9 1276.5,412.7 1277.7,412.8 1278.9,412.9 1280.0,412.7 1281.2,412.9 1282.4,412.7 1283.6,413.0 1284.8,412.8 1285.9,412.7 1287.1,413.0 1288.3,412.6 1289.5,412.8 1290.7,413.3 1291.8,412.9 1293.0,412.9 1294.2,413.2 1295.4,413.2 1296.6,413.2 1297.7,413.5 1298.9,413.4 1300.1,413.3 1301.3,413.6 1301.3,424.1 1300.1,424.4 1298.9,424.3 1297.7,424.2 1296.6,424.5 1295.4,424.5 1294.2,424.5 1293.0,424.8 1291.8,424.8 1290.7,424.4 1289.5,424.9 1288.3,425.1 1287.1,424.7 1285.9,425.0 1284.8,424.9 1283.6,424.7 1282.4,425.0 1281.2,424.8 1280.0,425.0 1278.9,424.8 1277.7,424.9 1276.5,425.0 1275.3,424.8 1274.1,425.2 1272.9,424.8 1271.8,424.9 1270.6,425.0 1269.4,425.1 1268.2,425.1 1267.0,425.0 1265.9,425.0 1264.7,425.1 1263.5,425.0 1262.3,424.9 1261.1,425.1 1260.0,425.0 1258.8,425.3 1257.6,425.1 1256.4,425.0 1255.2,425.1 1254.1,425.1 1252.9,425.5 1251.7,425.2 1250.5,425.2 1249.3,425.3 1248.2,425.2 1247.0,425.5 1245.8,425.1 1244.6,425.3 1243.4,425.3 1242.2,425.3 1241.1,425.2 1239.9,425.4 1238.7,425.5 1237.5,425.4 1236.3,425.3 1235.2,425.5 1234.0,425.5 1232.8,425.7 1231.6,425.5 1230.4,425.6 1229.3,425.5 1228.1,425.6 1226.9,425.5 1225.7,425.4 1224.5,425.7 1223.4,425.4 1222.2,425.5 1221.0,425.5 1219.8,425.6 1218.6,425.5 1217.5,425.4 1216.3,425.5 1215.1,425.4 1213.9,425.5 1212.7,425.4 1211.5,425.7 1210.4,425.5 1209.2,425.6 1208.0,425.6 1206.8,425.2 1205.6,425.7 1204.5,425.6 1203.3,425.6 1202.1,425.4 1200.9,425.4 1199.7,425.6 1198.6,425.5 1197.4,425.6 1196.2,425.7 1195.0,425.7 1193.8,425.6 1192.7,425.6 1191.5,425.6 1190.3,425.7 1189.1,425.3 1187.9,425.6 1186.8,425.5 1185.6,425.5 1184.4,425.6 1183.2,425.5 1182.0,425.6 1180.8,425.8 1179.7,425.3 1178.5,425.6 1177.3,425.6 1176.1,425.6 1174.9,425.3 1173.8,425.6 1172.6,425.9 1171.4,425.3 1170.2,425.4 1169.0,425.6 1167.9,425.7 1166.7,425.5 1165.5,425.4 1164.3,425.6 1163.1,425.5 1162.0,425.5 1160.8,425.7 1159.6,425.6 1158.4,425.3 1157.2,425.5 1156.1,425.5 1154.9,425.4 1153.7,425.3 1152.5,425.5 1151.3,425.5 1150.1,425.5 1149.0,425.8 1147.8,425.4 1146.6,425.6 1145.4,425.4 1144.2,425.5 1143.1,425.4 1141.9,425.5 1140.7,425.7 1139.5,425.3 1138.3,425.6 1137.2,425.7 1136.0,425.6 1134.8,425.6 1133.6,425.5 1132.4,425.4 1131.3,425.5 1130.1,425.6 1128.9,425.6 1127.7,425.7 1126.5,425.6 1125.3,425.8 1124.2,425.4 1123.0,425.7 1121.8,425.8 1120.6,425.3 1119.4,425.6 1118.3,425.7 1117.1,425.5 1115.9,425.6 1114.7,425.4 1113.5,425.7 1112.4,425.8 1111.2,425.6 1110.0,425.7 1108.8,425.7 1107.6,425.9 1106.5,425.6 1105.3,425.5 1104.1,425.6 1102.9,425.7 1101.7,425.5 1100.6,425.6 1099.4,425.6 1098.2,425.6 1097.0,425.8 1095.8,425.8 1094.6,425.5 1093.5,425.5 1092.3,425.7 1091.1,425.6 1089.9,425.6 1088.7,425.6 1087.6,425.3 1086.4,425.9 1085.2,425.8 1084.0,425.6 1082.8,425.5 1081.7,425.5 1080.5,425.7 1079.3,425.8 1078.1,425.8 1076.9,425.7 1075.8,425.7 1074.6,425.7 1073.4,426.1 1072.2,425.8 1071.0,426.0 1069.9,425.8 1068.7,425.8 1067.5,425.9 1066.3,425.6 1065.1,425.8 1063.9,425.8 1062.8,425.7 1061.6,425.6 1060.4,426.0 1059.2,425.9 1058.0,425.7 1056.9,425.9 1055.7,426.0 1054.5,425.6 1053.3,425.5 1052.1,425.6 1051.0,425.8 1049.8,425.5 1048.6,425.8 1047.4,425.6 1046.2,425.6 1045.1,425.7 1043.9,425.4 1042.7,425.7 1041.5,425.9 1040.3,425.8 1039.2,425.8 1038.0,425.8 1036.8,425.8 1035.6,425.9 1034.4,426.0 1033.2,425.6 1032.1,425.8 1030.9,425.8 1029.7,425.5 1028.5,425.5 1027.3,425.7 1026.2,425.7 1025.0,425.6 1023.8,425.9 1022.6,425.7 1021.4,425.7 1020.3,425.5 1019.1,425.6 1017.9,426.1 1016.7,425.9 1015.5,425.6 1014.4,425.6 1013.2,426.0 1012.0,425.8 1010.8,425.7 1009.6,425.8 1008.5,425.6 1007.3,425.7 1006.1,425.4 1004.9,425.5 1003.7,425.6 1002.5,425.7 1001.4,425.6 1000.2,425.8 999.0,426.0 997.8,425.7 996.6,425.9 995.5,425.7 994.3,426.2 993.1,425.9 991.9,425.7 990.7,426.0 989.6,426.0 988.4,425.9 987.2,426.0 986.0,425.6 984.8,425.8 983.7,425.9 982.5,425.9 981.3,425.7 980.1,425.6 978.9,425.9 977.7,425.7 976.6,426.0 975.4,425.8 974.2,426.0 973.0,425.5 971.8,425.8 970.7,425.6 969.5,425.9 968.3,425.9 967.1,426.0 965.9,425.9 964.8,425.7 963.6,425.9 962.4,426.0 961.2,425.6 960.0,425.7 958.9,425.9 957.7,425.7 956.5,425.8 955.3,426.0 954.1,425.6 953.0,425.6 951.8,425.7 950.6,425.6 949.4,425.9 948.2,425.7 947.0,425.7 945.9,425.8 944.7,426.0 943.5,425.8 942.3,425.6 941.1,426.0 940.0,425.8 938.8,425.6 937.6,425.9 936.4,425.6 935.2,425.8 934.1,425.9 932.9,425.7 931.7,425.7 930.5,426.3 929.3,425.9 928.2,425.7 927.0,425.5 925.8,425.9 924.6,426.1 923.4,425.9 922.3,425.8 921.1,425.8 919.9,425.8 918.7,425.9 917.5,425.8 916.3,425.8 915.2,425.5 914.0,426.0 912.8,425.5 911.6,425.9 910.4,425.8 909.3,425.7 908.1,425.8 906.9,425.8 905.7,425.9 904.5,425.8 903.4,425.9 902.2,425.8 901.0,425.9 899.8,425.8 898.6,426.0 897.5,425.8 896.3,425.9 895.1,425.8 893.9,425.9 892.7,425.7 891.6,425.8 890.4,426.0 889.2,425.7 888.0,425.7 886.8,425.5 885.6,425.9 884.5,426.0 883.3,425.9 882.1,425.9 880.9,425.7 879.7,425.9 878.6,425.6 877.4,425.6 876.2,425.8 875.0,425.7 873.8,425.8 872.7,425.8 871.5,425.6 870.3,425.9 869.1,425.6 867.9,425.6 866.8,425.9 865.6,425.8 864.4,426.0 863.2,425.7 862.0,426.0 860.9,425.8 859.7,425.9 858.5,425.7 857.3,425.8 856.1,425.6 854.9,425.9 853.8,425.7 852.6,426.0 851.4,425.4 850.2,425.6 849.0,426.0 847.9,426.1 846.7,425.6 845.5,425.9 844.3,425.7 843.1,425.9 842.0,425.9 840.8,426.0 839.6,425.9 838.4,425.8 837.2,425.9 836.1,425.8 834.9,426.0 833.7,425.9 832.5,425.9 831.3,425.9 830.1,425.7 829.0,425.9 827.8,425.9 826.6,425.8 825.4,425.6 824.2,425.8 823.1,425.9 821.9,425.7 820.7,425.8 819.5,425.8 818.3,425.9 817.2,425.9 816.0,425.8 814.8,425.8 813.6,425.9 812.4,425.9 811.3,425.7 810.1,426.0 808.9,425.8 807.7,425.9 806.5,425.8 805.4,425.9 804.2,426.0 803.0,426.1 801.8,425.9 800.6,426.2 799.4,425.7 798.3,425.8 797.1,425.8 795.9,425.8 794.7,426.1 793.5,425.9 792.4,425.8 791.2,426.1 790.0,426.0 788.8,426.0 787.6,426.0 786.5,426.0 785.3,426.0 784.1,425.9 782.9,426.1 781.7,425.9 780.6,425.6 779.4,426.0 778.2,426.0 777.0,425.7 775.8,425.8 774.7,426.3 773.5,426.1 772.3,426.0 771.1,425.9 769.9,425.9 768.7,426.3 767.6,426.1 766.4,425.9 765.2,426.0 764.0,426.3 762.8,426.0 761.7,425.9 760.5,425.9 759.3,426.2 758.1,426.1 756.9,426.0 755.8,426.1 754.6,425.9 753.4,425.9 752.2,426.1 751.0,426.0 749.9,426.3 748.7,426.1 747.5,425.9 746.3,426.1 745.1,426.3 744.0,426.1 742.8,426.4 741.6,426.1 740.4,426.4 739.2,426.2 738.0,426.0 736.9,426.3 735.7,426.1 734.5,426.0 733.3,426.0 732.1,426.0 731.0,426.2 729.8,426.1 728.6,426.1 727.4,426.1 726.2,426.3 725.1,426.3 723.9,426.1 722.7,425.9 721.5,426.4 720.3,426.2 719.2,426.2 718.0,426.1 716.8,426.3 715.6,426.1 714.4,426.1 713.3,426.0 712.1,426.2 710.9,426.4 709.7,426.3 708.5,426.4 707.3,425.9 706.2,426.3 705.0,426.0 703.8,426.2 702.6,426.3 701.4,426.3 700.3,426.0 699.1,426.4 697.9,426.2 696.7,426.4 695.5,426.3 694.4,426.1 693.2,426.5 692.0,426.2 690.8,426.5 689.6,426.3 688.5,426.3 687.3,426.2 686.1,426.4 684.9,426.4 683.7,426.4 682.5,426.4 681.4,426.6 680.2,426.4 679.0,426.5 677.8,426.3 676.6,426.4 675.5,426.6 674.3,426.5 673.1,426.6 671.9,426.4 670.7,426.4 669.6,426.6 668.4,426.4 667.2,426.5 666.0,426.5 664.8,426.3 663.7,426.4 662.5,426.5 661.3,426.8 660.1,426.4 658.9,426.3 657.8,426.5 656.6,426.6 655.4,426.6 654.2,426.6 653.0,426.6 651.8,426.9 650.7,426.5 649.5,426.5 648.3,426.4 647.1,426.7 645.9,426.7 644.8,426.4 643.6,426.6 642.4,426.4 641.2,426.8 640.0,426.6 638.9,426.9 637.7,426.8 636.5,426.3 635.3,426.7 634.1,426.6 633.0,426.9 631.8,426.7 630.6,426.8 629.4,426.7 628.2,426.7 627.1,426.9 625.9,426.9 624.7,426.9 623.5,426.6 622.3,426.7 621.1,426.8 620.0,426.6 618.8,426.5 617.6,427.0 616.4,426.8 615.2,426.9 614.1,426.7 612.9,426.7 611.7,426.5 610.5,426.5 609.3,426.7 608.2,426.7 607.0,426.7 605.8,426.6 604.6,427.0 603.4,427.1 602.3,427.0 601.1,426.9 599.9,427.0 598.7,426.8 597.5,426.7 596.4,427.0 595.2,426.9 594.0,427.2 592.8,426.4 591.6,427.0 590.4,426.7 589.3,427.0 588.1,427.0 586.9,427.2 585.7,426.9 584.5,426.9 583.4,426.9 582.2,427.1 581.0,427.1 579.8,427.2 578.6,426.9 577.5,427.1 576.3,427.0 575.1,427.1 573.9,427.2 572.7,427.3 571.6,427.2 570.4,427.2 569.2,427.1 568.0,427.4 566.8,427.2 565.7,427.1 564.5,427.3 563.3,427.1 562.1,427.2 560.9,427.4 559.7,427.0 558.6,427.1 557.4,427.1 556.2,427.4 555.0,427.0 553.8,427.2 552.7,427.0 551.5,427.1 550.3,427.4 549.1,427.5 547.9,427.4 546.8,427.3 545.6,427.2 544.4,427.6 543.2,427.4 542.0,427.4 540.9,427.4 539.7,426.9 538.5,427.1 537.3,427.6 536.1,427.3 534.9,427.2 533.8,427.3 532.6,427.4 531.4,427.4 530.2,427.4 529.0,427.8 527.9,427.2 526.7,427.6 525.5,427.6 524.3,427.5 523.1,427.4 522.0,427.2 520.8,427.7 519.6,427.4 518.4,427.3 517.2,427.5 516.1,427.7 514.9,427.5 513.7,427.7 512.5,427.3 511.3,427.5 510.2,427.6 509.0,427.4 507.8,427.3 506.6,427.8 505.4,427.6 504.2,427.3 503.1,427.7 501.9,427.4 500.7,427.9 499.5,427.5 498.3,427.8 497.2,427.6 496.0,427.9 494.8,427.5 493.6,427.6 492.4,427.5 491.3,427.4 490.1,427.2 488.9,427.6 487.7,427.8 486.5,427.7 485.4,427.9 484.2,427.7 483.0,427.8 481.8,427.5 480.6,427.7 479.5,427.4 478.3,428.0 477.1,428.0 475.9,427.7 474.7,427.8 473.5,427.6 472.4,427.6 471.2,427.7 470.0,427.5 468.8,427.8 467.6,427.8 466.5,427.8 465.3,428.0 464.1,427.9 462.9,427.9 461.7,427.7 460.6,428.0 459.4,427.6 458.2,427.8 457.0,427.9 455.8,427.9 454.7,427.9 453.5,427.7 452.3,427.7 451.1,428.2 449.9,427.5 448.8,427.8 447.6,428.0 446.4,428.1 445.2,427.8 444.0,428.3 442.8,427.9 441.7,428.3 440.5,428.0 439.3,428.0 438.1,428.1 436.9,428.1 435.8,428.0 434.6,428.2 433.4,428.0 432.2,427.9 431.0,428.1 429.9,427.8 428.7,428.0 427.5,428.0 426.3,427.9 425.1,428.2 424.0,428.3 422.8,427.8 421.6,428.0 420.4,428.2 419.2,428.4 418.1,428.4 416.9,428.3 415.7,428.1 414.5,428.4 413.3,428.2 412.1,428.2 411.0,428.1 409.8,428.5 408.6,428.4 407.4,428.3 406.2,428.5 405.1,428.2 403.9,428.2 402.7,428.2 401.5,428.1 400.3,428.6 399.2,428.6 398.0,428.3 396.8,428.3 395.6,428.5 394.4,428.5 393.3,428.3 392.1,428.6 390.9,428.4 389.7,428.4 388.5,428.4 387.3,428.6 386.2,428.7 385.0,428.9 383.8,429.0 382.6,428.8 381.4,429.0 380.3,428.7 379.1,428.8 377.9,428.7 376.7,428.7 375.5,429.0 374.4,429.1 373.2,428.8 372.0,429.1 370.8,429.0 369.6,429.2 368.5,429.2 367.3,428.6 366.1,429.5 364.9,429.3 363.7,429.3 362.6,429.1 361.4,428.8 360.2,429.4 359.0,429.0 357.8,429.3 356.6,429.5 355.5,429.3 354.3,429.4 353.1,429.1 351.9,429.5 350.7,429.9 349.6,429.8 348.4,429.6 347.2,429.4 346.0,429.4 344.8,429.4 343.7,429.5 342.5,429.4 341.3,430.0 340.1,429.7 338.9,429.5 337.8,430.2 336.6,430.2 335.4,430.0 334.2,429.9 333.0,430.3 331.9,429.9 330.7,430.0 329.5,430.0 328.3,429.7 327.1,429.7 325.9,430.1 324.8,430.0 323.6,429.9 322.4,430.6 321.2,430.3 320.0,430.0 318.9,430.0 317.7,430.3 316.5,430.4 315.3,430.4 314.1,430.8 313.0,430.2 311.8,430.6 310.6,430.4 309.4,430.8 308.2,430.9 307.1,431.1 305.9,430.8 304.7,430.9 303.5,431.0 302.3,431.4 301.2,431.2 300.0,431.6 298.8,431.5 297.6,431.9 296.4,432.0 295.2,432.1 294.1,431.9 292.9,431.7 291.7,432.0 290.5,431.9 289.3,432.1 288.2,431.9 287.0,431.9 285.8,432.4 284.6,432.5 283.4,432.7 282.3,432.2 281.1,432.4 279.9,432.6 278.7,432.6 277.5,433.1 276.4,433.1 275.2,432.9 274.0,433.2 272.8,433.3 271.6,433.0 270.5,433.0 269.3,433.4 268.1,433.6 266.9,433.8 265.7,433.2 264.5,433.7 263.4,433.7 262.2,433.9 261.0,434.2 259.8,434.5 258.6,434.0 257.5,433.9 256.3,434.5 255.1,434.4 253.9,434.3 252.7,434.6 251.6,435.1 250.4,434.6 249.2,434.6 248.0,434.9 246.8,434.7 245.7,435.8 244.5,435.5 243.3,435.6 242.1,435.2 240.9,435.9 239.7,436.3 238.6,436.2 237.4,436.6 236.2,436.8 235.0,436.6 233.8,437.2 232.7,436.3 231.5,436.5 230.3,438.1 229.1,437.5 227.9,438.5 226.8,438.6 225.6,438.0 224.4,438.2 223.2,438.7 222.0,438.3 220.9,438.1 219.7,439.0 218.5,439.5 217.3,439.5 216.1,440.0 215.0,439.2 213.8,440.3 212.6,440.2 211.4,440.3 210.2,440.0 209.0,441.2 207.9,440.7 206.7,440.8 205.5,441.1 204.3,441.0 203.1,441.9 202.0,441.5 200.8,441.6 199.6,441.6 198.4,443.2 197.2,442.9 196.1,441.8 194.9,443.3 193.7,442.3 192.5,443.1 191.3,443.4 190.2,444.3 189.0,444.8 187.8,445.2 186.6,445.0 185.4,445.4 184.3,445.6 183.1,445.9 181.9,445.6 180.7,445.5 179.5,447.2 178.3,446.4 177.2,446.5 176.0,448.4 174.8,447.4 173.6,447.3 172.4,448.7 171.3,447.3 170.1,448.7 168.9,448.7 167.7,448.5 166.5,450.0 165.4,449.6 164.2,450.1 163.0,450.4 161.8,451.0 160.6,451.1 159.5,451.3 158.3,450.4 157.1,450.3 155.9,451.8 154.7,452.1 153.6,451.5 152.4,453.2 151.2,452.8 150.0,452.9 148.8,452.4 147.6,453.4 146.5,454.7 145.3,453.0 144.1,455.3 142.9,454.8 141.7,454.9 140.6,455.2 139.4,455.1 138.2,455.5 137.0,455.6 135.8,455.9 134.7,455.7 133.5,456.2 132.3,456.0 131.1,457.1 129.9,456.7 128.8,457.3 127.6,458.1 126.4,457.6 125.2,457.0 124.0,458.2 122.9,456.9 121.7,457.6 120.5,458.9 119.3,458.4 118.1,457.1 116.9,457.1 115.8,458.7 114.6,458.9 113.4,458.1 112.2,457.9 111.0,457.9 109.9,459.2 108.7,459.3 107.5,458.7 106.3,459.0 105.1,459.4 104.0,457.4 102.8,459.2 101.6,459.5 100.4,461.3" fill="#808080" fill-opacity="0.5"/>
<line x1="101.5" y1="418.85" x2="1299.7" y2="418.85" stroke="#5a5a5a" stroke-width="1.3"/>
<rect x="127.9" y="348.4" width="12.699999999999989" height="84.0" fill="url(#hatch)" stroke="#222" stroke-width="1"/>
<rect x="1263.0" y="348.4" width="6.599999999999909" height="84.0" fill="url(#hatch)" stroke="#222" stroke-width="1"/>
<line x1="994.0" y1="348.4" x2="994.0" y2="432.4" stroke="#555" stroke-width="1.1" stroke-dasharray="4,2.5"/>
<line x1="1022.5" y1="348.4" x2="1022.5" y2="432.4" stroke="#555" stroke-width="1.1" stroke-dasharray="4,2.5"/>
<line x1="853.2" y1="348.4" x2="853.2" y2="432.4" stroke="#111" stroke-width="1" stroke-dasharray="1.5,1.5"/>
<polyline points="100.4,373.3 101.6,322.6 102.8,419.4 104.0,433.0 105.1,412.7 106.3,409.6 107.5,372.8 108.7,418.3 109.9,413.6 111.0,344.9 112.2,413.3 113.4,431.2 114.6,395.1 115.8,413.9 116.9,414.4 118.1,388.4 119.3,365.1 120.5,431.6 121.7,402.6 122.9,453.4 124.0,367.3 125.2,415.8 126.4,366.3 127.6,334.4 128.8,358.1 129.9,399.4 131.1,467.5 132.3,356.0 133.5,401.0 134.7,361.7 135.8,396.3 137.0,402.6 138.2,368.9 139.4,437.2 140.6,415.9 141.7,386.8 142.9,359.0 144.1,431.7 145.3,366.7 146.5,403.7 147.6,385.6 148.8,345.2 150.0,372.8 151.2,355.4 152.4,350.9 153.6,386.2 154.7,384.6 155.9,392.5 157.1,385.3 158.3,394.7 159.5,401.3 160.6,403.3 161.8,378.2 163.0,414.9 164.2,397.1 165.4,382.7 166.5,431.2 167.7,432.6 168.9,385.9 170.1,411.7 171.3,417.7 172.4,396.9 173.6,398.8 174.8,412.6 176.0,404.1 177.2,417.9 178.3,403.5 179.5,396.9 180.7,387.9 181.9,387.6 183.1,369.1 184.3,392.2 185.4,375.3 186.6,384.0 187.8,396.9 189.0,373.9 190.2,373.9 191.3,377.7 192.5,390.8 193.7,402.3 194.9,415.7 196.1,403.0 197.2,389.1 198.4,381.9 199.6,381.6 200.8,388.6 202.0,384.1 203.1,372.0 204.3,381.8 205.5,386.4 206.7,398.7 207.9,387.2 209.0,380.1 210.2,386.2 211.4,364.0 212.6,394.0 213.8,398.4 215.0,405.0 216.1,422.3 217.3,398.7 218.5,412.1 219.7,408.7 220.9,406.6 222.0,374.8 223.2,372.0 224.4,396.7 225.6,401.9 226.8,394.3 227.9,395.2 229.1,404.9 230.3,395.4 231.5,406.7 232.7,376.7 233.8,387.8 235.0,379.7 236.2,394.1 237.4,386.7 238.6,384.8 239.7,408.4 240.9,403.0 242.1,395.5 243.3,398.0 244.5,404.0 245.7,396.6 246.8,386.7 248.0,390.9 249.2,401.0 250.4,391.8 251.6,408.7 252.7,390.9 253.9,386.6 255.1,388.4 256.3,399.1 257.5,394.4 258.6,395.3 259.8,400.4 261.0,410.1 262.2,416.8 263.4,409.0 264.5,410.9 265.7,414.1 266.9,386.2 268.1,401.6 269.3,396.9 270.5,397.2 271.6,399.9 272.8,379.5 274.0,391.4 275.2,373.4 276.4,398.9 277.5,396.7 278.7,394.0 279.9,397.0 281.1,398.1 282.3,389.6 283.4,386.4 284.6,379.8 285.8,399.4 287.0,384.4 288.2,386.0 289.3,391.0 290.5,396.5 291.7,375.6 292.9,383.0 294.1,398.5 295.2,378.5 296.4,387.8 297.6,394.5 298.8,396.7 300.0,406.5 301.2,399.7 302.3,388.4 303.5,401.3 304.7,408.8 305.9,415.5 307.1,399.9 308.2,404.4 309.4,397.4 310.6,398.2 311.8,390.7 313.0,389.6 314.1,397.4 315.3,390.5 316.5,398.7 317.7,396.0 318.9,396.3 320.0,395.6 321.2,396.1 322.4,392.9 323.6,388.1 324.8,388.5 325.9,394.3 327.1,394.8 328.3,391.9 329.5,391.4 330.7,390.6 331.9,393.6 333.0,396.3 334.2,386.2 335.4,384.6 336.6,386.0 337.8,387.2 338.9,395.7 340.1,395.1 341.3,407.1 342.5,384.5 343.7,389.3 344.8,386.6 346.0,380.1 347.2,386.1 348.4,395.0 349.6,394.3 350.7,399.8 351.9,399.2 353.1,387.1 354.3,385.4 355.5,386.4 356.6,391.6 357.8,387.0 359.0,397.4 360.2,392.2 361.4,393.1 362.6,406.2 363.7,398.7 364.9,402.0 366.1,390.1 367.3,397.9 368.5,396.2 369.6,387.3 370.8,383.0 372.0,390.7 373.2,403.3 374.4,412.2 375.5,407.9 376.7,393.7 377.9,396.0 379.1,408.6 380.3,406.9 381.4,408.1 382.6,396.0 383.8,394.3 385.0,394.2 386.2,386.4 387.3,388.9 388.5,393.3 389.7,391.5 390.9,386.9 392.1,393.7 393.3,389.6 394.4,390.3 395.6,382.1 396.8,373.5 398.0,380.1 399.2,390.1 400.3,393.0 401.5,388.7 402.7,396.6 403.9,399.8 405.1,393.9 406.2,397.7 407.4,396.3 408.6,391.8 409.8,402.4 411.0,405.4 412.1,408.7 413.3,403.5 414.5,401.6 415.7,391.9 416.9,394.0 418.1,396.0 419.2,393.1 420.4,392.6 421.6,387.7 422.8,385.1 424.0,385.8 425.1,385.2 426.3,391.5 427.5,396.9 428.7,391.7 429.9,393.8 431.0,380.9 432.2,393.3 433.4,390.5 434.6,393.8 435.8,400.9 436.9,396.3 438.1,386.7 439.3,391.1 440.5,384.4 441.7,391.2 442.8,394.6 444.0,388.0 445.2,390.9 446.4,390.3 447.6,391.8 448.8,390.5 449.9,389.9 451.1,382.8 452.3,392.0 453.5,400.9 454.7,403.0 455.8,398.8 457.0,401.0 458.2,400.3 459.4,406.4 460.6,412.0 461.7,397.7 462.9,400.8 464.1,389.8 465.3,389.6 466.5,388.4 467.6,393.0 468.8,390.4 470.0,390.0 471.2,395.6 472.4,396.0 473.5,399.1 474.7,401.3 475.9,397.3 477.1,397.3 478.3,378.4 479.5,379.7 480.6,382.8 481.8,383.0 483.0,383.8 484.2,387.9 485.4,388.2 486.5,393.2 487.7,390.2 488.9,389.5 490.1,386.0 491.3,389.0 492.4,387.7 493.6,389.0 494.8,392.5 496.0,395.2 497.2,390.8 498.3,397.4 499.5,394.9 500.7,392.0 501.9,390.4 503.1,393.6 504.2,387.5 505.4,379.1 506.6,382.2 507.8,382.5 509.0,388.0 510.2,393.0 511.3,405.6 512.5,407.4 513.7,401.2 514.9,400.9 516.1,405.0 517.2,399.3 518.4,393.7 519.6,395.7 520.8,397.6 522.0,387.8 523.1,385.4 524.3,394.9 525.5,391.1 526.7,399.5 527.9,404.0 529.0,393.2 530.2,392.7 531.4,381.3 532.6,383.3 533.8,380.4 534.9,393.0 536.1,389.5 537.3,387.4 538.5,392.6 539.7,399.0 540.9,399.1 542.0,391.5 543.2,384.1 544.4,380.6 545.6,393.5 546.8,394.8 547.9,396.4 549.1,394.4 550.3,391.9 551.5,392.7 552.7,391.8 553.8,389.1 555.0,387.5 556.2,393.1 557.4,390.9 558.6,389.5 559.7,383.8 560.9,396.6 562.1,394.3 563.3,390.1 564.5,386.6 565.7,381.5 566.8,386.4 568.0,393.2 569.2,399.4 570.4,403.8 571.6,405.5 572.7,402.3 573.9,395.4 575.1,400.6 576.3,394.7 577.5,395.8 578.6,398.8 579.8,400.8 581.0,399.4 582.2,386.9 583.4,382.9 584.5,384.0 585.7,384.9 586.9,383.8 588.1,383.4 589.3,382.1 590.4,389.0 591.6,393.9 592.8,392.1 594.0,397.8 595.2,401.0 596.4,403.7 597.5,394.4 598.7,387.3 599.9,390.0 601.1,390.8 602.3,389.9 603.4,390.5 604.6,389.6 605.8,391.6 607.0,393.8 608.2,383.3 609.3,381.8 610.5,388.0 611.7,392.9 612.9,403.5 614.1,401.4 615.2,401.4 616.4,396.3 617.6,396.7 618.8,407.6 620.0,401.7 621.1,397.3 622.3,397.0 623.5,391.3 624.7,393.7 625.9,385.7 627.1,390.2 628.2,393.1 629.4,391.7 630.6,397.6 631.8,396.5 633.0,396.6 634.1,396.1 635.3,399.2 636.5,402.5 637.7,401.8 638.9,398.4 640.0,389.1 641.2,393.4 642.4,391.2 643.6,390.1 644.8,389.3 645.9,393.8 647.1,392.9 648.3,393.2 649.5,388.9 650.7,396.4 651.8,398.9 653.0,398.3 654.2,398.4 655.4,392.4 656.6,393.7 657.8,391.0 658.9,400.8 660.1,396.0 661.3,395.0 662.5,392.3 663.7,394.0 664.8,389.0 666.0,390.4 667.2,396.3 668.4,396.2 669.6,396.2 670.7,395.3 671.9,394.0 673.1,395.1 674.3,392.6 675.5,390.5 676.6,394.1 677.8,392.5 679.0,397.4 680.2,400.9 681.4,404.0 682.5,399.0 683.7,396.9 684.9,393.4 686.1,379.1 687.3,388.0 688.5,380.7 689.6,381.6 690.8,393.1 692.0,395.7 693.2,390.7 694.4,391.2 695.5,386.5 696.7,386.3 697.9,393.5 699.1,386.9 700.3,391.8 701.4,393.0 702.6,391.9 703.8,400.4 705.0,401.6 706.2,397.9 707.3,395.1 708.5,393.1 709.7,390.5 710.9,391.3 712.1,395.1 713.3,397.2 714.4,395.3 715.6,392.3 716.8,391.2 718.0,394.0 719.2,383.3 720.3,380.7 721.5,388.2 722.7,393.5 723.9,393.9 725.1,393.4 726.2,398.2 727.4,393.5 728.6,397.4 729.8,392.0 731.0,392.2 732.1,387.8 733.3,392.8 734.5,391.0 735.7,393.2 736.9,392.4 738.0,396.6 739.2,385.7 740.4,397.5 741.6,402.2 742.8,404.4 744.0,405.0 745.1,407.4 746.3,415.2 747.5,404.5 748.7,403.5 749.9,400.6 751.0,393.6 752.2,394.9 753.4,394.9 754.6,393.3 755.8,388.6 756.9,393.0 758.1,398.0 759.3,405.8 760.5,401.5 761.7,400.5 762.8,398.4 764.0,390.8 765.2,391.1 766.4,393.0 767.6,393.9 768.7,396.1 769.9,404.9 771.1,394.3 772.3,392.3 773.5,390.5 774.7,384.8 775.8,385.6 777.0,387.6 778.2,382.0 779.4,388.5 780.6,392.3 781.7,397.4 782.9,393.0 784.1,389.8 785.3,389.3 786.5,386.2 787.6,383.2 788.8,387.5 790.0,388.5 791.2,382.7 792.4,391.1 793.5,397.8 794.7,395.8 795.9,393.9 797.1,398.3 798.3,400.2 799.4,399.4 800.6,398.0 801.8,397.3 803.0,396.2 804.2,391.8 805.4,383.7 806.5,386.6 807.7,385.7 808.9,389.4 810.1,389.1 811.3,393.1 812.4,391.7 813.6,396.1 814.8,389.9 816.0,384.3 817.2,384.0 818.3,379.1 819.5,392.7 820.7,391.6 821.9,395.3 823.1,393.7 824.2,396.7 825.4,393.3 826.6,391.3 827.8,394.5 829.0,394.9 830.1,396.8 831.3,391.2 832.5,391.0 833.7,389.4 834.9,391.2 836.1,388.0 837.2,390.0 838.4,394.2 839.6,397.7 840.8,397.8 842.0,397.0 843.1,393.8 844.3,392.8 845.5,389.3 846.7,390.1 847.9,396.0 849.0,390.3 850.2,383.7 851.4,377.6 852.6,369.5 853.8,367.9 854.9,371.6 856.1,385.1 857.3,391.8 858.5,396.4 859.7,400.3 860.9,403.4 862.0,394.4 863.2,392.2 864.4,386.8 865.6,385.4 866.8,389.3 867.9,391.6 869.1,392.4 870.3,394.4 871.5,397.5 872.7,396.9 873.8,399.7 875.0,397.2 876.2,397.8 877.4,394.9 878.6,392.5 879.7,387.2 880.9,387.9 882.1,389.1 883.3,390.2 884.5,388.9 885.6,388.2 886.8,390.7 888.0,390.7 889.2,393.2 890.4,389.9 891.6,392.5 892.7,391.0 893.9,392.0 895.1,385.1 896.3,391.2 897.5,387.7 898.6,391.8 899.8,387.6 901.0,391.8 902.2,389.4 903.4,392.4 904.5,392.0 905.7,382.8 906.9,381.3 908.1,383.7 909.3,381.3 910.4,385.5 911.6,382.9 912.8,384.8 914.0,383.8 915.2,385.8 916.3,379.1 917.5,386.0 918.7,386.1 919.9,390.3 921.1,394.7 922.3,405.6 923.4,407.7 924.6,406.3 925.8,406.4 927.0,396.9 928.2,400.4 929.3,398.4 930.5,397.2 931.7,391.4 932.9,394.1 934.1,391.2 935.2,388.7 936.4,390.6 937.6,387.9 938.8,389.1 940.0,387.8 941.1,388.1 942.3,387.1 943.5,381.0 944.7,380.7 945.9,383.7 947.0,385.5 948.2,392.6 949.4,385.1 950.6,386.0 951.8,394.2 953.0,392.3 954.1,390.4 955.3,384.1 956.5,386.6 957.7,386.4 958.9,387.5 960.0,389.3 961.2,393.0 962.4,396.6 963.6,399.6 964.8,402.0 965.9,405.2 967.1,409.3 968.3,402.3 969.5,403.4 970.7,399.6 971.8,395.0 973.0,396.7 974.2,398.3 975.4,399.1 976.6,396.7 977.7,394.5 978.9,393.2 980.1,393.8 981.3,390.2 982.5,388.1 983.7,392.2 984.8,387.9 986.0,391.4 987.2,390.0 988.4,385.1 989.6,388.2 990.7,384.2 991.9,380.7 993.1,384.2 994.3,391.7 995.5,392.7 996.6,384.7 997.8,385.0 999.0,383.9 1000.2,388.9 1001.4,384.9 1002.5,387.4 1003.7,381.9 1004.9,375.6 1006.1,378.9 1007.3,382.9 1008.5,391.7 1009.6,393.2 1010.8,393.5 1012.0,383.8 1013.2,388.3 1014.4,391.3 1015.5,389.7 1016.7,386.0 1017.9,390.0 1019.1,390.0 1020.3,394.5 1021.4,387.4 1022.6,386.8 1023.8,389.6 1025.0,386.4 1026.2,382.8 1027.3,381.5 1028.5,389.9 1029.7,400.1 1030.9,402.3 1032.1,400.9 1033.2,395.4 1034.4,396.6 1035.6,395.2 1036.8,396.5 1038.0,388.4 1039.2,393.5 1040.3,393.3 1041.5,398.5 1042.7,392.5 1043.9,399.7 1045.1,391.7 1046.2,385.3 1047.4,384.2 1048.6,379.1 1049.8,379.7 1051.0,372.9 1052.1,372.8 1053.3,368.8 1054.5,379.0 1055.7,376.2 1056.9,382.9 1058.0,384.3 1059.2,381.1 1060.4,383.5 1061.6,383.7 1062.8,380.3 1063.9,383.8 1065.1,380.7 1066.3,375.9 1067.5,380.2 1068.7,377.1 1069.9,384.3 1071.0,380.1 1072.2,378.7 1073.4,381.1 1074.6,375.6 1075.8,382.5 1076.9,378.7 1078.1,381.0 1079.3,384.9 1080.5,379.4 1081.7,378.9 1082.8,383.0 1084.0,382.2 1085.2,379.0 1086.4,376.4 1087.6,372.8 1088.7,380.3 1089.9,384.3 1091.1,380.4 1092.3,374.4 1093.5,370.0 1094.6,365.6 1095.8,370.4 1097.0,375.7 1098.2,384.8 1099.4,384.1 1100.6,375.9 1101.7,379.0 1102.9,379.9 1104.1,374.3 1105.3,369.2 1106.5,372.1 1107.6,373.1 1108.8,373.6 1110.0,370.6 1111.2,372.1 1112.4,374.4 1113.5,374.7 1114.7,376.6 1115.9,380.5 1117.1,383.6 1118.3,382.0 1119.4,379.6 1120.6,380.9 1121.8,377.5 1123.0,375.5 1124.2,380.9 1125.3,383.1 1126.5,380.3 1127.7,384.4 1128.9,380.4 1130.1,381.8 1131.3,381.6 1132.4,373.6 1133.6,370.5 1134.8,370.6 1136.0,373.0 1137.2,370.3 1138.3,373.1 1139.5,371.9 1140.7,369.6 1141.9,370.4 1143.1,374.4 1144.2,373.8 1145.4,374.8 1146.6,382.8 1147.8,380.0 1149.0,374.7 1150.1,366.7 1151.3,369.1 1152.5,362.8 1153.7,369.0 1154.9,366.0 1156.1,370.7 1157.2,374.1 1158.4,372.3 1159.6,376.1 1160.8,373.2 1162.0,379.6 1163.1,385.8 1164.3,380.3 1165.5,383.3 1166.7,376.8 1167.9,379.1 1169.0,380.5 1170.2,378.8 1171.4,383.0 1172.6,383.7 1173.8,378.6 1174.9,379.8 1176.1,374.6 1177.3,379.4 1178.5,375.8 1179.7,379.1 1180.8,377.5 1182.0,381.1 1183.2,378.2 1184.4,375.7 1185.6,379.1 1186.8,373.6 1187.9,369.4 1189.1,371.1 1190.3,372.9 1191.5,372.7 1192.7,373.3 1193.8,381.1 1195.0,383.4 1196.2,390.0 1197.4,381.1 1198.6,374.6 1199.7,377.0 1200.9,379.4 1202.1,375.0 1203.3,375.5 1204.5,370.6 1205.6,375.9 1206.8,386.1 1208.0,379.5 1209.2,378.7 1210.4,378.0 1211.5,378.0 1212.7,379.0 1213.9,373.8 1215.1,374.3 1216.3,368.6 1217.5,371.0 1218.6,367.7 1219.8,372.4 1221.0,371.2 1222.2,373.7 1223.4,376.2 1224.5,375.1 1225.7,377.0 1226.9,374.6 1228.1,381.0 1229.3,380.7 1230.4,379.1 1231.6,379.6 1232.8,380.1 1234.0,376.0 1235.2,376.2 1236.3,379.9 1237.5,377.0 1238.7,384.9 1239.9,376.4 1241.1,374.1 1242.2,374.5 1243.4,377.2 1244.6,372.3 1245.8,369.7 1247.0,371.3 1248.2,375.1 1249.3,371.6 1250.5,366.3 1251.7,366.4 1252.9,366.8 1254.1,371.9 1255.2,371.0 1256.4,375.0 1257.6,378.3 1258.8,382.2 1260.0,378.2 1261.1,371.9 1262.3,371.3 1263.5,377.7 1264.7,376.5 1265.9,382.9 1267.0,378.1 1268.2,378.9 1269.4,371.7 1270.6,375.1 1271.8,372.6 1272.9,379.8 1274.1,379.5 1275.3,381.5 1276.5,385.3 1277.7,381.2 1278.9,379.8 1280.0,380.3 1281.2,384.2 1282.4,390.3 1283.6,382.8 1284.8,382.9 1285.9,385.9 1287.1,382.8 1288.3,385.0 1289.5,383.9 1290.7,385.2 1291.8,389.4 1293.0,382.0 1294.2,377.8 1295.4,379.4 1296.6,383.4 1297.7,383.9 1298.9,391.9 1300.1,384.1 1301.3,378.9" fill="none" stroke="#0000ff" stroke-width="1.15" stroke-linejoin="round"/>
</g>
<rect x="101.5" y="348.4" width="1198.2" height="84.0" fill="none" stroke="#444" stroke-width="1.1"/>
<line x1="107.50" y1="432.4" x2="107.50" y2="435.7" stroke="#444" stroke-width="1"/>
<text x="95.90" y="446.90" font-family="'Liberation Sans', sans-serif" font-size="10.4" fill="#222" textLength="23.20" lengthAdjust="spacingAndGlyphs" stroke="#222" stroke-width="0.15" >3500</text>
<line x1="166.54" y1="432.4" x2="166.54" y2="435.7" stroke="#444" stroke-width="1"/>
<text x="154.94" y="446.90" font-family="'Liberation Sans', sans-serif" font-size="10.4" fill="#222" textLength="23.20" lengthAdjust="spacingAndGlyphs" stroke="#222" stroke-width="0.15" >3600</text>
<line x1="225.58" y1="432.4" x2="225.58" y2="435.7" stroke="#444" stroke-width="1"/>
<text x="213.98" y="446.90" font-family="'Liberation Sans', sans-serif" font-size="10.4" fill="#222" textLength="23.20" lengthAdjust="spacingAndGlyphs" stroke="#222" stroke-width="0.15" >3700</text>
<line x1="284.62" y1="432.4" x2="284.62" y2="435.7" stroke="#444" stroke-width="1"/>
<text x="273.02" y="446.90" font-family="'Liberation Sans', sans-serif" font-size="10.4" fill="#222" textLength="23.20" lengthAdjust="spacingAndGlyphs" stroke="#222" stroke-width="0.15" >3800</text>
<line x1="343.66" y1="432.4" x2="343.66" y2="435.7" stroke="#444" stroke-width="1"/>
<text x="332.06" y="446.90" font-family="'Liberation Sans', sans-serif" font-size="10.4" fill="#222" textLength="23.20" lengthAdjust="spacingAndGlyphs" stroke="#222" stroke-width="0.15" >3900</text>
<line x1="402.70" y1="432.4" x2="402.70" y2="435.7" stroke="#444" stroke-width="1"/>
<text x="391.10" y="446.90" font-family="'Liberation Sans', sans-serif" font-size="10.4" fill="#222" textLength="23.20" lengthAdjust="spacingAndGlyphs" stroke="#222" stroke-width="0.15" >4000</text>
<line x1="461.74" y1="432.4" x2="461.74" y2="435.7" stroke="#444" stroke-width="1"/>
<text x="450.14" y="446.90" font-family="'Liberation Sans', sans-serif" font-size="10.4" fill="#222" textLength="23.20" lengthAdjust="spacingAndGlyphs" stroke="#222" stroke-width="0.15" >4100</text>
<line x1="520.78" y1="432.4" x2="520.78" y2="435.7" stroke="#444" stroke-width="1"/>
<text x="509.18" y="446.90" font-family="'Liberation Sans', sans-serif" font-size="10.4" fill="#222" textLength="23.20" lengthAdjust="spacingAndGlyphs" stroke="#222" stroke-width="0.15" >4200</text>
<line x1="579.82" y1="432.4" x2="579.82" y2="435.7" stroke="#444" stroke-width="1"/>
<text x="568.22" y="446.90" font-family="'Liberation Sans', sans-serif" font-size="10.4" fill="#222" textLength="23.20" lengthAdjust="spacingAndGlyphs" stroke="#222" stroke-width="0.15" >4300</text>
<line x1="638.86" y1="432.4" x2="638.86" y2="435.7" stroke="#444" stroke-width="1"/>
<text x="627.26" y="446.90" font-family="'Liberation Sans', sans-serif" font-size="10.4" fill="#222" textLength="23.20" lengthAdjust="spacingAndGlyphs" stroke="#222" stroke-width="0.15" >4400</text>
<line x1="697.90" y1="432.4" x2="697.90" y2="435.7" stroke="#444" stroke-width="1"/>
<text x="686.30" y="446.90" font-family="'Liberation Sans', sans-serif" font-size="10.4" fill="#222" textLength="23.20" lengthAdjust="spacingAndGlyphs" stroke="#222" stroke-width="0.15" >4500</text>
<line x1="756.94" y1="432.4" x2="756.94" y2="435.7" stroke="#444" stroke-width="1"/>
<text x="745.34" y="446.90" font-family="'Liberation Sans', sans-serif" font-size="10.4" fill="#222" textLength="23.20" lengthAdjust="spacingAndGlyphs" stroke="#222" stroke-width="0.15" >4600</text>
<line x1="815.98" y1="432.4" x2="815.98" y2="435.7" stroke="#444" stroke-width="1"/>
<text x="804.38" y="446.90" font-family="'Liberation Sans', sans-serif" font-size="10.4" fill="#222" textLength="23.20" lengthAdjust="spacingAndGlyphs" stroke="#222" stroke-width="0.15" >4700</text>
<line x1="875.02" y1="432.4" x2="875.02" y2="435.7" stroke="#444" stroke-width="1"/>
<text x="863.42" y="446.90" font-family="'Liberation Sans', sans-serif" font-size="10.4" fill="#222" textLength="23.20" lengthAdjust="spacingAndGlyphs" stroke="#222" stroke-width="0.15" >4800</text>
<line x1="934.06" y1="432.4" x2="934.06" y2="435.7" stroke="#444" stroke-width="1"/>
<text x="922.46" y="446.90" font-family="'Liberation Sans', sans-serif" font-size="10.4" fill="#222" textLength="23.20" lengthAdjust="spacingAndGlyphs" stroke="#222" stroke-width="0.15" >4900</text>
<line x1="993.10" y1="432.4" x2="993.10" y2="435.7" stroke="#444" stroke-width="1"/>
<text x="981.50" y="446.90" font-family="'Liberation Sans', sans-serif" font-size="10.4" fill="#222" textLength="23.20" lengthAdjust="spacingAndGlyphs" stroke="#222" stroke-width="0.15" >5000</text>
<line x1="1052.14" y1="432.4" x2="1052.14" y2="435.7" stroke="#444" stroke-width="1"/>
<text x="1040.54" y="446.90" font-family="'Liberation Sans', sans-serif" font-size="10.4" fill="#222" textLength="23.20" lengthAdjust="spacingAndGlyphs" stroke="#222" stroke-width="0.15" >5100</text>
<line x1="1111.18" y1="432.4" x2="1111.18" y2="435.7" stroke="#444" stroke-width="1"/>
<text x="1099.58" y="446.90" font-family="'Liberation Sans', sans-serif" font-size="10.4" fill="#222" textLength="23.20" lengthAdjust="spacingAndGlyphs" stroke="#222" stroke-width="0.15" >5200</text>
<line x1="1170.22" y1="432.4" x2="1170.22" y2="435.7" stroke="#444" stroke-width="1"/>
<text x="1158.62" y="446.90" font-family="'Liberation Sans', sans-serif" font-size="10.4" fill="#222" textLength="23.20" lengthAdjust="spacingAndGlyphs" stroke="#222" stroke-width="0.15" >5300</text>
<line x1="1229.26" y1="432.4" x2="1229.26" y2="435.7" stroke="#444" stroke-width="1"/>
<text x="1217.66" y="446.90" font-family="'Liberation Sans', sans-serif" font-size="10.4" fill="#222" textLength="23.20" lengthAdjust="spacingAndGlyphs" stroke="#222" stroke-width="0.15" >5400</text>
<line x1="1288.30" y1="432.4" x2="1288.30" y2="435.7" stroke="#444" stroke-width="1"/>
<text x="1276.70" y="446.90" font-family="'Liberation Sans', sans-serif" font-size="10.4" fill="#222" textLength="23.20" lengthAdjust="spacingAndGlyphs" stroke="#222" stroke-width="0.15" >5500</text>
<line x1="98.2" y1="352.70" x2="101.5" y2="352.70" stroke="#444" stroke-width="1"/>
<text x="83.20" y="356.00" font-family="'Liberation Sans', sans-serif" font-size="10.4" fill="#222" textLength="11.10" lengthAdjust="spacingAndGlyphs" stroke="#222" stroke-width="0.15" >10</text>
<line x1="98.2" y1="385.75" x2="101.5" y2="385.75" stroke="#444" stroke-width="1"/>
<text x="88.70" y="389.05" font-family="'Liberation Sans', sans-serif" font-size="10.4" fill="#222" textLength="5.60" lengthAdjust="spacingAndGlyphs" stroke="#222" stroke-width="0.15" >5</text>
<line x1="98.2" y1="418.85" x2="101.5" y2="418.85" stroke="#444" stroke-width="1"/>
<text x="88.70" y="422.15" font-family="'Liberation Sans', sans-serif" font-size="10.4" fill="#222" textLength="5.60" lengthAdjust="spacingAndGlyphs" stroke="#222" stroke-width="0.15" >0</text>
<text x="107.60" y="346.30" font-family="'Liberation Sans', sans-serif" font-size="8.9" fill="#222" textLength="7.00" lengthAdjust="spacingAndGlyphs" stroke="#222" stroke-width="0.09" >e</text>
<text x="113.90" y="342.00" font-family="'Liberation Sans', sans-serif" font-size="6.0" fill="#222" textLength="10.70" lengthAdjust="spacingAndGlyphs" stroke="#222" stroke-width="0.09" >−17</text>
<text x="123.90" y="346.30" font-family="'Liberation Sans', sans-serif" font-size="8.9" fill="#222" textLength="23.10" lengthAdjust="spacingAndGlyphs" stroke="#222" stroke-width="0.09" >x2Å</text>
<text transform="translate(125.00,322.50) rotate(90)" x="0" y="3.2" font-family="'Liberation Sans', sans-serif" font-size="8.8" fill="#f7b24a" textLength="18.00" lengthAdjust="spacingAndGlyphs">Lyα</text>
<text transform="translate(125.00,343.30) rotate(90)" x="0" y="3.6" font-family="'Liberation Sans', sans-serif" font-size="8.6" fill="#f7b24a" textLength="4.70" lengthAdjust="spacingAndGlyphs">{</text>
<text transform="translate(153.10,319.50) rotate(90)" x="0" y="3.2" font-family="'Liberation Sans', sans-serif" font-size="8.8" fill="#008000" textLength="20.40" lengthAdjust="spacingAndGlyphs">MgII</text>
<text transform="translate(153.10,343.30) rotate(90)" x="0" y="3.6" font-family="'Liberation Sans', sans-serif" font-size="8.6" fill="#008000" textLength="4.70" lengthAdjust="spacingAndGlyphs">{</text>
<text transform="translate(168.75,319.50) rotate(90)" x="0" y="3.2" font-family="'Liberation Sans', sans-serif" font-size="8.8" fill="#ffa500" textLength="13.50" lengthAdjust="spacingAndGlyphs">NV</text>
<text transform="translate(168.75,343.30) rotate(90)" x="0" y="3.6" font-family="'Liberation Sans', sans-serif" font-size="8.6" fill="#ffa500" textLength="4.70" lengthAdjust="spacingAndGlyphs">{</text>
<text transform="translate(208.10,324.50) rotate(90)" x="0" y="3.2" font-family="'Liberation Sans', sans-serif" font-size="8.8" fill="#ffa500" textLength="14.75" lengthAdjust="spacingAndGlyphs">SiII</text>
<text transform="translate(208.10,343.30) rotate(90)" x="0" y="3.6" font-family="'Liberation Sans', sans-serif" font-size="8.6" fill="#ffa500" textLength="4.70" lengthAdjust="spacingAndGlyphs">{</text>
<text transform="translate(248.10,322.50) rotate(90)" x="0" y="3.2" font-family="'Liberation Sans', sans-serif" font-size="8.8" fill="#8a2be2" textLength="18.00" lengthAdjust="spacingAndGlyphs">Lyα</text>
<text transform="translate(248.10,343.30) rotate(90)" x="0" y="3.6" font-family="'Liberation Sans', sans-serif" font-size="8.6" fill="#8a2be2" textLength="4.70" lengthAdjust="spacingAndGlyphs">{</text>
<text transform="translate(293.75,319.50) rotate(90)" x="0" y="3.2" font-family="'Liberation Sans', sans-serif" font-size="8.8" fill="#8a2be2" textLength="14.00" lengthAdjust="spacingAndGlyphs">NV</text>
<text transform="translate(293.75,343.30) rotate(90)" x="0" y="3.6" font-family="'Liberation Sans', sans-serif" font-size="8.6" fill="#8a2be2" textLength="4.70" lengthAdjust="spacingAndGlyphs">{</text>
<text transform="translate(324.40,319.50) rotate(90)" x="0" y="3.2" font-family="'Liberation Sans', sans-serif" font-size="8.8" fill="#800080" textLength="16.60" lengthAdjust="spacingAndGlyphs">CIV</text>
<text transform="translate(324.40,343.30) rotate(90)" x="0" y="3.6" font-family="'Liberation Sans', sans-serif" font-size="8.6" fill="#800080" textLength="4.70" lengthAdjust="spacingAndGlyphs">{</text>
<text transform="translate(335.00,324.50) rotate(90)" x="0" y="3.2" font-family="'Liberation Sans', sans-serif" font-size="8.8" fill="#8a2be2" textLength="14.75" lengthAdjust="spacingAndGlyphs">SiII</text>
<text transform="translate(335.00,343.30) rotate(90)" x="0" y="3.6" font-family="'Liberation Sans', sans-serif" font-size="8.6" fill="#8a2be2" textLength="4.70" lengthAdjust="spacingAndGlyphs">{</text>
<text transform="translate(376.90,323.25) rotate(90)" x="0" y="3.2" font-family="'Liberation Sans', sans-serif" font-size="8.8" fill="#ff00ff" textLength="12.85" lengthAdjust="spacingAndGlyphs">CII</text>
<text transform="translate(376.90,343.30) rotate(90)" x="0" y="3.6" font-family="'Liberation Sans', sans-serif" font-size="8.6" fill="#ff00ff" textLength="4.70" lengthAdjust="spacingAndGlyphs">{</text>
<text transform="translate(435.60,319.50) rotate(90)" x="0" y="3.2" font-family="'Liberation Sans', sans-serif" font-size="8.8" fill="#ff0000" textLength="16.60" lengthAdjust="spacingAndGlyphs">OVI</text>
<text transform="translate(435.60,343.30) rotate(90)" x="0" y="3.6" font-family="'Liberation Sans', sans-serif" font-size="8.6" fill="#ff0000" textLength="4.70" lengthAdjust="spacingAndGlyphs">{</text>
<text transform="translate(458.75,320.10) rotate(90)" x="0" y="3.2" font-family="'Liberation Sans', sans-serif" font-size="8.8" fill="#9932cc" textLength="19.15" lengthAdjust="spacingAndGlyphs">HeII</text>
<text transform="translate(458.75,343.30) rotate(90)" x="0" y="3.6" font-family="'Liberation Sans', sans-serif" font-size="8.6" fill="#9932cc" textLength="4.70" lengthAdjust="spacingAndGlyphs">{</text>
<text transform="translate(578.75,320.75) rotate(90)" x="0" y="3.2" font-family="'Liberation Sans', sans-serif" font-size="8.8" fill="#8a2be2" textLength="18.50" lengthAdjust="spacingAndGlyphs">SiIV</text>
<text transform="translate(578.75,343.30) rotate(90)" x="0" y="3.6" font-family="'Liberation Sans', sans-serif" font-size="8.6" fill="#8a2be2" textLength="4.70" lengthAdjust="spacingAndGlyphs">{</text>
<text transform="translate(683.75,322.50) rotate(90)" x="0" y="3.2" font-family="'Liberation Sans', sans-serif" font-size="8.8" fill="#87ceeb" textLength="13.60" lengthAdjust="spacingAndGlyphs">OII</text>
<text transform="translate(683.75,343.30) rotate(90)" x="0" y="3.6" font-family="'Liberation Sans', sans-serif" font-size="8.6" fill="#87ceeb" textLength="4.70" lengthAdjust="spacingAndGlyphs">{</text>
<text transform="translate(698.00,319.50) rotate(90)" x="0" y="3.2" font-family="'Liberation Sans', sans-serif" font-size="8.8" fill="#ffa500" textLength="16.60" lengthAdjust="spacingAndGlyphs">CIV</text>
<text transform="translate(698.00,343.30) rotate(90)" x="0" y="3.6" font-family="'Liberation Sans', sans-serif" font-size="8.6" fill="#ffa500" textLength="4.70" lengthAdjust="spacingAndGlyphs">{</text>
<text transform="translate(706.90,322.50) rotate(90)" x="0" y="3.2" font-family="'Liberation Sans', sans-serif" font-size="8.8" fill="#87ceeb" textLength="13.60" lengthAdjust="spacingAndGlyphs">OII</text>
<text transform="translate(706.90,343.30) rotate(90)" x="0" y="3.6" font-family="'Liberation Sans', sans-serif" font-size="8.6" fill="#87ceeb" textLength="4.70" lengthAdjust="spacingAndGlyphs">{</text>
<text transform="translate(912.25,319.50) rotate(90)" x="0" y="3.2" font-family="'Liberation Sans', sans-serif" font-size="8.8" fill="#ff0000" textLength="14.00" lengthAdjust="spacingAndGlyphs">NV</text>
<text transform="translate(912.25,343.30) rotate(90)" x="0" y="3.6" font-family="'Liberation Sans', sans-serif" font-size="8.6" fill="#ff0000" textLength="4.70" lengthAdjust="spacingAndGlyphs">{</text>
<text transform="translate(965.00,324.50) rotate(90)" x="0" y="3.2" font-family="'Liberation Sans', sans-serif" font-size="8.8" fill="#ff0000" textLength="14.75" lengthAdjust="spacingAndGlyphs">SiII</text>
<text transform="translate(965.00,343.30) rotate(90)" x="0" y="3.6" font-family="'Liberation Sans', sans-serif" font-size="8.6" fill="#ff0000" textLength="4.70" lengthAdjust="spacingAndGlyphs">{</text>
<text transform="translate(1019.40,320.10) rotate(90)" x="0" y="3.2" font-family="'Liberation Sans', sans-serif" font-size="8.8" fill="#9370db" textLength="19.15" lengthAdjust="spacingAndGlyphs">HeII</text>
<text transform="translate(1019.40,343.30) rotate(90)" x="0" y="3.6" font-family="'Liberation Sans', sans-serif" font-size="8.6" fill="#9370db" textLength="4.70" lengthAdjust="spacingAndGlyphs">{</text>
<text transform="translate(1117.50,327.50) rotate(90)" x="0" y="3.2" font-family="'Liberation Sans', sans-serif" font-size="8.8" fill="#87ceeb" textLength="13.60" lengthAdjust="spacingAndGlyphs">Hγ</text>
<text transform="translate(1117.50,343.30) rotate(90)" x="0" y="3.6" font-family="'Liberation Sans', sans-serif" font-size="8.6" fill="#87ceeb" textLength="4.70" lengthAdjust="spacingAndGlyphs">{</text>
<text transform="translate(1144.40,327.50) rotate(90)" x="0" y="3.2" font-family="'Liberation Sans', sans-serif" font-size="8.8" fill="#87ceeb" textLength="13.60" lengthAdjust="spacingAndGlyphs">Hγ</text>
<text transform="translate(1144.40,343.30) rotate(90)" x="0" y="3.6" font-family="'Liberation Sans', sans-serif" font-size="8.6" fill="#87ceeb" textLength="4.70" lengthAdjust="spacingAndGlyphs">{</text>
<text transform="translate(1191.90,327.00) rotate(90)" x="0" y="3.2" font-family="'Liberation Sans', sans-serif" font-size="8.8" fill="#4169e1" textLength="13.50" lengthAdjust="spacingAndGlyphs">Hβ</text>
<text transform="translate(1191.90,343.30) rotate(90)" x="0" y="3.6" font-family="'Liberation Sans', sans-serif" font-size="8.6" fill="#4169e1" textLength="4.70" lengthAdjust="spacingAndGlyphs">{</text>
<text transform="translate(1255.00,323.25) rotate(90)" x="0" y="3.2" font-family="'Liberation Sans', sans-serif" font-size="8.8" fill="#4169e1" textLength="16.00" lengthAdjust="spacingAndGlyphs">OIII</text>
<text transform="translate(1255.00,343.30) rotate(90)" x="0" y="3.6" font-family="'Liberation Sans', sans-serif" font-size="8.6" fill="#4169e1" textLength="4.70" lengthAdjust="spacingAndGlyphs">{</text>
<text transform="translate(1275.40,320.30) rotate(90)" x="0" y="3.2" font-family="'Liberation Sans', sans-serif" font-size="8.8" fill="#ff0000" textLength="19.20" lengthAdjust="spacingAndGlyphs">SiIV</text>
<text transform="translate(1275.40,343.30) rotate(90)" x="0" y="3.6" font-family="'Liberation Sans', sans-serif" font-size="8.6" fill="#ff0000" textLength="4.70" lengthAdjust="spacingAndGlyphs">{</text>
<text transform="translate(1286.20,322.90) rotate(90)" x="0" y="3.2" font-family="'Liberation Sans', sans-serif" font-size="8.8" fill="#4169e1" textLength="16.60" lengthAdjust="spacingAndGlyphs">OIII</text>
<text transform="translate(1286.20,343.30) rotate(90)" x="0" y="3.6" font-family="'Liberation Sans', sans-serif" font-size="8.6" fill="#4169e1" textLength="4.70" lengthAdjust="spacingAndGlyphs">{</text>
<text transform="translate(437.50,278.90) rotate(90)" x="0" y="3.2" font-family="'Liberation Sans', sans-serif" font-size="8.8" fill="#ffa500" textLength="18.50" lengthAdjust="spacingAndGlyphs">SiIV</text>
<text transform="translate(437.50,301.50) rotate(90)" x="0" y="3.6" font-family="'Liberation Sans', sans-serif" font-size="8.6" fill="#ffa500" textLength="4.50" lengthAdjust="spacingAndGlyphs">{</text>
<text transform="translate(456.90,280.75) rotate(90)" x="0" y="3.2" font-family="'Liberation Sans', sans-serif" font-size="8.8" fill="#4169e1" textLength="13.50" lengthAdjust="spacingAndGlyphs">OII</text>
<text transform="translate(456.90,301.50) rotate(90)" x="0" y="3.6" font-family="'Liberation Sans', sans-serif" font-size="8.6" fill="#4169e1" textLength="4.50" lengthAdjust="spacingAndGlyphs">{</text>
<rect x="454.4" y="450" width="17.600000000000023" height="6" fill="#ff0000"/>
<text x="477.40" y="455.80" font-family="'Liberation Sans', sans-serif" font-size="8.0" fill="#333" textLength="18.20" lengthAdjust="spacingAndGlyphs" stroke="#333" stroke-width="0.09" >Lyα</text>
<rect x="508" y="450" width="18" height="6" fill="#008000"/>
<text x="531.40" y="455.80" font-family="'Liberation Sans', sans-serif" font-size="8.0" fill="#333" textLength="13.20" lengthAdjust="spacingAndGlyphs" stroke="#333" stroke-width="0.09" >OII</text>
<rect x="561" y="450" width="17" height="6" fill="#8a2be2"/>
<text x="583.80" y="455.80" font-family="'Liberation Sans', sans-serif" font-size="8.0" fill="#333" textLength="14.30" lengthAdjust="spacingAndGlyphs" stroke="#333" stroke-width="0.09" >CIV</text>
<rect x="616" y="450" width="17" height="6" fill="#800080"/>
<text x="638.40" y="455.80" font-family="'Liberation Sans', sans-serif" font-size="8.0" fill="#333" textLength="14.20" lengthAdjust="spacingAndGlyphs" stroke="#333" stroke-width="0.09" >CIII</text>
<rect x="668" y="450" width="17" height="6" fill="#ff00ff"/>
<text x="690.40" y="455.80" font-family="'Liberation Sans', sans-serif" font-size="8.0" fill="#333" textLength="17.70" lengthAdjust="spacingAndGlyphs" stroke="#333" stroke-width="0.09" >MgII</text>
<rect x="723.6" y="450" width="17.0" height="6" fill="#4169e1"/>
<text x="746.40" y="455.80" font-family="'Liberation Sans', sans-serif" font-size="8.0" fill="#333" textLength="13.20" lengthAdjust="spacingAndGlyphs" stroke="#333" stroke-width="0.09" >Hγ</text>
<rect x="774" y="450" width="17" height="6" fill="#ffa500"/>
<text x="797.00" y="455.80" font-family="'Liberation Sans', sans-serif" font-size="8.0" fill="#333" textLength="16.60" lengthAdjust="spacingAndGlyphs" stroke="#333" stroke-width="0.09" >HeII</text>
<rect x="829" y="450" width="17" height="6" fill="#87ceeb"/>
<text x="851.40" y="455.80" font-family="'Liberation Sans', sans-serif" font-size="8.0" fill="#333" textLength="28.20" lengthAdjust="spacingAndGlyphs" stroke="#333" stroke-width="0.09" >(K)CaII</text>
<rect x="895" y="450" width="17" height="6" fill="#87ceeb"/>
<text x="917.40" y="455.80" font-family="'Liberation Sans', sans-serif" font-size="8.0" fill="#333" textLength="28.20" lengthAdjust="spacingAndGlyphs" stroke="#333" stroke-width="0.09" >(H)CaII</text>
<text x="69.90" y="498.75" font-family="'Liberation Mono', monospace" font-size="12.9" fill="#000" textLength="479.88" lengthAdjust="spacingAndGlyphs" stroke="#000" stroke-width="0.15">HSC-DEX : Possible Matches = 1 (within +/- 3")  P(LAE)/P(OII):</text>
<text x="561.80" y="498.30" font-family="'Liberation Sans', sans-serif" font-size="13.3" fill="#000" textLength="35.80" lengthAdjust="spacingAndGlyphs" stroke="#000" stroke-width="0.15" >0.027</text>
<text x="603.20" y="493.60" font-family="'Liberation Sans', sans-serif" font-size="9" fill="#000" textLength="25.60" lengthAdjust="spacingAndGlyphs" stroke="#000" stroke-width="0.15" >0.038</text>
<text x="603.20" y="501.70" font-family="'Liberation Sans', sans-serif" font-size="9" fill="#000" textLength="25.60" lengthAdjust="spacingAndGlyphs" stroke="#000" stroke-width="0.15" >0.021</text>
<text x="638.40" y="498.75" font-family="'Liberation Mono', monospace" font-size="12.9" fill="#000" textLength="20.20" lengthAdjust="spacingAndGlyphs" stroke="#000" stroke-width="0.15" >(r)</text>
<clipPath id="cp1"><rect x="69.7" y="532.8" width="148.7" height="147.70000000000005"/></clipPath>
<g clip-path="url(#cp1)">
<rect x="69.7" y="532.8" width="148.7" height="147.70000000000005" fill="#f7f7f7"/>
<rect x="69.7" y="532.8" width="148.7" height="147.70000000000005" fill="#000" filter="url(#fnFine)" opacity="0.04"/>
<radialGradient id="blob1"><stop offset="0" stop-color="#000" stop-opacity="1"/><stop offset="0.35" stop-color="#000" stop-opacity="0.9"/><stop offset="0.65" stop-color="#000" stop-opacity="0.35"/><stop offset="1" stop-color="#000" stop-opacity="0"/></radialGradient>
<ellipse cx="160" cy="588" rx="26" ry="18" transform="rotate(-50 160 588)" fill="url(#blob1)" opacity="0.4"/>
<ellipse cx="126" cy="636" rx="26" ry="18" transform="rotate(-50 126 636)" fill="url(#blob1)" opacity="0.3"/>
<ellipse cx="147" cy="613" rx="34" ry="23" transform="rotate(-58 147 613)" fill="url(#blob1)"/>
<ellipse cx="146.5" cy="615" rx="11" ry="17" fill="#000" opacity="0.85" filter="url(#blur2)"/>
<circle cx="98.7" cy="572" r="11.6" fill="none" stroke="#5a5a5a" stroke-width="1.1"/>
<circle cx="122.5" cy="568.7" r="11.6" fill="none" stroke="#5a5a5a" stroke-width="1.1"/>
<circle cx="145.7" cy="562.5" r="11.6" fill="none" stroke="#5a5a5a" stroke-width="1.1"/>
<circle cx="168.9" cy="557" r="11.6" fill="none" stroke="#5a5a5a" stroke-width="1.1"/>
<circle cx="186" cy="576.2" r="11.6" fill="none" stroke="#5a5a5a" stroke-width="1.1"/>
<circle cx="162.1" cy="581" r="11.6" fill="none" stroke="#5a5a5a" stroke-width="1.1"/>
<circle cx="114.4" cy="589.8" r="11.6" fill="none" stroke="#5a5a5a" stroke-width="1.1"/>
<circle cx="91.2" cy="596" r="11.6" fill="none" stroke="#5a5a5a" stroke-width="1.1"/>
<circle cx="177.8" cy="599.4" r="11.6" fill="none" stroke="#5a5a5a" stroke-width="1.1"/>
<circle cx="106.8" cy="613" r="11.6" fill="none" stroke="#5a5a5a" stroke-width="1.1"/>
<circle cx="171" cy="622" r="11.6" fill="none" stroke="#5a5a5a" stroke-width="1.1"/>
<circle cx="194.8" cy="617.5" r="11.6" fill="none" stroke="#5a5a5a" stroke-width="1.1"/>
<circle cx="99.3" cy="636.5" r="11.6" fill="none" stroke="#5a5a5a" stroke-width="1.1"/>
<circle cx="123.2" cy="630.5" r="11.6" fill="none" stroke="#5a5a5a" stroke-width="1.1"/>
<circle cx="162.8" cy="643.3" r="11.6" fill="none" stroke="#5a5a5a" stroke-width="1.1"/>
<circle cx="186" cy="639.6" r="11.6" fill="none" stroke="#5a5a5a" stroke-width="1.1"/>
<circle cx="140.3" cy="651.2" r="11.6" fill="none" stroke="#5a5a5a" stroke-width="1.1"/>
<circle cx="115.7" cy="655.3" r="11.6" fill="none" stroke="#5a5a5a" stroke-width="1.1"/>
<circle cx="98.2" cy="637.5" r="12.4" fill="none" stroke="#777" stroke-width="1.4" stroke-dasharray="2,1"/>
<circle cx="115.2" cy="656.8" r="12.4" fill="none" stroke="#777" stroke-width="1.4" stroke-dasharray="2,1"/>
<circle cx="140.5" cy="652.5" r="12.4" fill="none" stroke="#777" stroke-width="1.4" stroke-dasharray="2,1"/>
<circle cx="138.2" cy="585.7" r="11.6" fill="none" stroke="#ff0000" stroke-width="1.3"/>
<circle cx="154.6" cy="603.4" r="11.6" fill="none" stroke="#0000ff" stroke-width="1.3"/>
<circle cx="130.7" cy="609.6" r="11.6" fill="none" stroke="#00ff00" stroke-width="1.3"/>
<circle cx="145.7" cy="626.6" r="11.6" fill="none" stroke="#ffa500" stroke-width="1.3"/>
<rect x="94.6" y="557.7" width="98.9" height="98" fill="none" stroke="#ff0000" stroke-width="1.3"/>
<line x1="140.5" y1="606.6" x2="147.5" y2="606.6" stroke="#ff0000" stroke-width="1.1"/>
<line x1="144" y1="603" x2="144" y2="610" stroke="#ff0000" stroke-width="1.1"/>
</g>
<text x="139.90" y="545.50" font-family="'Liberation Sans', sans-serif" font-size="10.5" fill="#ff0000" textLength="9.20" lengthAdjust="spacingAndGlyphs" stroke="#ff0000" stroke-width="0.15" >N</text>
<text x="76.60" y="610.20" font-family="'Liberation Sans', sans-serif" font-size="10.5" fill="#ff0000" textLength="7.50" lengthAdjust="spacingAndGlyphs" stroke="#ff0000" stroke-width="0.15" >E</text>
<rect x="69.7" y="532.8" width="148.7" height="147.70000000000005" fill="none" stroke="#333" stroke-width="1.2"/>
<text x="97.50" y="525.50" font-family="'Liberation Sans', sans-serif" font-size="12.3" fill="#111" textLength="93.10" lengthAdjust="spacingAndGlyphs" stroke="#111" stroke-width="0.15" >Fiber Positions</text>
<line x1="66.2" y1="541.1" x2="69.7" y2="541.1" stroke="#333" stroke-width="1"/>
<text x="55.20" y="544.90" font-family="'Liberation Sans', sans-serif" font-size="11" fill="#111" textLength="6.70" lengthAdjust="spacingAndGlyphs" stroke="#111" stroke-width="0.15" >4</text>
<line x1="66.2" y1="574.0" x2="69.7" y2="574.0" stroke="#333" stroke-width="1"/>
<text x="55.20" y="577.80" font-family="'Liberation Sans', sans-serif" font-size="11" fill="#111" textLength="6.70" lengthAdjust="spacingAndGlyphs" stroke="#111" stroke-width="0.15" >2</text>
<line x1="66.2" y1="606.6" x2="69.7" y2="606.6" stroke="#333" stroke-width="1"/>
<text x="55.20" y="610.40" font-family="'Liberation Sans', sans-serif" font-size="11" fill="#111" textLength="6.70" lengthAdjust="spacingAndGlyphs" stroke="#111" stroke-width="0.15" >0</text>
<line x1="66.2" y1="639.3" x2="69.7" y2="639.3" stroke="#333" stroke-width="1"/>
<text x="47.30" y="643.10" font-family="'Liberation Sans', sans-serif" font-size="11" fill="#111" textLength="14.60" lengthAdjust="spacingAndGlyphs" stroke="#111" stroke-width="0.15" >−2</text>
<line x1="66.2" y1="672.2" x2="69.7" y2="672.2" stroke="#333" stroke-width="1"/>
<text x="47.30" y="676.00" font-family="'Liberation Sans', sans-serif" font-size="11" fill="#111" textLength="14.60" lengthAdjust="spacingAndGlyphs" stroke="#111" stroke-width="0.15" >−4</text>
<line x1="78.68" y1="680.5" x2="78.68" y2="684.0" stroke="#333" stroke-width="1"/>
<text x="68.58" y="695.60" font-family="'Liberation Sans', sans-serif" font-size="11" fill="#111" textLength="14.60" lengthAdjust="spacingAndGlyphs" stroke="#111" stroke-width="0.15" >−4</text>
<line x1="111.34" y1="680.5" x2="111.34" y2="684.0" stroke="#333" stroke-width="1"/>
<text x="101.24" y="695.60" font-family="'Liberation Sans', sans-serif" font-size="11" fill="#111" textLength="14.60" lengthAdjust="spacingAndGlyphs" stroke="#111" stroke-width="0.15" >−2</text>
<line x1="144.00" y1="680.5" x2="144.00" y2="684.0" stroke="#333" stroke-width="1"/>
<text x="140.65" y="695.60" font-family="'Liberation Sans', sans-serif" font-size="11" fill="#111" textLength="6.70" lengthAdjust="spacingAndGlyphs" stroke="#111" stroke-width="0.15" >0</text>
<line x1="176.66" y1="680.5" x2="176.66" y2="684.0" stroke="#333" stroke-width="1"/>
<text x="173.31" y="695.60" font-family="'Liberation Sans', sans-serif" font-size="11" fill="#111" textLength="6.70" lengthAdjust="spacingAndGlyphs" stroke="#111" stroke-width="0.15" >2</text>
<line x1="209.32" y1="680.5" x2="209.32" y2="684.0" stroke="#333" stroke-width="1"/>
<text x="205.97" y="695.60" font-family="'Liberation Sans', sans-serif" font-size="11" fill="#111" textLength="6.70" lengthAdjust="spacingAndGlyphs" stroke="#111" stroke-width="0.15" >4</text>
<text x="123.30" y="706.10" font-family="'Liberation Sans', sans-serif" font-size="10.3" fill="#111" textLength="41.20" lengthAdjust="spacingAndGlyphs" stroke="#111" stroke-width="0.15" >arcsecs</text>
<clipPath id="cp2"><rect x="255.3" y="533.0" width="148.39999999999998" height="147.5"/></clipPath>
<g clip-path="url(#cp2)"><g filter="url(#blur2)">
<rect x="245.3" y="523.0" width="168.39999999999998" height="167.5" fill="#2c728e"/>
<polygon points="247.2,525.2 320.3,525.2 306.3,557.9 298.5,573.4 293.8,598.3 247.2,598.3" fill="#33638d"/>
<polygon points="247.2,556.3 278.3,559.4 290.7,579.6 286.1,598.3 247.2,599.8" fill="#3e4a89"/>
<polygon points="247.2,564.1 264.3,562.5 273.6,573.4 270.5,585.8 247.2,587.4" fill="#440154"/>
<polygon points="247.2,599.8 273.6,598.3 293.8,607.6 301.6,620.0 300.1,644.9 286.1,644.9 247.2,629.3" fill="#440154"/>
<polygon points="247.2,629.3 286.1,644.9 300.1,644.9 301.6,655.7 247.2,644.9" fill="#21918c"/>
<polygon points="247.2,644.9 278.3,655.7 276.8,660.4 247.2,652.6" fill="#440154"/>
<polygon points="247.2,652.6 301.6,660.4 354.4,672.8 354.4,688.4 247.2,688.4" fill="#414487"/>
<polygon points="363.8,525.2 410.4,525.2 410.4,582.7 394.8,573.4 382.4,554.8 366.9,542.3" fill="#440154"/>
<polygon points="393.3,571.8 410.4,579.6 410.4,632.4 391.7,624.7 387.1,592.0" fill="#433e85"/>
<polygon points="295.4,556.3 320.3,542.3 373.1,545.4 391.7,579.6 391.7,620.0 370.0,634.0 335.8,630.9 306.3,651.1 297.0,641.8 295.4,606.0" fill="#26828e"/>
<polygon points="306.3,557.9 317.2,542.3 360.7,547.0 354.4,570.3 348.2,582.7 373.1,598.3 373.1,629.3 342.0,629.3 320.3,632.4 301.6,626.2 304.7,598.3" fill="#35b779"/>
<polygon points="309.4,554.8 317.2,545.4 359.1,550.1 349.8,571.8 343.6,584.3 369.2,598.3 370.0,627.8 335.8,626.2 314.0,621.6 309.4,598.3" fill="#6ccd5a"/>
<polygon points="316.4,547.0 356.0,548.5 346.7,571.8 340.5,584.3 364.5,599.8 366.9,624.7 346.7,622.3 328.0,619.2 315.6,612.2 312.5,579.6 309.4,567.2" fill="#fde725"/>
<polygon points="300.1,620.0 329.6,624.7 332.7,641.8 328.0,655.7 306.3,655.7 298.5,641.8" fill="#24a085"/>
<polygon points="332.7,630.9 368.4,635.5 368.4,662.0 351.3,669.7 331.1,655.7" fill="#440154"/>
<polygon points="351.3,669.7 368.4,662.0 373.1,640.2 410.4,632.4 410.4,666.6 391.7,675.9 363.8,688.4 354.4,688.4" fill="#21918c"/>
<polygon points="366.9,648.0 394.8,638.7 410.4,641.8 410.4,657.3 379.3,665.1 370.0,662.0" fill="#7ad151"/>
<polygon points="379.3,644.9 397.9,641.8 399.5,654.2 382.4,655.7" fill="#b5de2b"/>
<polygon points="388.6,672.8 410.4,662.0 410.4,688.4 391.7,688.4" fill="#440154"/>
</g></g>
<rect x="280.3" y="557.5" width="98.6" height="98.2" fill="none" stroke="#ff0000" stroke-width="1.3"/>
<line x1="329.2" y1="569.8" x2="329.2" y2="600.5" stroke="#ff0000" stroke-width="1.3"/>
<line x1="329.2" y1="613.6" x2="329.2" y2="644.3" stroke="#ff0000" stroke-width="1.3"/>
<line x1="291.8" y1="606.6" x2="321.9" y2="606.6" stroke="#ff0000" stroke-width="1.3"/>
<line x1="337.5" y1="606.6" x2="366.9" y2="606.6" stroke="#ff0000" stroke-width="1.3"/>
<text x="324.80" y="545.20" font-family="'Liberation Sans', sans-serif" font-size="10.5" fill="#ff0000" textLength="9.20" lengthAdjust="spacingAndGlyphs" stroke="#ff0000" stroke-width="0.15" >N</text>
<text x="262.10" y="610.20" font-family="'Liberation Sans', sans-serif" font-size="10.5" fill="#ff0000" textLength="7.50" lengthAdjust="spacingAndGlyphs" stroke="#ff0000" stroke-width="0.15" >E</text>
<rect x="255.3" y="533.0" width="148.39999999999998" height="147.5" fill="none" stroke="#333" stroke-width="1.2"/>
<text x="287.80" y="525.50" font-family="'Liberation Sans', sans-serif" font-size="12.3" fill="#111" textLength="83.10" lengthAdjust="spacingAndGlyphs" stroke="#111" stroke-width="0.15" >Lineflux Map</text>
<line x1="251.8" y1="541.1" x2="255.3" y2="541.1" stroke="#333" stroke-width="1"/>
<text x="240.80" y="544.90" font-family="'Liberation Sans', sans-serif" font-size="11" fill="#111" textLength="6.70" lengthAdjust="spacingAndGlyphs" stroke="#111" stroke-width="0.15" >4</text>
<line x1="251.8" y1="574.0" x2="255.3" y2="574.0" stroke="#333" stroke-width="1"/>
<text x="240.80" y="577.80" font-family="'Liberation Sans', sans-serif" font-size="11" fill="#111" textLength="6.70" lengthAdjust="spacingAndGlyphs" stroke="#111" stroke-width="0.15" >2</text>
<line x1="251.8" y1="606.6" x2="255.3" y2="606.6" stroke="#333" stroke-width="1"/>
<text x="240.80" y="610.40" font-family="'Liberation Sans', sans-serif" font-size="11" fill="#111" textLength="6.70" lengthAdjust="spacingAndGlyphs" stroke="#111" stroke-width="0.15" >0</text>
<line x1="251.8" y1="639.3" x2="255.3" y2="639.3" stroke="#333" stroke-width="1"/>
<text x="232.90" y="643.10" font-family="'Liberation Sans', sans-serif" font-size="11" fill="#111" textLength="14.60" lengthAdjust="spacingAndGlyphs" stroke="#111" stroke-width="0.15" >−2</text>
<line x1="251.8" y1="672.2" x2="255.3" y2="672.2" stroke="#333" stroke-width="1"/>
<text x="232.90" y="676.00" font-family="'Liberation Sans', sans-serif" font-size="11" fill="#111" textLength="14.60" lengthAdjust="spacingAndGlyphs" stroke="#111" stroke-width="0.15" >−4</text>
<line x1="263.88" y1="680.5" x2="263.88" y2="684.0" stroke="#333" stroke-width="1"/>
<text x="253.78" y="695.60" font-family="'Liberation Sans', sans-serif" font-size="11" fill="#111" textLength="14.60" lengthAdjust="spacingAndGlyphs" stroke="#111" stroke-width="0.15" >−4</text>
<line x1="296.54" y1="680.5" x2="296.54" y2="684.0" stroke="#333" stroke-width="1"/>
<text x="286.44" y="695.60" font-family="'Liberation Sans', sans-serif" font-size="11" fill="#111" textLength="14.60" lengthAdjust="spacingAndGlyphs" stroke="#111" stroke-width="0.15" >−2</text>
<line x1="329.20" y1="680.5" x2="329.20" y2="684.0" stroke="#333" stroke-width="1"/>
<text x="325.85" y="695.60" font-family="'Liberation Sans', sans-serif" font-size="11" fill="#111" textLength="6.70" lengthAdjust="spacingAndGlyphs" stroke="#111" stroke-width="0.15" >0</text>
<line x1="361.86" y1="680.5" x2="361.86" y2="684.0" stroke="#333" stroke-width="1"/>
<text x="358.51" y="695.60" font-family="'Liberation Sans', sans-serif" font-size="11" fill="#111" textLength="6.70" lengthAdjust="spacingAndGlyphs" stroke="#111" stroke-width="0.15" >2</text>
<line x1="394.52" y1="680.5" x2="394.52" y2="684.0" stroke="#333" stroke-width="1"/>
<text x="391.17" y="695.60" font-family="'Liberation Sans', sans-serif" font-size="11" fill="#111" textLength="6.70" lengthAdjust="spacingAndGlyphs" stroke="#111" stroke-width="0.15" >4</text>
<text x="278.30" y="706.40" font-family="'Liberation Sans', sans-serif" font-size="10.3" fill="#111" textLength="101.50" lengthAdjust="spacingAndGlyphs" stroke="#111" stroke-width="0.15" >s/b: 3.49 +/- 0.100</text>
<clipPath id="cp3"><rect x="440.3" y="532.7" width="148.40000000000003" height="147.79999999999995"/></clipPath>
<g clip-path="url(#cp3)">
<rect x="440.3" y="532.7" width="148.40000000000003" height="147.79999999999995" fill="#f8f8f8"/>
<rect x="440.3" y="532.7" width="148.40000000000003" height="147.79999999999995" fill="#000" filter="url(#fnFine)" opacity="0.04"/>
<radialGradient id="blob3"><stop offset="0" stop-color="#000" stop-opacity="1"/><stop offset="0.2" stop-color="#000" stop-opacity="0.85"/><stop offset="0.4" stop-color="#000" stop-opacity="0.45"/><stop offset="0.7" stop-color="#000" stop-opacity="0.15"/><stop offset="1" stop-color="#000" stop-opacity="0"/></radialGradient>
<ellipse cx="518" cy="609" rx="48" ry="30" transform="rotate(-58 518 609)" fill="url(#blob3)"/>
<ellipse cx="516.5" cy="611" rx="12" ry="13" fill="#000" filter="url(#blur2)"/>
</g>
<ellipse cx="518.3" cy="612.6" rx="53" ry="36" transform="rotate(-55 518.3 612.6)" fill="none" stroke="#ffd700" stroke-width="1.3"/>
<rect x="465.3" y="557.5" width="98.6" height="98.2" fill="none" stroke="#ff0000" stroke-width="1.3"/>
<line x1="514.5" y1="569.1" x2="514.5" y2="644.3" stroke="#ff0000" stroke-width="1.3"/>
<line x1="477.5" y1="606.6" x2="551.9" y2="606.6" stroke="#ff0000" stroke-width="1.3"/>
<rect x="510.6" y="606.6" width="13.3" height="13.0" fill="none" stroke="#0000ff" stroke-width="1.3"/>
<text x="510.00" y="545.20" font-family="'Liberation Sans', sans-serif" font-size="10.5" fill="#ff0000" textLength="9.20" lengthAdjust="spacingAndGlyphs" stroke="#ff0000" stroke-width="0.15" >N</text>
<text x="447.10" y="610.20" font-family="'Liberation Sans', sans-serif" font-size="10.5" fill="#ff0000" textLength="7.50" lengthAdjust="spacingAndGlyphs" stroke="#ff0000" stroke-width="0.15" >E</text>
<rect x="440.3" y="532.7" width="148.40000000000003" height="147.79999999999995" fill="none" stroke="#333" stroke-width="1.2"/>
<text x="476.90" y="525.50" font-family="'Liberation Sans', sans-serif" font-size="12.3" fill="#111" textLength="75.60" lengthAdjust="spacingAndGlyphs" stroke="#111" stroke-width="0.15" >HSC(26.2) r</text>
<line x1="436.8" y1="541.1" x2="440.3" y2="541.1" stroke="#333" stroke-width="1"/>
<text x="425.80" y="544.90" font-family="'Liberation Sans', sans-serif" font-size="11" fill="#111" textLength="6.70" lengthAdjust="spacingAndGlyphs" stroke="#111" stroke-width="0.15" >4</text>
<line x1="436.8" y1="574.0" x2="440.3" y2="574.0" stroke="#333" stroke-width="1"/>
<text x="425.80" y="577.80" font-family="'Liberation Sans', sans-serif" font-size="11" fill="#111" textLength="6.70" lengthAdjust="spacingAndGlyphs" stroke="#111" stroke-width="0.15" >2</text>
<line x1="436.8" y1="606.6" x2="440.3" y2="606.6" stroke="#333" stroke-width="1"/>
<text x="425.80" y="610.40" font-family="'Liberation Sans', sans-serif" font-size="11" fill="#111" textLength="6.70" lengthAdjust="spacingAndGlyphs" stroke="#111" stroke-width="0.15" >0</text>
<line x1="436.8" y1="639.3" x2="440.3" y2="639.3" stroke="#333" stroke-width="1"/>
<text x="417.90" y="643.10" font-family="'Liberation Sans', sans-serif" font-size="11" fill="#111" textLength="14.60" lengthAdjust="spacingAndGlyphs" stroke="#111" stroke-width="0.15" >−2</text>
<line x1="436.8" y1="672.2" x2="440.3" y2="672.2" stroke="#333" stroke-width="1"/>
<text x="417.90" y="676.00" font-family="'Liberation Sans', sans-serif" font-size="11" fill="#111" textLength="14.60" lengthAdjust="spacingAndGlyphs" stroke="#111" stroke-width="0.15" >−4</text>
<line x1="449.08" y1="680.5" x2="449.08" y2="684.0" stroke="#333" stroke-width="1"/>
<text x="438.98" y="695.60" font-family="'Liberation Sans', sans-serif" font-size="11" fill="#111" textLength="14.60" lengthAdjust="spacingAndGlyphs" stroke="#111" stroke-width="0.15" >−4</text>
<line x1="481.74" y1="680.5" x2="481.74" y2="684.0" stroke="#333" stroke-width="1"/>
<text x="471.64" y="695.60" font-family="'Liberation Sans', sans-serif" font-size="11" fill="#111" textLength="14.60" lengthAdjust="spacingAndGlyphs" stroke="#111" stroke-width="0.15" >−2</text>
<line x1="514.40" y1="680.5" x2="514.40" y2="684.0" stroke="#333" stroke-width="1"/>
<text x="511.05" y="695.60" font-family="'Liberation Sans', sans-serif" font-size="11" fill="#111" textLength="6.70" lengthAdjust="spacingAndGlyphs" stroke="#111" stroke-width="0.15" >0</text>
<line x1="547.06" y1="680.5" x2="547.06" y2="684.0" stroke="#333" stroke-width="1"/>
<text x="543.71" y="695.60" font-family="'Liberation Sans', sans-serif" font-size="11" fill="#111" textLength="6.70" lengthAdjust="spacingAndGlyphs" stroke="#111" stroke-width="0.15" >2</text>
<line x1="579.72" y1="680.5" x2="579.72" y2="684.0" stroke="#333" stroke-width="1"/>
<text x="576.37" y="695.60" font-family="'Liberation Sans', sans-serif" font-size="11" fill="#111" textLength="6.70" lengthAdjust="spacingAndGlyphs" stroke="#111" stroke-width="0.15" >4</text>
<text x="454.40" y="706.40" font-family="'Liberation Sans', sans-serif" font-size="10.3" fill="#111" textLength="119.90" lengthAdjust="spacingAndGlyphs" stroke="#111" stroke-width="0.15" >m:19.2  re:2.7"  s:0.4"</text>
<text x="462.60" y="718.70" font-family="'Liberation Sans', sans-serif" font-size="10.3" fill="#111" textLength="106.90" lengthAdjust="spacingAndGlyphs" stroke="#111" stroke-width="0.15" >EWr: 0, PLAE: 0.027</text>
<text x="69.90" y="786.00" font-family="'Liberation Mono', monospace" font-size="12.9" fill="#000" textLength="77.40" lengthAdjust="spacingAndGlyphs" stroke="#000" stroke-width="0.15">Separation</text>
<text x="69.90" y="800.50" font-family="'Liberation Mono', monospace" font-size="12.9" fill="#000" textLength="85.14" lengthAdjust="spacingAndGlyphs" stroke="#000" stroke-width="0.15">Match score</text>
<text x="69.90" y="815.30" font-family="'Liberation Mono', monospace" font-size="12.9" fill="#000" textLength="54.18" lengthAdjust="spacingAndGlyphs" stroke="#000" stroke-width="0.15">RA, Dec</text>
<text x="69.90" y="830.20" font-family="'Liberation Mono', monospace" font-size="12.9" fill="#000" textLength="46.44" lengthAdjust="spacingAndGlyphs" stroke="#000" stroke-width="0.15">Spec z</text>
<text x="69.90" y="844.60" font-family="'Liberation Mono', monospace" font-size="12.9" fill="#000" textLength="54.18" lengthAdjust="spacingAndGlyphs" stroke="#000" stroke-width="0.15">Photo z</text>
<text x="69.90" y="859.20" font-family="'Liberation Mono', monospace" font-size="12.9" fill="#000" textLength="116.10" lengthAdjust="spacingAndGlyphs" stroke="#000" stroke-width="0.15">Est LyA rest-EW</text>
<text x="69.90" y="873.80" font-family="'Liberation Mono', monospace" font-size="12.9" fill="#000" textLength="23.22" lengthAdjust="spacingAndGlyphs" stroke="#000" stroke-width="0.15">mag</text>
<text x="69.90" y="888.60" font-family="'Liberation Mono', monospace" font-size="12.9" fill="#000" textLength="100.62" lengthAdjust="spacingAndGlyphs" stroke="#000" stroke-width="0.15">P(LAE)/P(OII)</text>
<text x="286.70" y="779.10" font-family="'Liberation Mono', monospace" font-size="12.9" fill="#0000ff" textLength="69.66" lengthAdjust="spacingAndGlyphs" stroke="#0000ff" stroke-width="0.15">0.408431"</text>
<text x="286.70" y="793.50" font-family="'Liberation Mono', monospace" font-size="12.9" fill="#0000ff" textLength="38.70" lengthAdjust="spacingAndGlyphs" stroke="#0000ff" stroke-width="0.15">1.000</text>
<text x="286.70" y="808.50" font-family="'Liberation Mono', monospace" font-size="12.9" fill="#0000ff" textLength="162.54" lengthAdjust="spacingAndGlyphs" stroke="#0000ff" stroke-width="0.15">215.769622, 50.964718</text>
<text x="286.70" y="822.40" font-family="'Liberation Mono', monospace" font-size="12.9" fill="#0000ff" textLength="23.22" lengthAdjust="spacingAndGlyphs" stroke="#0000ff" stroke-width="0.15">N/A</text>
<text x="286.70" y="837.60" font-family="'Liberation Mono', monospace" font-size="12.9" fill="#0000ff" textLength="23.22" lengthAdjust="spacingAndGlyphs" stroke="#0000ff" stroke-width="0.15">N/A</text>
<text x="286.90" y="854.00" font-family="'Liberation Mono', monospace" font-size="12.9" fill="#0000ff" textLength="97.90" lengthAdjust="spacingAndGlyphs" stroke="#0000ff" stroke-width="0.15" >0.67(±0.18)Å</text>
<text x="286.70" y="869.90" font-family="'Liberation Mono', monospace" font-size="12.9" fill="#0000ff" textLength="147.06" lengthAdjust="spacingAndGlyphs" stroke="#0000ff" stroke-width="0.15">19.46(19.20,19.79)R</text>
<text x="286.90" y="886.40" font-family="'Liberation Sans', sans-serif" font-size="13.3" fill="#0000ff" textLength="36.20" lengthAdjust="spacingAndGlyphs" stroke="#0000ff" stroke-width="0.15" >0.028</text>
<text x="327.90" y="881.20" font-family="'Liberation Sans', sans-serif" font-size="9" fill="#0000ff" textLength="25.70" lengthAdjust="spacingAndGlyphs" stroke="#0000ff" stroke-width="0.15" >0.038</text>
<text x="327.90" y="889.80" font-family="'Liberation Sans', sans-serif" font-size="9" fill="#0000ff" textLength="25.70" lengthAdjust="spacingAndGlyphs" stroke="#0000ff" stroke-width="0.15" >0.022</text>
<text x="938.30" y="821.10" font-family="'Liberation Mono', monospace" font-size="12.9" fill="#000" textLength="201.24" lengthAdjust="spacingAndGlyphs" stroke="#000" stroke-width="0.15">Phot z plot not available.</text>
</svg></body></html>
